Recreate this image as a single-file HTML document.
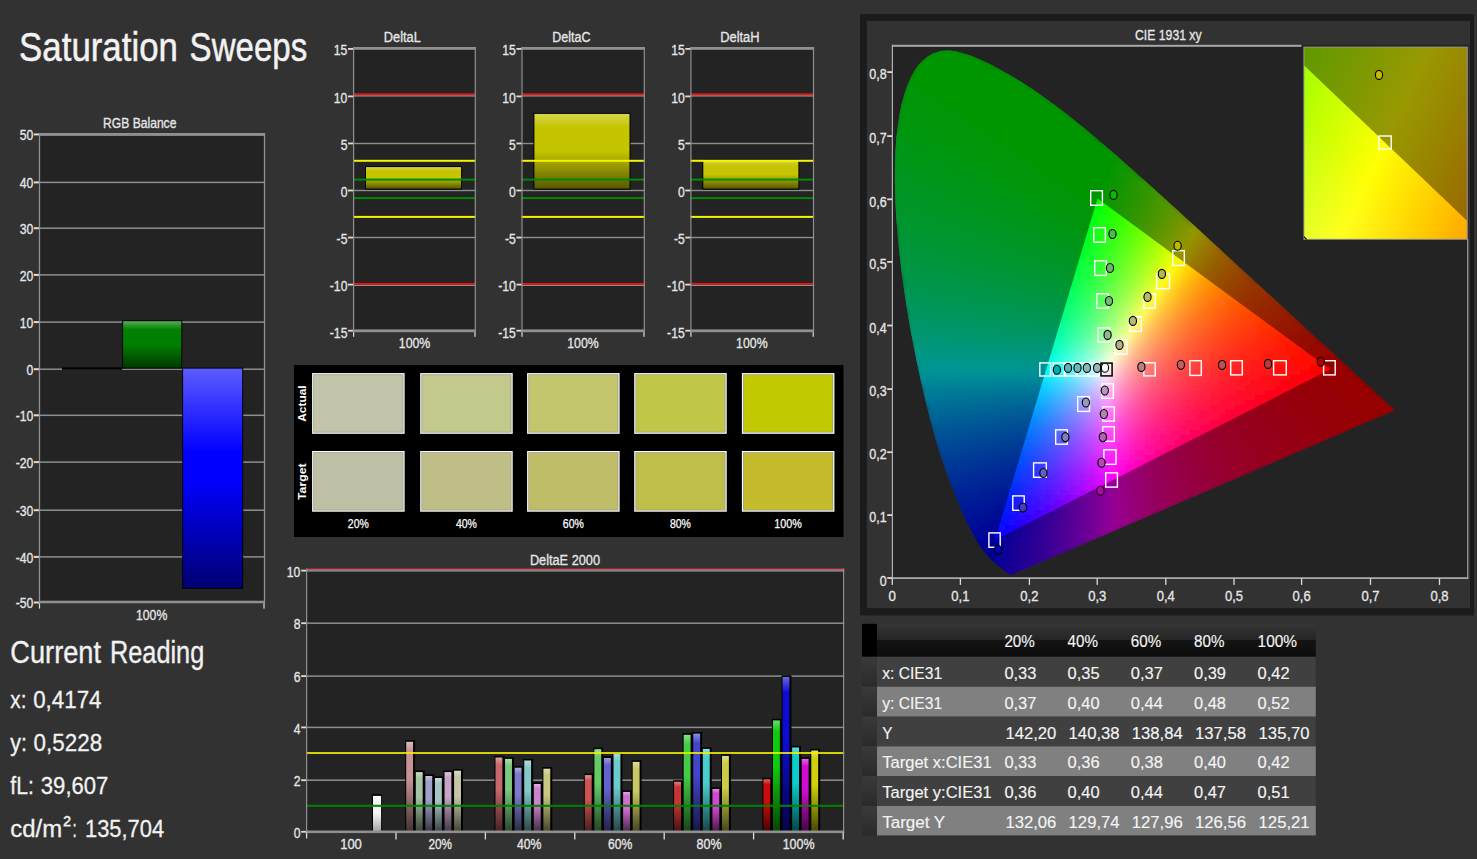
<!DOCTYPE html>
<html lang="en"><head><meta charset="utf-8"><title>Saturation Sweeps</title>
<style>html,body{margin:0;padding:0;background:#323232;overflow:hidden}svg{display:block}text{font-family:"Liberation Sans", sans-serif;white-space:pre}</style></head>
<body>
<svg width="1477" height="859" viewBox="0 0 1477 859">
<defs>
<linearGradient id="g1" x1="0" y1="0" x2="0" y2="1"><stop offset="0" stop-color="#59ac59"/><stop offset="0.18" stop-color="#008000"/><stop offset="0.5" stop-color="#008000"/><stop offset="1" stop-color="#003a00"/></linearGradient>
<linearGradient id="g2" x1="0" y1="0" x2="0" y2="1"><stop offset="0" stop-color="#5c5cff"/><stop offset="0.38" stop-color="#0000ff"/><stop offset="0.5" stop-color="#0000ff"/><stop offset="1" stop-color="#000073"/></linearGradient>
<linearGradient id="g3" x1="0" y1="0" x2="0" y2="1"><stop offset="0" stop-color="#d6d64c"/><stop offset="0.18" stop-color="#c4c400"/><stop offset="0.5" stop-color="#c4c400"/><stop offset="1" stop-color="#585800"/></linearGradient>
<linearGradient id="g4" x1="0" y1="0" x2="0" y2="1"><stop offset="0" stop-color="#d6d64c"/><stop offset="0.18" stop-color="#c4c400"/><stop offset="0.5" stop-color="#c4c400"/><stop offset="1" stop-color="#585800"/></linearGradient>
<linearGradient id="g5" x1="0" y1="0" x2="0" y2="1"><stop offset="0" stop-color="#d6d64c"/><stop offset="0.18" stop-color="#c4c400"/><stop offset="0.5" stop-color="#c4c400"/><stop offset="1" stop-color="#585800"/></linearGradient>
<linearGradient id="g6" x1="0" y1="0" x2="0" y2="1"><stop offset="0" stop-color="#f7f7f7"/><stop offset="0.1" stop-color="#f4f4f4"/><stop offset="0.5" stop-color="#f4f4f4"/><stop offset="1" stop-color="#a1a1a1"/></linearGradient>
<linearGradient id="g7" x1="0" y1="0" x2="0" y2="1"><stop offset="0" stop-color="#dcbbbb"/><stop offset="0.1" stop-color="#c69292"/><stop offset="0.42" stop-color="#c69292"/><stop offset="1" stop-color="#433232"/></linearGradient>
<linearGradient id="g8" x1="0" y1="0" x2="0" y2="1"><stop offset="0" stop-color="#c7dcc7"/><stop offset="0.1" stop-color="#a4c6a4"/><stop offset="0.42" stop-color="#a4c6a4"/><stop offset="1" stop-color="#384338"/></linearGradient>
<linearGradient id="g9" x1="0" y1="0" x2="0" y2="1"><stop offset="0" stop-color="#c4c4dd"/><stop offset="0.1" stop-color="#a0a0c8"/><stop offset="0.42" stop-color="#a0a0c8"/><stop offset="1" stop-color="#363644"/></linearGradient>
<linearGradient id="g10" x1="0" y1="0" x2="0" y2="1"><stop offset="0" stop-color="#c8dcdc"/><stop offset="0.1" stop-color="#a6c6c6"/><stop offset="0.42" stop-color="#a6c6c6"/><stop offset="1" stop-color="#384343"/></linearGradient>
<linearGradient id="g11" x1="0" y1="0" x2="0" y2="1"><stop offset="0" stop-color="#dcc7dc"/><stop offset="0.1" stop-color="#c6a4c6"/><stop offset="0.42" stop-color="#c6a4c6"/><stop offset="1" stop-color="#433843"/></linearGradient>
<linearGradient id="g12" x1="0" y1="0" x2="0" y2="1"><stop offset="0" stop-color="#dcdcc8"/><stop offset="0.1" stop-color="#c6c6a6"/><stop offset="0.42" stop-color="#c6c6a6"/><stop offset="1" stop-color="#434338"/></linearGradient>
<linearGradient id="g13" x1="0" y1="0" x2="0" y2="1"><stop offset="0" stop-color="#dda1a1"/><stop offset="0.1" stop-color="#c86868"/><stop offset="0.42" stop-color="#c86868"/><stop offset="1" stop-color="#442323"/></linearGradient>
<linearGradient id="g14" x1="0" y1="0" x2="0" y2="1"><stop offset="0" stop-color="#aeddae"/><stop offset="0.1" stop-color="#7cc87c"/><stop offset="0.42" stop-color="#7cc87c"/><stop offset="1" stop-color="#2a442a"/></linearGradient>
<linearGradient id="g15" x1="0" y1="0" x2="0" y2="1"><stop offset="0" stop-color="#aeaedf"/><stop offset="0.1" stop-color="#7c7ccc"/><stop offset="0.42" stop-color="#7c7ccc"/><stop offset="1" stop-color="#2a2a45"/></linearGradient>
<linearGradient id="g16" x1="0" y1="0" x2="0" y2="1"><stop offset="0" stop-color="#b2dede"/><stop offset="0.1" stop-color="#82caca"/><stop offset="0.42" stop-color="#82caca"/><stop offset="1" stop-color="#2c4545"/></linearGradient>
<linearGradient id="g17" x1="0" y1="0" x2="0" y2="1"><stop offset="0" stop-color="#dfb2df"/><stop offset="0.1" stop-color="#cc82cc"/><stop offset="0.42" stop-color="#cc82cc"/><stop offset="1" stop-color="#452c45"/></linearGradient>
<linearGradient id="g18" x1="0" y1="0" x2="0" y2="1"><stop offset="0" stop-color="#ddddb0"/><stop offset="0.1" stop-color="#c8c880"/><stop offset="0.42" stop-color="#c8c880"/><stop offset="1" stop-color="#44442c"/></linearGradient>
<linearGradient id="g19" x1="0" y1="0" x2="0" y2="1"><stop offset="0" stop-color="#df9595"/><stop offset="0.1" stop-color="#cc5454"/><stop offset="0.42" stop-color="#cc5454"/><stop offset="1" stop-color="#451d1d"/></linearGradient>
<linearGradient id="g20" x1="0" y1="0" x2="0" y2="1"><stop offset="0" stop-color="#9fdf9f"/><stop offset="0.1" stop-color="#64cc64"/><stop offset="0.42" stop-color="#64cc64"/><stop offset="1" stop-color="#224522"/></linearGradient>
<linearGradient id="g21" x1="0" y1="0" x2="0" y2="1"><stop offset="0" stop-color="#9e9edf"/><stop offset="0.1" stop-color="#6262cc"/><stop offset="0.42" stop-color="#6262cc"/><stop offset="1" stop-color="#212145"/></linearGradient>
<linearGradient id="g22" x1="0" y1="0" x2="0" y2="1"><stop offset="0" stop-color="#a4dfdf"/><stop offset="0.1" stop-color="#6ccccc"/><stop offset="0.42" stop-color="#6ccccc"/><stop offset="1" stop-color="#254545"/></linearGradient>
<linearGradient id="g23" x1="0" y1="0" x2="0" y2="1"><stop offset="0" stop-color="#e2a5e2"/><stop offset="0.1" stop-color="#d06ed0"/><stop offset="0.42" stop-color="#d06ed0"/><stop offset="1" stop-color="#472547"/></linearGradient>
<linearGradient id="g24" x1="0" y1="0" x2="0" y2="1"><stop offset="0" stop-color="#dddd9f"/><stop offset="0.1" stop-color="#c8c864"/><stop offset="0.42" stop-color="#c8c864"/><stop offset="1" stop-color="#444422"/></linearGradient>
<linearGradient id="g25" x1="0" y1="0" x2="0" y2="1"><stop offset="0" stop-color="#df8181"/><stop offset="0.1" stop-color="#cc3434"/><stop offset="0.42" stop-color="#cc3434"/><stop offset="1" stop-color="#451212"/></linearGradient>
<linearGradient id="g26" x1="0" y1="0" x2="0" y2="1"><stop offset="0" stop-color="#8bdf8b"/><stop offset="0.1" stop-color="#44cc44"/><stop offset="0.42" stop-color="#44cc44"/><stop offset="1" stop-color="#174517"/></linearGradient>
<linearGradient id="g27" x1="0" y1="0" x2="0" y2="1"><stop offset="0" stop-color="#8b8bdf"/><stop offset="0.1" stop-color="#4444cc"/><stop offset="0.42" stop-color="#4444cc"/><stop offset="1" stop-color="#171745"/></linearGradient>
<linearGradient id="g28" x1="0" y1="0" x2="0" y2="1"><stop offset="0" stop-color="#8edfdf"/><stop offset="0.1" stop-color="#48cccc"/><stop offset="0.42" stop-color="#48cccc"/><stop offset="1" stop-color="#184545"/></linearGradient>
<linearGradient id="g29" x1="0" y1="0" x2="0" y2="1"><stop offset="0" stop-color="#e28ee2"/><stop offset="0.1" stop-color="#d048d0"/><stop offset="0.42" stop-color="#d048d0"/><stop offset="1" stop-color="#471847"/></linearGradient>
<linearGradient id="g30" x1="0" y1="0" x2="0" y2="1"><stop offset="0" stop-color="#dfdf8e"/><stop offset="0.1" stop-color="#cccc48"/><stop offset="0.42" stop-color="#cccc48"/><stop offset="1" stop-color="#454518"/></linearGradient>
<linearGradient id="g31" x1="0" y1="0" x2="0" y2="1"><stop offset="0" stop-color="#df6868"/><stop offset="0.1" stop-color="#cc0c0c"/><stop offset="0.42" stop-color="#cc0c0c"/><stop offset="1" stop-color="#450404"/></linearGradient>
<linearGradient id="g32" x1="0" y1="0" x2="0" y2="1"><stop offset="0" stop-color="#68df68"/><stop offset="0.1" stop-color="#0ccc0c"/><stop offset="0.42" stop-color="#0ccc0c"/><stop offset="1" stop-color="#044504"/></linearGradient>
<linearGradient id="g33" x1="0" y1="0" x2="0" y2="1"><stop offset="0" stop-color="#6868e2"/><stop offset="0.1" stop-color="#0c0cd0"/><stop offset="0.42" stop-color="#0c0cd0"/><stop offset="1" stop-color="#040447"/></linearGradient>
<linearGradient id="g34" x1="0" y1="0" x2="0" y2="1"><stop offset="0" stop-color="#68dfdf"/><stop offset="0.1" stop-color="#0ccccc"/><stop offset="0.42" stop-color="#0ccccc"/><stop offset="1" stop-color="#044545"/></linearGradient>
<linearGradient id="g35" x1="0" y1="0" x2="0" y2="1"><stop offset="0" stop-color="#e268e2"/><stop offset="0.1" stop-color="#d00cd0"/><stop offset="0.42" stop-color="#d00cd0"/><stop offset="1" stop-color="#470447"/></linearGradient>
<linearGradient id="g36" x1="0" y1="0" x2="0" y2="1"><stop offset="0" stop-color="#e2e268"/><stop offset="0.1" stop-color="#d0d00c"/><stop offset="0.42" stop-color="#d0d00c"/><stop offset="1" stop-color="#474704"/></linearGradient>
<clipPath id="locus"><path d="M1011.39 574.86L1010.15 574.96L1008.95 574.45L1007.81 573.64L1006.75 572.83L1005.83 572.06L1004.76 571.13L1003.49 570.08L1002.5 569.28L1001.37 568.37L1000.12 567.35L998.73 566.23L997.22 565L995.57 563.62L993.76 562.04L992.8 561.16L991.8 560.22L990.77 559.22L989.71 558.15L988.6 557L987.46 555.74L986.26 554.35L984.98 552.78L983.62 551.01L982.16 548.99L980.59 546.73L978.94 544.22L977.2 541.45L975.38 538.43L973.49 535.11L971.51 531.47L969.44 527.48L967.26 523.09L964.98 518.26L962.6 512.96L960.1 507.18L957.49 500.89L954.74 494.09L951.86 486.75L948.85 478.81L945.73 470.24L942.53 461L939.29 451.08L936.07 440.5L932.87 429.25L929.69 417.34L926.52 404.75L923.35 391.49L920.18 377.57L917.06 363.08L914.02 348.1L911.11 332.72L908.35 317.05L905.78 301.21L903.43 285.27L901.32 269.31L899.47 253.37L897.89 237.56L896.6 221.97L895.63 206.77L895.02 192.01L894.79 177.75L894.94 163.96L895.48 150.63L896.41 137.84L897.76 125.69L899.55 114.26L901.79 103.66L904.45 93.9L907.52 85.04L910.95 77.15L914.75 70.31L918.87 64.56L923.3 59.9L927.99 56.25L932.88 53.55L937.93 51.75L943.12 50.79L948.42 50.6L953.82 51.11L959.29 52.18L964.82 53.71L970.39 55.59L975.99 57.76L981.59 60.19L987.17 62.82L992.69 65.59L998.13 68.45L1003.47 71.38L1008.74 74.36L1013.95 77.42L1019.11 80.55L1024.23 83.78L1029.31 87.08L1034.36 90.46L1039.38 93.91L1044.38 97.44L1049.36 101.04L1054.33 104.71L1059.29 108.45L1064.23 112.24L1069.17 116.1L1074.09 120.01L1079 123.97L1083.91 127.98L1088.81 132.03L1093.7 136.12L1098.6 140.25L1103.49 144.42L1108.39 148.63L1113.28 152.86L1118.17 157.12L1123.06 161.41L1127.95 165.72L1132.84 170.06L1137.73 174.41L1142.62 178.78L1147.5 183.16L1152.39 187.55L1157.27 191.95L1162.14 196.36L1167.01 200.77L1171.88 205.19L1176.73 209.61L1181.58 214.03L1186.41 218.44L1191.23 222.85L1196.04 227.25L1200.83 231.65L1205.6 236.03L1210.35 240.4L1215.08 244.75L1219.78 249.08L1224.46 253.38L1229.11 257.67L1233.72 261.92L1238.3 266.14L1242.84 270.33L1247.35 274.48L1251.81 278.59L1256.23 282.66L1260.61 286.68L1264.93 290.66L1269.21 294.59L1273.42 298.46L1277.58 302.28L1281.67 306.05L1285.7 309.76L1289.67 313.42L1293.57 317.01L1297.38 320.53L1301.1 323.97L1304.71 327.3L1308.2 330.51L1311.58 333.62L1314.86 336.65L1318.06 339.59L1321.19 342.47L1324.26 345.3L1327.26 348.05L1330.17 350.73L1332.98 353.32L1335.69 355.81L1338.29 358.19L1340.78 360.48L1343.17 362.67L1345.47 364.78L1347.68 366.81L1349.81 368.76L1351.85 370.64L1353.81 372.44L1355.68 374.17L1357.47 375.82L1359.19 377.4L1360.82 378.91L1362.38 380.35L1363.87 381.73L1365.29 383.04L1366.65 384.28L1367.95 385.48L1369.19 386.62L1370.38 387.71L1371.51 388.75L1372.6 389.75L1373.64 390.7L1374.63 391.62L1375.59 392.5L1376.52 393.35L1377.41 394.18L1379.12 395.75L1380.7 397.21L1382.15 398.55L1383.49 399.79L1384.72 400.92L1385.84 401.96L1386.85 402.89L1387.74 403.7L1388.88 404.74L1389.86 405.66L1390.95 406.66L1391.94 407.58L1392.87 408.43L1393.77 409.27L1394.66 410.08L1394.83 410.24Z"/></clipPath>
<filter id="blr" x="-5%" y="-5%" width="110%" height="110%"><feGaussianBlur stdDeviation="3"/></filter>
<linearGradient id="ins" gradientUnits="userSpaceOnUse" x1="1280.6" y1="94" x2="1489" y2="191.4"><stop offset="0" stop-color="#9cff00"/><stop offset="0.5" stop-color="#ffff04"/><stop offset="0.78" stop-color="#ffd000"/><stop offset="1" stop-color="#ffa800"/></linearGradient>
<linearGradient id="ins2" gradientUnits="userSpaceOnUse" x1="1304" y1="240" x2="1372" y2="176"><stop offset="0" stop-color="#fff" stop-opacity="0.16"/><stop offset="1" stop-color="#fff" stop-opacity="0"/></linearGradient>
<linearGradient id="g37" x1="0" y1="0" x2="0" y2="1"><stop offset="0" stop-color="#363636"/><stop offset="0.5" stop-color="#242424"/><stop offset="0.5" stop-color="#141414"/><stop offset="1" stop-color="#0c0c0c"/></linearGradient>
<linearGradient id="g38" x1="0" y1="0" x2="0" y2="1"><stop offset="0" stop-color="#3a3a3a"/><stop offset="1" stop-color="#2a2a2a"/></linearGradient>
</defs>
<rect width="1477" height="859" fill="#323232"/>
<text y="60.6" font-size="41.3" fill="#f2f2f2" stroke="#f2f2f2" stroke-width="0.5"><tspan x="19.1" textLength="158.8" lengthAdjust="spacingAndGlyphs">Saturation</tspan> <tspan x="189.6" textLength="117.6" lengthAdjust="spacingAndGlyphs">Sweeps</tspan></text>
<text x="103.1" y="127.6" font-size="15.2" textLength="73.3" lengthAdjust="spacingAndGlyphs" fill="#e6e6e6" stroke="#e6e6e6" stroke-width="0.33">RGB Balance</text>
<rect x="39" y="133" width="226" height="470.3" fill="#232323"/>
<rect x="33.8" y="133.4" width="5.2" height="2" fill="#dcdcdc"/>
<text x="19.77" y="140.3" font-size="15.2" textLength="13.53" lengthAdjust="spacingAndGlyphs" fill="#e6e6e6" stroke="#e6e6e6" stroke-width="0.33">50</text>
<rect x="39" y="181.65" width="226" height="1.5" fill="#8e8e8e"/>
<rect x="33.8" y="181.4" width="5.2" height="2" fill="#dcdcdc"/>
<text x="19.77" y="188.3" font-size="15.2" textLength="13.53" lengthAdjust="spacingAndGlyphs" fill="#e6e6e6" stroke="#e6e6e6" stroke-width="0.33">40</text>
<rect x="39" y="227.45" width="226" height="1.5" fill="#8e8e8e"/>
<rect x="33.8" y="227.2" width="5.2" height="2" fill="#dcdcdc"/>
<text x="19.77" y="234.1" font-size="15.2" textLength="13.53" lengthAdjust="spacingAndGlyphs" fill="#e6e6e6" stroke="#e6e6e6" stroke-width="0.33">30</text>
<rect x="39" y="274.15" width="226" height="1.5" fill="#8e8e8e"/>
<rect x="33.8" y="273.9" width="5.2" height="2" fill="#dcdcdc"/>
<text x="19.77" y="280.8" font-size="15.2" textLength="13.53" lengthAdjust="spacingAndGlyphs" fill="#e6e6e6" stroke="#e6e6e6" stroke-width="0.33">20</text>
<rect x="39" y="321.35" width="226" height="1.5" fill="#8e8e8e"/>
<rect x="33.8" y="321.1" width="5.2" height="2" fill="#dcdcdc"/>
<text x="19.77" y="328" font-size="15.2" textLength="13.53" lengthAdjust="spacingAndGlyphs" fill="#e6e6e6" stroke="#e6e6e6" stroke-width="0.33">10</text>
<rect x="39" y="368.45" width="226" height="1.5" fill="#8e8e8e"/>
<rect x="33.8" y="368.2" width="5.2" height="2" fill="#dcdcdc"/>
<text x="26.54" y="375.1" font-size="15.2" textLength="6.76" lengthAdjust="spacingAndGlyphs" fill="#e6e6e6" stroke="#e6e6e6" stroke-width="0.33">0</text>
<rect x="39" y="414.55" width="226" height="1.5" fill="#8e8e8e"/>
<rect x="33.8" y="414.3" width="5.2" height="2" fill="#dcdcdc"/>
<text x="15.72" y="421.2" font-size="15.2" textLength="17.58" lengthAdjust="spacingAndGlyphs" fill="#e6e6e6" stroke="#e6e6e6" stroke-width="0.33">-10</text>
<rect x="39" y="461.35" width="226" height="1.5" fill="#8e8e8e"/>
<rect x="33.8" y="461.1" width="5.2" height="2" fill="#dcdcdc"/>
<text x="15.72" y="468" font-size="15.2" textLength="17.58" lengthAdjust="spacingAndGlyphs" fill="#e6e6e6" stroke="#e6e6e6" stroke-width="0.33">-20</text>
<rect x="39" y="509.45" width="226" height="1.5" fill="#8e8e8e"/>
<rect x="33.8" y="509.2" width="5.2" height="2" fill="#dcdcdc"/>
<text x="15.72" y="516.1" font-size="15.2" textLength="17.58" lengthAdjust="spacingAndGlyphs" fill="#e6e6e6" stroke="#e6e6e6" stroke-width="0.33">-30</text>
<rect x="39" y="556.15" width="226" height="1.5" fill="#8e8e8e"/>
<rect x="33.8" y="555.9" width="5.2" height="2" fill="#dcdcdc"/>
<text x="15.72" y="562.8" font-size="15.2" textLength="17.58" lengthAdjust="spacingAndGlyphs" fill="#e6e6e6" stroke="#e6e6e6" stroke-width="0.33">-40</text>
<rect x="33.8" y="601.5" width="5.2" height="2" fill="#dcdcdc"/>
<text x="15.72" y="608.4" font-size="15.2" textLength="17.58" lengthAdjust="spacingAndGlyphs" fill="#e6e6e6" stroke="#e6e6e6" stroke-width="0.33">-50</text>
<rect x="62" y="367.4" width="60.2" height="2.4" fill="#000"/>
<rect x="122.1" y="320.2" width="60.2" height="48.4" fill="#000"/>
<rect x="123.1" y="321.2" width="58.2" height="46.4" fill="url(#g1)"/>
<rect x="182.1" y="367.6" width="61.1" height="221.2" fill="#000"/>
<rect x="183.1" y="368.6" width="59.1" height="219.2" fill="url(#g2)"/>
<rect x="39" y="133" width="226" height="2.9" fill="#909090"/>
<rect x="39" y="600.7" width="226" height="2.6" fill="#909090"/>
<rect x="38.85" y="133" width="1.3" height="470.3" fill="#909090"/>
<rect x="263.85" y="133" width="1.3" height="470.3" fill="#909090"/>
<rect x="38.9" y="603.3" width="1.2" height="5.3" fill="#dcdcdc"/>
<rect x="263.4" y="603.3" width="1.2" height="5.3" fill="#dcdcdc"/>
<text x="136" y="620.1" font-size="15.2" textLength="31.3" lengthAdjust="spacingAndGlyphs" fill="#e6e6e6" stroke="#e6e6e6" stroke-width="0.33">100%</text>
<text y="662.7" font-size="31.4" fill="#f2f2f2" stroke="#f2f2f2" stroke-width="0.35"><tspan x="10.3" textLength="90.7" lengthAdjust="spacingAndGlyphs">Current</tspan> <tspan x="110" textLength="94.2" lengthAdjust="spacingAndGlyphs">Reading</tspan></text>
<text y="707.5" font-size="24.7" fill="#f2f2f2" stroke="#f2f2f2" stroke-width="0.3"><tspan x="10.3" textLength="16.1" lengthAdjust="spacingAndGlyphs">x:</tspan> <tspan x="33.2" textLength="68.3" lengthAdjust="spacingAndGlyphs">0,4174</tspan></text>
<text y="750.6" font-size="24.7" fill="#f2f2f2" stroke="#f2f2f2" stroke-width="0.3"><tspan x="10.3" textLength="16.7" lengthAdjust="spacingAndGlyphs">y:</tspan> <tspan x="33.6" textLength="68.5" lengthAdjust="spacingAndGlyphs">0,5228</tspan></text>
<text y="793.7" font-size="24.7" fill="#f2f2f2" stroke="#f2f2f2" stroke-width="0.3"><tspan x="10.3" textLength="23.5" lengthAdjust="spacingAndGlyphs">fL:</tspan> <tspan x="40.8" textLength="67.6" lengthAdjust="spacingAndGlyphs">39,607</tspan></text>
<text y="836.8" font-size="24.7" fill="#f2f2f2" stroke="#f2f2f2" stroke-width="0.3"><tspan x="10.3" textLength="51.9" lengthAdjust="spacingAndGlyphs">cd/m</tspan><tspan x="63.2" dy="-3.8" font-size="25" textLength="7.6" lengthAdjust="spacingAndGlyphs">²</tspan><tspan x="72.6" dy="3.8" textLength="4.2" lengthAdjust="spacingAndGlyphs">:</tspan> <tspan x="85" textLength="79.1" lengthAdjust="spacingAndGlyphs">135,704</tspan></text>
<text x="383.8" y="42" font-size="15.2" textLength="37" lengthAdjust="spacingAndGlyphs" fill="#e6e6e6" stroke="#e6e6e6" stroke-width="0.33">DeltaL</text>
<rect x="353" y="47" width="122.9" height="285.2" fill="#232323"/>
<rect x="353" y="95.2" width="122.9" height="1.4" fill="#8e8e8e"/>
<rect x="353" y="142.8" width="122.9" height="1.4" fill="#8e8e8e"/>
<rect x="353" y="189.8" width="122.9" height="1.4" fill="#8e8e8e"/>
<rect x="353" y="236.8" width="122.9" height="1.4" fill="#8e8e8e"/>
<rect x="353" y="284.6" width="122.9" height="1.4" fill="#8e8e8e"/>
<rect x="365" y="166.1" width="97.1" height="23.5" fill="#000"/>
<rect x="366" y="167.1" width="95.1" height="21.5" fill="url(#g3)"/>
<rect x="353" y="93.3" width="122.9" height="1.8" fill="#f01010"/>
<rect x="353" y="282.9" width="122.9" height="1.8" fill="#f01010"/>
<rect x="353" y="159.8" width="122.9" height="2" fill="#f4f400"/>
<rect x="353" y="215.9" width="122.9" height="2" fill="#f4f400"/>
<rect x="353" y="178.6" width="122.9" height="2" fill="#008a00"/>
<rect x="353" y="197.1" width="122.9" height="2" fill="#008a00"/>
<rect x="353" y="47" width="122.9" height="2.8" fill="#909090"/>
<rect x="353" y="329.4" width="122.9" height="2.8" fill="#909090"/>
<rect x="353" y="47" width="1.2" height="285.2" fill="#909090"/>
<rect x="474.7" y="47" width="1.2" height="285.2" fill="#909090"/>
<rect x="348" y="48" width="5" height="1.8" fill="#dcdcdc"/>
<text x="333.87" y="55.1" font-size="15.2" textLength="13.53" lengthAdjust="spacingAndGlyphs" fill="#e6e6e6" stroke="#e6e6e6" stroke-width="0.33">15</text>
<rect x="348" y="95.5" width="5" height="1.8" fill="#dcdcdc"/>
<text x="333.87" y="102.6" font-size="15.2" textLength="13.53" lengthAdjust="spacingAndGlyphs" fill="#e6e6e6" stroke="#e6e6e6" stroke-width="0.33">10</text>
<rect x="348" y="142.55" width="5" height="1.8" fill="#dcdcdc"/>
<text x="340.64" y="149.65" font-size="15.2" textLength="6.76" lengthAdjust="spacingAndGlyphs" fill="#e6e6e6" stroke="#e6e6e6" stroke-width="0.33">5</text>
<rect x="348" y="189.6" width="5" height="1.8" fill="#dcdcdc"/>
<text x="340.64" y="196.7" font-size="15.2" textLength="6.76" lengthAdjust="spacingAndGlyphs" fill="#e6e6e6" stroke="#e6e6e6" stroke-width="0.33">0</text>
<rect x="348" y="236.65" width="5" height="1.8" fill="#dcdcdc"/>
<text x="336.59" y="243.75" font-size="15.2" textLength="10.81" lengthAdjust="spacingAndGlyphs" fill="#e6e6e6" stroke="#e6e6e6" stroke-width="0.33">-5</text>
<rect x="348" y="283.7" width="5" height="1.8" fill="#dcdcdc"/>
<text x="329.82" y="290.8" font-size="15.2" textLength="17.58" lengthAdjust="spacingAndGlyphs" fill="#e6e6e6" stroke="#e6e6e6" stroke-width="0.33">-10</text>
<rect x="348" y="329.8" width="5" height="1.8" fill="#dcdcdc"/>
<text x="329.82" y="338.1" font-size="15.2" textLength="17.58" lengthAdjust="spacingAndGlyphs" fill="#e6e6e6" stroke="#e6e6e6" stroke-width="0.33">-15</text>
<rect x="353" y="332.2" width="1.2" height="4.6" fill="#dcdcdc"/>
<rect x="474.4" y="332.2" width="1.2" height="4.6" fill="#dcdcdc"/>
<text x="398.8" y="347.9" font-size="15.2" textLength="31.5" lengthAdjust="spacingAndGlyphs" fill="#e6e6e6" stroke="#e6e6e6" stroke-width="0.33">100%</text>
<text x="552.3" y="42" font-size="15.2" textLength="38.1" lengthAdjust="spacingAndGlyphs" fill="#e6e6e6" stroke="#e6e6e6" stroke-width="0.33">DeltaC</text>
<rect x="521.4" y="47" width="123.5" height="285.2" fill="#232323"/>
<rect x="521.4" y="95.2" width="123.5" height="1.4" fill="#8e8e8e"/>
<rect x="521.4" y="142.8" width="123.5" height="1.4" fill="#8e8e8e"/>
<rect x="521.4" y="189.8" width="123.5" height="1.4" fill="#8e8e8e"/>
<rect x="521.4" y="236.8" width="123.5" height="1.4" fill="#8e8e8e"/>
<rect x="521.4" y="284.6" width="123.5" height="1.4" fill="#8e8e8e"/>
<rect x="533.4" y="112.9" width="97.1" height="76.7" fill="#000"/>
<rect x="534.4" y="113.9" width="95.1" height="74.7" fill="url(#g4)"/>
<rect x="521.4" y="93.3" width="123.5" height="1.8" fill="#f01010"/>
<rect x="521.4" y="282.9" width="123.5" height="1.8" fill="#f01010"/>
<rect x="521.4" y="159.8" width="123.5" height="2" fill="#f4f400"/>
<rect x="521.4" y="215.9" width="123.5" height="2" fill="#f4f400"/>
<rect x="521.4" y="178.6" width="123.5" height="2" fill="#008a00"/>
<rect x="521.4" y="197.1" width="123.5" height="2" fill="#008a00"/>
<rect x="521.4" y="47" width="123.5" height="2.8" fill="#909090"/>
<rect x="521.4" y="329.4" width="123.5" height="2.8" fill="#909090"/>
<rect x="521.4" y="47" width="1.2" height="285.2" fill="#909090"/>
<rect x="643.7" y="47" width="1.2" height="285.2" fill="#909090"/>
<rect x="516.4" y="48" width="5" height="1.8" fill="#dcdcdc"/>
<text x="502.27" y="55.1" font-size="15.2" textLength="13.53" lengthAdjust="spacingAndGlyphs" fill="#e6e6e6" stroke="#e6e6e6" stroke-width="0.33">15</text>
<rect x="516.4" y="95.5" width="5" height="1.8" fill="#dcdcdc"/>
<text x="502.27" y="102.6" font-size="15.2" textLength="13.53" lengthAdjust="spacingAndGlyphs" fill="#e6e6e6" stroke="#e6e6e6" stroke-width="0.33">10</text>
<rect x="516.4" y="142.55" width="5" height="1.8" fill="#dcdcdc"/>
<text x="509.04" y="149.65" font-size="15.2" textLength="6.76" lengthAdjust="spacingAndGlyphs" fill="#e6e6e6" stroke="#e6e6e6" stroke-width="0.33">5</text>
<rect x="516.4" y="189.6" width="5" height="1.8" fill="#dcdcdc"/>
<text x="509.04" y="196.7" font-size="15.2" textLength="6.76" lengthAdjust="spacingAndGlyphs" fill="#e6e6e6" stroke="#e6e6e6" stroke-width="0.33">0</text>
<rect x="516.4" y="236.65" width="5" height="1.8" fill="#dcdcdc"/>
<text x="504.99" y="243.75" font-size="15.2" textLength="10.81" lengthAdjust="spacingAndGlyphs" fill="#e6e6e6" stroke="#e6e6e6" stroke-width="0.33">-5</text>
<rect x="516.4" y="283.7" width="5" height="1.8" fill="#dcdcdc"/>
<text x="498.22" y="290.8" font-size="15.2" textLength="17.58" lengthAdjust="spacingAndGlyphs" fill="#e6e6e6" stroke="#e6e6e6" stroke-width="0.33">-10</text>
<rect x="516.4" y="329.8" width="5" height="1.8" fill="#dcdcdc"/>
<text x="498.22" y="338.1" font-size="15.2" textLength="17.58" lengthAdjust="spacingAndGlyphs" fill="#e6e6e6" stroke="#e6e6e6" stroke-width="0.33">-15</text>
<rect x="521.4" y="332.2" width="1.2" height="4.6" fill="#dcdcdc"/>
<rect x="643.4" y="332.2" width="1.2" height="4.6" fill="#dcdcdc"/>
<text x="567.2" y="347.9" font-size="15.2" textLength="31.5" lengthAdjust="spacingAndGlyphs" fill="#e6e6e6" stroke="#e6e6e6" stroke-width="0.33">100%</text>
<text x="720.2" y="42" font-size="15.2" textLength="39.4" lengthAdjust="spacingAndGlyphs" fill="#e6e6e6" stroke="#e6e6e6" stroke-width="0.33">DeltaH</text>
<rect x="690.3" y="47" width="123.8" height="285.2" fill="#232323"/>
<rect x="690.3" y="95.2" width="123.8" height="1.4" fill="#8e8e8e"/>
<rect x="690.3" y="142.8" width="123.8" height="1.4" fill="#8e8e8e"/>
<rect x="690.3" y="189.8" width="123.8" height="1.4" fill="#8e8e8e"/>
<rect x="690.3" y="236.8" width="123.8" height="1.4" fill="#8e8e8e"/>
<rect x="690.3" y="284.6" width="123.8" height="1.4" fill="#8e8e8e"/>
<rect x="702.3" y="159.8" width="97.1" height="29.8" fill="#000"/>
<rect x="703.3" y="160.8" width="95.1" height="27.8" fill="url(#g5)"/>
<rect x="690.3" y="93.3" width="123.8" height="1.8" fill="#f01010"/>
<rect x="690.3" y="282.9" width="123.8" height="1.8" fill="#f01010"/>
<rect x="690.3" y="159.8" width="123.8" height="2" fill="#f4f400"/>
<rect x="690.3" y="215.9" width="123.8" height="2" fill="#f4f400"/>
<rect x="690.3" y="178.6" width="123.8" height="2" fill="#008a00"/>
<rect x="690.3" y="197.1" width="123.8" height="2" fill="#008a00"/>
<rect x="690.3" y="47" width="123.8" height="2.8" fill="#909090"/>
<rect x="690.3" y="329.4" width="123.8" height="2.8" fill="#909090"/>
<rect x="690.3" y="47" width="1.2" height="285.2" fill="#909090"/>
<rect x="812.9" y="47" width="1.2" height="285.2" fill="#909090"/>
<rect x="685.3" y="48" width="5" height="1.8" fill="#dcdcdc"/>
<text x="671.17" y="55.1" font-size="15.2" textLength="13.53" lengthAdjust="spacingAndGlyphs" fill="#e6e6e6" stroke="#e6e6e6" stroke-width="0.33">15</text>
<rect x="685.3" y="95.5" width="5" height="1.8" fill="#dcdcdc"/>
<text x="671.17" y="102.6" font-size="15.2" textLength="13.53" lengthAdjust="spacingAndGlyphs" fill="#e6e6e6" stroke="#e6e6e6" stroke-width="0.33">10</text>
<rect x="685.3" y="142.55" width="5" height="1.8" fill="#dcdcdc"/>
<text x="677.94" y="149.65" font-size="15.2" textLength="6.76" lengthAdjust="spacingAndGlyphs" fill="#e6e6e6" stroke="#e6e6e6" stroke-width="0.33">5</text>
<rect x="685.3" y="189.6" width="5" height="1.8" fill="#dcdcdc"/>
<text x="677.94" y="196.7" font-size="15.2" textLength="6.76" lengthAdjust="spacingAndGlyphs" fill="#e6e6e6" stroke="#e6e6e6" stroke-width="0.33">0</text>
<rect x="685.3" y="236.65" width="5" height="1.8" fill="#dcdcdc"/>
<text x="673.89" y="243.75" font-size="15.2" textLength="10.81" lengthAdjust="spacingAndGlyphs" fill="#e6e6e6" stroke="#e6e6e6" stroke-width="0.33">-5</text>
<rect x="685.3" y="283.7" width="5" height="1.8" fill="#dcdcdc"/>
<text x="667.12" y="290.8" font-size="15.2" textLength="17.58" lengthAdjust="spacingAndGlyphs" fill="#e6e6e6" stroke="#e6e6e6" stroke-width="0.33">-10</text>
<rect x="685.3" y="329.8" width="5" height="1.8" fill="#dcdcdc"/>
<text x="667.12" y="338.1" font-size="15.2" textLength="17.58" lengthAdjust="spacingAndGlyphs" fill="#e6e6e6" stroke="#e6e6e6" stroke-width="0.33">-15</text>
<rect x="690.3" y="332.2" width="1.2" height="4.6" fill="#dcdcdc"/>
<rect x="812.6" y="332.2" width="1.2" height="4.6" fill="#dcdcdc"/>
<text x="736.1" y="347.9" font-size="15.2" textLength="31.5" lengthAdjust="spacingAndGlyphs" fill="#e6e6e6" stroke="#e6e6e6" stroke-width="0.33">100%</text>
<rect x="294" y="365" width="549.5" height="172" fill="#000"/>
<rect x="312.1" y="373.1" width="92.5" height="60.7" fill="#ffffff"/>
<rect x="313.3" y="374.3" width="90.1" height="58.3" fill="#9a9a80"/>
<rect x="314.1" y="375.1" width="88.5" height="56.7" fill="#c2c5aa"/>
<rect x="312.1" y="451" width="92.5" height="60.7" fill="#ffffff"/>
<rect x="313.3" y="452.2" width="90.1" height="58.3" fill="#9a9a80"/>
<rect x="314.1" y="453" width="88.5" height="56.7" fill="#bfbfa5"/>
<text x="347.8" y="528" font-size="12.8" textLength="21" lengthAdjust="spacingAndGlyphs" fill="#ffffff" stroke="#fff" stroke-width="0.25">20%</text>
<rect x="420.2" y="373.1" width="92.5" height="60.7" fill="#ffffff"/>
<rect x="421.4" y="374.3" width="90.1" height="58.3" fill="#9a9a80"/>
<rect x="422.2" y="375.1" width="88.5" height="56.7" fill="#c3c88c"/>
<rect x="420.2" y="451" width="92.5" height="60.7" fill="#ffffff"/>
<rect x="421.4" y="452.2" width="90.1" height="58.3" fill="#9a9a80"/>
<rect x="422.2" y="453" width="88.5" height="56.7" fill="#c0be87"/>
<text x="455.9" y="528" font-size="12.8" textLength="21" lengthAdjust="spacingAndGlyphs" fill="#ffffff" stroke="#fff" stroke-width="0.25">40%</text>
<rect x="527.1" y="373.1" width="92.5" height="60.7" fill="#ffffff"/>
<rect x="528.3" y="374.3" width="90.1" height="58.3" fill="#9a9a80"/>
<rect x="529.1" y="375.1" width="88.5" height="56.7" fill="#c3c66c"/>
<rect x="527.1" y="451" width="92.5" height="60.7" fill="#ffffff"/>
<rect x="528.3" y="452.2" width="90.1" height="58.3" fill="#9a9a80"/>
<rect x="529.1" y="453" width="88.5" height="56.7" fill="#c0bd69"/>
<text x="562.8" y="528" font-size="12.8" textLength="21" lengthAdjust="spacingAndGlyphs" fill="#ffffff" stroke="#fff" stroke-width="0.25">60%</text>
<rect x="634.2" y="373.1" width="92.5" height="60.7" fill="#ffffff"/>
<rect x="635.4" y="374.3" width="90.1" height="58.3" fill="#9a9a80"/>
<rect x="636.2" y="375.1" width="88.5" height="56.7" fill="#c0c748"/>
<rect x="634.2" y="451" width="92.5" height="60.7" fill="#ffffff"/>
<rect x="635.4" y="452.2" width="90.1" height="58.3" fill="#9a9a80"/>
<rect x="636.2" y="453" width="88.5" height="56.7" fill="#c0be4a"/>
<text x="669.9" y="528" font-size="12.8" textLength="21" lengthAdjust="spacingAndGlyphs" fill="#ffffff" stroke="#fff" stroke-width="0.25">80%</text>
<rect x="741.9" y="373.1" width="92.5" height="60.7" fill="#ffffff"/>
<rect x="743.1" y="374.3" width="90.1" height="58.3" fill="#9a9a80"/>
<rect x="743.9" y="375.1" width="88.5" height="56.7" fill="#c3c900"/>
<rect x="741.9" y="451" width="92.5" height="60.7" fill="#ffffff"/>
<rect x="743.1" y="452.2" width="90.1" height="58.3" fill="#9a9a80"/>
<rect x="743.9" y="453" width="88.5" height="56.7" fill="#c4bc2c"/>
<text x="774.35" y="528" font-size="12.8" textLength="27.5" lengthAdjust="spacingAndGlyphs" fill="#ffffff" stroke="#fff" stroke-width="0.25">100%</text>
<text transform="translate(306.2 403.6) rotate(-90)" x="-18.15" y="0" font-size="11.4" font-weight="bold" textLength="36.3" lengthAdjust="spacingAndGlyphs" fill="#ffffff">Actual</text>
<text transform="translate(306.2 481.7) rotate(-90)" x="-18.25" y="0" font-size="11.4" font-weight="bold" textLength="36.5" lengthAdjust="spacingAndGlyphs" fill="#ffffff">Target</text>
<text x="529.9" y="564.5" font-size="15.2" textLength="70.1" lengthAdjust="spacingAndGlyphs" fill="#e6e6e6" stroke="#e6e6e6" stroke-width="0.33">DeltaE 2000</text>
<rect x="306" y="568.6" width="538.2" height="264.5" fill="#232323"/>
<rect x="306" y="779.45" width="538.2" height="1.5" fill="#8e8e8e"/>
<rect x="306" y="726.65" width="538.2" height="1.5" fill="#8e8e8e"/>
<rect x="306" y="675.35" width="538.2" height="1.5" fill="#8e8e8e"/>
<rect x="306" y="622.45" width="538.2" height="1.5" fill="#8e8e8e"/>
<rect x="371.9" y="794.2" width="10.2" height="38" fill="#000"/>
<rect x="373" y="795.9" width="8.1" height="35.7" fill="url(#g6)"/>
<rect x="405.2" y="740.2" width="9.88" height="92" fill="#000"/>
<rect x="406.2" y="741.8" width="6.88" height="89.8" fill="url(#g7)"/>
<rect x="414.78" y="770.5" width="9.88" height="61.7" fill="#000"/>
<rect x="415.78" y="772.1" width="6.88" height="59.5" fill="url(#g8)"/>
<rect x="424.36" y="774.4" width="9.88" height="57.8" fill="#000"/>
<rect x="425.36" y="776" width="6.88" height="55.6" fill="url(#g9)"/>
<rect x="433.94" y="776.4" width="9.88" height="55.8" fill="#000"/>
<rect x="434.94" y="778" width="6.88" height="53.6" fill="url(#g10)"/>
<rect x="443.52" y="770.5" width="9.88" height="61.7" fill="#000"/>
<rect x="444.52" y="772.1" width="6.88" height="59.5" fill="url(#g11)"/>
<rect x="453.1" y="769.1" width="9.88" height="63.1" fill="#000"/>
<rect x="454.1" y="770.7" width="6.88" height="60.9" fill="url(#g12)"/>
<rect x="494.5" y="755.9" width="9.88" height="76.3" fill="#000"/>
<rect x="495.5" y="757.5" width="6.88" height="74.1" fill="url(#g13)"/>
<rect x="504.08" y="757.3" width="9.88" height="74.9" fill="#000"/>
<rect x="505.08" y="758.9" width="6.88" height="72.7" fill="url(#g14)"/>
<rect x="513.66" y="766.1" width="9.88" height="66.1" fill="#000"/>
<rect x="514.66" y="767.7" width="6.88" height="63.9" fill="url(#g15)"/>
<rect x="523.24" y="758.9" width="9.88" height="73.3" fill="#000"/>
<rect x="524.24" y="760.5" width="6.88" height="71.1" fill="url(#g16)"/>
<rect x="532.82" y="782.4" width="9.88" height="49.8" fill="#000"/>
<rect x="533.82" y="784" width="6.88" height="47.6" fill="url(#g17)"/>
<rect x="542.4" y="767.1" width="9.88" height="65.1" fill="#000"/>
<rect x="543.4" y="768.7" width="6.88" height="62.9" fill="url(#g18)"/>
<rect x="583.8" y="773.5" width="9.88" height="58.7" fill="#000"/>
<rect x="584.8" y="775.1" width="6.88" height="56.5" fill="url(#g19)"/>
<rect x="593.38" y="747.6" width="9.88" height="84.6" fill="#000"/>
<rect x="594.38" y="749.2" width="6.88" height="82.4" fill="url(#g20)"/>
<rect x="602.96" y="756.4" width="9.88" height="75.8" fill="#000"/>
<rect x="603.96" y="758" width="6.88" height="73.6" fill="url(#g21)"/>
<rect x="612.54" y="752.2" width="9.88" height="80" fill="#000"/>
<rect x="613.54" y="753.8" width="6.88" height="77.8" fill="url(#g22)"/>
<rect x="622.12" y="790.4" width="9.88" height="41.8" fill="#000"/>
<rect x="623.12" y="792" width="6.88" height="39.6" fill="url(#g23)"/>
<rect x="631.7" y="760.3" width="9.88" height="71.9" fill="#000"/>
<rect x="632.7" y="761.9" width="6.88" height="69.7" fill="url(#g24)"/>
<rect x="673.1" y="780.2" width="9.88" height="52" fill="#000"/>
<rect x="674.1" y="781.8" width="6.88" height="49.8" fill="url(#g25)"/>
<rect x="682.68" y="733.2" width="9.88" height="99" fill="#000"/>
<rect x="683.68" y="734.8" width="6.88" height="96.8" fill="url(#g26)"/>
<rect x="692.26" y="732" width="9.88" height="100.2" fill="#000"/>
<rect x="693.26" y="733.6" width="6.88" height="98" fill="url(#g27)"/>
<rect x="701.84" y="747.3" width="9.88" height="84.9" fill="#000"/>
<rect x="702.84" y="748.9" width="6.88" height="82.7" fill="url(#g28)"/>
<rect x="711.42" y="787.4" width="9.88" height="44.8" fill="#000"/>
<rect x="712.42" y="789" width="6.88" height="42.6" fill="url(#g29)"/>
<rect x="721" y="754.3" width="9.88" height="77.9" fill="#000"/>
<rect x="722" y="755.9" width="6.88" height="75.7" fill="url(#g30)"/>
<rect x="762.4" y="777.7" width="9.88" height="54.5" fill="#000"/>
<rect x="763.4" y="779.3" width="6.88" height="52.3" fill="url(#g31)"/>
<rect x="771.98" y="718.8" width="9.88" height="113.4" fill="#000"/>
<rect x="772.98" y="720.4" width="6.88" height="111.2" fill="url(#g32)"/>
<rect x="781.56" y="675.3" width="9.88" height="156.9" fill="#000"/>
<rect x="782.56" y="676.9" width="6.88" height="154.7" fill="url(#g33)"/>
<rect x="791.14" y="745.9" width="9.88" height="86.3" fill="#000"/>
<rect x="792.14" y="747.5" width="6.88" height="84.1" fill="url(#g34)"/>
<rect x="800.72" y="757.3" width="9.88" height="74.9" fill="#000"/>
<rect x="801.72" y="758.9" width="6.88" height="72.7" fill="url(#g35)"/>
<rect x="810.3" y="748.9" width="9.88" height="83.3" fill="#000"/>
<rect x="811.3" y="750.5" width="6.88" height="81.1" fill="url(#g36)"/>
<rect x="306" y="752.15" width="538.2" height="1.7" fill="#f0f000"/>
<rect x="306" y="804.8" width="538.2" height="2" fill="#008400"/>
<rect x="306" y="568.6" width="538.2" height="1.5" fill="#d05050"/>
<rect x="306" y="570.1" width="538.2" height="1.5" fill="#909090"/>
<rect x="306" y="830.5" width="538.2" height="2.6" fill="#909090"/>
<rect x="306" y="568.6" width="1.2" height="264.5" fill="#909090"/>
<rect x="843" y="568.6" width="1.2" height="264.5" fill="#909090"/>
<rect x="301.2" y="830.9" width="4.8" height="1.8" fill="#dcdcdc"/>
<text x="293.64" y="837.9" font-size="15.2" textLength="6.76" lengthAdjust="spacingAndGlyphs" fill="#e6e6e6" stroke="#e6e6e6" stroke-width="0.33">0</text>
<rect x="301.2" y="779.3" width="4.8" height="1.8" fill="#dcdcdc"/>
<text x="293.64" y="786.3" font-size="15.2" textLength="6.76" lengthAdjust="spacingAndGlyphs" fill="#e6e6e6" stroke="#e6e6e6" stroke-width="0.33">2</text>
<rect x="301.2" y="726.5" width="4.8" height="1.8" fill="#dcdcdc"/>
<text x="293.64" y="733.5" font-size="15.2" textLength="6.76" lengthAdjust="spacingAndGlyphs" fill="#e6e6e6" stroke="#e6e6e6" stroke-width="0.33">4</text>
<rect x="301.2" y="675.2" width="4.8" height="1.8" fill="#dcdcdc"/>
<text x="293.64" y="682.2" font-size="15.2" textLength="6.76" lengthAdjust="spacingAndGlyphs" fill="#e6e6e6" stroke="#e6e6e6" stroke-width="0.33">6</text>
<rect x="301.2" y="622.3" width="4.8" height="1.8" fill="#dcdcdc"/>
<text x="293.64" y="629.3" font-size="15.2" textLength="6.76" lengthAdjust="spacingAndGlyphs" fill="#e6e6e6" stroke="#e6e6e6" stroke-width="0.33">8</text>
<rect x="301.2" y="569.7" width="4.8" height="1.8" fill="#dcdcdc"/>
<text x="286.87" y="576.7" font-size="15.2" textLength="13.53" lengthAdjust="spacingAndGlyphs" fill="#e6e6e6" stroke="#e6e6e6" stroke-width="0.33">10</text>
<rect x="305.95" y="832.6" width="1.3" height="5.9" fill="#dcdcdc"/>
<rect x="395.35" y="832.6" width="1.3" height="6.9" fill="#dcdcdc"/>
<rect x="484.75" y="832.6" width="1.3" height="6.9" fill="#dcdcdc"/>
<rect x="574.15" y="832.6" width="1.3" height="6.9" fill="#dcdcdc"/>
<rect x="663.55" y="832.6" width="1.3" height="6.9" fill="#dcdcdc"/>
<rect x="752.95" y="832.6" width="1.3" height="6.9" fill="#dcdcdc"/>
<rect x="842.55" y="832.6" width="1.3" height="6.9" fill="#dcdcdc"/>
<text x="340.2" y="848.6" font-size="15.2" textLength="21.6" lengthAdjust="spacingAndGlyphs" fill="#e6e6e6" stroke="#e6e6e6" stroke-width="0.33">100</text>
<text x="428.5" y="848.6" font-size="15.2" textLength="23.6" lengthAdjust="spacingAndGlyphs" fill="#e6e6e6" stroke="#e6e6e6" stroke-width="0.33">20%</text>
<text x="516.9" y="848.6" font-size="15.2" textLength="24.5" lengthAdjust="spacingAndGlyphs" fill="#e6e6e6" stroke="#e6e6e6" stroke-width="0.33">40%</text>
<text x="607.9" y="848.6" font-size="15.2" textLength="24.3" lengthAdjust="spacingAndGlyphs" fill="#e6e6e6" stroke="#e6e6e6" stroke-width="0.33">60%</text>
<text x="696.6" y="848.6" font-size="15.2" textLength="25" lengthAdjust="spacingAndGlyphs" fill="#e6e6e6" stroke="#e6e6e6" stroke-width="0.33">80%</text>
<text x="782.7" y="848.6" font-size="15.2" textLength="31.8" lengthAdjust="spacingAndGlyphs" fill="#e6e6e6" stroke="#e6e6e6" stroke-width="0.33">100%</text>
<rect x="860" y="14.2" width="614" height="601.2" fill="#1b1b1b"/>
<rect x="866.8" y="21" width="603.2" height="587.2" fill="#323232"/>
<text x="1135" y="40.3" font-size="15.2" textLength="66.6" lengthAdjust="spacingAndGlyphs" fill="#e6e6e6" stroke="#e6e6e6" stroke-width="0.33">CIE 1931 xy</text>
<rect x="892" y="44.8" width="576.3" height="534.2" fill="#232323"/>
<g clip-path="url(#locus)"><g filter="url(#blr)" shape-rendering="crispEdges">
<path fill="#00ff00" d="M935 45h25v5h-25z"/>
<path fill="#00ff00" d="M925 50h50v5h-50z"/>
<path fill="#00ff00" d="M920 55h65v5h-65z"/>
<path fill="#00ff00" d="M915 60h80v5h-80z"/>
<path fill="#00ff02" d="M910 65h5v5h-5z"/>
<path fill="#00ff00" d="M915 65h90v5h-90z"/>
<path fill="#00ff03" d="M910 70h5v5h-5z"/>
<path fill="#00ff02" d="M915 70h5v5h-5z"/>
<path fill="#00ff01" d="M920 70h5v5h-5z"/>
<path fill="#00ff00" d="M925 70h90v5h-90z"/>
<path fill="#00ff06" d="M905 75h5v5h-5z"/>
<path fill="#00ff05" d="M910 75h5v5h-5z"/>
<path fill="#00ff04" d="M915 75h5v5h-5z"/>
<path fill="#00ff03" d="M920 75h5v5h-5z"/>
<path fill="#00ff01" d="M925 75h5v5h-5z"/>
<path fill="#00ff00" d="M930 75h95v5h-95z"/>
<path fill="#00ff08" d="M905 80h5v5h-5z"/>
<path fill="#00ff07" d="M910 80h5v5h-5z"/>
<path fill="#00ff06" d="M915 80h5v5h-5z"/>
<path fill="#00ff04" d="M920 80h5v5h-5z"/>
<path fill="#00ff03" d="M925 80h5v5h-5z"/>
<path fill="#00ff02" d="M930 80h5v5h-5z"/>
<path fill="#00ff00" d="M935 80h95v5h-95z"/>
<path fill="#00ff0b" d="M900 85h5v5h-5z"/>
<path fill="#00ff0a" d="M905 85h5v5h-5z"/>
<path fill="#00ff09" d="M910 85h5v5h-5z"/>
<path fill="#00ff07" d="M915 85h5v5h-5z"/>
<path fill="#00ff06" d="M920 85h5v5h-5z"/>
<path fill="#00ff05" d="M925 85h5v5h-5z"/>
<path fill="#00ff04" d="M930 85h5v5h-5z"/>
<path fill="#00ff02" d="M935 85h5v5h-5z"/>
<path fill="#00ff01" d="M940 85h5v5h-5z"/>
<path fill="#00ff00" d="M945 85h95v5h-95z"/>
<path fill="#00ff0d" d="M900 90h5v5h-5z"/>
<path fill="#00ff0c" d="M905 90h5v5h-5z"/>
<path fill="#00ff0b" d="M910 90h5v5h-5z"/>
<path fill="#00ff09" d="M915 90h5v5h-5z"/>
<path fill="#00ff08" d="M920 90h5v5h-5z"/>
<path fill="#00ff07" d="M925 90h5v5h-5z"/>
<path fill="#00ff05" d="M930 90h5v5h-5z"/>
<path fill="#00ff04" d="M935 90h5v5h-5z"/>
<path fill="#00ff03" d="M940 90h5v5h-5z"/>
<path fill="#00ff01" d="M945 90h5v5h-5z"/>
<path fill="#00ff00" d="M950 90h95v5h-95z"/>
<path fill="#00ff0f" d="M900 95h5v5h-5z"/>
<path fill="#00ff0e" d="M905 95h5v5h-5z"/>
<path fill="#00ff0d" d="M910 95h5v5h-5z"/>
<path fill="#00ff0b" d="M915 95h5v5h-5z"/>
<path fill="#00ff0a" d="M920 95h5v5h-5z"/>
<path fill="#00ff09" d="M925 95h5v5h-5z"/>
<path fill="#00ff07" d="M930 95h5v5h-5z"/>
<path fill="#00ff06" d="M935 95h5v5h-5z"/>
<path fill="#00ff05" d="M940 95h5v5h-5z"/>
<path fill="#00ff03" d="M945 95h5v5h-5z"/>
<path fill="#00ff02" d="M950 95h5v5h-5z"/>
<path fill="#00ff01" d="M955 95h5v5h-5z"/>
<path fill="#00ff00" d="M960 95h90v5h-90z"/>
<path fill="#00ff12" d="M895 100h5v5h-5z"/>
<path fill="#00ff11" d="M900 100h5v5h-5z"/>
<path fill="#00ff10" d="M905 100h5v5h-5z"/>
<path fill="#00ff0f" d="M910 100h5v5h-5z"/>
<path fill="#00ff0d" d="M915 100h5v5h-5z"/>
<path fill="#00ff0c" d="M920 100h5v5h-5z"/>
<path fill="#00ff0b" d="M925 100h5v5h-5z"/>
<path fill="#00ff09" d="M930 100h5v5h-5z"/>
<path fill="#00ff08" d="M935 100h5v5h-5z"/>
<path fill="#00ff07" d="M940 100h5v5h-5z"/>
<path fill="#00ff05" d="M945 100h5v5h-5z"/>
<path fill="#00ff04" d="M950 100h5v5h-5z"/>
<path fill="#00ff03" d="M955 100h5v5h-5z"/>
<path fill="#00ff01" d="M960 100h5v5h-5z"/>
<path fill="#00ff00" d="M965 100h95v5h-95z"/>
<path fill="#00ff14" d="M895 105h5v5h-5z"/>
<path fill="#00ff13" d="M900 105h5v5h-5z"/>
<path fill="#00ff12" d="M905 105h5v5h-5z"/>
<path fill="#00ff11" d="M910 105h5v5h-5z"/>
<path fill="#00ff0f" d="M915 105h5v5h-5z"/>
<path fill="#00ff0e" d="M920 105h5v5h-5z"/>
<path fill="#00ff0d" d="M925 105h5v5h-5z"/>
<path fill="#00ff0b" d="M930 105h5v5h-5z"/>
<path fill="#00ff0a" d="M935 105h5v5h-5z"/>
<path fill="#00ff09" d="M940 105h5v5h-5z"/>
<path fill="#00ff07" d="M945 105h5v5h-5z"/>
<path fill="#00ff06" d="M950 105h5v5h-5z"/>
<path fill="#00ff05" d="M955 105h5v5h-5z"/>
<path fill="#00ff03" d="M960 105h5v5h-5z"/>
<path fill="#00ff02" d="M965 105h5v5h-5z"/>
<path fill="#00ff00" d="M970 105h95v5h-95z"/>
<path fill="#00ff16" d="M895 110h5v5h-5z"/>
<path fill="#00ff15" d="M900 110h5v5h-5z"/>
<path fill="#00ff14" d="M905 110h5v5h-5z"/>
<path fill="#00ff13" d="M910 110h5v5h-5z"/>
<path fill="#00ff11" d="M915 110h5v5h-5z"/>
<path fill="#00ff10" d="M920 110h5v5h-5z"/>
<path fill="#00ff0f" d="M925 110h5v5h-5z"/>
<path fill="#00ff0d" d="M930 110h5v5h-5z"/>
<path fill="#00ff0c" d="M935 110h5v5h-5z"/>
<path fill="#00ff0b" d="M940 110h5v5h-5z"/>
<path fill="#00ff09" d="M945 110h5v5h-5z"/>
<path fill="#00ff08" d="M950 110h5v5h-5z"/>
<path fill="#00ff07" d="M955 110h5v5h-5z"/>
<path fill="#00ff05" d="M960 110h5v5h-5z"/>
<path fill="#00ff04" d="M965 110h5v5h-5z"/>
<path fill="#00ff02" d="M970 110h5v5h-5z"/>
<path fill="#00ff01" d="M975 110h5v5h-5z"/>
<path fill="#00ff00" d="M980 110h90v5h-90z"/>
<path fill="#00ff18" d="M895 115h5v5h-5z"/>
<path fill="#00ff17" d="M900 115h5v5h-5z"/>
<path fill="#00ff16" d="M905 115h5v5h-5z"/>
<path fill="#00ff15" d="M910 115h5v5h-5z"/>
<path fill="#00ff13" d="M915 115h5v5h-5z"/>
<path fill="#00ff12" d="M920 115h5v5h-5z"/>
<path fill="#00ff11" d="M925 115h5v5h-5z"/>
<path fill="#00ff0f" d="M930 115h5v5h-5z"/>
<path fill="#00ff0e" d="M935 115h5v5h-5z"/>
<path fill="#00ff0d" d="M940 115h5v5h-5z"/>
<path fill="#00ff0b" d="M945 115h5v5h-5z"/>
<path fill="#00ff0a" d="M950 115h5v5h-5z"/>
<path fill="#00ff09" d="M955 115h5v5h-5z"/>
<path fill="#00ff07" d="M960 115h5v5h-5z"/>
<path fill="#00ff06" d="M965 115h5v5h-5z"/>
<path fill="#00ff04" d="M970 115h5v5h-5z"/>
<path fill="#00ff03" d="M975 115h5v5h-5z"/>
<path fill="#00ff01" d="M980 115h5v5h-5z"/>
<path fill="#00ff00" d="M985 115h95v5h-95z"/>
<path fill="#00ff1b" d="M895 120h5v5h-5z"/>
<path fill="#00ff19" d="M900 120h5v5h-5z"/>
<path fill="#00ff18" d="M905 120h5v5h-5z"/>
<path fill="#00ff17" d="M910 120h5v5h-5z"/>
<path fill="#00ff15" d="M915 120h5v5h-5z"/>
<path fill="#00ff14" d="M920 120h5v5h-5z"/>
<path fill="#00ff13" d="M925 120h5v5h-5z"/>
<path fill="#00ff12" d="M930 120h5v5h-5z"/>
<path fill="#00ff10" d="M935 120h5v5h-5z"/>
<path fill="#00ff0f" d="M940 120h5v5h-5z"/>
<path fill="#00ff0d" d="M945 120h5v5h-5z"/>
<path fill="#00ff0c" d="M950 120h5v5h-5z"/>
<path fill="#00ff0b" d="M955 120h5v5h-5z"/>
<path fill="#00ff09" d="M960 120h5v5h-5z"/>
<path fill="#00ff08" d="M965 120h5v5h-5z"/>
<path fill="#00ff06" d="M970 120h5v5h-5z"/>
<path fill="#00ff05" d="M975 120h5v5h-5z"/>
<path fill="#00ff03" d="M980 120h5v5h-5z"/>
<path fill="#00ff02" d="M985 120h5v5h-5z"/>
<path fill="#00ff00" d="M990 120h95v5h-95z"/>
<path fill="#00ff1d" d="M895 125h5v5h-5z"/>
<path fill="#00ff1b" d="M900 125h5v5h-5z"/>
<path fill="#00ff1a" d="M905 125h5v5h-5z"/>
<path fill="#00ff19" d="M910 125h5v5h-5z"/>
<path fill="#00ff18" d="M915 125h5v5h-5z"/>
<path fill="#00ff16" d="M920 125h5v5h-5z"/>
<path fill="#00ff15" d="M925 125h5v5h-5z"/>
<path fill="#00ff14" d="M930 125h5v5h-5z"/>
<path fill="#00ff12" d="M935 125h5v5h-5z"/>
<path fill="#00ff11" d="M940 125h5v5h-5z"/>
<path fill="#00ff10" d="M945 125h5v5h-5z"/>
<path fill="#00ff0e" d="M950 125h5v5h-5z"/>
<path fill="#00ff0d" d="M955 125h5v5h-5z"/>
<path fill="#00ff0b" d="M960 125h5v5h-5z"/>
<path fill="#00ff0a" d="M965 125h5v5h-5z"/>
<path fill="#00ff09" d="M970 125h5v5h-5z"/>
<path fill="#00ff07" d="M975 125h5v5h-5z"/>
<path fill="#00ff06" d="M980 125h5v5h-5z"/>
<path fill="#00ff04" d="M985 125h5v5h-5z"/>
<path fill="#00ff03" d="M990 125h5v5h-5z"/>
<path fill="#00ff01" d="M995 125h5v5h-5z"/>
<path fill="#00ff00" d="M1000 125h90v5h-90z"/>
<path fill="#00ff20" d="M890 130h5v5h-5z"/>
<path fill="#00ff1f" d="M895 130h5v5h-5z"/>
<path fill="#00ff1e" d="M900 130h5v5h-5z"/>
<path fill="#00ff1c" d="M905 130h5v5h-5z"/>
<path fill="#00ff1b" d="M910 130h5v5h-5z"/>
<path fill="#00ff1a" d="M915 130h5v5h-5z"/>
<path fill="#00ff19" d="M920 130h5v5h-5z"/>
<path fill="#00ff17" d="M925 130h5v5h-5z"/>
<path fill="#00ff16" d="M930 130h5v5h-5z"/>
<path fill="#00ff15" d="M935 130h5v5h-5z"/>
<path fill="#00ff13" d="M940 130h5v5h-5z"/>
<path fill="#00ff12" d="M945 130h5v5h-5z"/>
<path fill="#00ff10" d="M950 130h5v5h-5z"/>
<path fill="#00ff0f" d="M955 130h5v5h-5z"/>
<path fill="#00ff0e" d="M960 130h5v5h-5z"/>
<path fill="#00ff0c" d="M965 130h5v5h-5z"/>
<path fill="#00ff0b" d="M970 130h5v5h-5z"/>
<path fill="#00ff09" d="M975 130h5v5h-5z"/>
<path fill="#00ff08" d="M980 130h5v5h-5z"/>
<path fill="#00ff06" d="M985 130h5v5h-5z"/>
<path fill="#00ff05" d="M990 130h5v5h-5z"/>
<path fill="#00ff03" d="M995 130h5v5h-5z"/>
<path fill="#00ff02" d="M1000 130h5v5h-5z"/>
<path fill="#00ff00" d="M1005 130h90v5h-90z"/>
<path fill="#00ff22" d="M890 135h5v5h-5z"/>
<path fill="#00ff21" d="M895 135h5v5h-5z"/>
<path fill="#00ff20" d="M900 135h5v5h-5z"/>
<path fill="#00ff1f" d="M905 135h5v5h-5z"/>
<path fill="#00ff1d" d="M910 135h5v5h-5z"/>
<path fill="#00ff1c" d="M915 135h5v5h-5z"/>
<path fill="#00ff1b" d="M920 135h5v5h-5z"/>
<path fill="#00ff1a" d="M925 135h5v5h-5z"/>
<path fill="#00ff18" d="M930 135h5v5h-5z"/>
<path fill="#00ff17" d="M935 135h5v5h-5z"/>
<path fill="#00ff16" d="M940 135h5v5h-5z"/>
<path fill="#00ff14" d="M945 135h5v5h-5z"/>
<path fill="#00ff13" d="M950 135h5v5h-5z"/>
<path fill="#00ff11" d="M955 135h5v5h-5z"/>
<path fill="#00ff10" d="M960 135h5v5h-5z"/>
<path fill="#00ff0e" d="M965 135h5v5h-5z"/>
<path fill="#00ff0d" d="M970 135h5v5h-5z"/>
<path fill="#00ff0b" d="M975 135h5v5h-5z"/>
<path fill="#00ff0a" d="M980 135h5v5h-5z"/>
<path fill="#00ff08" d="M985 135h5v5h-5z"/>
<path fill="#00ff07" d="M990 135h5v5h-5z"/>
<path fill="#00ff05" d="M995 135h5v5h-5z"/>
<path fill="#00ff04" d="M1000 135h5v5h-5z"/>
<path fill="#00ff02" d="M1005 135h5v5h-5z"/>
<path fill="#00ff01" d="M1010 135h5v5h-5z"/>
<path fill="#00ff00" d="M1015 135h85v5h-85z"/>
<path fill="#00ff25" d="M890 140h5v5h-5z"/>
<path fill="#00ff24" d="M895 140h5v5h-5z"/>
<path fill="#00ff22" d="M900 140h5v5h-5z"/>
<path fill="#00ff21" d="M905 140h5v5h-5z"/>
<path fill="#00ff20" d="M910 140h5v5h-5z"/>
<path fill="#00ff1e" d="M915 140h5v5h-5z"/>
<path fill="#00ff1d" d="M920 140h5v5h-5z"/>
<path fill="#00ff1c" d="M925 140h5v5h-5z"/>
<path fill="#00ff1b" d="M930 140h5v5h-5z"/>
<path fill="#00ff19" d="M935 140h5v5h-5z"/>
<path fill="#00ff18" d="M940 140h5v5h-5z"/>
<path fill="#00ff16" d="M945 140h5v5h-5z"/>
<path fill="#00ff15" d="M950 140h5v5h-5z"/>
<path fill="#00ff14" d="M955 140h5v5h-5z"/>
<path fill="#00ff12" d="M960 140h5v5h-5z"/>
<path fill="#00ff11" d="M965 140h5v5h-5z"/>
<path fill="#00ff0f" d="M970 140h5v5h-5z"/>
<path fill="#00ff0e" d="M975 140h5v5h-5z"/>
<path fill="#00ff0c" d="M980 140h5v5h-5z"/>
<path fill="#00ff0b" d="M985 140h5v5h-5z"/>
<path fill="#00ff09" d="M990 140h5v5h-5z"/>
<path fill="#00ff08" d="M995 140h5v5h-5z"/>
<path fill="#00ff06" d="M1000 140h5v5h-5z"/>
<path fill="#00ff04" d="M1005 140h5v5h-5z"/>
<path fill="#00ff03" d="M1010 140h5v5h-5z"/>
<path fill="#00ff01" d="M1015 140h5v5h-5z"/>
<path fill="#00ff00" d="M1020 140h90v5h-90z"/>
<path fill="#00ff27" d="M890 145h5v5h-5z"/>
<path fill="#00ff26" d="M895 145h5v5h-5z"/>
<path fill="#00ff25" d="M900 145h5v5h-5z"/>
<path fill="#00ff23" d="M905 145h5v5h-5z"/>
<path fill="#00ff22" d="M910 145h5v5h-5z"/>
<path fill="#00ff21" d="M915 145h5v5h-5z"/>
<path fill="#00ff20" d="M920 145h5v5h-5z"/>
<path fill="#00ff1e" d="M925 145h5v5h-5z"/>
<path fill="#00ff1d" d="M930 145h5v5h-5z"/>
<path fill="#00ff1c" d="M935 145h5v5h-5z"/>
<path fill="#00ff1a" d="M940 145h5v5h-5z"/>
<path fill="#00ff19" d="M945 145h5v5h-5z"/>
<path fill="#00ff17" d="M950 145h5v5h-5z"/>
<path fill="#00ff16" d="M955 145h5v5h-5z"/>
<path fill="#00ff15" d="M960 145h5v5h-5z"/>
<path fill="#00ff13" d="M965 145h5v5h-5z"/>
<path fill="#00ff12" d="M970 145h5v5h-5z"/>
<path fill="#00ff10" d="M975 145h5v5h-5z"/>
<path fill="#00ff0f" d="M980 145h5v5h-5z"/>
<path fill="#00ff0d" d="M985 145h5v5h-5z"/>
<path fill="#00ff0c" d="M990 145h5v5h-5z"/>
<path fill="#00ff0a" d="M995 145h5v5h-5z"/>
<path fill="#00ff08" d="M1000 145h5v5h-5z"/>
<path fill="#00ff07" d="M1005 145h5v5h-5z"/>
<path fill="#00ff05" d="M1010 145h5v5h-5z"/>
<path fill="#00ff03" d="M1015 145h5v5h-5z"/>
<path fill="#00ff02" d="M1020 145h5v5h-5z"/>
<path fill="#00ff00" d="M1025 145h90v5h-90z"/>
<path fill="#00ff2a" d="M890 150h5v5h-5z"/>
<path fill="#00ff28" d="M895 150h5v5h-5z"/>
<path fill="#00ff27" d="M900 150h5v5h-5z"/>
<path fill="#00ff26" d="M905 150h5v5h-5z"/>
<path fill="#00ff25" d="M910 150h5v5h-5z"/>
<path fill="#00ff23" d="M915 150h5v5h-5z"/>
<path fill="#00ff22" d="M920 150h5v5h-5z"/>
<path fill="#00ff21" d="M925 150h5v5h-5z"/>
<path fill="#00ff1f" d="M930 150h5v5h-5z"/>
<path fill="#00ff1e" d="M935 150h5v5h-5z"/>
<path fill="#00ff1d" d="M940 150h5v5h-5z"/>
<path fill="#00ff1b" d="M945 150h5v5h-5z"/>
<path fill="#00ff1a" d="M950 150h5v5h-5z"/>
<path fill="#00ff18" d="M955 150h5v5h-5z"/>
<path fill="#00ff17" d="M960 150h5v5h-5z"/>
<path fill="#00ff16" d="M965 150h5v5h-5z"/>
<path fill="#00ff14" d="M970 150h5v5h-5z"/>
<path fill="#00ff13" d="M975 150h5v5h-5z"/>
<path fill="#00ff11" d="M980 150h5v5h-5z"/>
<path fill="#00ff10" d="M985 150h5v5h-5z"/>
<path fill="#00ff0e" d="M990 150h5v5h-5z"/>
<path fill="#00ff0c" d="M995 150h5v5h-5z"/>
<path fill="#00ff0b" d="M1000 150h5v5h-5z"/>
<path fill="#00ff09" d="M1005 150h5v5h-5z"/>
<path fill="#00ff08" d="M1010 150h5v5h-5z"/>
<path fill="#00ff06" d="M1015 150h5v5h-5z"/>
<path fill="#00ff04" d="M1020 150h5v5h-5z"/>
<path fill="#00ff02" d="M1025 150h5v5h-5z"/>
<path fill="#00ff01" d="M1030 150h5v5h-5z"/>
<path fill="#00ff00" d="M1035 150h75v5h-75z"/>
<path fill="#02ff00" d="M1110 150h5v5h-5z"/>
<path fill="#09ff00" d="M1115 150h5v5h-5z"/>
<path fill="#00ff2c" d="M890 155h5v5h-5z"/>
<path fill="#00ff2b" d="M895 155h5v5h-5z"/>
<path fill="#00ff2a" d="M900 155h5v5h-5z"/>
<path fill="#00ff28" d="M905 155h5v5h-5z"/>
<path fill="#00ff27" d="M910 155h5v5h-5z"/>
<path fill="#00ff26" d="M915 155h5v5h-5z"/>
<path fill="#00ff25" d="M920 155h5v5h-5z"/>
<path fill="#00ff23" d="M925 155h5v5h-5z"/>
<path fill="#00ff22" d="M930 155h5v5h-5z"/>
<path fill="#00ff20" d="M935 155h5v5h-5z"/>
<path fill="#00ff1f" d="M940 155h5v5h-5z"/>
<path fill="#00ff1e" d="M945 155h5v5h-5z"/>
<path fill="#00ff1c" d="M950 155h5v5h-5z"/>
<path fill="#00ff1b" d="M955 155h5v5h-5z"/>
<path fill="#00ff19" d="M960 155h5v5h-5z"/>
<path fill="#00ff18" d="M965 155h5v5h-5z"/>
<path fill="#00ff17" d="M970 155h5v5h-5z"/>
<path fill="#00ff15" d="M975 155h5v5h-5z"/>
<path fill="#00ff14" d="M980 155h5v5h-5z"/>
<path fill="#00ff12" d="M985 155h5v5h-5z"/>
<path fill="#00ff10" d="M990 155h5v5h-5z"/>
<path fill="#00ff0f" d="M995 155h5v5h-5z"/>
<path fill="#00ff0d" d="M1000 155h5v5h-5z"/>
<path fill="#00ff0c" d="M1005 155h5v5h-5z"/>
<path fill="#00ff0a" d="M1010 155h5v5h-5z"/>
<path fill="#00ff08" d="M1015 155h5v5h-5z"/>
<path fill="#00ff07" d="M1020 155h5v5h-5z"/>
<path fill="#00ff05" d="M1025 155h5v5h-5z"/>
<path fill="#00ff03" d="M1030 155h5v5h-5z"/>
<path fill="#00ff01" d="M1035 155h5v5h-5z"/>
<path fill="#00ff00" d="M1040 155h70v5h-70z"/>
<path fill="#04ff00" d="M1110 155h5v5h-5z"/>
<path fill="#0bff00" d="M1115 155h5v5h-5z"/>
<path fill="#13ff00" d="M1120 155h5v5h-5z"/>
<path fill="#00ff2f" d="M890 160h5v5h-5z"/>
<path fill="#00ff2d" d="M895 160h5v5h-5z"/>
<path fill="#00ff2c" d="M900 160h5v5h-5z"/>
<path fill="#00ff2b" d="M905 160h5v5h-5z"/>
<path fill="#00ff2a" d="M910 160h5v5h-5z"/>
<path fill="#00ff28" d="M915 160h5v5h-5z"/>
<path fill="#00ff27" d="M920 160h5v5h-5z"/>
<path fill="#00ff26" d="M925 160h5v5h-5z"/>
<path fill="#00ff24" d="M930 160h5v5h-5z"/>
<path fill="#00ff23" d="M935 160h5v5h-5z"/>
<path fill="#00ff22" d="M940 160h5v5h-5z"/>
<path fill="#00ff20" d="M945 160h5v5h-5z"/>
<path fill="#00ff1f" d="M950 160h5v5h-5z"/>
<path fill="#00ff1d" d="M955 160h5v5h-5z"/>
<path fill="#00ff1c" d="M960 160h5v5h-5z"/>
<path fill="#00ff1b" d="M965 160h5v5h-5z"/>
<path fill="#00ff19" d="M970 160h5v5h-5z"/>
<path fill="#00ff18" d="M975 160h5v5h-5z"/>
<path fill="#00ff16" d="M980 160h5v5h-5z"/>
<path fill="#00ff15" d="M985 160h5v5h-5z"/>
<path fill="#00ff13" d="M990 160h5v5h-5z"/>
<path fill="#00ff11" d="M995 160h5v5h-5z"/>
<path fill="#00ff10" d="M1000 160h5v5h-5z"/>
<path fill="#00ff0e" d="M1005 160h5v5h-5z"/>
<path fill="#00ff0c" d="M1010 160h5v5h-5z"/>
<path fill="#00ff0b" d="M1015 160h5v5h-5z"/>
<path fill="#00ff09" d="M1020 160h5v5h-5z"/>
<path fill="#00ff07" d="M1025 160h5v5h-5z"/>
<path fill="#00ff06" d="M1030 160h5v5h-5z"/>
<path fill="#00ff04" d="M1035 160h5v5h-5z"/>
<path fill="#00ff02" d="M1040 160h5v5h-5z"/>
<path fill="#00ff00" d="M1045 160h65v5h-65z"/>
<path fill="#06ff00" d="M1110 160h5v5h-5z"/>
<path fill="#0eff00" d="M1115 160h5v5h-5z"/>
<path fill="#16ff00" d="M1120 160h5v5h-5z"/>
<path fill="#1eff00" d="M1125 160h5v5h-5z"/>
<path fill="#00ff31" d="M890 165h5v5h-5z"/>
<path fill="#00ff30" d="M895 165h5v5h-5z"/>
<path fill="#00ff2f" d="M900 165h5v5h-5z"/>
<path fill="#00ff2e" d="M905 165h5v5h-5z"/>
<path fill="#00ff2c" d="M910 165h5v5h-5z"/>
<path fill="#00ff2b" d="M915 165h5v5h-5z"/>
<path fill="#00ff2a" d="M920 165h5v5h-5z"/>
<path fill="#00ff28" d="M925 165h5v5h-5z"/>
<path fill="#00ff27" d="M930 165h5v5h-5z"/>
<path fill="#00ff26" d="M935 165h5v5h-5z"/>
<path fill="#00ff24" d="M940 165h5v5h-5z"/>
<path fill="#00ff23" d="M945 165h5v5h-5z"/>
<path fill="#00ff21" d="M950 165h5v5h-5z"/>
<path fill="#00ff20" d="M955 165h5v5h-5z"/>
<path fill="#00ff1f" d="M960 165h5v5h-5z"/>
<path fill="#00ff1d" d="M965 165h5v5h-5z"/>
<path fill="#00ff1c" d="M970 165h5v5h-5z"/>
<path fill="#00ff1a" d="M975 165h5v5h-5z"/>
<path fill="#00ff19" d="M980 165h5v5h-5z"/>
<path fill="#00ff17" d="M985 165h5v5h-5z"/>
<path fill="#00ff16" d="M990 165h5v5h-5z"/>
<path fill="#00ff14" d="M995 165h5v5h-5z"/>
<path fill="#00ff12" d="M1000 165h5v5h-5z"/>
<path fill="#00ff11" d="M1005 165h5v5h-5z"/>
<path fill="#00ff0f" d="M1010 165h5v5h-5z"/>
<path fill="#00ff0d" d="M1015 165h5v5h-5z"/>
<path fill="#00ff0c" d="M1020 165h5v5h-5z"/>
<path fill="#00ff0a" d="M1025 165h5v5h-5z"/>
<path fill="#00ff08" d="M1030 165h5v5h-5z"/>
<path fill="#00ff06" d="M1035 165h5v5h-5z"/>
<path fill="#00ff05" d="M1040 165h5v5h-5z"/>
<path fill="#00ff03" d="M1045 165h5v5h-5z"/>
<path fill="#00ff01" d="M1050 165h5v5h-5z"/>
<path fill="#00ff00" d="M1055 165h50v5h-50z"/>
<path fill="#01ff00" d="M1105 165h5v5h-5z"/>
<path fill="#09ff00" d="M1110 165h5v5h-5z"/>
<path fill="#11ff00" d="M1115 165h5v5h-5z"/>
<path fill="#18ff00" d="M1120 165h5v5h-5z"/>
<path fill="#21ff00" d="M1125 165h5v5h-5z"/>
<path fill="#29ff00" d="M1130 165h5v5h-5z"/>
<path fill="#00ff34" d="M890 170h5v5h-5z"/>
<path fill="#00ff33" d="M895 170h5v5h-5z"/>
<path fill="#00ff31" d="M900 170h5v5h-5z"/>
<path fill="#00ff30" d="M905 170h5v5h-5z"/>
<path fill="#00ff2f" d="M910 170h5v5h-5z"/>
<path fill="#00ff2e" d="M915 170h5v5h-5z"/>
<path fill="#00ff2c" d="M920 170h5v5h-5z"/>
<path fill="#00ff2b" d="M925 170h5v5h-5z"/>
<path fill="#00ff2a" d="M930 170h5v5h-5z"/>
<path fill="#00ff28" d="M935 170h5v5h-5z"/>
<path fill="#00ff27" d="M940 170h5v5h-5z"/>
<path fill="#00ff26" d="M945 170h5v5h-5z"/>
<path fill="#00ff24" d="M950 170h5v5h-5z"/>
<path fill="#00ff23" d="M955 170h5v5h-5z"/>
<path fill="#00ff21" d="M960 170h5v5h-5z"/>
<path fill="#00ff20" d="M965 170h5v5h-5z"/>
<path fill="#00ff1e" d="M970 170h5v5h-5z"/>
<path fill="#00ff1d" d="M975 170h5v5h-5z"/>
<path fill="#00ff1b" d="M980 170h5v5h-5z"/>
<path fill="#00ff1a" d="M985 170h5v5h-5z"/>
<path fill="#00ff18" d="M990 170h5v5h-5z"/>
<path fill="#00ff17" d="M995 170h5v5h-5z"/>
<path fill="#00ff15" d="M1000 170h5v5h-5z"/>
<path fill="#00ff13" d="M1005 170h5v5h-5z"/>
<path fill="#00ff12" d="M1010 170h5v5h-5z"/>
<path fill="#00ff10" d="M1015 170h5v5h-5z"/>
<path fill="#00ff0e" d="M1020 170h5v5h-5z"/>
<path fill="#00ff0d" d="M1025 170h5v5h-5z"/>
<path fill="#00ff0b" d="M1030 170h5v5h-5z"/>
<path fill="#00ff09" d="M1035 170h5v5h-5z"/>
<path fill="#00ff07" d="M1040 170h5v5h-5z"/>
<path fill="#00ff05" d="M1045 170h5v5h-5z"/>
<path fill="#00ff04" d="M1050 170h5v5h-5z"/>
<path fill="#00ff02" d="M1055 170h5v5h-5z"/>
<path fill="#00ff00" d="M1060 170h45v5h-45z"/>
<path fill="#03ff00" d="M1105 170h5v5h-5z"/>
<path fill="#0bff00" d="M1110 170h5v5h-5z"/>
<path fill="#13ff00" d="M1115 170h5v5h-5z"/>
<path fill="#1bff00" d="M1120 170h5v5h-5z"/>
<path fill="#23ff00" d="M1125 170h5v5h-5z"/>
<path fill="#2cff00" d="M1130 170h5v5h-5z"/>
<path fill="#34ff00" d="M1135 170h5v5h-5z"/>
<path fill="#00ff37" d="M890 175h5v5h-5z"/>
<path fill="#00ff35" d="M895 175h5v5h-5z"/>
<path fill="#00ff34" d="M900 175h5v5h-5z"/>
<path fill="#00ff33" d="M905 175h5v5h-5z"/>
<path fill="#00ff32" d="M910 175h5v5h-5z"/>
<path fill="#00ff30" d="M915 175h5v5h-5z"/>
<path fill="#00ff2f" d="M920 175h5v5h-5z"/>
<path fill="#00ff2e" d="M925 175h5v5h-5z"/>
<path fill="#00ff2c" d="M930 175h5v5h-5z"/>
<path fill="#00ff2b" d="M935 175h5v5h-5z"/>
<path fill="#00ff2a" d="M940 175h5v5h-5z"/>
<path fill="#00ff28" d="M945 175h5v5h-5z"/>
<path fill="#00ff27" d="M950 175h5v5h-5z"/>
<path fill="#00ff26" d="M955 175h5v5h-5z"/>
<path fill="#00ff24" d="M960 175h5v5h-5z"/>
<path fill="#00ff23" d="M965 175h5v5h-5z"/>
<path fill="#00ff21" d="M970 175h5v5h-5z"/>
<path fill="#00ff20" d="M975 175h5v5h-5z"/>
<path fill="#00ff1e" d="M980 175h5v5h-5z"/>
<path fill="#00ff1d" d="M985 175h5v5h-5z"/>
<path fill="#00ff1b" d="M990 175h5v5h-5z"/>
<path fill="#00ff19" d="M995 175h5v5h-5z"/>
<path fill="#00ff18" d="M1000 175h5v5h-5z"/>
<path fill="#00ff16" d="M1005 175h5v5h-5z"/>
<path fill="#00ff14" d="M1010 175h5v5h-5z"/>
<path fill="#00ff13" d="M1015 175h5v5h-5z"/>
<path fill="#00ff11" d="M1020 175h5v5h-5z"/>
<path fill="#00ff0f" d="M1025 175h5v5h-5z"/>
<path fill="#00ff0e" d="M1030 175h5v5h-5z"/>
<path fill="#00ff0c" d="M1035 175h5v5h-5z"/>
<path fill="#00ff0a" d="M1040 175h5v5h-5z"/>
<path fill="#00ff08" d="M1045 175h5v5h-5z"/>
<path fill="#00ff06" d="M1050 175h5v5h-5z"/>
<path fill="#00ff04" d="M1055 175h5v5h-5z"/>
<path fill="#00ff02" d="M1060 175h5v5h-5z"/>
<path fill="#00ff00" d="M1065 175h40v5h-40z"/>
<path fill="#06ff00" d="M1105 175h5v5h-5z"/>
<path fill="#0eff00" d="M1110 175h5v5h-5z"/>
<path fill="#16ff00" d="M1115 175h5v5h-5z"/>
<path fill="#1eff00" d="M1120 175h5v5h-5z"/>
<path fill="#27ff00" d="M1125 175h5v5h-5z"/>
<path fill="#2fff00" d="M1130 175h5v5h-5z"/>
<path fill="#38ff00" d="M1135 175h5v5h-5z"/>
<path fill="#41ff00" d="M1140 175h5v5h-5z"/>
<path fill="#4aff00" d="M1145 175h5v5h-5z"/>
<path fill="#00ff39" d="M890 180h5v5h-5z"/>
<path fill="#00ff38" d="M895 180h5v5h-5z"/>
<path fill="#00ff37" d="M900 180h5v5h-5z"/>
<path fill="#00ff36" d="M905 180h5v5h-5z"/>
<path fill="#00ff35" d="M910 180h5v5h-5z"/>
<path fill="#00ff33" d="M915 180h5v5h-5z"/>
<path fill="#00ff32" d="M920 180h5v5h-5z"/>
<path fill="#00ff31" d="M925 180h5v5h-5z"/>
<path fill="#00ff2f" d="M930 180h5v5h-5z"/>
<path fill="#00ff2e" d="M935 180h5v5h-5z"/>
<path fill="#00ff2d" d="M940 180h5v5h-5z"/>
<path fill="#00ff2b" d="M945 180h5v5h-5z"/>
<path fill="#00ff2a" d="M950 180h5v5h-5z"/>
<path fill="#00ff28" d="M955 180h5v5h-5z"/>
<path fill="#00ff27" d="M960 180h5v5h-5z"/>
<path fill="#00ff25" d="M965 180h5v5h-5z"/>
<path fill="#00ff24" d="M970 180h5v5h-5z"/>
<path fill="#00ff22" d="M975 180h5v5h-5z"/>
<path fill="#00ff21" d="M980 180h5v5h-5z"/>
<path fill="#00ff1f" d="M985 180h5v5h-5z"/>
<path fill="#00ff1e" d="M990 180h5v5h-5z"/>
<path fill="#00ff1c" d="M995 180h5v5h-5z"/>
<path fill="#00ff1b" d="M1000 180h5v5h-5z"/>
<path fill="#00ff19" d="M1005 180h5v5h-5z"/>
<path fill="#00ff17" d="M1010 180h5v5h-5z"/>
<path fill="#00ff16" d="M1015 180h5v5h-5z"/>
<path fill="#00ff14" d="M1020 180h5v5h-5z"/>
<path fill="#00ff12" d="M1025 180h5v5h-5z"/>
<path fill="#00ff10" d="M1030 180h5v5h-5z"/>
<path fill="#00ff0f" d="M1035 180h5v5h-5z"/>
<path fill="#00ff0d" d="M1040 180h5v5h-5z"/>
<path fill="#00ff0b" d="M1045 180h5v5h-5z"/>
<path fill="#00ff09" d="M1050 180h5v5h-5z"/>
<path fill="#00ff07" d="M1055 180h5v5h-5z"/>
<path fill="#00ff05" d="M1060 180h5v5h-5z"/>
<path fill="#00ff03" d="M1065 180h5v5h-5z"/>
<path fill="#00ff01" d="M1070 180h5v5h-5z"/>
<path fill="#00ff00" d="M1075 180h30v5h-30z"/>
<path fill="#08ff00" d="M1105 180h5v5h-5z"/>
<path fill="#10ff00" d="M1110 180h5v5h-5z"/>
<path fill="#19ff00" d="M1115 180h5v5h-5z"/>
<path fill="#21ff00" d="M1120 180h5v5h-5z"/>
<path fill="#2aff00" d="M1125 180h5v5h-5z"/>
<path fill="#32ff00" d="M1130 180h5v5h-5z"/>
<path fill="#3bff00" d="M1135 180h5v5h-5z"/>
<path fill="#44ff00" d="M1140 180h5v5h-5z"/>
<path fill="#4eff00" d="M1145 180h5v5h-5z"/>
<path fill="#57ff00" d="M1150 180h5v5h-5z"/>
<path fill="#00ff3c" d="M890 185h5v5h-5z"/>
<path fill="#00ff3b" d="M895 185h5v5h-5z"/>
<path fill="#00ff3a" d="M900 185h5v5h-5z"/>
<path fill="#00ff39" d="M905 185h5v5h-5z"/>
<path fill="#00ff37" d="M910 185h5v5h-5z"/>
<path fill="#00ff36" d="M915 185h5v5h-5z"/>
<path fill="#00ff35" d="M920 185h5v5h-5z"/>
<path fill="#00ff34" d="M925 185h5v5h-5z"/>
<path fill="#00ff32" d="M930 185h5v5h-5z"/>
<path fill="#00ff31" d="M935 185h5v5h-5z"/>
<path fill="#00ff2f" d="M940 185h5v5h-5z"/>
<path fill="#00ff2e" d="M945 185h5v5h-5z"/>
<path fill="#00ff2d" d="M950 185h5v5h-5z"/>
<path fill="#00ff2b" d="M955 185h5v5h-5z"/>
<path fill="#00ff2a" d="M960 185h5v5h-5z"/>
<path fill="#00ff28" d="M965 185h5v5h-5z"/>
<path fill="#00ff27" d="M970 185h5v5h-5z"/>
<path fill="#00ff25" d="M975 185h5v5h-5z"/>
<path fill="#00ff24" d="M980 185h5v5h-5z"/>
<path fill="#00ff22" d="M985 185h5v5h-5z"/>
<path fill="#00ff21" d="M990 185h5v5h-5z"/>
<path fill="#00ff1f" d="M995 185h5v5h-5z"/>
<path fill="#00ff1d" d="M1000 185h5v5h-5z"/>
<path fill="#00ff1c" d="M1005 185h5v5h-5z"/>
<path fill="#00ff1a" d="M1010 185h5v5h-5z"/>
<path fill="#00ff18" d="M1015 185h5v5h-5z"/>
<path fill="#00ff17" d="M1020 185h5v5h-5z"/>
<path fill="#00ff15" d="M1025 185h5v5h-5z"/>
<path fill="#00ff13" d="M1030 185h5v5h-5z"/>
<path fill="#00ff11" d="M1035 185h5v5h-5z"/>
<path fill="#00ff10" d="M1040 185h5v5h-5z"/>
<path fill="#00ff0e" d="M1045 185h5v5h-5z"/>
<path fill="#00ff0c" d="M1050 185h5v5h-5z"/>
<path fill="#00ff0a" d="M1055 185h5v5h-5z"/>
<path fill="#00ff08" d="M1060 185h5v5h-5z"/>
<path fill="#00ff06" d="M1065 185h5v5h-5z"/>
<path fill="#00ff04" d="M1070 185h5v5h-5z"/>
<path fill="#00ff02" d="M1075 185h5v5h-5z"/>
<path fill="#00ff00" d="M1080 185h20v5h-20z"/>
<path fill="#03ff00" d="M1100 185h5v5h-5z"/>
<path fill="#0bff00" d="M1105 185h5v5h-5z"/>
<path fill="#13ff00" d="M1110 185h5v5h-5z"/>
<path fill="#1cff00" d="M1115 185h5v5h-5z"/>
<path fill="#24ff00" d="M1120 185h5v5h-5z"/>
<path fill="#2dff00" d="M1125 185h5v5h-5z"/>
<path fill="#36ff00" d="M1130 185h5v5h-5z"/>
<path fill="#3fff00" d="M1135 185h5v5h-5z"/>
<path fill="#48ff00" d="M1140 185h5v5h-5z"/>
<path fill="#52ff00" d="M1145 185h5v5h-5z"/>
<path fill="#5bff00" d="M1150 185h5v5h-5z"/>
<path fill="#65ff00" d="M1155 185h5v5h-5z"/>
<path fill="#00ff3f" d="M890 190h5v5h-5z"/>
<path fill="#00ff3e" d="M895 190h5v5h-5z"/>
<path fill="#00ff3d" d="M900 190h5v5h-5z"/>
<path fill="#00ff3c" d="M905 190h5v5h-5z"/>
<path fill="#00ff3a" d="M910 190h5v5h-5z"/>
<path fill="#00ff39" d="M915 190h5v5h-5z"/>
<path fill="#00ff38" d="M920 190h5v5h-5z"/>
<path fill="#00ff36" d="M925 190h5v5h-5z"/>
<path fill="#00ff35" d="M930 190h5v5h-5z"/>
<path fill="#00ff34" d="M935 190h5v5h-5z"/>
<path fill="#00ff32" d="M940 190h5v5h-5z"/>
<path fill="#00ff31" d="M945 190h5v5h-5z"/>
<path fill="#00ff30" d="M950 190h5v5h-5z"/>
<path fill="#00ff2e" d="M955 190h5v5h-5z"/>
<path fill="#00ff2d" d="M960 190h5v5h-5z"/>
<path fill="#00ff2b" d="M965 190h5v5h-5z"/>
<path fill="#00ff2a" d="M970 190h5v5h-5z"/>
<path fill="#00ff28" d="M975 190h5v5h-5z"/>
<path fill="#00ff27" d="M980 190h5v5h-5z"/>
<path fill="#00ff25" d="M985 190h5v5h-5z"/>
<path fill="#00ff24" d="M990 190h5v5h-5z"/>
<path fill="#00ff22" d="M995 190h5v5h-5z"/>
<path fill="#00ff20" d="M1000 190h5v5h-5z"/>
<path fill="#00ff1f" d="M1005 190h5v5h-5z"/>
<path fill="#00ff1d" d="M1010 190h5v5h-5z"/>
<path fill="#00ff1b" d="M1015 190h5v5h-5z"/>
<path fill="#00ff1a" d="M1020 190h5v5h-5z"/>
<path fill="#00ff18" d="M1025 190h5v5h-5z"/>
<path fill="#00ff16" d="M1030 190h5v5h-5z"/>
<path fill="#00ff14" d="M1035 190h5v5h-5z"/>
<path fill="#00ff13" d="M1040 190h5v5h-5z"/>
<path fill="#00ff11" d="M1045 190h5v5h-5z"/>
<path fill="#00ff0f" d="M1050 190h5v5h-5z"/>
<path fill="#00ff0d" d="M1055 190h5v5h-5z"/>
<path fill="#00ff0b" d="M1060 190h5v5h-5z"/>
<path fill="#00ff09" d="M1065 190h5v5h-5z"/>
<path fill="#00ff07" d="M1070 190h5v5h-5z"/>
<path fill="#00ff05" d="M1075 190h5v5h-5z"/>
<path fill="#00ff03" d="M1080 190h5v5h-5z"/>
<path fill="#00ff01" d="M1085 190h5v5h-5z"/>
<path fill="#00ff00" d="M1090 190h10v5h-10z"/>
<path fill="#05ff00" d="M1100 190h5v5h-5z"/>
<path fill="#0eff00" d="M1105 190h5v5h-5z"/>
<path fill="#16ff00" d="M1110 190h5v5h-5z"/>
<path fill="#1fff00" d="M1115 190h5v5h-5z"/>
<path fill="#27ff00" d="M1120 190h5v5h-5z"/>
<path fill="#30ff00" d="M1125 190h5v5h-5z"/>
<path fill="#39ff00" d="M1130 190h5v5h-5z"/>
<path fill="#43ff00" d="M1135 190h5v5h-5z"/>
<path fill="#4cff00" d="M1140 190h5v5h-5z"/>
<path fill="#56ff00" d="M1145 190h5v5h-5z"/>
<path fill="#60ff00" d="M1150 190h5v5h-5z"/>
<path fill="#6aff00" d="M1155 190h5v5h-5z"/>
<path fill="#74ff00" d="M1160 190h5v5h-5z"/>
<path fill="#00ff42" d="M890 195h5v5h-5z"/>
<path fill="#00ff41" d="M895 195h5v5h-5z"/>
<path fill="#00ff40" d="M900 195h5v5h-5z"/>
<path fill="#00ff3f" d="M905 195h5v5h-5z"/>
<path fill="#00ff3d" d="M910 195h5v5h-5z"/>
<path fill="#00ff3c" d="M915 195h5v5h-5z"/>
<path fill="#00ff3b" d="M920 195h5v5h-5z"/>
<path fill="#00ff3a" d="M925 195h5v5h-5z"/>
<path fill="#00ff38" d="M930 195h5v5h-5z"/>
<path fill="#00ff37" d="M935 195h5v5h-5z"/>
<path fill="#00ff35" d="M940 195h5v5h-5z"/>
<path fill="#00ff34" d="M945 195h5v5h-5z"/>
<path fill="#00ff33" d="M950 195h5v5h-5z"/>
<path fill="#00ff31" d="M955 195h5v5h-5z"/>
<path fill="#00ff30" d="M960 195h5v5h-5z"/>
<path fill="#00ff2e" d="M965 195h5v5h-5z"/>
<path fill="#00ff2d" d="M970 195h5v5h-5z"/>
<path fill="#00ff2b" d="M975 195h5v5h-5z"/>
<path fill="#00ff2a" d="M980 195h5v5h-5z"/>
<path fill="#00ff28" d="M985 195h5v5h-5z"/>
<path fill="#00ff27" d="M990 195h5v5h-5z"/>
<path fill="#00ff25" d="M995 195h5v5h-5z"/>
<path fill="#00ff24" d="M1000 195h5v5h-5z"/>
<path fill="#00ff22" d="M1005 195h5v5h-5z"/>
<path fill="#00ff20" d="M1010 195h5v5h-5z"/>
<path fill="#00ff1f" d="M1015 195h5v5h-5z"/>
<path fill="#00ff1d" d="M1020 195h5v5h-5z"/>
<path fill="#00ff1b" d="M1025 195h5v5h-5z"/>
<path fill="#00ff19" d="M1030 195h5v5h-5z"/>
<path fill="#00ff17" d="M1035 195h5v5h-5z"/>
<path fill="#00ff16" d="M1040 195h5v5h-5z"/>
<path fill="#00ff14" d="M1045 195h5v5h-5z"/>
<path fill="#00ff12" d="M1050 195h5v5h-5z"/>
<path fill="#00ff10" d="M1055 195h5v5h-5z"/>
<path fill="#00ff0e" d="M1060 195h5v5h-5z"/>
<path fill="#00ff0c" d="M1065 195h5v5h-5z"/>
<path fill="#00ff0a" d="M1070 195h5v5h-5z"/>
<path fill="#00ff08" d="M1075 195h5v5h-5z"/>
<path fill="#00ff06" d="M1080 195h5v5h-5z"/>
<path fill="#00ff04" d="M1085 195h5v5h-5z"/>
<path fill="#00ff02" d="M1090 195h5v5h-5z"/>
<path fill="#00ff00" d="M1095 195h5v5h-5z"/>
<path fill="#08ff00" d="M1100 195h5v5h-5z"/>
<path fill="#10ff00" d="M1105 195h5v5h-5z"/>
<path fill="#19ff00" d="M1110 195h5v5h-5z"/>
<path fill="#22ff00" d="M1115 195h5v5h-5z"/>
<path fill="#2bff00" d="M1120 195h5v5h-5z"/>
<path fill="#34ff00" d="M1125 195h5v5h-5z"/>
<path fill="#3dff00" d="M1130 195h5v5h-5z"/>
<path fill="#47ff00" d="M1135 195h5v5h-5z"/>
<path fill="#50ff00" d="M1140 195h5v5h-5z"/>
<path fill="#5aff00" d="M1145 195h5v5h-5z"/>
<path fill="#64ff00" d="M1150 195h5v5h-5z"/>
<path fill="#6eff00" d="M1155 195h5v5h-5z"/>
<path fill="#79ff00" d="M1160 195h5v5h-5z"/>
<path fill="#83ff00" d="M1165 195h5v5h-5z"/>
<path fill="#00ff45" d="M890 200h5v5h-5z"/>
<path fill="#00ff44" d="M895 200h5v5h-5z"/>
<path fill="#00ff43" d="M900 200h5v5h-5z"/>
<path fill="#00ff42" d="M905 200h5v5h-5z"/>
<path fill="#00ff41" d="M910 200h5v5h-5z"/>
<path fill="#00ff3f" d="M915 200h5v5h-5z"/>
<path fill="#00ff3e" d="M920 200h5v5h-5z"/>
<path fill="#00ff3d" d="M925 200h5v5h-5z"/>
<path fill="#00ff3b" d="M930 200h5v5h-5z"/>
<path fill="#00ff3a" d="M935 200h5v5h-5z"/>
<path fill="#00ff39" d="M940 200h5v5h-5z"/>
<path fill="#00ff37" d="M945 200h5v5h-5z"/>
<path fill="#00ff36" d="M950 200h5v5h-5z"/>
<path fill="#00ff34" d="M955 200h5v5h-5z"/>
<path fill="#00ff33" d="M960 200h5v5h-5z"/>
<path fill="#00ff32" d="M965 200h5v5h-5z"/>
<path fill="#00ff30" d="M970 200h5v5h-5z"/>
<path fill="#00ff2f" d="M975 200h5v5h-5z"/>
<path fill="#00ff2d" d="M980 200h5v5h-5z"/>
<path fill="#00ff2b" d="M985 200h5v5h-5z"/>
<path fill="#00ff2a" d="M990 200h5v5h-5z"/>
<path fill="#00ff28" d="M995 200h5v5h-5z"/>
<path fill="#00ff27" d="M1000 200h5v5h-5z"/>
<path fill="#00ff25" d="M1005 200h5v5h-5z"/>
<path fill="#00ff23" d="M1010 200h5v5h-5z"/>
<path fill="#00ff22" d="M1015 200h5v5h-5z"/>
<path fill="#00ff20" d="M1020 200h5v5h-5z"/>
<path fill="#00ff1e" d="M1025 200h5v5h-5z"/>
<path fill="#00ff1c" d="M1030 200h5v5h-5z"/>
<path fill="#00ff1b" d="M1035 200h5v5h-5z"/>
<path fill="#00ff19" d="M1040 200h5v5h-5z"/>
<path fill="#00ff17" d="M1045 200h5v5h-5z"/>
<path fill="#00ff15" d="M1050 200h5v5h-5z"/>
<path fill="#00ff13" d="M1055 200h5v5h-5z"/>
<path fill="#00ff11" d="M1060 200h5v5h-5z"/>
<path fill="#00ff0f" d="M1065 200h5v5h-5z"/>
<path fill="#00ff0d" d="M1070 200h5v5h-5z"/>
<path fill="#00ff0b" d="M1075 200h5v5h-5z"/>
<path fill="#00ff09" d="M1080 200h5v5h-5z"/>
<path fill="#00ff07" d="M1085 200h5v5h-5z"/>
<path fill="#00ff05" d="M1090 200h5v5h-5z"/>
<path fill="#02ff02" d="M1095 200h5v5h-5z"/>
<path fill="#0aff00" d="M1100 200h5v5h-5z"/>
<path fill="#13ff00" d="M1105 200h5v5h-5z"/>
<path fill="#1cff00" d="M1110 200h5v5h-5z"/>
<path fill="#25ff00" d="M1115 200h5v5h-5z"/>
<path fill="#2eff00" d="M1120 200h5v5h-5z"/>
<path fill="#37ff00" d="M1125 200h5v5h-5z"/>
<path fill="#41ff00" d="M1130 200h5v5h-5z"/>
<path fill="#4bff00" d="M1135 200h5v5h-5z"/>
<path fill="#55ff00" d="M1140 200h5v5h-5z"/>
<path fill="#5fff00" d="M1145 200h5v5h-5z"/>
<path fill="#69ff00" d="M1150 200h5v5h-5z"/>
<path fill="#73ff00" d="M1155 200h5v5h-5z"/>
<path fill="#7eff00" d="M1160 200h5v5h-5z"/>
<path fill="#89ff00" d="M1165 200h5v5h-5z"/>
<path fill="#94ff00" d="M1170 200h5v5h-5z"/>
<path fill="#00ff49" d="M890 205h5v5h-5z"/>
<path fill="#00ff47" d="M895 205h5v5h-5z"/>
<path fill="#00ff46" d="M900 205h5v5h-5z"/>
<path fill="#00ff45" d="M905 205h5v5h-5z"/>
<path fill="#00ff44" d="M910 205h5v5h-5z"/>
<path fill="#00ff42" d="M915 205h5v5h-5z"/>
<path fill="#00ff41" d="M920 205h5v5h-5z"/>
<path fill="#00ff40" d="M925 205h5v5h-5z"/>
<path fill="#00ff3f" d="M930 205h5v5h-5z"/>
<path fill="#00ff3d" d="M935 205h5v5h-5z"/>
<path fill="#00ff3c" d="M940 205h5v5h-5z"/>
<path fill="#00ff3a" d="M945 205h5v5h-5z"/>
<path fill="#00ff39" d="M950 205h5v5h-5z"/>
<path fill="#00ff38" d="M955 205h5v5h-5z"/>
<path fill="#00ff36" d="M960 205h5v5h-5z"/>
<path fill="#00ff35" d="M965 205h5v5h-5z"/>
<path fill="#00ff33" d="M970 205h5v5h-5z"/>
<path fill="#00ff32" d="M975 205h5v5h-5z"/>
<path fill="#00ff30" d="M980 205h5v5h-5z"/>
<path fill="#00ff2f" d="M985 205h5v5h-5z"/>
<path fill="#00ff2d" d="M990 205h5v5h-5z"/>
<path fill="#00ff2c" d="M995 205h5v5h-5z"/>
<path fill="#00ff2a" d="M1000 205h5v5h-5z"/>
<path fill="#00ff28" d="M1005 205h5v5h-5z"/>
<path fill="#00ff27" d="M1010 205h5v5h-5z"/>
<path fill="#00ff25" d="M1015 205h5v5h-5z"/>
<path fill="#00ff23" d="M1020 205h5v5h-5z"/>
<path fill="#00ff21" d="M1025 205h5v5h-5z"/>
<path fill="#00ff20" d="M1030 205h5v5h-5z"/>
<path fill="#00ff1e" d="M1035 205h5v5h-5z"/>
<path fill="#00ff1c" d="M1040 205h5v5h-5z"/>
<path fill="#00ff1a" d="M1045 205h5v5h-5z"/>
<path fill="#00ff18" d="M1050 205h5v5h-5z"/>
<path fill="#00ff16" d="M1055 205h5v5h-5z"/>
<path fill="#00ff14" d="M1060 205h5v5h-5z"/>
<path fill="#00ff12" d="M1065 205h5v5h-5z"/>
<path fill="#00ff10" d="M1070 205h5v5h-5z"/>
<path fill="#00ff0e" d="M1075 205h5v5h-5z"/>
<path fill="#00ff0c" d="M1080 205h5v5h-5z"/>
<path fill="#00ff0a" d="M1085 205h5v5h-5z"/>
<path fill="#00ff08" d="M1090 205h5v5h-5z"/>
<path fill="#05ff06" d="M1095 205h5v5h-5z"/>
<path fill="#0dff03" d="M1100 205h5v5h-5z"/>
<path fill="#16ff01" d="M1105 205h5v5h-5z"/>
<path fill="#1fff00" d="M1110 205h5v5h-5z"/>
<path fill="#28ff00" d="M1115 205h5v5h-5z"/>
<path fill="#32ff00" d="M1120 205h5v5h-5z"/>
<path fill="#3bff00" d="M1125 205h5v5h-5z"/>
<path fill="#45ff00" d="M1130 205h5v5h-5z"/>
<path fill="#4fff00" d="M1135 205h5v5h-5z"/>
<path fill="#59ff00" d="M1140 205h5v5h-5z"/>
<path fill="#63ff00" d="M1145 205h5v5h-5z"/>
<path fill="#6eff00" d="M1150 205h5v5h-5z"/>
<path fill="#79ff00" d="M1155 205h5v5h-5z"/>
<path fill="#84ff00" d="M1160 205h5v5h-5z"/>
<path fill="#8fff00" d="M1165 205h5v5h-5z"/>
<path fill="#9aff00" d="M1170 205h5v5h-5z"/>
<path fill="#a6ff00" d="M1175 205h5v5h-5z"/>
<path fill="#00ff4c" d="M890 210h5v5h-5z"/>
<path fill="#00ff4b" d="M895 210h5v5h-5z"/>
<path fill="#00ff49" d="M900 210h5v5h-5z"/>
<path fill="#00ff48" d="M905 210h5v5h-5z"/>
<path fill="#00ff47" d="M910 210h5v5h-5z"/>
<path fill="#00ff46" d="M915 210h5v5h-5z"/>
<path fill="#00ff44" d="M920 210h5v5h-5z"/>
<path fill="#00ff43" d="M925 210h5v5h-5z"/>
<path fill="#00ff42" d="M930 210h5v5h-5z"/>
<path fill="#00ff41" d="M935 210h5v5h-5z"/>
<path fill="#00ff3f" d="M940 210h5v5h-5z"/>
<path fill="#00ff3e" d="M945 210h5v5h-5z"/>
<path fill="#00ff3c" d="M950 210h5v5h-5z"/>
<path fill="#00ff3b" d="M955 210h5v5h-5z"/>
<path fill="#00ff3a" d="M960 210h5v5h-5z"/>
<path fill="#00ff38" d="M965 210h5v5h-5z"/>
<path fill="#00ff37" d="M970 210h5v5h-5z"/>
<path fill="#00ff35" d="M975 210h5v5h-5z"/>
<path fill="#00ff34" d="M980 210h5v5h-5z"/>
<path fill="#00ff32" d="M985 210h5v5h-5z"/>
<path fill="#00ff30" d="M990 210h5v5h-5z"/>
<path fill="#00ff2f" d="M995 210h5v5h-5z"/>
<path fill="#00ff2d" d="M1000 210h5v5h-5z"/>
<path fill="#00ff2c" d="M1005 210h5v5h-5z"/>
<path fill="#00ff2a" d="M1010 210h5v5h-5z"/>
<path fill="#00ff28" d="M1015 210h5v5h-5z"/>
<path fill="#00ff27" d="M1020 210h5v5h-5z"/>
<path fill="#00ff25" d="M1025 210h5v5h-5z"/>
<path fill="#00ff23" d="M1030 210h5v5h-5z"/>
<path fill="#00ff21" d="M1035 210h5v5h-5z"/>
<path fill="#00ff1f" d="M1040 210h5v5h-5z"/>
<path fill="#00ff1d" d="M1045 210h5v5h-5z"/>
<path fill="#00ff1c" d="M1050 210h5v5h-5z"/>
<path fill="#00ff1a" d="M1055 210h5v5h-5z"/>
<path fill="#00ff18" d="M1060 210h5v5h-5z"/>
<path fill="#00ff16" d="M1065 210h5v5h-5z"/>
<path fill="#00ff14" d="M1070 210h5v5h-5z"/>
<path fill="#00ff12" d="M1075 210h5v5h-5z"/>
<path fill="#00ff0f" d="M1080 210h5v5h-5z"/>
<path fill="#00ff0d" d="M1085 210h5v5h-5z"/>
<path fill="#00ff0b" d="M1090 210h5v5h-5z"/>
<path fill="#07ff09" d="M1095 210h5v5h-5z"/>
<path fill="#10ff07" d="M1100 210h5v5h-5z"/>
<path fill="#19ff04" d="M1105 210h5v5h-5z"/>
<path fill="#22ff02" d="M1110 210h5v5h-5z"/>
<path fill="#2cff00" d="M1115 210h5v5h-5z"/>
<path fill="#35ff00" d="M1120 210h5v5h-5z"/>
<path fill="#3fff00" d="M1125 210h5v5h-5z"/>
<path fill="#49ff00" d="M1130 210h5v5h-5z"/>
<path fill="#53ff00" d="M1135 210h5v5h-5z"/>
<path fill="#5eff00" d="M1140 210h5v5h-5z"/>
<path fill="#68ff00" d="M1145 210h5v5h-5z"/>
<path fill="#73ff00" d="M1150 210h5v5h-5z"/>
<path fill="#7eff00" d="M1155 210h5v5h-5z"/>
<path fill="#89ff00" d="M1160 210h5v5h-5z"/>
<path fill="#95ff00" d="M1165 210h5v5h-5z"/>
<path fill="#a0ff00" d="M1170 210h5v5h-5z"/>
<path fill="#acff00" d="M1175 210h5v5h-5z"/>
<path fill="#b9ff00" d="M1180 210h5v5h-5z"/>
<path fill="#00ff4f" d="M890 215h5v5h-5z"/>
<path fill="#00ff4e" d="M895 215h5v5h-5z"/>
<path fill="#00ff4d" d="M900 215h5v5h-5z"/>
<path fill="#00ff4c" d="M905 215h5v5h-5z"/>
<path fill="#00ff4a" d="M910 215h5v5h-5z"/>
<path fill="#00ff49" d="M915 215h5v5h-5z"/>
<path fill="#00ff48" d="M920 215h5v5h-5z"/>
<path fill="#00ff47" d="M925 215h5v5h-5z"/>
<path fill="#00ff45" d="M930 215h5v5h-5z"/>
<path fill="#00ff44" d="M935 215h5v5h-5z"/>
<path fill="#00ff43" d="M940 215h5v5h-5z"/>
<path fill="#00ff41" d="M945 215h5v5h-5z"/>
<path fill="#00ff40" d="M950 215h5v5h-5z"/>
<path fill="#00ff3e" d="M955 215h5v5h-5z"/>
<path fill="#00ff3d" d="M960 215h5v5h-5z"/>
<path fill="#00ff3c" d="M965 215h5v5h-5z"/>
<path fill="#00ff3a" d="M970 215h5v5h-5z"/>
<path fill="#00ff39" d="M975 215h5v5h-5z"/>
<path fill="#00ff37" d="M980 215h5v5h-5z"/>
<path fill="#00ff36" d="M985 215h5v5h-5z"/>
<path fill="#00ff34" d="M990 215h5v5h-5z"/>
<path fill="#00ff32" d="M995 215h5v5h-5z"/>
<path fill="#00ff31" d="M1000 215h5v5h-5z"/>
<path fill="#00ff2f" d="M1005 215h5v5h-5z"/>
<path fill="#00ff2d" d="M1010 215h5v5h-5z"/>
<path fill="#00ff2c" d="M1015 215h5v5h-5z"/>
<path fill="#00ff2a" d="M1020 215h5v5h-5z"/>
<path fill="#00ff28" d="M1025 215h5v5h-5z"/>
<path fill="#00ff26" d="M1030 215h5v5h-5z"/>
<path fill="#00ff25" d="M1035 215h5v5h-5z"/>
<path fill="#00ff23" d="M1040 215h5v5h-5z"/>
<path fill="#00ff21" d="M1045 215h5v5h-5z"/>
<path fill="#00ff1f" d="M1050 215h5v5h-5z"/>
<path fill="#00ff1d" d="M1055 215h5v5h-5z"/>
<path fill="#00ff1b" d="M1060 215h5v5h-5z"/>
<path fill="#00ff19" d="M1065 215h5v5h-5z"/>
<path fill="#00ff17" d="M1070 215h5v5h-5z"/>
<path fill="#00ff15" d="M1075 215h5v5h-5z"/>
<path fill="#00ff13" d="M1080 215h5v5h-5z"/>
<path fill="#00ff11" d="M1085 215h5v5h-5z"/>
<path fill="#01ff0e" d="M1090 215h5v5h-5z"/>
<path fill="#0aff0c" d="M1095 215h5v5h-5z"/>
<path fill="#13ff0a" d="M1100 215h5v5h-5z"/>
<path fill="#1cff08" d="M1105 215h5v5h-5z"/>
<path fill="#26ff05" d="M1110 215h5v5h-5z"/>
<path fill="#2fff03" d="M1115 215h5v5h-5z"/>
<path fill="#39ff00" d="M1120 215h5v5h-5z"/>
<path fill="#43ff00" d="M1125 215h5v5h-5z"/>
<path fill="#4dff00" d="M1130 215h5v5h-5z"/>
<path fill="#58ff00" d="M1135 215h5v5h-5z"/>
<path fill="#62ff00" d="M1140 215h5v5h-5z"/>
<path fill="#6dff00" d="M1145 215h5v5h-5z"/>
<path fill="#78ff00" d="M1150 215h5v5h-5z"/>
<path fill="#84ff00" d="M1155 215h5v5h-5z"/>
<path fill="#8fff00" d="M1160 215h5v5h-5z"/>
<path fill="#9bff00" d="M1165 215h5v5h-5z"/>
<path fill="#a7ff00" d="M1170 215h5v5h-5z"/>
<path fill="#b3ff00" d="M1175 215h5v5h-5z"/>
<path fill="#c0ff00" d="M1180 215h5v5h-5z"/>
<path fill="#cdff00" d="M1185 215h5v5h-5z"/>
<path fill="#00ff53" d="M890 220h5v5h-5z"/>
<path fill="#00ff51" d="M895 220h5v5h-5z"/>
<path fill="#00ff50" d="M900 220h5v5h-5z"/>
<path fill="#00ff4f" d="M905 220h5v5h-5z"/>
<path fill="#00ff4e" d="M910 220h5v5h-5z"/>
<path fill="#00ff4d" d="M915 220h5v5h-5z"/>
<path fill="#00ff4b" d="M920 220h5v5h-5z"/>
<path fill="#00ff4a" d="M925 220h5v5h-5z"/>
<path fill="#00ff49" d="M930 220h5v5h-5z"/>
<path fill="#00ff47" d="M935 220h5v5h-5z"/>
<path fill="#00ff46" d="M940 220h5v5h-5z"/>
<path fill="#00ff45" d="M945 220h5v5h-5z"/>
<path fill="#00ff43" d="M950 220h5v5h-5z"/>
<path fill="#00ff42" d="M955 220h5v5h-5z"/>
<path fill="#00ff41" d="M960 220h5v5h-5z"/>
<path fill="#00ff3f" d="M965 220h5v5h-5z"/>
<path fill="#00ff3e" d="M970 220h5v5h-5z"/>
<path fill="#00ff3c" d="M975 220h5v5h-5z"/>
<path fill="#00ff3b" d="M980 220h5v5h-5z"/>
<path fill="#00ff39" d="M985 220h5v5h-5z"/>
<path fill="#00ff38" d="M990 220h5v5h-5z"/>
<path fill="#00ff36" d="M995 220h5v5h-5z"/>
<path fill="#00ff34" d="M1000 220h5v5h-5z"/>
<path fill="#00ff33" d="M1005 220h5v5h-5z"/>
<path fill="#00ff31" d="M1010 220h5v5h-5z"/>
<path fill="#00ff2f" d="M1015 220h5v5h-5z"/>
<path fill="#00ff2e" d="M1020 220h5v5h-5z"/>
<path fill="#00ff2c" d="M1025 220h5v5h-5z"/>
<path fill="#00ff2a" d="M1030 220h5v5h-5z"/>
<path fill="#00ff28" d="M1035 220h5v5h-5z"/>
<path fill="#00ff26" d="M1040 220h5v5h-5z"/>
<path fill="#00ff25" d="M1045 220h5v5h-5z"/>
<path fill="#00ff23" d="M1050 220h5v5h-5z"/>
<path fill="#00ff21" d="M1055 220h5v5h-5z"/>
<path fill="#00ff1f" d="M1060 220h5v5h-5z"/>
<path fill="#00ff1d" d="M1065 220h5v5h-5z"/>
<path fill="#00ff1b" d="M1070 220h5v5h-5z"/>
<path fill="#00ff19" d="M1075 220h5v5h-5z"/>
<path fill="#00ff16" d="M1080 220h5v5h-5z"/>
<path fill="#00ff14" d="M1085 220h5v5h-5z"/>
<path fill="#04ff12" d="M1090 220h5v5h-5z"/>
<path fill="#0dff10" d="M1095 220h5v5h-5z"/>
<path fill="#16ff0d" d="M1100 220h5v5h-5z"/>
<path fill="#20ff0b" d="M1105 220h5v5h-5z"/>
<path fill="#29ff09" d="M1110 220h5v5h-5z"/>
<path fill="#33ff06" d="M1115 220h5v5h-5z"/>
<path fill="#3dff04" d="M1120 220h5v5h-5z"/>
<path fill="#47ff01" d="M1125 220h5v5h-5z"/>
<path fill="#52ff00" d="M1130 220h5v5h-5z"/>
<path fill="#5dff00" d="M1135 220h5v5h-5z"/>
<path fill="#67ff00" d="M1140 220h5v5h-5z"/>
<path fill="#73ff00" d="M1145 220h5v5h-5z"/>
<path fill="#7eff00" d="M1150 220h5v5h-5z"/>
<path fill="#89ff00" d="M1155 220h5v5h-5z"/>
<path fill="#95ff00" d="M1160 220h5v5h-5z"/>
<path fill="#a1ff00" d="M1165 220h5v5h-5z"/>
<path fill="#aeff00" d="M1170 220h5v5h-5z"/>
<path fill="#bbff00" d="M1175 220h5v5h-5z"/>
<path fill="#c7ff00" d="M1180 220h5v5h-5z"/>
<path fill="#d5ff00" d="M1185 220h5v5h-5z"/>
<path fill="#e2ff00" d="M1190 220h5v5h-5z"/>
<path fill="#f0ff00" d="M1195 220h5v5h-5z"/>
<path fill="#00ff55" d="M895 225h5v5h-5z"/>
<path fill="#00ff54" d="M900 225h5v5h-5z"/>
<path fill="#00ff53" d="M905 225h5v5h-5z"/>
<path fill="#00ff51" d="M910 225h5v5h-5z"/>
<path fill="#00ff50" d="M915 225h5v5h-5z"/>
<path fill="#00ff4f" d="M920 225h5v5h-5z"/>
<path fill="#00ff4e" d="M925 225h5v5h-5z"/>
<path fill="#00ff4c" d="M930 225h5v5h-5z"/>
<path fill="#00ff4b" d="M935 225h5v5h-5z"/>
<path fill="#00ff4a" d="M940 225h5v5h-5z"/>
<path fill="#00ff48" d="M945 225h5v5h-5z"/>
<path fill="#00ff47" d="M950 225h5v5h-5z"/>
<path fill="#00ff46" d="M955 225h5v5h-5z"/>
<path fill="#00ff44" d="M960 225h5v5h-5z"/>
<path fill="#00ff43" d="M965 225h5v5h-5z"/>
<path fill="#00ff41" d="M970 225h5v5h-5z"/>
<path fill="#00ff40" d="M975 225h5v5h-5z"/>
<path fill="#00ff3e" d="M980 225h5v5h-5z"/>
<path fill="#00ff3d" d="M985 225h5v5h-5z"/>
<path fill="#00ff3b" d="M990 225h5v5h-5z"/>
<path fill="#00ff3a" d="M995 225h5v5h-5z"/>
<path fill="#00ff38" d="M1000 225h5v5h-5z"/>
<path fill="#00ff36" d="M1005 225h5v5h-5z"/>
<path fill="#00ff35" d="M1010 225h5v5h-5z"/>
<path fill="#00ff33" d="M1015 225h5v5h-5z"/>
<path fill="#00ff31" d="M1020 225h5v5h-5z"/>
<path fill="#00ff30" d="M1025 225h5v5h-5z"/>
<path fill="#00ff2e" d="M1030 225h5v5h-5z"/>
<path fill="#00ff2c" d="M1035 225h5v5h-5z"/>
<path fill="#00ff2a" d="M1040 225h5v5h-5z"/>
<path fill="#00ff28" d="M1045 225h5v5h-5z"/>
<path fill="#00ff26" d="M1050 225h5v5h-5z"/>
<path fill="#00ff24" d="M1055 225h5v5h-5z"/>
<path fill="#00ff22" d="M1060 225h5v5h-5z"/>
<path fill="#00ff20" d="M1065 225h5v5h-5z"/>
<path fill="#00ff1e" d="M1070 225h5v5h-5z"/>
<path fill="#00ff1c" d="M1075 225h5v5h-5z"/>
<path fill="#00ff1a" d="M1080 225h5v5h-5z"/>
<path fill="#00ff18" d="M1085 225h5v5h-5z"/>
<path fill="#07ff16" d="M1090 225h5v5h-5z"/>
<path fill="#10ff13" d="M1095 225h5v5h-5z"/>
<path fill="#19ff11" d="M1100 225h5v5h-5z"/>
<path fill="#23ff0f" d="M1105 225h5v5h-5z"/>
<path fill="#2dff0c" d="M1110 225h5v5h-5z"/>
<path fill="#37ff0a" d="M1115 225h5v5h-5z"/>
<path fill="#41ff07" d="M1120 225h5v5h-5z"/>
<path fill="#4cff05" d="M1125 225h5v5h-5z"/>
<path fill="#57ff02" d="M1130 225h5v5h-5z"/>
<path fill="#61ff00" d="M1135 225h5v5h-5z"/>
<path fill="#6dff00" d="M1140 225h5v5h-5z"/>
<path fill="#78ff00" d="M1145 225h5v5h-5z"/>
<path fill="#84ff00" d="M1150 225h5v5h-5z"/>
<path fill="#90ff00" d="M1155 225h5v5h-5z"/>
<path fill="#9cff00" d="M1160 225h5v5h-5z"/>
<path fill="#a8ff00" d="M1165 225h5v5h-5z"/>
<path fill="#b5ff00" d="M1170 225h5v5h-5z"/>
<path fill="#c2ff00" d="M1175 225h5v5h-5z"/>
<path fill="#cfff00" d="M1180 225h5v5h-5z"/>
<path fill="#ddff00" d="M1185 225h5v5h-5z"/>
<path fill="#ebff00" d="M1190 225h5v5h-5z"/>
<path fill="#f9ff00" d="M1195 225h5v5h-5z"/>
<path fill="#fff600" d="M1200 225h5v5h-5z"/>
<path fill="#00ff59" d="M895 230h5v5h-5z"/>
<path fill="#00ff58" d="M900 230h5v5h-5z"/>
<path fill="#00ff56" d="M905 230h5v5h-5z"/>
<path fill="#00ff55" d="M910 230h5v5h-5z"/>
<path fill="#00ff54" d="M915 230h5v5h-5z"/>
<path fill="#00ff53" d="M920 230h5v5h-5z"/>
<path fill="#00ff51" d="M925 230h5v5h-5z"/>
<path fill="#00ff50" d="M930 230h5v5h-5z"/>
<path fill="#00ff4f" d="M935 230h5v5h-5z"/>
<path fill="#00ff4d" d="M940 230h5v5h-5z"/>
<path fill="#00ff4c" d="M945 230h5v5h-5z"/>
<path fill="#00ff4b" d="M950 230h5v5h-5z"/>
<path fill="#00ff49" d="M955 230h5v5h-5z"/>
<path fill="#00ff48" d="M960 230h5v5h-5z"/>
<path fill="#00ff47" d="M965 230h5v5h-5z"/>
<path fill="#00ff45" d="M970 230h5v5h-5z"/>
<path fill="#00ff44" d="M975 230h5v5h-5z"/>
<path fill="#00ff42" d="M980 230h5v5h-5z"/>
<path fill="#00ff41" d="M985 230h5v5h-5z"/>
<path fill="#00ff3f" d="M990 230h5v5h-5z"/>
<path fill="#00ff3d" d="M995 230h5v5h-5z"/>
<path fill="#00ff3c" d="M1000 230h5v5h-5z"/>
<path fill="#00ff3a" d="M1005 230h5v5h-5z"/>
<path fill="#00ff39" d="M1010 230h5v5h-5z"/>
<path fill="#00ff37" d="M1015 230h5v5h-5z"/>
<path fill="#00ff35" d="M1020 230h5v5h-5z"/>
<path fill="#00ff33" d="M1025 230h5v5h-5z"/>
<path fill="#00ff32" d="M1030 230h5v5h-5z"/>
<path fill="#00ff30" d="M1035 230h5v5h-5z"/>
<path fill="#00ff2e" d="M1040 230h5v5h-5z"/>
<path fill="#00ff2c" d="M1045 230h5v5h-5z"/>
<path fill="#00ff2a" d="M1050 230h5v5h-5z"/>
<path fill="#00ff28" d="M1055 230h5v5h-5z"/>
<path fill="#00ff26" d="M1060 230h5v5h-5z"/>
<path fill="#00ff24" d="M1065 230h5v5h-5z"/>
<path fill="#00ff22" d="M1070 230h5v5h-5z"/>
<path fill="#00ff20" d="M1075 230h5v5h-5z"/>
<path fill="#00ff1e" d="M1080 230h5v5h-5z"/>
<path fill="#00ff1c" d="M1085 230h5v5h-5z"/>
<path fill="#0aff1a" d="M1090 230h5v5h-5z"/>
<path fill="#13ff17" d="M1095 230h5v5h-5z"/>
<path fill="#1dff15" d="M1100 230h5v5h-5z"/>
<path fill="#27ff13" d="M1105 230h5v5h-5z"/>
<path fill="#31ff10" d="M1110 230h5v5h-5z"/>
<path fill="#3bff0e" d="M1115 230h5v5h-5z"/>
<path fill="#46ff0b" d="M1120 230h5v5h-5z"/>
<path fill="#50ff09" d="M1125 230h5v5h-5z"/>
<path fill="#5bff06" d="M1130 230h5v5h-5z"/>
<path fill="#67ff03" d="M1135 230h5v5h-5z"/>
<path fill="#72ff01" d="M1140 230h5v5h-5z"/>
<path fill="#7eff00" d="M1145 230h5v5h-5z"/>
<path fill="#8aff00" d="M1150 230h5v5h-5z"/>
<path fill="#96ff00" d="M1155 230h5v5h-5z"/>
<path fill="#a3ff00" d="M1160 230h5v5h-5z"/>
<path fill="#afff00" d="M1165 230h5v5h-5z"/>
<path fill="#bdff00" d="M1170 230h5v5h-5z"/>
<path fill="#caff00" d="M1175 230h5v5h-5z"/>
<path fill="#d8ff00" d="M1180 230h5v5h-5z"/>
<path fill="#e6ff00" d="M1185 230h5v5h-5z"/>
<path fill="#f4ff00" d="M1190 230h5v5h-5z"/>
<path fill="#fffb00" d="M1195 230h5v5h-5z"/>
<path fill="#ffed00" d="M1200 230h5v5h-5z"/>
<path fill="#ffe000" d="M1205 230h5v5h-5z"/>
<path fill="#00ff5c" d="M895 235h5v5h-5z"/>
<path fill="#00ff5b" d="M900 235h5v5h-5z"/>
<path fill="#00ff5a" d="M905 235h5v5h-5z"/>
<path fill="#00ff59" d="M910 235h5v5h-5z"/>
<path fill="#00ff58" d="M915 235h5v5h-5z"/>
<path fill="#00ff56" d="M920 235h5v5h-5z"/>
<path fill="#00ff55" d="M925 235h5v5h-5z"/>
<path fill="#00ff54" d="M930 235h5v5h-5z"/>
<path fill="#00ff53" d="M935 235h5v5h-5z"/>
<path fill="#00ff51" d="M940 235h5v5h-5z"/>
<path fill="#00ff50" d="M945 235h5v5h-5z"/>
<path fill="#00ff4f" d="M950 235h5v5h-5z"/>
<path fill="#00ff4d" d="M955 235h5v5h-5z"/>
<path fill="#00ff4c" d="M960 235h5v5h-5z"/>
<path fill="#00ff4a" d="M965 235h5v5h-5z"/>
<path fill="#00ff49" d="M970 235h5v5h-5z"/>
<path fill="#00ff47" d="M975 235h5v5h-5z"/>
<path fill="#00ff46" d="M980 235h5v5h-5z"/>
<path fill="#00ff44" d="M985 235h5v5h-5z"/>
<path fill="#00ff43" d="M990 235h5v5h-5z"/>
<path fill="#00ff41" d="M995 235h5v5h-5z"/>
<path fill="#00ff40" d="M1000 235h5v5h-5z"/>
<path fill="#00ff3e" d="M1005 235h5v5h-5z"/>
<path fill="#00ff3c" d="M1010 235h5v5h-5z"/>
<path fill="#00ff3b" d="M1015 235h5v5h-5z"/>
<path fill="#00ff39" d="M1020 235h5v5h-5z"/>
<path fill="#00ff37" d="M1025 235h5v5h-5z"/>
<path fill="#00ff36" d="M1030 235h5v5h-5z"/>
<path fill="#00ff34" d="M1035 235h5v5h-5z"/>
<path fill="#00ff32" d="M1040 235h5v5h-5z"/>
<path fill="#00ff30" d="M1045 235h5v5h-5z"/>
<path fill="#00ff2e" d="M1050 235h5v5h-5z"/>
<path fill="#00ff2c" d="M1055 235h5v5h-5z"/>
<path fill="#00ff2a" d="M1060 235h5v5h-5z"/>
<path fill="#00ff28" d="M1065 235h5v5h-5z"/>
<path fill="#00ff26" d="M1070 235h5v5h-5z"/>
<path fill="#00ff24" d="M1075 235h5v5h-5z"/>
<path fill="#00ff22" d="M1080 235h5v5h-5z"/>
<path fill="#03ff20" d="M1085 235h5v5h-5z"/>
<path fill="#0dff1e" d="M1090 235h5v5h-5z"/>
<path fill="#16ff1b" d="M1095 235h5v5h-5z"/>
<path fill="#20ff19" d="M1100 235h5v5h-5z"/>
<path fill="#2aff17" d="M1105 235h5v5h-5z"/>
<path fill="#35ff14" d="M1110 235h5v5h-5z"/>
<path fill="#3fff12" d="M1115 235h5v5h-5z"/>
<path fill="#4aff0f" d="M1120 235h5v5h-5z"/>
<path fill="#55ff0d" d="M1125 235h5v5h-5z"/>
<path fill="#60ff0a" d="M1130 235h5v5h-5z"/>
<path fill="#6cff07" d="M1135 235h5v5h-5z"/>
<path fill="#78ff05" d="M1140 235h5v5h-5z"/>
<path fill="#84ff02" d="M1145 235h5v5h-5z"/>
<path fill="#90ff00" d="M1150 235h5v5h-5z"/>
<path fill="#9dff00" d="M1155 235h5v5h-5z"/>
<path fill="#aaff00" d="M1160 235h5v5h-5z"/>
<path fill="#b7ff00" d="M1165 235h5v5h-5z"/>
<path fill="#c4ff00" d="M1170 235h5v5h-5z"/>
<path fill="#d2ff00" d="M1175 235h5v5h-5z"/>
<path fill="#e0ff00" d="M1180 235h5v5h-5z"/>
<path fill="#efff00" d="M1185 235h5v5h-5z"/>
<path fill="#feff00" d="M1190 235h5v5h-5z"/>
<path fill="#fff200" d="M1195 235h5v5h-5z"/>
<path fill="#ffe400" d="M1200 235h5v5h-5z"/>
<path fill="#ffd800" d="M1205 235h5v5h-5z"/>
<path fill="#ffcd00" d="M1210 235h5v5h-5z"/>
<path fill="#00ff60" d="M895 240h5v5h-5z"/>
<path fill="#00ff5f" d="M900 240h5v5h-5z"/>
<path fill="#00ff5e" d="M905 240h5v5h-5z"/>
<path fill="#00ff5d" d="M910 240h5v5h-5z"/>
<path fill="#00ff5c" d="M915 240h5v5h-5z"/>
<path fill="#00ff5a" d="M920 240h5v5h-5z"/>
<path fill="#00ff59" d="M925 240h5v5h-5z"/>
<path fill="#00ff58" d="M930 240h5v5h-5z"/>
<path fill="#00ff57" d="M935 240h5v5h-5z"/>
<path fill="#00ff55" d="M940 240h5v5h-5z"/>
<path fill="#00ff54" d="M945 240h5v5h-5z"/>
<path fill="#00ff53" d="M950 240h5v5h-5z"/>
<path fill="#00ff51" d="M955 240h5v5h-5z"/>
<path fill="#00ff50" d="M960 240h5v5h-5z"/>
<path fill="#00ff4e" d="M965 240h5v5h-5z"/>
<path fill="#00ff4d" d="M970 240h5v5h-5z"/>
<path fill="#00ff4b" d="M975 240h5v5h-5z"/>
<path fill="#00ff4a" d="M980 240h5v5h-5z"/>
<path fill="#00ff49" d="M985 240h5v5h-5z"/>
<path fill="#00ff47" d="M990 240h5v5h-5z"/>
<path fill="#00ff45" d="M995 240h5v5h-5z"/>
<path fill="#00ff44" d="M1000 240h5v5h-5z"/>
<path fill="#00ff42" d="M1005 240h5v5h-5z"/>
<path fill="#00ff41" d="M1010 240h5v5h-5z"/>
<path fill="#00ff3f" d="M1015 240h5v5h-5z"/>
<path fill="#00ff3d" d="M1020 240h5v5h-5z"/>
<path fill="#00ff3b" d="M1025 240h5v5h-5z"/>
<path fill="#00ff3a" d="M1030 240h5v5h-5z"/>
<path fill="#00ff38" d="M1035 240h5v5h-5z"/>
<path fill="#00ff36" d="M1040 240h5v5h-5z"/>
<path fill="#00ff34" d="M1045 240h5v5h-5z"/>
<path fill="#00ff32" d="M1050 240h5v5h-5z"/>
<path fill="#00ff30" d="M1055 240h5v5h-5z"/>
<path fill="#00ff2e" d="M1060 240h5v5h-5z"/>
<path fill="#00ff2c" d="M1065 240h5v5h-5z"/>
<path fill="#00ff2a" d="M1070 240h5v5h-5z"/>
<path fill="#00ff28" d="M1075 240h5v5h-5z"/>
<path fill="#00ff26" d="M1080 240h5v5h-5z"/>
<path fill="#06ff24" d="M1085 240h5v5h-5z"/>
<path fill="#10ff22" d="M1090 240h5v5h-5z"/>
<path fill="#1aff1f" d="M1095 240h5v5h-5z"/>
<path fill="#24ff1d" d="M1100 240h5v5h-5z"/>
<path fill="#2eff1b" d="M1105 240h5v5h-5z"/>
<path fill="#39ff18" d="M1110 240h5v5h-5z"/>
<path fill="#44ff16" d="M1115 240h5v5h-5z"/>
<path fill="#4fff13" d="M1120 240h5v5h-5z"/>
<path fill="#5aff11" d="M1125 240h5v5h-5z"/>
<path fill="#66ff0e" d="M1130 240h5v5h-5z"/>
<path fill="#72ff0b" d="M1135 240h5v5h-5z"/>
<path fill="#7eff09" d="M1140 240h5v5h-5z"/>
<path fill="#8aff06" d="M1145 240h5v5h-5z"/>
<path fill="#97ff03" d="M1150 240h5v5h-5z"/>
<path fill="#a4ff00" d="M1155 240h5v5h-5z"/>
<path fill="#b1ff00" d="M1160 240h5v5h-5z"/>
<path fill="#bfff00" d="M1165 240h5v5h-5z"/>
<path fill="#cdff00" d="M1170 240h5v5h-5z"/>
<path fill="#dbff00" d="M1175 240h5v5h-5z"/>
<path fill="#eaff00" d="M1180 240h5v5h-5z"/>
<path fill="#f9ff00" d="M1185 240h5v5h-5z"/>
<path fill="#fff600" d="M1190 240h5v5h-5z"/>
<path fill="#ffe800" d="M1195 240h5v5h-5z"/>
<path fill="#ffdc00" d="M1200 240h5v5h-5z"/>
<path fill="#ffd000" d="M1205 240h5v5h-5z"/>
<path fill="#ffc500" d="M1210 240h5v5h-5z"/>
<path fill="#ffbb00" d="M1215 240h5v5h-5z"/>
<path fill="#00ff64" d="M895 245h5v5h-5z"/>
<path fill="#00ff63" d="M900 245h5v5h-5z"/>
<path fill="#00ff62" d="M905 245h5v5h-5z"/>
<path fill="#00ff61" d="M910 245h5v5h-5z"/>
<path fill="#00ff60" d="M915 245h5v5h-5z"/>
<path fill="#00ff5e" d="M920 245h5v5h-5z"/>
<path fill="#00ff5d" d="M925 245h5v5h-5z"/>
<path fill="#00ff5c" d="M930 245h5v5h-5z"/>
<path fill="#00ff5b" d="M935 245h5v5h-5z"/>
<path fill="#00ff59" d="M940 245h5v5h-5z"/>
<path fill="#00ff58" d="M945 245h5v5h-5z"/>
<path fill="#00ff57" d="M950 245h5v5h-5z"/>
<path fill="#00ff55" d="M955 245h5v5h-5z"/>
<path fill="#00ff54" d="M960 245h5v5h-5z"/>
<path fill="#00ff53" d="M965 245h5v5h-5z"/>
<path fill="#00ff51" d="M970 245h5v5h-5z"/>
<path fill="#00ff50" d="M975 245h5v5h-5z"/>
<path fill="#00ff4e" d="M980 245h5v5h-5z"/>
<path fill="#00ff4d" d="M985 245h5v5h-5z"/>
<path fill="#00ff4b" d="M990 245h5v5h-5z"/>
<path fill="#00ff4a" d="M995 245h5v5h-5z"/>
<path fill="#00ff48" d="M1000 245h5v5h-5z"/>
<path fill="#00ff46" d="M1005 245h5v5h-5z"/>
<path fill="#00ff45" d="M1010 245h5v5h-5z"/>
<path fill="#00ff43" d="M1015 245h5v5h-5z"/>
<path fill="#00ff41" d="M1020 245h5v5h-5z"/>
<path fill="#00ff40" d="M1025 245h5v5h-5z"/>
<path fill="#00ff3e" d="M1030 245h5v5h-5z"/>
<path fill="#00ff3c" d="M1035 245h5v5h-5z"/>
<path fill="#00ff3a" d="M1040 245h5v5h-5z"/>
<path fill="#00ff38" d="M1045 245h5v5h-5z"/>
<path fill="#00ff37" d="M1050 245h5v5h-5z"/>
<path fill="#00ff35" d="M1055 245h5v5h-5z"/>
<path fill="#00ff33" d="M1060 245h5v5h-5z"/>
<path fill="#00ff31" d="M1065 245h5v5h-5z"/>
<path fill="#00ff2f" d="M1070 245h5v5h-5z"/>
<path fill="#00ff2c" d="M1075 245h5v5h-5z"/>
<path fill="#00ff2a" d="M1080 245h5v5h-5z"/>
<path fill="#09ff28" d="M1085 245h5v5h-5z"/>
<path fill="#13ff26" d="M1090 245h5v5h-5z"/>
<path fill="#1dff24" d="M1095 245h5v5h-5z"/>
<path fill="#28ff21" d="M1100 245h5v5h-5z"/>
<path fill="#32ff1f" d="M1105 245h5v5h-5z"/>
<path fill="#3dff1d" d="M1110 245h5v5h-5z"/>
<path fill="#48ff1a" d="M1115 245h5v5h-5z"/>
<path fill="#54ff18" d="M1120 245h5v5h-5z"/>
<path fill="#5fff15" d="M1125 245h5v5h-5z"/>
<path fill="#6bff12" d="M1130 245h5v5h-5z"/>
<path fill="#77ff10" d="M1135 245h5v5h-5z"/>
<path fill="#84ff0d" d="M1140 245h5v5h-5z"/>
<path fill="#91ff0a" d="M1145 245h5v5h-5z"/>
<path fill="#9eff07" d="M1150 245h5v5h-5z"/>
<path fill="#abff04" d="M1155 245h5v5h-5z"/>
<path fill="#b9ff01" d="M1160 245h5v5h-5z"/>
<path fill="#c7ff00" d="M1165 245h5v5h-5z"/>
<path fill="#d5ff00" d="M1170 245h5v5h-5z"/>
<path fill="#e4ff00" d="M1175 245h5v5h-5z"/>
<path fill="#f3ff00" d="M1180 245h5v5h-5z"/>
<path fill="#fffb00" d="M1185 245h5v5h-5z"/>
<path fill="#ffed00" d="M1190 245h5v5h-5z"/>
<path fill="#ffdf00" d="M1195 245h5v5h-5z"/>
<path fill="#ffd300" d="M1200 245h5v5h-5z"/>
<path fill="#ffc800" d="M1205 245h5v5h-5z"/>
<path fill="#ffbe00" d="M1210 245h5v5h-5z"/>
<path fill="#ffb400" d="M1215 245h5v5h-5z"/>
<path fill="#ffab00" d="M1220 245h5v5h-5z"/>
<path fill="#00ff68" d="M895 250h5v5h-5z"/>
<path fill="#00ff67" d="M900 250h5v5h-5z"/>
<path fill="#00ff66" d="M905 250h5v5h-5z"/>
<path fill="#00ff65" d="M910 250h5v5h-5z"/>
<path fill="#00ff64" d="M915 250h5v5h-5z"/>
<path fill="#00ff63" d="M920 250h5v5h-5z"/>
<path fill="#00ff61" d="M925 250h5v5h-5z"/>
<path fill="#00ff60" d="M930 250h5v5h-5z"/>
<path fill="#00ff5f" d="M935 250h5v5h-5z"/>
<path fill="#00ff5e" d="M940 250h5v5h-5z"/>
<path fill="#00ff5c" d="M945 250h5v5h-5z"/>
<path fill="#00ff5b" d="M950 250h5v5h-5z"/>
<path fill="#00ff5a" d="M955 250h5v5h-5z"/>
<path fill="#00ff58" d="M960 250h5v5h-5z"/>
<path fill="#00ff57" d="M965 250h5v5h-5z"/>
<path fill="#00ff55" d="M970 250h5v5h-5z"/>
<path fill="#00ff54" d="M975 250h5v5h-5z"/>
<path fill="#00ff52" d="M980 250h5v5h-5z"/>
<path fill="#00ff51" d="M985 250h5v5h-5z"/>
<path fill="#00ff4f" d="M990 250h5v5h-5z"/>
<path fill="#00ff4e" d="M995 250h5v5h-5z"/>
<path fill="#00ff4c" d="M1000 250h5v5h-5z"/>
<path fill="#00ff4b" d="M1005 250h5v5h-5z"/>
<path fill="#00ff49" d="M1010 250h5v5h-5z"/>
<path fill="#00ff48" d="M1015 250h5v5h-5z"/>
<path fill="#00ff46" d="M1020 250h5v5h-5z"/>
<path fill="#00ff44" d="M1025 250h5v5h-5z"/>
<path fill="#00ff42" d="M1030 250h5v5h-5z"/>
<path fill="#00ff41" d="M1035 250h5v5h-5z"/>
<path fill="#00ff3f" d="M1040 250h5v5h-5z"/>
<path fill="#00ff3d" d="M1045 250h5v5h-5z"/>
<path fill="#00ff3b" d="M1050 250h5v5h-5z"/>
<path fill="#00ff39" d="M1055 250h5v5h-5z"/>
<path fill="#00ff37" d="M1060 250h5v5h-5z"/>
<path fill="#00ff35" d="M1065 250h5v5h-5z"/>
<path fill="#00ff33" d="M1070 250h5v5h-5z"/>
<path fill="#00ff31" d="M1075 250h5v5h-5z"/>
<path fill="#02ff2f" d="M1080 250h5v5h-5z"/>
<path fill="#0cff2d" d="M1085 250h5v5h-5z"/>
<path fill="#17ff2a" d="M1090 250h5v5h-5z"/>
<path fill="#21ff28" d="M1095 250h5v5h-5z"/>
<path fill="#2cff26" d="M1100 250h5v5h-5z"/>
<path fill="#37ff23" d="M1105 250h5v5h-5z"/>
<path fill="#42ff21" d="M1110 250h5v5h-5z"/>
<path fill="#4dff1f" d="M1115 250h5v5h-5z"/>
<path fill="#59ff1c" d="M1120 250h5v5h-5z"/>
<path fill="#65ff19" d="M1125 250h5v5h-5z"/>
<path fill="#71ff17" d="M1130 250h5v5h-5z"/>
<path fill="#7eff14" d="M1135 250h5v5h-5z"/>
<path fill="#8aff11" d="M1140 250h5v5h-5z"/>
<path fill="#98ff0e" d="M1145 250h5v5h-5z"/>
<path fill="#a5ff0b" d="M1150 250h5v5h-5z"/>
<path fill="#b3ff08" d="M1155 250h5v5h-5z"/>
<path fill="#c1ff05" d="M1160 250h5v5h-5z"/>
<path fill="#cfff02" d="M1165 250h5v5h-5z"/>
<path fill="#deff00" d="M1170 250h5v5h-5z"/>
<path fill="#eeff00" d="M1175 250h5v5h-5z"/>
<path fill="#fdff00" d="M1180 250h5v5h-5z"/>
<path fill="#fff100" d="M1185 250h5v5h-5z"/>
<path fill="#ffe400" d="M1190 250h5v5h-5z"/>
<path fill="#ffd700" d="M1195 250h5v5h-5z"/>
<path fill="#ffcb00" d="M1200 250h5v5h-5z"/>
<path fill="#ffc000" d="M1205 250h5v5h-5z"/>
<path fill="#ffb600" d="M1210 250h5v5h-5z"/>
<path fill="#ffad00" d="M1215 250h5v5h-5z"/>
<path fill="#ffa500" d="M1220 250h5v5h-5z"/>
<path fill="#ff9d00" d="M1225 250h5v5h-5z"/>
<path fill="#00ff6d" d="M895 255h5v5h-5z"/>
<path fill="#00ff6b" d="M900 255h5v5h-5z"/>
<path fill="#00ff6a" d="M905 255h5v5h-5z"/>
<path fill="#00ff69" d="M910 255h5v5h-5z"/>
<path fill="#00ff68" d="M915 255h5v5h-5z"/>
<path fill="#00ff67" d="M920 255h5v5h-5z"/>
<path fill="#00ff66" d="M925 255h5v5h-5z"/>
<path fill="#00ff64" d="M930 255h5v5h-5z"/>
<path fill="#00ff63" d="M935 255h5v5h-5z"/>
<path fill="#00ff62" d="M940 255h5v5h-5z"/>
<path fill="#00ff61" d="M945 255h5v5h-5z"/>
<path fill="#00ff5f" d="M950 255h5v5h-5z"/>
<path fill="#00ff5e" d="M955 255h5v5h-5z"/>
<path fill="#00ff5d" d="M960 255h5v5h-5z"/>
<path fill="#00ff5b" d="M965 255h5v5h-5z"/>
<path fill="#00ff5a" d="M970 255h5v5h-5z"/>
<path fill="#00ff58" d="M975 255h5v5h-5z"/>
<path fill="#00ff57" d="M980 255h5v5h-5z"/>
<path fill="#00ff55" d="M985 255h5v5h-5z"/>
<path fill="#00ff54" d="M990 255h5v5h-5z"/>
<path fill="#00ff52" d="M995 255h5v5h-5z"/>
<path fill="#00ff51" d="M1000 255h5v5h-5z"/>
<path fill="#00ff4f" d="M1005 255h5v5h-5z"/>
<path fill="#00ff4e" d="M1010 255h5v5h-5z"/>
<path fill="#00ff4c" d="M1015 255h5v5h-5z"/>
<path fill="#00ff4a" d="M1020 255h5v5h-5z"/>
<path fill="#00ff49" d="M1025 255h5v5h-5z"/>
<path fill="#00ff47" d="M1030 255h5v5h-5z"/>
<path fill="#00ff45" d="M1035 255h5v5h-5z"/>
<path fill="#00ff43" d="M1040 255h5v5h-5z"/>
<path fill="#00ff42" d="M1045 255h5v5h-5z"/>
<path fill="#00ff40" d="M1050 255h5v5h-5z"/>
<path fill="#00ff3e" d="M1055 255h5v5h-5z"/>
<path fill="#00ff3c" d="M1060 255h5v5h-5z"/>
<path fill="#00ff3a" d="M1065 255h5v5h-5z"/>
<path fill="#00ff38" d="M1070 255h5v5h-5z"/>
<path fill="#00ff36" d="M1075 255h5v5h-5z"/>
<path fill="#05ff33" d="M1080 255h5v5h-5z"/>
<path fill="#10ff31" d="M1085 255h5v5h-5z"/>
<path fill="#1aff2f" d="M1090 255h5v5h-5z"/>
<path fill="#25ff2d" d="M1095 255h5v5h-5z"/>
<path fill="#30ff2a" d="M1100 255h5v5h-5z"/>
<path fill="#3bff28" d="M1105 255h5v5h-5z"/>
<path fill="#47ff26" d="M1110 255h5v5h-5z"/>
<path fill="#52ff23" d="M1115 255h5v5h-5z"/>
<path fill="#5eff21" d="M1120 255h5v5h-5z"/>
<path fill="#6bff1e" d="M1125 255h5v5h-5z"/>
<path fill="#77ff1b" d="M1130 255h5v5h-5z"/>
<path fill="#84ff19" d="M1135 255h5v5h-5z"/>
<path fill="#91ff16" d="M1140 255h5v5h-5z"/>
<path fill="#9fff13" d="M1145 255h5v5h-5z"/>
<path fill="#adff10" d="M1150 255h5v5h-5z"/>
<path fill="#bbff0d" d="M1155 255h5v5h-5z"/>
<path fill="#c9ff0a" d="M1160 255h5v5h-5z"/>
<path fill="#d8ff07" d="M1165 255h5v5h-5z"/>
<path fill="#e8ff03" d="M1170 255h5v5h-5z"/>
<path fill="#f8ff00" d="M1175 255h5v5h-5z"/>
<path fill="#fff600" d="M1180 255h5v5h-5z"/>
<path fill="#ffe800" d="M1185 255h5v5h-5z"/>
<path fill="#ffda00" d="M1190 255h5v5h-5z"/>
<path fill="#ffce00" d="M1195 255h5v5h-5z"/>
<path fill="#ffc300" d="M1200 255h5v5h-5z"/>
<path fill="#ffb900" d="M1205 255h5v5h-5z"/>
<path fill="#ffaf00" d="M1210 255h5v5h-5z"/>
<path fill="#ffa600" d="M1215 255h5v5h-5z"/>
<path fill="#ff9e00" d="M1220 255h5v5h-5z"/>
<path fill="#ff9600" d="M1225 255h5v5h-5z"/>
<path fill="#ff8f00" d="M1230 255h5v5h-5z"/>
<path fill="#00ff71" d="M895 260h5v5h-5z"/>
<path fill="#00ff70" d="M900 260h5v5h-5z"/>
<path fill="#00ff6f" d="M905 260h5v5h-5z"/>
<path fill="#00ff6e" d="M910 260h5v5h-5z"/>
<path fill="#00ff6c" d="M915 260h5v5h-5z"/>
<path fill="#00ff6b" d="M920 260h5v5h-5z"/>
<path fill="#00ff6a" d="M925 260h5v5h-5z"/>
<path fill="#00ff69" d="M930 260h5v5h-5z"/>
<path fill="#00ff68" d="M935 260h5v5h-5z"/>
<path fill="#00ff66" d="M940 260h5v5h-5z"/>
<path fill="#00ff65" d="M945 260h5v5h-5z"/>
<path fill="#00ff64" d="M950 260h5v5h-5z"/>
<path fill="#00ff62" d="M955 260h5v5h-5z"/>
<path fill="#00ff61" d="M960 260h5v5h-5z"/>
<path fill="#00ff60" d="M965 260h5v5h-5z"/>
<path fill="#00ff5e" d="M970 260h5v5h-5z"/>
<path fill="#00ff5d" d="M975 260h5v5h-5z"/>
<path fill="#00ff5c" d="M980 260h5v5h-5z"/>
<path fill="#00ff5a" d="M985 260h5v5h-5z"/>
<path fill="#00ff59" d="M990 260h5v5h-5z"/>
<path fill="#00ff57" d="M995 260h5v5h-5z"/>
<path fill="#00ff56" d="M1000 260h5v5h-5z"/>
<path fill="#00ff54" d="M1005 260h5v5h-5z"/>
<path fill="#00ff52" d="M1010 260h5v5h-5z"/>
<path fill="#00ff51" d="M1015 260h5v5h-5z"/>
<path fill="#00ff4f" d="M1020 260h5v5h-5z"/>
<path fill="#00ff4d" d="M1025 260h5v5h-5z"/>
<path fill="#00ff4c" d="M1030 260h5v5h-5z"/>
<path fill="#00ff4a" d="M1035 260h5v5h-5z"/>
<path fill="#00ff48" d="M1040 260h5v5h-5z"/>
<path fill="#00ff46" d="M1045 260h5v5h-5z"/>
<path fill="#00ff44" d="M1050 260h5v5h-5z"/>
<path fill="#00ff43" d="M1055 260h5v5h-5z"/>
<path fill="#00ff41" d="M1060 260h5v5h-5z"/>
<path fill="#00ff3f" d="M1065 260h5v5h-5z"/>
<path fill="#00ff3d" d="M1070 260h5v5h-5z"/>
<path fill="#00ff3a" d="M1075 260h5v5h-5z"/>
<path fill="#09ff38" d="M1080 260h5v5h-5z"/>
<path fill="#13ff36" d="M1085 260h5v5h-5z"/>
<path fill="#1eff34" d="M1090 260h5v5h-5z"/>
<path fill="#29ff32" d="M1095 260h5v5h-5z"/>
<path fill="#34ff2f" d="M1100 260h5v5h-5z"/>
<path fill="#40ff2d" d="M1105 260h5v5h-5z"/>
<path fill="#4bff2b" d="M1110 260h5v5h-5z"/>
<path fill="#58ff28" d="M1115 260h5v5h-5z"/>
<path fill="#64ff26" d="M1120 260h5v5h-5z"/>
<path fill="#71ff23" d="M1125 260h5v5h-5z"/>
<path fill="#7eff20" d="M1130 260h5v5h-5z"/>
<path fill="#8bff1e" d="M1135 260h5v5h-5z"/>
<path fill="#98ff1b" d="M1140 260h5v5h-5z"/>
<path fill="#a6ff18" d="M1145 260h5v5h-5z"/>
<path fill="#b5ff15" d="M1150 260h5v5h-5z"/>
<path fill="#c3ff12" d="M1155 260h5v5h-5z"/>
<path fill="#d2ff0f" d="M1160 260h5v5h-5z"/>
<path fill="#e2ff0c" d="M1165 260h5v5h-5z"/>
<path fill="#f2ff08" d="M1170 260h5v5h-5z"/>
<path fill="#fffc05" d="M1175 260h5v5h-5z"/>
<path fill="#ffec01" d="M1180 260h5v5h-5z"/>
<path fill="#ffde00" d="M1185 260h5v5h-5z"/>
<path fill="#ffd200" d="M1190 260h5v5h-5z"/>
<path fill="#ffc600" d="M1195 260h5v5h-5z"/>
<path fill="#ffbb00" d="M1200 260h5v5h-5z"/>
<path fill="#ffb100" d="M1205 260h5v5h-5z"/>
<path fill="#ffa800" d="M1210 260h5v5h-5z"/>
<path fill="#ffa000" d="M1215 260h5v5h-5z"/>
<path fill="#ff9800" d="M1220 260h5v5h-5z"/>
<path fill="#ff9000" d="M1225 260h5v5h-5z"/>
<path fill="#ff8900" d="M1230 260h5v5h-5z"/>
<path fill="#ff8300" d="M1235 260h5v5h-5z"/>
<path fill="#00ff75" d="M895 265h5v5h-5z"/>
<path fill="#00ff74" d="M900 265h5v5h-5z"/>
<path fill="#00ff73" d="M905 265h5v5h-5z"/>
<path fill="#00ff72" d="M910 265h5v5h-5z"/>
<path fill="#00ff71" d="M915 265h5v5h-5z"/>
<path fill="#00ff70" d="M920 265h5v5h-5z"/>
<path fill="#00ff6f" d="M925 265h5v5h-5z"/>
<path fill="#00ff6d" d="M930 265h5v5h-5z"/>
<path fill="#00ff6c" d="M935 265h5v5h-5z"/>
<path fill="#00ff6b" d="M940 265h5v5h-5z"/>
<path fill="#00ff6a" d="M945 265h5v5h-5z"/>
<path fill="#00ff68" d="M950 265h5v5h-5z"/>
<path fill="#00ff67" d="M955 265h5v5h-5z"/>
<path fill="#00ff66" d="M960 265h5v5h-5z"/>
<path fill="#00ff65" d="M965 265h5v5h-5z"/>
<path fill="#00ff63" d="M970 265h5v5h-5z"/>
<path fill="#00ff62" d="M975 265h5v5h-5z"/>
<path fill="#00ff60" d="M980 265h5v5h-5z"/>
<path fill="#00ff5f" d="M985 265h5v5h-5z"/>
<path fill="#00ff5d" d="M990 265h5v5h-5z"/>
<path fill="#00ff5c" d="M995 265h5v5h-5z"/>
<path fill="#00ff5a" d="M1000 265h5v5h-5z"/>
<path fill="#00ff59" d="M1005 265h5v5h-5z"/>
<path fill="#00ff57" d="M1010 265h5v5h-5z"/>
<path fill="#00ff56" d="M1015 265h5v5h-5z"/>
<path fill="#00ff54" d="M1020 265h5v5h-5z"/>
<path fill="#00ff52" d="M1025 265h5v5h-5z"/>
<path fill="#00ff51" d="M1030 265h5v5h-5z"/>
<path fill="#00ff4f" d="M1035 265h5v5h-5z"/>
<path fill="#00ff4d" d="M1040 265h5v5h-5z"/>
<path fill="#00ff4b" d="M1045 265h5v5h-5z"/>
<path fill="#00ff49" d="M1050 265h5v5h-5z"/>
<path fill="#00ff48" d="M1055 265h5v5h-5z"/>
<path fill="#00ff46" d="M1060 265h5v5h-5z"/>
<path fill="#00ff44" d="M1065 265h5v5h-5z"/>
<path fill="#00ff42" d="M1070 265h5v5h-5z"/>
<path fill="#01ff40" d="M1075 265h5v5h-5z"/>
<path fill="#0cff3d" d="M1080 265h5v5h-5z"/>
<path fill="#17ff3b" d="M1085 265h5v5h-5z"/>
<path fill="#22ff39" d="M1090 265h5v5h-5z"/>
<path fill="#2dff37" d="M1095 265h5v5h-5z"/>
<path fill="#39ff34" d="M1100 265h5v5h-5z"/>
<path fill="#45ff32" d="M1105 265h5v5h-5z"/>
<path fill="#51ff30" d="M1110 265h5v5h-5z"/>
<path fill="#5dff2d" d="M1115 265h5v5h-5z"/>
<path fill="#6aff2b" d="M1120 265h5v5h-5z"/>
<path fill="#77ff28" d="M1125 265h5v5h-5z"/>
<path fill="#84ff25" d="M1130 265h5v5h-5z"/>
<path fill="#92ff23" d="M1135 265h5v5h-5z"/>
<path fill="#a0ff20" d="M1140 265h5v5h-5z"/>
<path fill="#aeff1d" d="M1145 265h5v5h-5z"/>
<path fill="#bdff1a" d="M1150 265h5v5h-5z"/>
<path fill="#ccff17" d="M1155 265h5v5h-5z"/>
<path fill="#dcff14" d="M1160 265h5v5h-5z"/>
<path fill="#ecff11" d="M1165 265h5v5h-5z"/>
<path fill="#fcff0d" d="M1170 265h5v5h-5z"/>
<path fill="#fff109" d="M1175 265h5v5h-5z"/>
<path fill="#ffe306" d="M1180 265h5v5h-5z"/>
<path fill="#ffd502" d="M1185 265h5v5h-5z"/>
<path fill="#ffc900" d="M1190 265h5v5h-5z"/>
<path fill="#ffbe00" d="M1195 265h5v5h-5z"/>
<path fill="#ffb400" d="M1200 265h5v5h-5z"/>
<path fill="#ffaa00" d="M1205 265h5v5h-5z"/>
<path fill="#ffa100" d="M1210 265h5v5h-5z"/>
<path fill="#ff9900" d="M1215 265h5v5h-5z"/>
<path fill="#ff9200" d="M1220 265h5v5h-5z"/>
<path fill="#ff8a00" d="M1225 265h5v5h-5z"/>
<path fill="#ff8400" d="M1230 265h5v5h-5z"/>
<path fill="#ff7d00" d="M1235 265h5v5h-5z"/>
<path fill="#ff7800" d="M1240 265h5v5h-5z"/>
<path fill="#00ff7a" d="M895 270h5v5h-5z"/>
<path fill="#00ff79" d="M900 270h5v5h-5z"/>
<path fill="#00ff78" d="M905 270h5v5h-5z"/>
<path fill="#00ff77" d="M910 270h5v5h-5z"/>
<path fill="#00ff76" d="M915 270h5v5h-5z"/>
<path fill="#00ff75" d="M920 270h5v5h-5z"/>
<path fill="#00ff73" d="M925 270h5v5h-5z"/>
<path fill="#00ff72" d="M930 270h5v5h-5z"/>
<path fill="#00ff71" d="M935 270h5v5h-5z"/>
<path fill="#00ff70" d="M940 270h5v5h-5z"/>
<path fill="#00ff6f" d="M945 270h5v5h-5z"/>
<path fill="#00ff6d" d="M950 270h5v5h-5z"/>
<path fill="#00ff6c" d="M955 270h5v5h-5z"/>
<path fill="#00ff6b" d="M960 270h5v5h-5z"/>
<path fill="#00ff69" d="M965 270h5v5h-5z"/>
<path fill="#00ff68" d="M970 270h5v5h-5z"/>
<path fill="#00ff67" d="M975 270h5v5h-5z"/>
<path fill="#00ff65" d="M980 270h5v5h-5z"/>
<path fill="#00ff64" d="M985 270h5v5h-5z"/>
<path fill="#00ff62" d="M990 270h5v5h-5z"/>
<path fill="#00ff61" d="M995 270h5v5h-5z"/>
<path fill="#00ff5f" d="M1000 270h5v5h-5z"/>
<path fill="#00ff5e" d="M1005 270h5v5h-5z"/>
<path fill="#00ff5c" d="M1010 270h5v5h-5z"/>
<path fill="#00ff5b" d="M1015 270h5v5h-5z"/>
<path fill="#00ff59" d="M1020 270h5v5h-5z"/>
<path fill="#00ff58" d="M1025 270h5v5h-5z"/>
<path fill="#00ff56" d="M1030 270h5v5h-5z"/>
<path fill="#00ff54" d="M1035 270h5v5h-5z"/>
<path fill="#00ff52" d="M1040 270h5v5h-5z"/>
<path fill="#00ff51" d="M1045 270h5v5h-5z"/>
<path fill="#00ff4f" d="M1050 270h5v5h-5z"/>
<path fill="#00ff4d" d="M1055 270h5v5h-5z"/>
<path fill="#00ff4b" d="M1060 270h5v5h-5z"/>
<path fill="#00ff49" d="M1065 270h5v5h-5z"/>
<path fill="#00ff47" d="M1070 270h5v5h-5z"/>
<path fill="#05ff45" d="M1075 270h5v5h-5z"/>
<path fill="#10ff43" d="M1080 270h5v5h-5z"/>
<path fill="#1bff41" d="M1085 270h5v5h-5z"/>
<path fill="#26ff3e" d="M1090 270h5v5h-5z"/>
<path fill="#32ff3c" d="M1095 270h5v5h-5z"/>
<path fill="#3dff3a" d="M1100 270h5v5h-5z"/>
<path fill="#4aff37" d="M1105 270h5v5h-5z"/>
<path fill="#56ff35" d="M1110 270h5v5h-5z"/>
<path fill="#63ff33" d="M1115 270h5v5h-5z"/>
<path fill="#70ff30" d="M1120 270h5v5h-5z"/>
<path fill="#7dff2d" d="M1125 270h5v5h-5z"/>
<path fill="#8bff2b" d="M1130 270h5v5h-5z"/>
<path fill="#99ff28" d="M1135 270h5v5h-5z"/>
<path fill="#a8ff25" d="M1140 270h5v5h-5z"/>
<path fill="#b7ff22" d="M1145 270h5v5h-5z"/>
<path fill="#c6ff1f" d="M1150 270h5v5h-5z"/>
<path fill="#d6ff1c" d="M1155 270h5v5h-5z"/>
<path fill="#e6ff19" d="M1160 270h5v5h-5z"/>
<path fill="#f7ff16" d="M1165 270h5v5h-5z"/>
<path fill="#fff712" d="M1170 270h5v5h-5z"/>
<path fill="#ffe70e" d="M1175 270h5v5h-5z"/>
<path fill="#ffd90a" d="M1180 270h5v5h-5z"/>
<path fill="#ffcc06" d="M1185 270h5v5h-5z"/>
<path fill="#ffc103" d="M1190 270h5v5h-5z"/>
<path fill="#ffb600" d="M1195 270h5v5h-5z"/>
<path fill="#ffac00" d="M1200 270h5v5h-5z"/>
<path fill="#ffa300" d="M1205 270h5v5h-5z"/>
<path fill="#ff9b00" d="M1210 270h5v5h-5z"/>
<path fill="#ff9300" d="M1215 270h5v5h-5z"/>
<path fill="#ff8b00" d="M1220 270h5v5h-5z"/>
<path fill="#ff8500" d="M1225 270h5v5h-5z"/>
<path fill="#ff7e00" d="M1230 270h5v5h-5z"/>
<path fill="#ff7800" d="M1235 270h5v5h-5z"/>
<path fill="#ff7300" d="M1240 270h5v5h-5z"/>
<path fill="#ff6d00" d="M1245 270h5v5h-5z"/>
<path fill="#00ff7e" d="M900 275h5v5h-5z"/>
<path fill="#00ff7d" d="M905 275h5v5h-5z"/>
<path fill="#00ff7c" d="M910 275h5v5h-5z"/>
<path fill="#00ff7a" d="M915 275h5v5h-5z"/>
<path fill="#00ff79" d="M920 275h5v5h-5z"/>
<path fill="#00ff78" d="M925 275h5v5h-5z"/>
<path fill="#00ff77" d="M930 275h5v5h-5z"/>
<path fill="#00ff76" d="M935 275h5v5h-5z"/>
<path fill="#00ff75" d="M940 275h5v5h-5z"/>
<path fill="#00ff74" d="M945 275h5v5h-5z"/>
<path fill="#00ff72" d="M950 275h5v5h-5z"/>
<path fill="#00ff71" d="M955 275h5v5h-5z"/>
<path fill="#00ff70" d="M960 275h5v5h-5z"/>
<path fill="#00ff6f" d="M965 275h5v5h-5z"/>
<path fill="#00ff6d" d="M970 275h5v5h-5z"/>
<path fill="#00ff6c" d="M975 275h5v5h-5z"/>
<path fill="#00ff6a" d="M980 275h5v5h-5z"/>
<path fill="#00ff69" d="M985 275h5v5h-5z"/>
<path fill="#00ff68" d="M990 275h5v5h-5z"/>
<path fill="#00ff66" d="M995 275h5v5h-5z"/>
<path fill="#00ff65" d="M1000 275h5v5h-5z"/>
<path fill="#00ff63" d="M1005 275h5v5h-5z"/>
<path fill="#00ff62" d="M1010 275h5v5h-5z"/>
<path fill="#00ff60" d="M1015 275h5v5h-5z"/>
<path fill="#00ff5e" d="M1020 275h5v5h-5z"/>
<path fill="#00ff5d" d="M1025 275h5v5h-5z"/>
<path fill="#00ff5b" d="M1030 275h5v5h-5z"/>
<path fill="#00ff59" d="M1035 275h5v5h-5z"/>
<path fill="#00ff58" d="M1040 275h5v5h-5z"/>
<path fill="#00ff56" d="M1045 275h5v5h-5z"/>
<path fill="#00ff54" d="M1050 275h5v5h-5z"/>
<path fill="#00ff52" d="M1055 275h5v5h-5z"/>
<path fill="#00ff50" d="M1060 275h5v5h-5z"/>
<path fill="#00ff4e" d="M1065 275h5v5h-5z"/>
<path fill="#00ff4c" d="M1070 275h5v5h-5z"/>
<path fill="#08ff4a" d="M1075 275h5v5h-5z"/>
<path fill="#13ff48" d="M1080 275h5v5h-5z"/>
<path fill="#1fff46" d="M1085 275h5v5h-5z"/>
<path fill="#2aff44" d="M1090 275h5v5h-5z"/>
<path fill="#36ff42" d="M1095 275h5v5h-5z"/>
<path fill="#42ff3f" d="M1100 275h5v5h-5z"/>
<path fill="#4fff3d" d="M1105 275h5v5h-5z"/>
<path fill="#5cff3b" d="M1110 275h5v5h-5z"/>
<path fill="#69ff38" d="M1115 275h5v5h-5z"/>
<path fill="#76ff36" d="M1120 275h5v5h-5z"/>
<path fill="#84ff33" d="M1125 275h5v5h-5z"/>
<path fill="#93ff30" d="M1130 275h5v5h-5z"/>
<path fill="#a1ff2e" d="M1135 275h5v5h-5z"/>
<path fill="#b0ff2b" d="M1140 275h5v5h-5z"/>
<path fill="#c0ff28" d="M1145 275h5v5h-5z"/>
<path fill="#cfff25" d="M1150 275h5v5h-5z"/>
<path fill="#e0ff22" d="M1155 275h5v5h-5z"/>
<path fill="#f1ff1f" d="M1160 275h5v5h-5z"/>
<path fill="#fffc1b" d="M1165 275h5v5h-5z"/>
<path fill="#ffec16" d="M1170 275h5v5h-5z"/>
<path fill="#ffdd12" d="M1175 275h5v5h-5z"/>
<path fill="#ffd00e" d="M1180 275h5v5h-5z"/>
<path fill="#ffc40a" d="M1185 275h5v5h-5z"/>
<path fill="#ffb907" d="M1190 275h5v5h-5z"/>
<path fill="#ffae04" d="M1195 275h5v5h-5z"/>
<path fill="#ffa501" d="M1200 275h5v5h-5z"/>
<path fill="#ff9c00" d="M1205 275h5v5h-5z"/>
<path fill="#ff9400" d="M1210 275h5v5h-5z"/>
<path fill="#ff8d00" d="M1215 275h5v5h-5z"/>
<path fill="#ff8500" d="M1220 275h5v5h-5z"/>
<path fill="#ff7f00" d="M1225 275h5v5h-5z"/>
<path fill="#ff7900" d="M1230 275h5v5h-5z"/>
<path fill="#ff7300" d="M1235 275h5v5h-5z"/>
<path fill="#ff6d00" d="M1240 275h5v5h-5z"/>
<path fill="#ff6800" d="M1245 275h5v5h-5z"/>
<path fill="#ff6300" d="M1250 275h5v5h-5z"/>
<path fill="#00ff83" d="M900 280h5v5h-5z"/>
<path fill="#00ff82" d="M905 280h5v5h-5z"/>
<path fill="#00ff81" d="M910 280h5v5h-5z"/>
<path fill="#00ff80" d="M915 280h5v5h-5z"/>
<path fill="#00ff7e" d="M920 280h5v5h-5z"/>
<path fill="#00ff7d" d="M925 280h5v5h-5z"/>
<path fill="#00ff7c" d="M930 280h5v5h-5z"/>
<path fill="#00ff7b" d="M935 280h5v5h-5z"/>
<path fill="#00ff7a" d="M940 280h5v5h-5z"/>
<path fill="#00ff79" d="M945 280h5v5h-5z"/>
<path fill="#00ff78" d="M950 280h5v5h-5z"/>
<path fill="#00ff76" d="M955 280h5v5h-5z"/>
<path fill="#00ff75" d="M960 280h5v5h-5z"/>
<path fill="#00ff74" d="M965 280h5v5h-5z"/>
<path fill="#00ff72" d="M970 280h5v5h-5z"/>
<path fill="#00ff71" d="M975 280h5v5h-5z"/>
<path fill="#00ff70" d="M980 280h5v5h-5z"/>
<path fill="#00ff6e" d="M985 280h5v5h-5z"/>
<path fill="#00ff6d" d="M990 280h5v5h-5z"/>
<path fill="#00ff6c" d="M995 280h5v5h-5z"/>
<path fill="#00ff6a" d="M1000 280h5v5h-5z"/>
<path fill="#00ff69" d="M1005 280h5v5h-5z"/>
<path fill="#00ff67" d="M1010 280h5v5h-5z"/>
<path fill="#00ff66" d="M1015 280h5v5h-5z"/>
<path fill="#00ff64" d="M1020 280h5v5h-5z"/>
<path fill="#00ff62" d="M1025 280h5v5h-5z"/>
<path fill="#00ff61" d="M1030 280h5v5h-5z"/>
<path fill="#00ff5f" d="M1035 280h5v5h-5z"/>
<path fill="#00ff5d" d="M1040 280h5v5h-5z"/>
<path fill="#00ff5c" d="M1045 280h5v5h-5z"/>
<path fill="#00ff5a" d="M1050 280h5v5h-5z"/>
<path fill="#00ff58" d="M1055 280h5v5h-5z"/>
<path fill="#00ff56" d="M1060 280h5v5h-5z"/>
<path fill="#00ff54" d="M1065 280h5v5h-5z"/>
<path fill="#00ff52" d="M1070 280h5v5h-5z"/>
<path fill="#0cff50" d="M1075 280h5v5h-5z"/>
<path fill="#17ff4e" d="M1080 280h5v5h-5z"/>
<path fill="#23ff4c" d="M1085 280h5v5h-5z"/>
<path fill="#2fff4a" d="M1090 280h5v5h-5z"/>
<path fill="#3bff48" d="M1095 280h5v5h-5z"/>
<path fill="#48ff45" d="M1100 280h5v5h-5z"/>
<path fill="#54ff43" d="M1105 280h5v5h-5z"/>
<path fill="#62ff41" d="M1110 280h5v5h-5z"/>
<path fill="#6fff3e" d="M1115 280h5v5h-5z"/>
<path fill="#7dff3c" d="M1120 280h5v5h-5z"/>
<path fill="#8cff39" d="M1125 280h5v5h-5z"/>
<path fill="#9aff36" d="M1130 280h5v5h-5z"/>
<path fill="#a9ff34" d="M1135 280h5v5h-5z"/>
<path fill="#b9ff31" d="M1140 280h5v5h-5z"/>
<path fill="#c9ff2e" d="M1145 280h5v5h-5z"/>
<path fill="#d9ff2b" d="M1150 280h5v5h-5z"/>
<path fill="#eaff28" d="M1155 280h5v5h-5z"/>
<path fill="#fcff25" d="M1160 280h5v5h-5z"/>
<path fill="#fff120" d="M1165 280h5v5h-5z"/>
<path fill="#ffe21b" d="M1170 280h5v5h-5z"/>
<path fill="#ffd416" d="M1175 280h5v5h-5z"/>
<path fill="#ffc712" d="M1180 280h5v5h-5z"/>
<path fill="#ffbb0e" d="M1185 280h5v5h-5z"/>
<path fill="#ffb10b" d="M1190 280h5v5h-5z"/>
<path fill="#ffa708" d="M1195 280h5v5h-5z"/>
<path fill="#ff9e05" d="M1200 280h5v5h-5z"/>
<path fill="#ff9502" d="M1205 280h5v5h-5z"/>
<path fill="#ff8e00" d="M1210 280h5v5h-5z"/>
<path fill="#ff8600" d="M1215 280h5v5h-5z"/>
<path fill="#ff8000" d="M1220 280h5v5h-5z"/>
<path fill="#ff7900" d="M1225 280h5v5h-5z"/>
<path fill="#ff7300" d="M1230 280h5v5h-5z"/>
<path fill="#ff6e00" d="M1235 280h5v5h-5z"/>
<path fill="#ff6900" d="M1240 280h5v5h-5z"/>
<path fill="#ff6400" d="M1245 280h5v5h-5z"/>
<path fill="#ff5f00" d="M1250 280h5v5h-5z"/>
<path fill="#ff5a00" d="M1255 280h5v5h-5z"/>
<path fill="#ff5600" d="M1260 280h5v5h-5z"/>
<path fill="#00ff88" d="M900 285h5v5h-5z"/>
<path fill="#00ff87" d="M905 285h5v5h-5z"/>
<path fill="#00ff86" d="M910 285h5v5h-5z"/>
<path fill="#00ff85" d="M915 285h5v5h-5z"/>
<path fill="#00ff84" d="M920 285h5v5h-5z"/>
<path fill="#00ff83" d="M925 285h5v5h-5z"/>
<path fill="#00ff81" d="M930 285h5v5h-5z"/>
<path fill="#00ff80" d="M935 285h5v5h-5z"/>
<path fill="#00ff7f" d="M940 285h5v5h-5z"/>
<path fill="#00ff7e" d="M945 285h5v5h-5z"/>
<path fill="#00ff7d" d="M950 285h5v5h-5z"/>
<path fill="#00ff7c" d="M955 285h5v5h-5z"/>
<path fill="#00ff7a" d="M960 285h5v5h-5z"/>
<path fill="#00ff79" d="M965 285h5v5h-5z"/>
<path fill="#00ff78" d="M970 285h5v5h-5z"/>
<path fill="#00ff77" d="M975 285h5v5h-5z"/>
<path fill="#00ff75" d="M980 285h5v5h-5z"/>
<path fill="#00ff74" d="M985 285h5v5h-5z"/>
<path fill="#00ff73" d="M990 285h5v5h-5z"/>
<path fill="#00ff71" d="M995 285h5v5h-5z"/>
<path fill="#00ff70" d="M1000 285h5v5h-5z"/>
<path fill="#00ff6e" d="M1005 285h5v5h-5z"/>
<path fill="#00ff6d" d="M1010 285h5v5h-5z"/>
<path fill="#00ff6b" d="M1015 285h5v5h-5z"/>
<path fill="#00ff6a" d="M1020 285h5v5h-5z"/>
<path fill="#00ff68" d="M1025 285h5v5h-5z"/>
<path fill="#00ff67" d="M1030 285h5v5h-5z"/>
<path fill="#00ff65" d="M1035 285h5v5h-5z"/>
<path fill="#00ff63" d="M1040 285h5v5h-5z"/>
<path fill="#00ff62" d="M1045 285h5v5h-5z"/>
<path fill="#00ff60" d="M1050 285h5v5h-5z"/>
<path fill="#00ff5e" d="M1055 285h5v5h-5z"/>
<path fill="#00ff5c" d="M1060 285h5v5h-5z"/>
<path fill="#00ff5a" d="M1065 285h5v5h-5z"/>
<path fill="#04ff58" d="M1070 285h5v5h-5z"/>
<path fill="#0fff56" d="M1075 285h5v5h-5z"/>
<path fill="#1bff54" d="M1080 285h5v5h-5z"/>
<path fill="#27ff52" d="M1085 285h5v5h-5z"/>
<path fill="#33ff50" d="M1090 285h5v5h-5z"/>
<path fill="#40ff4e" d="M1095 285h5v5h-5z"/>
<path fill="#4dff4c" d="M1100 285h5v5h-5z"/>
<path fill="#5aff49" d="M1105 285h5v5h-5z"/>
<path fill="#68ff47" d="M1110 285h5v5h-5z"/>
<path fill="#76ff44" d="M1115 285h5v5h-5z"/>
<path fill="#84ff42" d="M1120 285h5v5h-5z"/>
<path fill="#93ff3f" d="M1125 285h5v5h-5z"/>
<path fill="#a2ff3d" d="M1130 285h5v5h-5z"/>
<path fill="#b2ff3a" d="M1135 285h5v5h-5z"/>
<path fill="#c2ff37" d="M1140 285h5v5h-5z"/>
<path fill="#d3ff34" d="M1145 285h5v5h-5z"/>
<path fill="#e4ff31" d="M1150 285h5v5h-5z"/>
<path fill="#f5ff2e" d="M1155 285h5v5h-5z"/>
<path fill="#fff72a" d="M1160 285h5v5h-5z"/>
<path fill="#ffe624" d="M1165 285h5v5h-5z"/>
<path fill="#ffd81f" d="M1170 285h5v5h-5z"/>
<path fill="#ffca1a" d="M1175 285h5v5h-5z"/>
<path fill="#ffbe16" d="M1180 285h5v5h-5z"/>
<path fill="#ffb312" d="M1185 285h5v5h-5z"/>
<path fill="#ffa90f" d="M1190 285h5v5h-5z"/>
<path fill="#ffa00b" d="M1195 285h5v5h-5z"/>
<path fill="#ff9708" d="M1200 285h5v5h-5z"/>
<path fill="#ff8f06" d="M1205 285h5v5h-5z"/>
<path fill="#ff8703" d="M1210 285h5v5h-5z"/>
<path fill="#ff8001" d="M1215 285h5v5h-5z"/>
<path fill="#ff7a00" d="M1220 285h5v5h-5z"/>
<path fill="#ff7400" d="M1225 285h5v5h-5z"/>
<path fill="#ff6e00" d="M1230 285h5v5h-5z"/>
<path fill="#ff6900" d="M1235 285h5v5h-5z"/>
<path fill="#ff6400" d="M1240 285h5v5h-5z"/>
<path fill="#ff5f00" d="M1245 285h5v5h-5z"/>
<path fill="#ff5a00" d="M1250 285h5v5h-5z"/>
<path fill="#ff5600" d="M1255 285h5v5h-5z"/>
<path fill="#ff5200" d="M1260 285h5v5h-5z"/>
<path fill="#ff4e00" d="M1265 285h5v5h-5z"/>
<path fill="#00ff8d" d="M900 290h5v5h-5z"/>
<path fill="#00ff8c" d="M905 290h5v5h-5z"/>
<path fill="#00ff8b" d="M910 290h5v5h-5z"/>
<path fill="#00ff8a" d="M915 290h5v5h-5z"/>
<path fill="#00ff89" d="M920 290h5v5h-5z"/>
<path fill="#00ff88" d="M925 290h5v5h-5z"/>
<path fill="#00ff87" d="M930 290h5v5h-5z"/>
<path fill="#00ff86" d="M935 290h5v5h-5z"/>
<path fill="#00ff85" d="M940 290h5v5h-5z"/>
<path fill="#00ff84" d="M945 290h5v5h-5z"/>
<path fill="#00ff82" d="M950 290h5v5h-5z"/>
<path fill="#00ff81" d="M955 290h5v5h-5z"/>
<path fill="#00ff80" d="M960 290h5v5h-5z"/>
<path fill="#00ff7f" d="M965 290h5v5h-5z"/>
<path fill="#00ff7e" d="M970 290h5v5h-5z"/>
<path fill="#00ff7c" d="M975 290h5v5h-5z"/>
<path fill="#00ff7b" d="M980 290h5v5h-5z"/>
<path fill="#00ff7a" d="M985 290h5v5h-5z"/>
<path fill="#00ff78" d="M990 290h5v5h-5z"/>
<path fill="#00ff77" d="M995 290h5v5h-5z"/>
<path fill="#00ff76" d="M1000 290h5v5h-5z"/>
<path fill="#00ff74" d="M1005 290h5v5h-5z"/>
<path fill="#00ff73" d="M1010 290h5v5h-5z"/>
<path fill="#00ff71" d="M1015 290h5v5h-5z"/>
<path fill="#00ff70" d="M1020 290h5v5h-5z"/>
<path fill="#00ff6e" d="M1025 290h5v5h-5z"/>
<path fill="#00ff6d" d="M1030 290h5v5h-5z"/>
<path fill="#00ff6b" d="M1035 290h5v5h-5z"/>
<path fill="#00ff69" d="M1040 290h5v5h-5z"/>
<path fill="#00ff68" d="M1045 290h5v5h-5z"/>
<path fill="#00ff66" d="M1050 290h5v5h-5z"/>
<path fill="#00ff64" d="M1055 290h5v5h-5z"/>
<path fill="#00ff62" d="M1060 290h5v5h-5z"/>
<path fill="#00ff60" d="M1065 290h5v5h-5z"/>
<path fill="#07ff5f" d="M1070 290h5v5h-5z"/>
<path fill="#13ff5d" d="M1075 290h5v5h-5z"/>
<path fill="#1fff5b" d="M1080 290h5v5h-5z"/>
<path fill="#2cff59" d="M1085 290h5v5h-5z"/>
<path fill="#38ff56" d="M1090 290h5v5h-5z"/>
<path fill="#45ff54" d="M1095 290h5v5h-5z"/>
<path fill="#53ff52" d="M1100 290h5v5h-5z"/>
<path fill="#61ff50" d="M1105 290h5v5h-5z"/>
<path fill="#6fff4d" d="M1110 290h5v5h-5z"/>
<path fill="#7dff4b" d="M1115 290h5v5h-5z"/>
<path fill="#8cff49" d="M1120 290h5v5h-5z"/>
<path fill="#9bff46" d="M1125 290h5v5h-5z"/>
<path fill="#abff43" d="M1130 290h5v5h-5z"/>
<path fill="#bbff41" d="M1135 290h5v5h-5z"/>
<path fill="#ccff3e" d="M1140 290h5v5h-5z"/>
<path fill="#ddff3b" d="M1145 290h5v5h-5z"/>
<path fill="#efff38" d="M1150 290h5v5h-5z"/>
<path fill="#fffd35" d="M1155 290h5v5h-5z"/>
<path fill="#ffec2e" d="M1160 290h5v5h-5z"/>
<path fill="#ffdc28" d="M1165 290h5v5h-5z"/>
<path fill="#ffce23" d="M1170 290h5v5h-5z"/>
<path fill="#ffc11e" d="M1175 290h5v5h-5z"/>
<path fill="#ffb61a" d="M1180 290h5v5h-5z"/>
<path fill="#ffab16" d="M1185 290h5v5h-5z"/>
<path fill="#ffa112" d="M1190 290h5v5h-5z"/>
<path fill="#ff980f" d="M1195 290h5v5h-5z"/>
<path fill="#ff900c" d="M1200 290h5v5h-5z"/>
<path fill="#ff8809" d="M1205 290h5v5h-5z"/>
<path fill="#ff8106" d="M1210 290h5v5h-5z"/>
<path fill="#ff7b04" d="M1215 290h5v5h-5z"/>
<path fill="#ff7401" d="M1220 290h5v5h-5z"/>
<path fill="#ff6e00" d="M1225 290h5v5h-5z"/>
<path fill="#ff6900" d="M1230 290h5v5h-5z"/>
<path fill="#ff6400" d="M1235 290h5v5h-5z"/>
<path fill="#ff5f00" d="M1240 290h5v5h-5z"/>
<path fill="#ff5a00" d="M1245 290h5v5h-5z"/>
<path fill="#ff5600" d="M1250 290h5v5h-5z"/>
<path fill="#ff5200" d="M1255 290h5v5h-5z"/>
<path fill="#ff4e00" d="M1260 290h5v5h-5z"/>
<path fill="#ff4a00" d="M1265 290h5v5h-5z"/>
<path fill="#ff4700" d="M1270 290h5v5h-5z"/>
<path fill="#00ff92" d="M900 295h10v5h-10z"/>
<path fill="#00ff91" d="M910 295h5v5h-5z"/>
<path fill="#00ff90" d="M915 295h5v5h-5z"/>
<path fill="#00ff8f" d="M920 295h5v5h-5z"/>
<path fill="#00ff8e" d="M925 295h5v5h-5z"/>
<path fill="#00ff8d" d="M930 295h5v5h-5z"/>
<path fill="#00ff8c" d="M935 295h5v5h-5z"/>
<path fill="#00ff8a" d="M940 295h5v5h-5z"/>
<path fill="#00ff89" d="M945 295h5v5h-5z"/>
<path fill="#00ff88" d="M950 295h5v5h-5z"/>
<path fill="#00ff87" d="M955 295h5v5h-5z"/>
<path fill="#00ff86" d="M960 295h5v5h-5z"/>
<path fill="#00ff85" d="M965 295h5v5h-5z"/>
<path fill="#00ff84" d="M970 295h5v5h-5z"/>
<path fill="#00ff82" d="M975 295h5v5h-5z"/>
<path fill="#00ff81" d="M980 295h5v5h-5z"/>
<path fill="#00ff80" d="M985 295h5v5h-5z"/>
<path fill="#00ff7f" d="M990 295h5v5h-5z"/>
<path fill="#00ff7d" d="M995 295h5v5h-5z"/>
<path fill="#00ff7c" d="M1000 295h5v5h-5z"/>
<path fill="#00ff7a" d="M1005 295h5v5h-5z"/>
<path fill="#00ff79" d="M1010 295h5v5h-5z"/>
<path fill="#00ff78" d="M1015 295h5v5h-5z"/>
<path fill="#00ff76" d="M1020 295h5v5h-5z"/>
<path fill="#00ff75" d="M1025 295h5v5h-5z"/>
<path fill="#00ff73" d="M1030 295h5v5h-5z"/>
<path fill="#00ff71" d="M1035 295h5v5h-5z"/>
<path fill="#00ff70" d="M1040 295h5v5h-5z"/>
<path fill="#00ff6e" d="M1045 295h5v5h-5z"/>
<path fill="#00ff6c" d="M1050 295h5v5h-5z"/>
<path fill="#00ff6b" d="M1055 295h5v5h-5z"/>
<path fill="#00ff69" d="M1060 295h5v5h-5z"/>
<path fill="#00ff67" d="M1065 295h5v5h-5z"/>
<path fill="#0bff65" d="M1070 295h5v5h-5z"/>
<path fill="#17ff63" d="M1075 295h5v5h-5z"/>
<path fill="#24ff61" d="M1080 295h5v5h-5z"/>
<path fill="#30ff5f" d="M1085 295h5v5h-5z"/>
<path fill="#3eff5d" d="M1090 295h5v5h-5z"/>
<path fill="#4bff5b" d="M1095 295h5v5h-5z"/>
<path fill="#59ff59" d="M1100 295h5v5h-5z"/>
<path fill="#67ff57" d="M1105 295h5v5h-5z"/>
<path fill="#76ff54" d="M1110 295h5v5h-5z"/>
<path fill="#85ff52" d="M1115 295h5v5h-5z"/>
<path fill="#94ff4f" d="M1120 295h5v5h-5z"/>
<path fill="#a4ff4d" d="M1125 295h5v5h-5z"/>
<path fill="#b4ff4a" d="M1130 295h5v5h-5z"/>
<path fill="#c5ff48" d="M1135 295h5v5h-5z"/>
<path fill="#d6ff45" d="M1140 295h5v5h-5z"/>
<path fill="#e8ff42" d="M1145 295h5v5h-5z"/>
<path fill="#fbff3f" d="M1150 295h5v5h-5z"/>
<path fill="#fff139" d="M1155 295h5v5h-5z"/>
<path fill="#ffe132" d="M1160 295h5v5h-5z"/>
<path fill="#ffd22c" d="M1165 295h5v5h-5z"/>
<path fill="#ffc527" d="M1170 295h5v5h-5z"/>
<path fill="#ffb822" d="M1175 295h5v5h-5z"/>
<path fill="#ffad1e" d="M1180 295h5v5h-5z"/>
<path fill="#ffa31a" d="M1185 295h5v5h-5z"/>
<path fill="#ff9a16" d="M1190 295h5v5h-5z"/>
<path fill="#ff9112" d="M1195 295h5v5h-5z"/>
<path fill="#ff890f" d="M1200 295h5v5h-5z"/>
<path fill="#ff820c" d="M1205 295h5v5h-5z"/>
<path fill="#ff7b09" d="M1210 295h5v5h-5z"/>
<path fill="#ff7507" d="M1215 295h5v5h-5z"/>
<path fill="#ff6f04" d="M1220 295h5v5h-5z"/>
<path fill="#ff6902" d="M1225 295h5v5h-5z"/>
<path fill="#ff6400" d="M1230 295h5v5h-5z"/>
<path fill="#ff5f00" d="M1235 295h5v5h-5z"/>
<path fill="#ff5a00" d="M1240 295h5v5h-5z"/>
<path fill="#ff5600" d="M1245 295h5v5h-5z"/>
<path fill="#ff5200" d="M1250 295h5v5h-5z"/>
<path fill="#ff4e00" d="M1255 295h5v5h-5z"/>
<path fill="#ff4a00" d="M1260 295h5v5h-5z"/>
<path fill="#ff4600" d="M1265 295h5v5h-5z"/>
<path fill="#ff4300" d="M1270 295h5v5h-5z"/>
<path fill="#ff4000" d="M1275 295h5v5h-5z"/>
<path fill="#00ff98" d="M900 300h5v5h-5z"/>
<path fill="#00ff97" d="M905 300h5v5h-5z"/>
<path fill="#00ff96" d="M910 300h5v5h-5z"/>
<path fill="#00ff95" d="M915 300h5v5h-5z"/>
<path fill="#00ff94" d="M920 300h5v5h-5z"/>
<path fill="#00ff93" d="M925 300h5v5h-5z"/>
<path fill="#00ff92" d="M930 300h5v5h-5z"/>
<path fill="#00ff91" d="M935 300h5v5h-5z"/>
<path fill="#00ff90" d="M940 300h5v5h-5z"/>
<path fill="#00ff8f" d="M945 300h5v5h-5z"/>
<path fill="#00ff8e" d="M950 300h5v5h-5z"/>
<path fill="#00ff8d" d="M955 300h5v5h-5z"/>
<path fill="#00ff8c" d="M960 300h5v5h-5z"/>
<path fill="#00ff8b" d="M965 300h5v5h-5z"/>
<path fill="#00ff8a" d="M970 300h5v5h-5z"/>
<path fill="#00ff89" d="M975 300h5v5h-5z"/>
<path fill="#00ff87" d="M980 300h5v5h-5z"/>
<path fill="#00ff86" d="M985 300h5v5h-5z"/>
<path fill="#00ff85" d="M990 300h5v5h-5z"/>
<path fill="#00ff84" d="M995 300h5v5h-5z"/>
<path fill="#00ff82" d="M1000 300h5v5h-5z"/>
<path fill="#00ff81" d="M1005 300h5v5h-5z"/>
<path fill="#00ff80" d="M1010 300h5v5h-5z"/>
<path fill="#00ff7e" d="M1015 300h5v5h-5z"/>
<path fill="#00ff7d" d="M1020 300h5v5h-5z"/>
<path fill="#00ff7b" d="M1025 300h5v5h-5z"/>
<path fill="#00ff7a" d="M1030 300h5v5h-5z"/>
<path fill="#00ff78" d="M1035 300h5v5h-5z"/>
<path fill="#00ff77" d="M1040 300h5v5h-5z"/>
<path fill="#00ff75" d="M1045 300h5v5h-5z"/>
<path fill="#00ff73" d="M1050 300h5v5h-5z"/>
<path fill="#00ff72" d="M1055 300h5v5h-5z"/>
<path fill="#00ff70" d="M1060 300h5v5h-5z"/>
<path fill="#03ff6e" d="M1065 300h5v5h-5z"/>
<path fill="#0fff6c" d="M1070 300h5v5h-5z"/>
<path fill="#1cff6a" d="M1075 300h5v5h-5z"/>
<path fill="#28ff68" d="M1080 300h5v5h-5z"/>
<path fill="#36ff66" d="M1085 300h5v5h-5z"/>
<path fill="#43ff64" d="M1090 300h5v5h-5z"/>
<path fill="#51ff62" d="M1095 300h5v5h-5z"/>
<path fill="#5fff60" d="M1100 300h5v5h-5z"/>
<path fill="#6eff5e" d="M1105 300h5v5h-5z"/>
<path fill="#7dff5c" d="M1110 300h5v5h-5z"/>
<path fill="#8dff59" d="M1115 300h5v5h-5z"/>
<path fill="#9dff57" d="M1120 300h5v5h-5z"/>
<path fill="#adff54" d="M1125 300h5v5h-5z"/>
<path fill="#beff52" d="M1130 300h5v5h-5z"/>
<path fill="#cfff4f" d="M1135 300h5v5h-5z"/>
<path fill="#e2ff4c" d="M1140 300h5v5h-5z"/>
<path fill="#f4ff4a" d="M1145 300h5v5h-5z"/>
<path fill="#fff745" d="M1150 300h5v5h-5z"/>
<path fill="#ffe63d" d="M1155 300h5v5h-5z"/>
<path fill="#ffd636" d="M1160 300h5v5h-5z"/>
<path fill="#ffc830" d="M1165 300h5v5h-5z"/>
<path fill="#ffbb2b" d="M1170 300h5v5h-5z"/>
<path fill="#ffb026" d="M1175 300h5v5h-5z"/>
<path fill="#ffa521" d="M1180 300h5v5h-5z"/>
<path fill="#ff9c1d" d="M1185 300h5v5h-5z"/>
<path fill="#ff9319" d="M1190 300h5v5h-5z"/>
<path fill="#ff8b16" d="M1195 300h5v5h-5z"/>
<path fill="#ff8312" d="M1200 300h5v5h-5z"/>
<path fill="#ff7c0f" d="M1205 300h5v5h-5z"/>
<path fill="#ff750c" d="M1210 300h5v5h-5z"/>
<path fill="#ff6f0a" d="M1215 300h5v5h-5z"/>
<path fill="#ff6907" d="M1220 300h5v5h-5z"/>
<path fill="#ff6405" d="M1225 300h5v5h-5z"/>
<path fill="#ff5f03" d="M1230 300h5v5h-5z"/>
<path fill="#ff5a01" d="M1235 300h5v5h-5z"/>
<path fill="#ff5600" d="M1240 300h5v5h-5z"/>
<path fill="#ff5100" d="M1245 300h5v5h-5z"/>
<path fill="#ff4d00" d="M1250 300h5v5h-5z"/>
<path fill="#ff4900" d="M1255 300h5v5h-5z"/>
<path fill="#ff4600" d="M1260 300h5v5h-5z"/>
<path fill="#ff4200" d="M1265 300h5v5h-5z"/>
<path fill="#ff3f00" d="M1270 300h5v5h-5z"/>
<path fill="#ff3c00" d="M1275 300h5v5h-5z"/>
<path fill="#ff3900" d="M1280 300h5v5h-5z"/>
<path fill="#00ff9e" d="M900 305h5v5h-5z"/>
<path fill="#00ff9d" d="M905 305h5v5h-5z"/>
<path fill="#00ff9c" d="M910 305h5v5h-5z"/>
<path fill="#00ff9b" d="M915 305h5v5h-5z"/>
<path fill="#00ff9a" d="M920 305h5v5h-5z"/>
<path fill="#00ff99" d="M925 305h10v5h-10z"/>
<path fill="#00ff98" d="M935 305h5v5h-5z"/>
<path fill="#00ff97" d="M940 305h5v5h-5z"/>
<path fill="#00ff96" d="M945 305h5v5h-5z"/>
<path fill="#00ff95" d="M950 305h5v5h-5z"/>
<path fill="#00ff93" d="M955 305h5v5h-5z"/>
<path fill="#00ff92" d="M960 305h5v5h-5z"/>
<path fill="#00ff91" d="M965 305h5v5h-5z"/>
<path fill="#00ff90" d="M970 305h5v5h-5z"/>
<path fill="#00ff8f" d="M975 305h5v5h-5z"/>
<path fill="#00ff8e" d="M980 305h5v5h-5z"/>
<path fill="#00ff8d" d="M985 305h5v5h-5z"/>
<path fill="#00ff8b" d="M990 305h5v5h-5z"/>
<path fill="#00ff8a" d="M995 305h5v5h-5z"/>
<path fill="#00ff89" d="M1000 305h5v5h-5z"/>
<path fill="#00ff88" d="M1005 305h5v5h-5z"/>
<path fill="#00ff86" d="M1010 305h5v5h-5z"/>
<path fill="#00ff85" d="M1015 305h5v5h-5z"/>
<path fill="#00ff84" d="M1020 305h5v5h-5z"/>
<path fill="#00ff82" d="M1025 305h5v5h-5z"/>
<path fill="#00ff81" d="M1030 305h5v5h-5z"/>
<path fill="#00ff7f" d="M1035 305h5v5h-5z"/>
<path fill="#00ff7e" d="M1040 305h5v5h-5z"/>
<path fill="#00ff7c" d="M1045 305h5v5h-5z"/>
<path fill="#00ff7a" d="M1050 305h5v5h-5z"/>
<path fill="#00ff79" d="M1055 305h5v5h-5z"/>
<path fill="#00ff77" d="M1060 305h5v5h-5z"/>
<path fill="#07ff75" d="M1065 305h5v5h-5z"/>
<path fill="#13ff74" d="M1070 305h5v5h-5z"/>
<path fill="#20ff72" d="M1075 305h5v5h-5z"/>
<path fill="#2dff70" d="M1080 305h5v5h-5z"/>
<path fill="#3bff6e" d="M1085 305h5v5h-5z"/>
<path fill="#49ff6c" d="M1090 305h5v5h-5z"/>
<path fill="#57ff6a" d="M1095 305h5v5h-5z"/>
<path fill="#66ff68" d="M1100 305h5v5h-5z"/>
<path fill="#75ff66" d="M1105 305h5v5h-5z"/>
<path fill="#85ff63" d="M1110 305h5v5h-5z"/>
<path fill="#95ff61" d="M1115 305h5v5h-5z"/>
<path fill="#a5ff5f" d="M1120 305h5v5h-5z"/>
<path fill="#b7ff5c" d="M1125 305h5v5h-5z"/>
<path fill="#c8ff5a" d="M1130 305h5v5h-5z"/>
<path fill="#daff57" d="M1135 305h5v5h-5z"/>
<path fill="#edff54" d="M1140 305h5v5h-5z"/>
<path fill="#fffd51" d="M1145 305h5v5h-5z"/>
<path fill="#ffeb49" d="M1150 305h5v5h-5z"/>
<path fill="#ffdb41" d="M1155 305h5v5h-5z"/>
<path fill="#ffcc3a" d="M1160 305h5v5h-5z"/>
<path fill="#ffbf34" d="M1165 305h5v5h-5z"/>
<path fill="#ffb32e" d="M1170 305h5v5h-5z"/>
<path fill="#ffa829" d="M1175 305h5v5h-5z"/>
<path fill="#ff9e25" d="M1180 305h5v5h-5z"/>
<path fill="#ff9420" d="M1185 305h5v5h-5z"/>
<path fill="#ff8c1d" d="M1190 305h5v5h-5z"/>
<path fill="#ff8419" d="M1195 305h5v5h-5z"/>
<path fill="#ff7d15" d="M1200 305h5v5h-5z"/>
<path fill="#ff7612" d="M1205 305h5v5h-5z"/>
<path fill="#ff700f" d="M1210 305h5v5h-5z"/>
<path fill="#ff6a0d" d="M1215 305h5v5h-5z"/>
<path fill="#ff640a" d="M1220 305h5v5h-5z"/>
<path fill="#ff5f08" d="M1225 305h5v5h-5z"/>
<path fill="#ff5a05" d="M1230 305h5v5h-5z"/>
<path fill="#ff5503" d="M1235 305h5v5h-5z"/>
<path fill="#ff5101" d="M1240 305h5v5h-5z"/>
<path fill="#ff4d00" d="M1245 305h5v5h-5z"/>
<path fill="#ff4900" d="M1250 305h5v5h-5z"/>
<path fill="#ff4500" d="M1255 305h5v5h-5z"/>
<path fill="#ff4200" d="M1260 305h5v5h-5z"/>
<path fill="#ff3f00" d="M1265 305h5v5h-5z"/>
<path fill="#ff3b00" d="M1270 305h5v5h-5z"/>
<path fill="#ff3800" d="M1275 305h5v5h-5z"/>
<path fill="#ff3600" d="M1280 305h5v5h-5z"/>
<path fill="#ff3300" d="M1285 305h5v5h-5z"/>
<path fill="#00ffa3" d="M905 310h5v5h-5z"/>
<path fill="#00ffa2" d="M910 310h10v5h-10z"/>
<path fill="#00ffa1" d="M920 310h5v5h-5z"/>
<path fill="#00ffa0" d="M925 310h5v5h-5z"/>
<path fill="#00ff9f" d="M930 310h5v5h-5z"/>
<path fill="#00ff9e" d="M935 310h5v5h-5z"/>
<path fill="#00ff9d" d="M940 310h5v5h-5z"/>
<path fill="#00ff9c" d="M945 310h5v5h-5z"/>
<path fill="#00ff9b" d="M950 310h5v5h-5z"/>
<path fill="#00ff9a" d="M955 310h5v5h-5z"/>
<path fill="#00ff99" d="M960 310h5v5h-5z"/>
<path fill="#00ff98" d="M965 310h5v5h-5z"/>
<path fill="#00ff97" d="M970 310h5v5h-5z"/>
<path fill="#00ff96" d="M975 310h5v5h-5z"/>
<path fill="#00ff95" d="M980 310h5v5h-5z"/>
<path fill="#00ff93" d="M985 310h5v5h-5z"/>
<path fill="#00ff92" d="M990 310h5v5h-5z"/>
<path fill="#00ff91" d="M995 310h5v5h-5z"/>
<path fill="#00ff90" d="M1000 310h5v5h-5z"/>
<path fill="#00ff8f" d="M1005 310h5v5h-5z"/>
<path fill="#00ff8d" d="M1010 310h5v5h-5z"/>
<path fill="#00ff8c" d="M1015 310h5v5h-5z"/>
<path fill="#00ff8b" d="M1020 310h5v5h-5z"/>
<path fill="#00ff89" d="M1025 310h5v5h-5z"/>
<path fill="#00ff88" d="M1030 310h5v5h-5z"/>
<path fill="#00ff86" d="M1035 310h5v5h-5z"/>
<path fill="#00ff85" d="M1040 310h5v5h-5z"/>
<path fill="#00ff83" d="M1045 310h5v5h-5z"/>
<path fill="#00ff82" d="M1050 310h5v5h-5z"/>
<path fill="#00ff80" d="M1055 310h5v5h-5z"/>
<path fill="#00ff7f" d="M1060 310h5v5h-5z"/>
<path fill="#0bff7d" d="M1065 310h5v5h-5z"/>
<path fill="#18ff7b" d="M1070 310h5v5h-5z"/>
<path fill="#25ff79" d="M1075 310h5v5h-5z"/>
<path fill="#32ff78" d="M1080 310h5v5h-5z"/>
<path fill="#41ff76" d="M1085 310h5v5h-5z"/>
<path fill="#4fff74" d="M1090 310h5v5h-5z"/>
<path fill="#5eff72" d="M1095 310h5v5h-5z"/>
<path fill="#6dff70" d="M1100 310h5v5h-5z"/>
<path fill="#7dff6e" d="M1105 310h5v5h-5z"/>
<path fill="#8dff6c" d="M1110 310h5v5h-5z"/>
<path fill="#9eff69" d="M1115 310h5v5h-5z"/>
<path fill="#afff67" d="M1120 310h5v5h-5z"/>
<path fill="#c1ff65" d="M1125 310h5v5h-5z"/>
<path fill="#d3ff62" d="M1130 310h5v5h-5z"/>
<path fill="#e6ff60" d="M1135 310h5v5h-5z"/>
<path fill="#faff5d" d="M1140 310h5v5h-5z"/>
<path fill="#fff155" d="M1145 310h5v5h-5z"/>
<path fill="#ffdf4d" d="M1150 310h5v5h-5z"/>
<path fill="#ffd045" d="M1155 310h5v5h-5z"/>
<path fill="#ffc23e" d="M1160 310h5v5h-5z"/>
<path fill="#ffb538" d="M1165 310h5v5h-5z"/>
<path fill="#ffaa32" d="M1170 310h5v5h-5z"/>
<path fill="#ff9f2d" d="M1175 310h5v5h-5z"/>
<path fill="#ff9628" d="M1180 310h5v5h-5z"/>
<path fill="#ff8d24" d="M1185 310h5v5h-5z"/>
<path fill="#ff8520" d="M1190 310h5v5h-5z"/>
<path fill="#ff7d1c" d="M1195 310h5v5h-5z"/>
<path fill="#ff7619" d="M1200 310h5v5h-5z"/>
<path fill="#ff7015" d="M1205 310h5v5h-5z"/>
<path fill="#ff6a12" d="M1210 310h5v5h-5z"/>
<path fill="#ff6410" d="M1215 310h5v5h-5z"/>
<path fill="#ff5f0d" d="M1220 310h5v5h-5z"/>
<path fill="#ff5a0a" d="M1225 310h5v5h-5z"/>
<path fill="#ff5508" d="M1230 310h5v5h-5z"/>
<path fill="#ff5106" d="M1235 310h5v5h-5z"/>
<path fill="#ff4d04" d="M1240 310h5v5h-5z"/>
<path fill="#ff4902" d="M1245 310h5v5h-5z"/>
<path fill="#ff4500" d="M1250 310h5v5h-5z"/>
<path fill="#ff4100" d="M1255 310h5v5h-5z"/>
<path fill="#ff3e00" d="M1260 310h5v5h-5z"/>
<path fill="#ff3b00" d="M1265 310h5v5h-5z"/>
<path fill="#ff3800" d="M1270 310h5v5h-5z"/>
<path fill="#ff3500" d="M1275 310h5v5h-5z"/>
<path fill="#ff3200" d="M1280 310h5v5h-5z"/>
<path fill="#ff2f00" d="M1285 310h5v5h-5z"/>
<path fill="#ff2d00" d="M1290 310h5v5h-5z"/>
<path fill="#00ffaa" d="M905 315h5v5h-5z"/>
<path fill="#00ffa9" d="M910 315h5v5h-5z"/>
<path fill="#00ffa8" d="M915 315h5v5h-5z"/>
<path fill="#00ffa7" d="M920 315h5v5h-5z"/>
<path fill="#00ffa6" d="M925 315h5v5h-5z"/>
<path fill="#00ffa5" d="M930 315h10v5h-10z"/>
<path fill="#00ffa4" d="M940 315h5v5h-5z"/>
<path fill="#00ffa3" d="M945 315h5v5h-5z"/>
<path fill="#00ffa2" d="M950 315h5v5h-5z"/>
<path fill="#00ffa1" d="M955 315h5v5h-5z"/>
<path fill="#00ffa0" d="M960 315h5v5h-5z"/>
<path fill="#00ff9f" d="M965 315h5v5h-5z"/>
<path fill="#00ff9e" d="M970 315h5v5h-5z"/>
<path fill="#00ff9d" d="M975 315h5v5h-5z"/>
<path fill="#00ff9c" d="M980 315h5v5h-5z"/>
<path fill="#00ff9b" d="M985 315h5v5h-5z"/>
<path fill="#00ff9a" d="M990 315h5v5h-5z"/>
<path fill="#00ff98" d="M995 315h5v5h-5z"/>
<path fill="#00ff97" d="M1000 315h5v5h-5z"/>
<path fill="#00ff96" d="M1005 315h5v5h-5z"/>
<path fill="#00ff95" d="M1010 315h5v5h-5z"/>
<path fill="#00ff94" d="M1015 315h5v5h-5z"/>
<path fill="#00ff92" d="M1020 315h5v5h-5z"/>
<path fill="#00ff91" d="M1025 315h5v5h-5z"/>
<path fill="#00ff90" d="M1030 315h5v5h-5z"/>
<path fill="#00ff8e" d="M1035 315h5v5h-5z"/>
<path fill="#00ff8d" d="M1040 315h5v5h-5z"/>
<path fill="#00ff8b" d="M1045 315h5v5h-5z"/>
<path fill="#00ff8a" d="M1050 315h5v5h-5z"/>
<path fill="#00ff88" d="M1055 315h5v5h-5z"/>
<path fill="#02ff87" d="M1060 315h5v5h-5z"/>
<path fill="#0fff85" d="M1065 315h5v5h-5z"/>
<path fill="#1cff83" d="M1070 315h5v5h-5z"/>
<path fill="#2aff82" d="M1075 315h5v5h-5z"/>
<path fill="#38ff80" d="M1080 315h5v5h-5z"/>
<path fill="#46ff7e" d="M1085 315h5v5h-5z"/>
<path fill="#55ff7c" d="M1090 315h5v5h-5z"/>
<path fill="#65ff7a" d="M1095 315h5v5h-5z"/>
<path fill="#75ff78" d="M1100 315h5v5h-5z"/>
<path fill="#85ff76" d="M1105 315h5v5h-5z"/>
<path fill="#96ff74" d="M1110 315h5v5h-5z"/>
<path fill="#a7ff72" d="M1115 315h5v5h-5z"/>
<path fill="#b9ff70" d="M1120 315h5v5h-5z"/>
<path fill="#ccff6e" d="M1125 315h5v5h-5z"/>
<path fill="#dfff6b" d="M1130 315h5v5h-5z"/>
<path fill="#f3ff69" d="M1135 315h5v5h-5z"/>
<path fill="#fff763" d="M1140 315h5v5h-5z"/>
<path fill="#ffe559" d="M1145 315h5v5h-5z"/>
<path fill="#ffd451" d="M1150 315h5v5h-5z"/>
<path fill="#ffc649" d="M1155 315h5v5h-5z"/>
<path fill="#ffb842" d="M1160 315h5v5h-5z"/>
<path fill="#ffac3b" d="M1165 315h5v5h-5z"/>
<path fill="#ffa136" d="M1170 315h5v5h-5z"/>
<path fill="#ff9830" d="M1175 315h5v5h-5z"/>
<path fill="#ff8e2c" d="M1180 315h5v5h-5z"/>
<path fill="#ff8627" d="M1185 315h5v5h-5z"/>
<path fill="#ff7e23" d="M1190 315h5v5h-5z"/>
<path fill="#ff771f" d="M1195 315h5v5h-5z"/>
<path fill="#ff701c" d="M1200 315h5v5h-5z"/>
<path fill="#ff6a18" d="M1205 315h5v5h-5z"/>
<path fill="#ff6415" d="M1210 315h5v5h-5z"/>
<path fill="#ff5f12" d="M1215 315h5v5h-5z"/>
<path fill="#ff5a10" d="M1220 315h5v5h-5z"/>
<path fill="#ff550d" d="M1225 315h5v5h-5z"/>
<path fill="#ff510b" d="M1230 315h5v5h-5z"/>
<path fill="#ff4c09" d="M1235 315h5v5h-5z"/>
<path fill="#ff4806" d="M1240 315h5v5h-5z"/>
<path fill="#ff4404" d="M1245 315h5v5h-5z"/>
<path fill="#ff4102" d="M1250 315h5v5h-5z"/>
<path fill="#ff3d01" d="M1255 315h5v5h-5z"/>
<path fill="#ff3a00" d="M1260 315h5v5h-5z"/>
<path fill="#ff3700" d="M1265 315h5v5h-5z"/>
<path fill="#ff3400" d="M1270 315h5v5h-5z"/>
<path fill="#ff3100" d="M1275 315h5v5h-5z"/>
<path fill="#ff2f00" d="M1280 315h5v5h-5z"/>
<path fill="#ff2c00" d="M1285 315h5v5h-5z"/>
<path fill="#ff2a00" d="M1290 315h5v5h-5z"/>
<path fill="#ff2700" d="M1295 315h5v5h-5z"/>
<path fill="#00ffb0" d="M905 320h5v5h-5z"/>
<path fill="#00ffaf" d="M910 320h10v5h-10z"/>
<path fill="#00ffae" d="M920 320h5v5h-5z"/>
<path fill="#00ffad" d="M925 320h5v5h-5z"/>
<path fill="#00ffac" d="M930 320h5v5h-5z"/>
<path fill="#00ffab" d="M935 320h10v5h-10z"/>
<path fill="#00ffaa" d="M945 320h5v5h-5z"/>
<path fill="#00ffa9" d="M950 320h5v5h-5z"/>
<path fill="#00ffa8" d="M955 320h5v5h-5z"/>
<path fill="#00ffa7" d="M960 320h5v5h-5z"/>
<path fill="#00ffa6" d="M965 320h5v5h-5z"/>
<path fill="#00ffa5" d="M970 320h5v5h-5z"/>
<path fill="#00ffa4" d="M975 320h5v5h-5z"/>
<path fill="#00ffa3" d="M980 320h5v5h-5z"/>
<path fill="#00ffa2" d="M985 320h5v5h-5z"/>
<path fill="#00ffa1" d="M990 320h5v5h-5z"/>
<path fill="#00ffa0" d="M995 320h5v5h-5z"/>
<path fill="#00ff9f" d="M1000 320h5v5h-5z"/>
<path fill="#00ff9e" d="M1005 320h5v5h-5z"/>
<path fill="#00ff9d" d="M1010 320h5v5h-5z"/>
<path fill="#00ff9b" d="M1015 320h5v5h-5z"/>
<path fill="#00ff9a" d="M1020 320h5v5h-5z"/>
<path fill="#00ff99" d="M1025 320h5v5h-5z"/>
<path fill="#00ff98" d="M1030 320h5v5h-5z"/>
<path fill="#00ff96" d="M1035 320h5v5h-5z"/>
<path fill="#00ff95" d="M1040 320h5v5h-5z"/>
<path fill="#00ff94" d="M1045 320h5v5h-5z"/>
<path fill="#00ff92" d="M1050 320h5v5h-5z"/>
<path fill="#00ff91" d="M1055 320h5v5h-5z"/>
<path fill="#06ff8f" d="M1060 320h5v5h-5z"/>
<path fill="#13ff8e" d="M1065 320h5v5h-5z"/>
<path fill="#21ff8c" d="M1070 320h5v5h-5z"/>
<path fill="#2fff8a" d="M1075 320h5v5h-5z"/>
<path fill="#3eff89" d="M1080 320h5v5h-5z"/>
<path fill="#4dff87" d="M1085 320h5v5h-5z"/>
<path fill="#5cff85" d="M1090 320h5v5h-5z"/>
<path fill="#6cff83" d="M1095 320h5v5h-5z"/>
<path fill="#7dff81" d="M1100 320h5v5h-5z"/>
<path fill="#8eff80" d="M1105 320h5v5h-5z"/>
<path fill="#9fff7d" d="M1110 320h5v5h-5z"/>
<path fill="#b1ff7b" d="M1115 320h5v5h-5z"/>
<path fill="#c4ff79" d="M1120 320h5v5h-5z"/>
<path fill="#d7ff77" d="M1125 320h5v5h-5z"/>
<path fill="#ebff75" d="M1130 320h5v5h-5z"/>
<path fill="#fffe72" d="M1135 320h5v5h-5z"/>
<path fill="#ffea67" d="M1140 320h5v5h-5z"/>
<path fill="#ffd95d" d="M1145 320h5v5h-5z"/>
<path fill="#ffc954" d="M1150 320h5v5h-5z"/>
<path fill="#ffbc4c" d="M1155 320h5v5h-5z"/>
<path fill="#ffaf45" d="M1160 320h5v5h-5z"/>
<path fill="#ffa43f" d="M1165 320h5v5h-5z"/>
<path fill="#ff9939" d="M1170 320h5v5h-5z"/>
<path fill="#ff9034" d="M1175 320h5v5h-5z"/>
<path fill="#ff872f" d="M1180 320h5v5h-5z"/>
<path fill="#ff7f2a" d="M1185 320h5v5h-5z"/>
<path fill="#ff7826" d="M1190 320h5v5h-5z"/>
<path fill="#ff7122" d="M1195 320h5v5h-5z"/>
<path fill="#ff6a1f" d="M1200 320h5v5h-5z"/>
<path fill="#ff641b" d="M1205 320h5v5h-5z"/>
<path fill="#ff5f18" d="M1210 320h5v5h-5z"/>
<path fill="#ff5a15" d="M1215 320h5v5h-5z"/>
<path fill="#ff5512" d="M1220 320h5v5h-5z"/>
<path fill="#ff5010" d="M1225 320h5v5h-5z"/>
<path fill="#ff4c0d" d="M1230 320h5v5h-5z"/>
<path fill="#ff480b" d="M1235 320h5v5h-5z"/>
<path fill="#ff4409" d="M1240 320h5v5h-5z"/>
<path fill="#ff4007" d="M1245 320h5v5h-5z"/>
<path fill="#ff3d05" d="M1250 320h5v5h-5z"/>
<path fill="#ff3a03" d="M1255 320h5v5h-5z"/>
<path fill="#ff3601" d="M1260 320h5v5h-5z"/>
<path fill="#ff3300" d="M1265 320h5v5h-5z"/>
<path fill="#ff3100" d="M1270 320h5v5h-5z"/>
<path fill="#ff2e00" d="M1275 320h5v5h-5z"/>
<path fill="#ff2b00" d="M1280 320h5v5h-5z"/>
<path fill="#ff2900" d="M1285 320h5v5h-5z"/>
<path fill="#ff2600" d="M1290 320h5v5h-5z"/>
<path fill="#ff2400" d="M1295 320h5v5h-5z"/>
<path fill="#ff2200" d="M1300 320h5v5h-5z"/>
<path fill="#00ffb7" d="M905 325h5v5h-5z"/>
<path fill="#00ffb6" d="M910 325h10v5h-10z"/>
<path fill="#00ffb5" d="M920 325h5v5h-5z"/>
<path fill="#00ffb4" d="M925 325h5v5h-5z"/>
<path fill="#00ffb3" d="M930 325h10v5h-10z"/>
<path fill="#00ffb2" d="M940 325h5v5h-5z"/>
<path fill="#00ffb1" d="M945 325h5v5h-5z"/>
<path fill="#00ffb0" d="M950 325h5v5h-5z"/>
<path fill="#00ffaf" d="M955 325h5v5h-5z"/>
<path fill="#00ffae" d="M960 325h10v5h-10z"/>
<path fill="#00ffad" d="M970 325h5v5h-5z"/>
<path fill="#00ffac" d="M975 325h5v5h-5z"/>
<path fill="#00ffab" d="M980 325h5v5h-5z"/>
<path fill="#00ffaa" d="M985 325h5v5h-5z"/>
<path fill="#00ffa9" d="M990 325h5v5h-5z"/>
<path fill="#00ffa8" d="M995 325h5v5h-5z"/>
<path fill="#00ffa7" d="M1000 325h5v5h-5z"/>
<path fill="#00ffa6" d="M1005 325h5v5h-5z"/>
<path fill="#00ffa5" d="M1010 325h5v5h-5z"/>
<path fill="#00ffa4" d="M1015 325h5v5h-5z"/>
<path fill="#00ffa2" d="M1020 325h5v5h-5z"/>
<path fill="#00ffa1" d="M1025 325h5v5h-5z"/>
<path fill="#00ffa0" d="M1030 325h5v5h-5z"/>
<path fill="#00ff9f" d="M1035 325h5v5h-5z"/>
<path fill="#00ff9e" d="M1040 325h5v5h-5z"/>
<path fill="#00ff9c" d="M1045 325h5v5h-5z"/>
<path fill="#00ff9b" d="M1050 325h5v5h-5z"/>
<path fill="#00ff9a" d="M1055 325h5v5h-5z"/>
<path fill="#0aff98" d="M1060 325h5v5h-5z"/>
<path fill="#18ff97" d="M1065 325h5v5h-5z"/>
<path fill="#26ff95" d="M1070 325h5v5h-5z"/>
<path fill="#35ff94" d="M1075 325h5v5h-5z"/>
<path fill="#44ff92" d="M1080 325h5v5h-5z"/>
<path fill="#53ff90" d="M1085 325h5v5h-5z"/>
<path fill="#64ff8f" d="M1090 325h5v5h-5z"/>
<path fill="#74ff8d" d="M1095 325h5v5h-5z"/>
<path fill="#85ff8b" d="M1100 325h5v5h-5z"/>
<path fill="#97ff89" d="M1105 325h5v5h-5z"/>
<path fill="#a9ff87" d="M1110 325h5v5h-5z"/>
<path fill="#bcff85" d="M1115 325h5v5h-5z"/>
<path fill="#cfff83" d="M1120 325h5v5h-5z"/>
<path fill="#e4ff81" d="M1125 325h5v5h-5z"/>
<path fill="#f9ff7f" d="M1130 325h5v5h-5z"/>
<path fill="#fff176" d="M1135 325h5v5h-5z"/>
<path fill="#ffde6b" d="M1140 325h5v5h-5z"/>
<path fill="#ffce61" d="M1145 325h5v5h-5z"/>
<path fill="#ffbf58" d="M1150 325h5v5h-5z"/>
<path fill="#ffb250" d="M1155 325h5v5h-5z"/>
<path fill="#ffa649" d="M1160 325h5v5h-5z"/>
<path fill="#ff9b42" d="M1165 325h5v5h-5z"/>
<path fill="#ff913c" d="M1170 325h5v5h-5z"/>
<path fill="#ff8837" d="M1175 325h5v5h-5z"/>
<path fill="#ff8032" d="M1180 325h5v5h-5z"/>
<path fill="#ff782d" d="M1185 325h5v5h-5z"/>
<path fill="#ff7129" d="M1190 325h5v5h-5z"/>
<path fill="#ff6b25" d="M1195 325h5v5h-5z"/>
<path fill="#ff6522" d="M1200 325h5v5h-5z"/>
<path fill="#ff5f1e" d="M1205 325h5v5h-5z"/>
<path fill="#ff5a1b" d="M1210 325h5v5h-5z"/>
<path fill="#ff5518" d="M1215 325h5v5h-5z"/>
<path fill="#ff5015" d="M1220 325h5v5h-5z"/>
<path fill="#ff4b12" d="M1225 325h5v5h-5z"/>
<path fill="#ff4710" d="M1230 325h5v5h-5z"/>
<path fill="#ff430e" d="M1235 325h5v5h-5z"/>
<path fill="#ff400b" d="M1240 325h5v5h-5z"/>
<path fill="#ff3c09" d="M1245 325h5v5h-5z"/>
<path fill="#ff3907" d="M1250 325h5v5h-5z"/>
<path fill="#ff3605" d="M1255 325h5v5h-5z"/>
<path fill="#ff3304" d="M1260 325h5v5h-5z"/>
<path fill="#ff3002" d="M1265 325h5v5h-5z"/>
<path fill="#ff2d00" d="M1270 325h5v5h-5z"/>
<path fill="#ff2a00" d="M1275 325h5v5h-5z"/>
<path fill="#ff2800" d="M1280 325h5v5h-5z"/>
<path fill="#ff2600" d="M1285 325h5v5h-5z"/>
<path fill="#ff2300" d="M1290 325h5v5h-5z"/>
<path fill="#ff2100" d="M1295 325h5v5h-5z"/>
<path fill="#ff1f00" d="M1300 325h5v5h-5z"/>
<path fill="#ff1d00" d="M1305 325h5v5h-5z"/>
<path fill="#00ffbe" d="M905 330h5v5h-5z"/>
<path fill="#00ffbd" d="M910 330h10v5h-10z"/>
<path fill="#00ffbc" d="M920 330h5v5h-5z"/>
<path fill="#00ffbb" d="M925 330h10v5h-10z"/>
<path fill="#00ffba" d="M935 330h5v5h-5z"/>
<path fill="#00ffb9" d="M940 330h10v5h-10z"/>
<path fill="#00ffb8" d="M950 330h5v5h-5z"/>
<path fill="#00ffb7" d="M955 330h5v5h-5z"/>
<path fill="#00ffb6" d="M960 330h5v5h-5z"/>
<path fill="#00ffb5" d="M965 330h10v5h-10z"/>
<path fill="#00ffb4" d="M975 330h5v5h-5z"/>
<path fill="#00ffb3" d="M980 330h5v5h-5z"/>
<path fill="#00ffb2" d="M985 330h5v5h-5z"/>
<path fill="#00ffb1" d="M990 330h5v5h-5z"/>
<path fill="#00ffb0" d="M995 330h5v5h-5z"/>
<path fill="#00ffaf" d="M1000 330h5v5h-5z"/>
<path fill="#00ffae" d="M1005 330h5v5h-5z"/>
<path fill="#00ffad" d="M1010 330h5v5h-5z"/>
<path fill="#00ffac" d="M1015 330h5v5h-5z"/>
<path fill="#00ffab" d="M1020 330h5v5h-5z"/>
<path fill="#00ffaa" d="M1025 330h5v5h-5z"/>
<path fill="#00ffa9" d="M1030 330h5v5h-5z"/>
<path fill="#00ffa8" d="M1035 330h5v5h-5z"/>
<path fill="#00ffa7" d="M1040 330h5v5h-5z"/>
<path fill="#00ffa5" d="M1045 330h5v5h-5z"/>
<path fill="#00ffa4" d="M1050 330h5v5h-5z"/>
<path fill="#01ffa3" d="M1055 330h5v5h-5z"/>
<path fill="#0fffa2" d="M1060 330h5v5h-5z"/>
<path fill="#1dffa0" d="M1065 330h5v5h-5z"/>
<path fill="#2cff9f" d="M1070 330h5v5h-5z"/>
<path fill="#3bff9d" d="M1075 330h5v5h-5z"/>
<path fill="#4aff9c" d="M1080 330h5v5h-5z"/>
<path fill="#5bff9a" d="M1085 330h5v5h-5z"/>
<path fill="#6bff99" d="M1090 330h5v5h-5z"/>
<path fill="#7cff97" d="M1095 330h5v5h-5z"/>
<path fill="#8eff95" d="M1100 330h5v5h-5z"/>
<path fill="#a1ff94" d="M1105 330h5v5h-5z"/>
<path fill="#b4ff92" d="M1110 330h5v5h-5z"/>
<path fill="#c7ff90" d="M1115 330h5v5h-5z"/>
<path fill="#dcff8e" d="M1120 330h5v5h-5z"/>
<path fill="#f1ff8c" d="M1125 330h5v5h-5z"/>
<path fill="#fff786" d="M1130 330h5v5h-5z"/>
<path fill="#ffe479" d="M1135 330h5v5h-5z"/>
<path fill="#ffd26e" d="M1140 330h5v5h-5z"/>
<path fill="#ffc364" d="M1145 330h5v5h-5z"/>
<path fill="#ffb55b" d="M1150 330h5v5h-5z"/>
<path fill="#ffa853" d="M1155 330h5v5h-5z"/>
<path fill="#ff9d4c" d="M1160 330h5v5h-5z"/>
<path fill="#ff9346" d="M1165 330h5v5h-5z"/>
<path fill="#ff8a40" d="M1170 330h5v5h-5z"/>
<path fill="#ff813a" d="M1175 330h5v5h-5z"/>
<path fill="#ff7935" d="M1180 330h5v5h-5z"/>
<path fill="#ff7230" d="M1185 330h5v5h-5z"/>
<path fill="#ff6b2c" d="M1190 330h5v5h-5z"/>
<path fill="#ff6528" d="M1195 330h5v5h-5z"/>
<path fill="#ff5f24" d="M1200 330h5v5h-5z"/>
<path fill="#ff5921" d="M1205 330h5v5h-5z"/>
<path fill="#ff541e" d="M1210 330h5v5h-5z"/>
<path fill="#ff501b" d="M1215 330h5v5h-5z"/>
<path fill="#ff4b18" d="M1220 330h5v5h-5z"/>
<path fill="#ff4715" d="M1225 330h5v5h-5z"/>
<path fill="#ff4312" d="M1230 330h5v5h-5z"/>
<path fill="#ff3f10" d="M1235 330h5v5h-5z"/>
<path fill="#ff3c0e" d="M1240 330h5v5h-5z"/>
<path fill="#ff380c" d="M1245 330h5v5h-5z"/>
<path fill="#ff350a" d="M1250 330h5v5h-5z"/>
<path fill="#ff3208" d="M1255 330h5v5h-5z"/>
<path fill="#ff2f06" d="M1260 330h5v5h-5z"/>
<path fill="#ff2c04" d="M1265 330h5v5h-5z"/>
<path fill="#ff2a02" d="M1270 330h5v5h-5z"/>
<path fill="#ff2701" d="M1275 330h5v5h-5z"/>
<path fill="#ff2500" d="M1280 330h5v5h-5z"/>
<path fill="#ff2200" d="M1285 330h5v5h-5z"/>
<path fill="#ff2000" d="M1290 330h5v5h-5z"/>
<path fill="#ff1e00" d="M1295 330h5v5h-5z"/>
<path fill="#ff1c00" d="M1300 330h5v5h-5z"/>
<path fill="#ff1a00" d="M1305 330h5v5h-5z"/>
<path fill="#ff1800" d="M1310 330h5v5h-5z"/>
<path fill="#00ffc5" d="M905 335h10v5h-10z"/>
<path fill="#00ffc4" d="M915 335h10v5h-10z"/>
<path fill="#00ffc3" d="M925 335h10v5h-10z"/>
<path fill="#00ffc2" d="M935 335h5v5h-5z"/>
<path fill="#00ffc1" d="M940 335h10v5h-10z"/>
<path fill="#00ffc0" d="M950 335h5v5h-5z"/>
<path fill="#00ffbf" d="M955 335h5v5h-5z"/>
<path fill="#00ffbe" d="M960 335h10v5h-10z"/>
<path fill="#00ffbd" d="M970 335h5v5h-5z"/>
<path fill="#00ffbc" d="M975 335h5v5h-5z"/>
<path fill="#00ffbb" d="M980 335h10v5h-10z"/>
<path fill="#00ffba" d="M990 335h5v5h-5z"/>
<path fill="#00ffb9" d="M995 335h5v5h-5z"/>
<path fill="#00ffb8" d="M1000 335h5v5h-5z"/>
<path fill="#00ffb7" d="M1005 335h5v5h-5z"/>
<path fill="#00ffb6" d="M1010 335h5v5h-5z"/>
<path fill="#00ffb5" d="M1015 335h5v5h-5z"/>
<path fill="#00ffb4" d="M1020 335h5v5h-5z"/>
<path fill="#00ffb3" d="M1025 335h5v5h-5z"/>
<path fill="#00ffb2" d="M1030 335h5v5h-5z"/>
<path fill="#00ffb1" d="M1035 335h5v5h-5z"/>
<path fill="#00ffb0" d="M1040 335h5v5h-5z"/>
<path fill="#00ffaf" d="M1045 335h5v5h-5z"/>
<path fill="#00ffae" d="M1050 335h5v5h-5z"/>
<path fill="#05ffad" d="M1055 335h5v5h-5z"/>
<path fill="#13ffac" d="M1060 335h5v5h-5z"/>
<path fill="#22ffaa" d="M1065 335h5v5h-5z"/>
<path fill="#31ffa9" d="M1070 335h5v5h-5z"/>
<path fill="#41ffa8" d="M1075 335h5v5h-5z"/>
<path fill="#51ffa6" d="M1080 335h5v5h-5z"/>
<path fill="#62ffa5" d="M1085 335h5v5h-5z"/>
<path fill="#73ffa3" d="M1090 335h5v5h-5z"/>
<path fill="#85ffa2" d="M1095 335h5v5h-5z"/>
<path fill="#98ffa0" d="M1100 335h5v5h-5z"/>
<path fill="#abff9f" d="M1105 335h5v5h-5z"/>
<path fill="#bfff9d" d="M1110 335h5v5h-5z"/>
<path fill="#d4ff9b" d="M1115 335h5v5h-5z"/>
<path fill="#e9ff9a" d="M1120 335h5v5h-5z"/>
<path fill="#ffff98" d="M1125 335h5v5h-5z"/>
<path fill="#ffea89" d="M1130 335h5v5h-5z"/>
<path fill="#ffd77d" d="M1135 335h5v5h-5z"/>
<path fill="#ffc772" d="M1140 335h5v5h-5z"/>
<path fill="#ffb868" d="M1145 335h5v5h-5z"/>
<path fill="#ffab5f" d="M1150 335h5v5h-5z"/>
<path fill="#ff9f57" d="M1155 335h5v5h-5z"/>
<path fill="#ff954f" d="M1160 335h5v5h-5z"/>
<path fill="#ff8b49" d="M1165 335h5v5h-5z"/>
<path fill="#ff8243" d="M1170 335h5v5h-5z"/>
<path fill="#ff7a3d" d="M1175 335h5v5h-5z"/>
<path fill="#ff7238" d="M1180 335h5v5h-5z"/>
<path fill="#ff6b33" d="M1185 335h5v5h-5z"/>
<path fill="#ff652f" d="M1190 335h5v5h-5z"/>
<path fill="#ff5f2b" d="M1195 335h5v5h-5z"/>
<path fill="#ff5927" d="M1200 335h5v5h-5z"/>
<path fill="#ff5424" d="M1205 335h5v5h-5z"/>
<path fill="#ff4f20" d="M1210 335h5v5h-5z"/>
<path fill="#ff4b1d" d="M1215 335h5v5h-5z"/>
<path fill="#ff461a" d="M1220 335h5v5h-5z"/>
<path fill="#ff4218" d="M1225 335h5v5h-5z"/>
<path fill="#ff3e15" d="M1230 335h5v5h-5z"/>
<path fill="#ff3b12" d="M1235 335h5v5h-5z"/>
<path fill="#ff3710" d="M1240 335h5v5h-5z"/>
<path fill="#ff340e" d="M1245 335h5v5h-5z"/>
<path fill="#ff310c" d="M1250 335h5v5h-5z"/>
<path fill="#ff2e0a" d="M1255 335h5v5h-5z"/>
<path fill="#ff2b08" d="M1260 335h5v5h-5z"/>
<path fill="#ff2906" d="M1265 335h5v5h-5z"/>
<path fill="#ff2604" d="M1270 335h5v5h-5z"/>
<path fill="#ff2403" d="M1275 335h5v5h-5z"/>
<path fill="#ff2101" d="M1280 335h5v5h-5z"/>
<path fill="#ff1f00" d="M1285 335h5v5h-5z"/>
<path fill="#ff1d00" d="M1290 335h5v5h-5z"/>
<path fill="#ff1b00" d="M1295 335h5v5h-5z"/>
<path fill="#ff1900" d="M1300 335h5v5h-5z"/>
<path fill="#ff1700" d="M1305 335h5v5h-5z"/>
<path fill="#ff1600" d="M1310 335h5v5h-5z"/>
<path fill="#ff1400" d="M1315 335h5v5h-5z"/>
<path fill="#00ffcd" d="M910 340h5v5h-5z"/>
<path fill="#00ffcc" d="M915 340h10v5h-10z"/>
<path fill="#00ffcb" d="M925 340h10v5h-10z"/>
<path fill="#00ffca" d="M935 340h5v5h-5z"/>
<path fill="#00ffc9" d="M940 340h10v5h-10z"/>
<path fill="#00ffc8" d="M950 340h10v5h-10z"/>
<path fill="#00ffc7" d="M960 340h5v5h-5z"/>
<path fill="#00ffc6" d="M965 340h10v5h-10z"/>
<path fill="#00ffc5" d="M975 340h5v5h-5z"/>
<path fill="#00ffc4" d="M980 340h10v5h-10z"/>
<path fill="#00ffc3" d="M990 340h5v5h-5z"/>
<path fill="#00ffc2" d="M995 340h5v5h-5z"/>
<path fill="#00ffc1" d="M1000 340h10v5h-10z"/>
<path fill="#00ffc0" d="M1010 340h5v5h-5z"/>
<path fill="#00ffbf" d="M1015 340h5v5h-5z"/>
<path fill="#00ffbe" d="M1020 340h5v5h-5z"/>
<path fill="#00ffbd" d="M1025 340h5v5h-5z"/>
<path fill="#00ffbc" d="M1030 340h5v5h-5z"/>
<path fill="#00ffbb" d="M1035 340h5v5h-5z"/>
<path fill="#00ffba" d="M1040 340h5v5h-5z"/>
<path fill="#00ffb9" d="M1045 340h5v5h-5z"/>
<path fill="#00ffb8" d="M1050 340h5v5h-5z"/>
<path fill="#09ffb7" d="M1055 340h5v5h-5z"/>
<path fill="#18ffb6" d="M1060 340h5v5h-5z"/>
<path fill="#28ffb5" d="M1065 340h5v5h-5z"/>
<path fill="#37ffb4" d="M1070 340h5v5h-5z"/>
<path fill="#48ffb3" d="M1075 340h5v5h-5z"/>
<path fill="#59ffb2" d="M1080 340h5v5h-5z"/>
<path fill="#6affb0" d="M1085 340h5v5h-5z"/>
<path fill="#7cffaf" d="M1090 340h5v5h-5z"/>
<path fill="#8fffae" d="M1095 340h5v5h-5z"/>
<path fill="#a2ffac" d="M1100 340h5v5h-5z"/>
<path fill="#b6ffab" d="M1105 340h5v5h-5z"/>
<path fill="#cbffa9" d="M1110 340h5v5h-5z"/>
<path fill="#e1ffa8" d="M1115 340h5v5h-5z"/>
<path fill="#f7ffa6" d="M1120 340h5v5h-5z"/>
<path fill="#fff09b" d="M1125 340h5v5h-5z"/>
<path fill="#ffdd8d" d="M1130 340h5v5h-5z"/>
<path fill="#ffcb80" d="M1135 340h5v5h-5z"/>
<path fill="#ffbc75" d="M1140 340h5v5h-5z"/>
<path fill="#ffae6b" d="M1145 340h5v5h-5z"/>
<path fill="#ffa262" d="M1150 340h5v5h-5z"/>
<path fill="#ff965a" d="M1155 340h5v5h-5z"/>
<path fill="#ff8c53" d="M1160 340h5v5h-5z"/>
<path fill="#ff834c" d="M1165 340h5v5h-5z"/>
<path fill="#ff7b46" d="M1170 340h5v5h-5z"/>
<path fill="#ff7340" d="M1175 340h5v5h-5z"/>
<path fill="#ff6c3b" d="M1180 340h5v5h-5z"/>
<path fill="#ff6536" d="M1185 340h5v5h-5z"/>
<path fill="#ff5f32" d="M1190 340h5v5h-5z"/>
<path fill="#ff592e" d="M1195 340h5v5h-5z"/>
<path fill="#ff542a" d="M1200 340h5v5h-5z"/>
<path fill="#ff4f26" d="M1205 340h5v5h-5z"/>
<path fill="#ff4a23" d="M1210 340h5v5h-5z"/>
<path fill="#ff4620" d="M1215 340h5v5h-5z"/>
<path fill="#ff421d" d="M1220 340h5v5h-5z"/>
<path fill="#ff3e1a" d="M1225 340h5v5h-5z"/>
<path fill="#ff3a17" d="M1230 340h5v5h-5z"/>
<path fill="#ff3715" d="M1235 340h5v5h-5z"/>
<path fill="#ff3313" d="M1240 340h5v5h-5z"/>
<path fill="#ff3010" d="M1245 340h5v5h-5z"/>
<path fill="#ff2d0e" d="M1250 340h5v5h-5z"/>
<path fill="#ff2b0c" d="M1255 340h5v5h-5z"/>
<path fill="#ff280a" d="M1260 340h5v5h-5z"/>
<path fill="#ff2508" d="M1265 340h5v5h-5z"/>
<path fill="#ff2307" d="M1270 340h5v5h-5z"/>
<path fill="#ff2105" d="M1275 340h5v5h-5z"/>
<path fill="#ff1e03" d="M1280 340h5v5h-5z"/>
<path fill="#ff1c02" d="M1285 340h5v5h-5z"/>
<path fill="#ff1a00" d="M1290 340h5v5h-5z"/>
<path fill="#ff1800" d="M1295 340h5v5h-5z"/>
<path fill="#ff1600" d="M1300 340h5v5h-5z"/>
<path fill="#ff1500" d="M1305 340h5v5h-5z"/>
<path fill="#ff1300" d="M1310 340h5v5h-5z"/>
<path fill="#ff1100" d="M1315 340h5v5h-5z"/>
<path fill="#ff1000" d="M1320 340h5v5h-5z"/>
<path fill="#ff0e00" d="M1325 340h5v5h-5z"/>
<path fill="#00ffd5" d="M910 345h5v5h-5z"/>
<path fill="#00ffd4" d="M915 345h10v5h-10z"/>
<path fill="#00ffd3" d="M925 345h15v5h-15z"/>
<path fill="#00ffd2" d="M940 345h10v5h-10z"/>
<path fill="#00ffd1" d="M950 345h5v5h-5z"/>
<path fill="#00ffd0" d="M955 345h10v5h-10z"/>
<path fill="#00ffcf" d="M965 345h10v5h-10z"/>
<path fill="#00ffce" d="M975 345h10v5h-10z"/>
<path fill="#00ffcd" d="M985 345h5v5h-5z"/>
<path fill="#00ffcc" d="M990 345h10v5h-10z"/>
<path fill="#00ffcb" d="M1000 345h5v5h-5z"/>
<path fill="#00ffca" d="M1005 345h10v5h-10z"/>
<path fill="#00ffc9" d="M1015 345h5v5h-5z"/>
<path fill="#00ffc8" d="M1020 345h10v5h-10z"/>
<path fill="#00ffc7" d="M1030 345h5v5h-5z"/>
<path fill="#00ffc6" d="M1035 345h5v5h-5z"/>
<path fill="#00ffc5" d="M1040 345h5v5h-5z"/>
<path fill="#00ffc4" d="M1045 345h5v5h-5z"/>
<path fill="#00ffc3" d="M1050 345h5v5h-5z"/>
<path fill="#0effc2" d="M1055 345h5v5h-5z"/>
<path fill="#1effc2" d="M1060 345h5v5h-5z"/>
<path fill="#2effc1" d="M1065 345h5v5h-5z"/>
<path fill="#3effc0" d="M1070 345h5v5h-5z"/>
<path fill="#4fffbf" d="M1075 345h5v5h-5z"/>
<path fill="#61ffbd" d="M1080 345h5v5h-5z"/>
<path fill="#73ffbc" d="M1085 345h5v5h-5z"/>
<path fill="#86ffbb" d="M1090 345h5v5h-5z"/>
<path fill="#99ffba" d="M1095 345h5v5h-5z"/>
<path fill="#adffb9" d="M1100 345h5v5h-5z"/>
<path fill="#c2ffb7" d="M1105 345h5v5h-5z"/>
<path fill="#d8ffb6" d="M1110 345h5v5h-5z"/>
<path fill="#efffb5" d="M1115 345h5v5h-5z"/>
<path fill="#fff8ae" d="M1120 345h5v5h-5z"/>
<path fill="#ffe29e" d="M1125 345h5v5h-5z"/>
<path fill="#ffd090" d="M1130 345h5v5h-5z"/>
<path fill="#ffc083" d="M1135 345h5v5h-5z"/>
<path fill="#ffb178" d="M1140 345h5v5h-5z"/>
<path fill="#ffa46e" d="M1145 345h5v5h-5z"/>
<path fill="#ff9865" d="M1150 345h5v5h-5z"/>
<path fill="#ff8e5d" d="M1155 345h5v5h-5z"/>
<path fill="#ff8456" d="M1160 345h5v5h-5z"/>
<path fill="#ff7b4f" d="M1165 345h5v5h-5z"/>
<path fill="#ff7349" d="M1170 345h5v5h-5z"/>
<path fill="#ff6c43" d="M1175 345h5v5h-5z"/>
<path fill="#ff653e" d="M1180 345h5v5h-5z"/>
<path fill="#ff5f39" d="M1185 345h5v5h-5z"/>
<path fill="#ff5935" d="M1190 345h5v5h-5z"/>
<path fill="#ff5431" d="M1195 345h5v5h-5z"/>
<path fill="#ff4e2d" d="M1200 345h5v5h-5z"/>
<path fill="#ff4a29" d="M1205 345h5v5h-5z"/>
<path fill="#ff4526" d="M1210 345h5v5h-5z"/>
<path fill="#ff4122" d="M1215 345h5v5h-5z"/>
<path fill="#ff3d1f" d="M1220 345h5v5h-5z"/>
<path fill="#ff391c" d="M1225 345h5v5h-5z"/>
<path fill="#ff361a" d="M1230 345h5v5h-5z"/>
<path fill="#ff3317" d="M1235 345h5v5h-5z"/>
<path fill="#ff2f15" d="M1240 345h5v5h-5z"/>
<path fill="#ff2c13" d="M1245 345h5v5h-5z"/>
<path fill="#ff2a10" d="M1250 345h5v5h-5z"/>
<path fill="#ff270e" d="M1255 345h5v5h-5z"/>
<path fill="#ff240c" d="M1260 345h5v5h-5z"/>
<path fill="#ff220a" d="M1265 345h5v5h-5z"/>
<path fill="#ff2009" d="M1270 345h5v5h-5z"/>
<path fill="#ff1d07" d="M1275 345h5v5h-5z"/>
<path fill="#ff1b05" d="M1280 345h5v5h-5z"/>
<path fill="#ff1904" d="M1285 345h5v5h-5z"/>
<path fill="#ff1702" d="M1290 345h5v5h-5z"/>
<path fill="#ff1501" d="M1295 345h5v5h-5z"/>
<path fill="#ff1300" d="M1300 345h5v5h-5z"/>
<path fill="#ff1200" d="M1305 345h5v5h-5z"/>
<path fill="#ff1000" d="M1310 345h5v5h-5z"/>
<path fill="#ff0e00" d="M1315 345h5v5h-5z"/>
<path fill="#ff0d00" d="M1320 345h5v5h-5z"/>
<path fill="#ff0b00" d="M1325 345h5v5h-5z"/>
<path fill="#ff0a00" d="M1330 345h5v5h-5z"/>
<path fill="#00ffdd" d="M910 350h15v5h-15z"/>
<path fill="#00ffdc" d="M925 350h10v5h-10z"/>
<path fill="#00ffdb" d="M935 350h15v5h-15z"/>
<path fill="#00ffda" d="M950 350h10v5h-10z"/>
<path fill="#00ffd9" d="M960 350h10v5h-10z"/>
<path fill="#00ffd8" d="M970 350h10v5h-10z"/>
<path fill="#00ffd7" d="M980 350h10v5h-10z"/>
<path fill="#00ffd6" d="M990 350h10v5h-10z"/>
<path fill="#00ffd5" d="M1000 350h10v5h-10z"/>
<path fill="#00ffd4" d="M1010 350h10v5h-10z"/>
<path fill="#00ffd3" d="M1020 350h5v5h-5z"/>
<path fill="#00ffd2" d="M1025 350h10v5h-10z"/>
<path fill="#00ffd1" d="M1035 350h10v5h-10z"/>
<path fill="#00ffd0" d="M1045 350h5v5h-5z"/>
<path fill="#04ffcf" d="M1050 350h5v5h-5z"/>
<path fill="#13ffce" d="M1055 350h5v5h-5z"/>
<path fill="#23ffce" d="M1060 350h5v5h-5z"/>
<path fill="#34ffcd" d="M1065 350h5v5h-5z"/>
<path fill="#45ffcc" d="M1070 350h5v5h-5z"/>
<path fill="#57ffcb" d="M1075 350h5v5h-5z"/>
<path fill="#69ffca" d="M1080 350h5v5h-5z"/>
<path fill="#7cffc9" d="M1085 350h5v5h-5z"/>
<path fill="#90ffc8" d="M1090 350h5v5h-5z"/>
<path fill="#a4ffc7" d="M1095 350h5v5h-5z"/>
<path fill="#b9ffc6" d="M1100 350h5v5h-5z"/>
<path fill="#d0ffc5" d="M1105 350h5v5h-5z"/>
<path fill="#e6ffc4" d="M1110 350h5v5h-5z"/>
<path fill="#feffc3" d="M1115 350h5v5h-5z"/>
<path fill="#ffe9b1" d="M1120 350h5v5h-5z"/>
<path fill="#ffd5a1" d="M1125 350h5v5h-5z"/>
<path fill="#ffc493" d="M1130 350h5v5h-5z"/>
<path fill="#ffb486" d="M1135 350h5v5h-5z"/>
<path fill="#ffa77b" d="M1140 350h5v5h-5z"/>
<path fill="#ff9a71" d="M1145 350h5v5h-5z"/>
<path fill="#ff8f68" d="M1150 350h5v5h-5z"/>
<path fill="#ff8560" d="M1155 350h5v5h-5z"/>
<path fill="#ff7c59" d="M1160 350h5v5h-5z"/>
<path fill="#ff7452" d="M1165 350h5v5h-5z"/>
<path fill="#ff6c4c" d="M1170 350h5v5h-5z"/>
<path fill="#ff6546" d="M1175 350h5v5h-5z"/>
<path fill="#ff5f41" d="M1180 350h5v5h-5z"/>
<path fill="#ff593c" d="M1185 350h5v5h-5z"/>
<path fill="#ff5337" d="M1190 350h5v5h-5z"/>
<path fill="#ff4e33" d="M1195 350h5v5h-5z"/>
<path fill="#ff492f" d="M1200 350h5v5h-5z"/>
<path fill="#ff452c" d="M1205 350h5v5h-5z"/>
<path fill="#ff4028" d="M1210 350h5v5h-5z"/>
<path fill="#ff3c25" d="M1215 350h5v5h-5z"/>
<path fill="#ff3922" d="M1220 350h5v5h-5z"/>
<path fill="#ff351f" d="M1225 350h5v5h-5z"/>
<path fill="#ff321c" d="M1230 350h5v5h-5z"/>
<path fill="#ff2f1a" d="M1235 350h5v5h-5z"/>
<path fill="#ff2c17" d="M1240 350h5v5h-5z"/>
<path fill="#ff2915" d="M1245 350h5v5h-5z"/>
<path fill="#ff2613" d="M1250 350h5v5h-5z"/>
<path fill="#ff2310" d="M1255 350h5v5h-5z"/>
<path fill="#ff210e" d="M1260 350h5v5h-5z"/>
<path fill="#ff1f0d" d="M1265 350h5v5h-5z"/>
<path fill="#ff1c0b" d="M1270 350h5v5h-5z"/>
<path fill="#ff1a09" d="M1275 350h5v5h-5z"/>
<path fill="#ff1807" d="M1280 350h5v5h-5z"/>
<path fill="#ff1606" d="M1285 350h5v5h-5z"/>
<path fill="#ff1404" d="M1290 350h5v5h-5z"/>
<path fill="#ff1203" d="M1295 350h5v5h-5z"/>
<path fill="#ff1101" d="M1300 350h5v5h-5z"/>
<path fill="#ff0f00" d="M1305 350h5v5h-5z"/>
<path fill="#ff0d00" d="M1310 350h5v5h-5z"/>
<path fill="#ff0c00" d="M1315 350h5v5h-5z"/>
<path fill="#ff0a00" d="M1320 350h5v5h-5z"/>
<path fill="#ff0900" d="M1325 350h5v5h-5z"/>
<path fill="#ff0800" d="M1330 350h5v5h-5z"/>
<path fill="#ff0600" d="M1335 350h5v5h-5z"/>
<path fill="#00ffe6" d="M910 355h15v5h-15z"/>
<path fill="#00ffe5" d="M925 355h15v5h-15z"/>
<path fill="#00ffe4" d="M940 355h20v5h-20z"/>
<path fill="#00ffe3" d="M960 355h15v5h-15z"/>
<path fill="#00ffe2" d="M975 355h10v5h-10z"/>
<path fill="#00ffe1" d="M985 355h15v5h-15z"/>
<path fill="#00ffe0" d="M1000 355h10v5h-10z"/>
<path fill="#00ffdf" d="M1010 355h15v5h-15z"/>
<path fill="#00ffde" d="M1025 355h10v5h-10z"/>
<path fill="#00ffdd" d="M1035 355h10v5h-10z"/>
<path fill="#00ffdc" d="M1045 355h5v5h-5z"/>
<path fill="#09ffdc" d="M1050 355h5v5h-5z"/>
<path fill="#19ffdb" d="M1055 355h5v5h-5z"/>
<path fill="#29ffda" d="M1060 355h5v5h-5z"/>
<path fill="#3bffda" d="M1065 355h5v5h-5z"/>
<path fill="#4cffd9" d="M1070 355h5v5h-5z"/>
<path fill="#5fffd9" d="M1075 355h5v5h-5z"/>
<path fill="#72ffd8" d="M1080 355h5v5h-5z"/>
<path fill="#86ffd7" d="M1085 355h5v5h-5z"/>
<path fill="#9bffd6" d="M1090 355h5v5h-5z"/>
<path fill="#b0ffd6" d="M1095 355h5v5h-5z"/>
<path fill="#c6ffd5" d="M1100 355h5v5h-5z"/>
<path fill="#deffd4" d="M1105 355h5v5h-5z"/>
<path fill="#f6ffd3" d="M1110 355h5v5h-5z"/>
<path fill="#fff0c6" d="M1115 355h5v5h-5z"/>
<path fill="#ffdbb4" d="M1120 355h5v5h-5z"/>
<path fill="#ffc8a4" d="M1125 355h5v5h-5z"/>
<path fill="#ffb896" d="M1130 355h5v5h-5z"/>
<path fill="#ffaa89" d="M1135 355h5v5h-5z"/>
<path fill="#ff9d7e" d="M1140 355h5v5h-5z"/>
<path fill="#ff9174" d="M1145 355h5v5h-5z"/>
<path fill="#ff876b" d="M1150 355h5v5h-5z"/>
<path fill="#ff7d63" d="M1155 355h5v5h-5z"/>
<path fill="#ff755c" d="M1160 355h5v5h-5z"/>
<path fill="#ff6d55" d="M1165 355h5v5h-5z"/>
<path fill="#ff664f" d="M1170 355h5v5h-5z"/>
<path fill="#ff5f49" d="M1175 355h5v5h-5z"/>
<path fill="#ff5944" d="M1180 355h5v5h-5z"/>
<path fill="#ff533f" d="M1185 355h5v5h-5z"/>
<path fill="#ff4e3a" d="M1190 355h5v5h-5z"/>
<path fill="#ff4936" d="M1195 355h5v5h-5z"/>
<path fill="#ff4432" d="M1200 355h5v5h-5z"/>
<path fill="#ff402e" d="M1205 355h5v5h-5z"/>
<path fill="#ff3c2b" d="M1210 355h5v5h-5z"/>
<path fill="#ff3827" d="M1215 355h5v5h-5z"/>
<path fill="#ff3424" d="M1220 355h5v5h-5z"/>
<path fill="#ff3121" d="M1225 355h5v5h-5z"/>
<path fill="#ff2e1e" d="M1230 355h5v5h-5z"/>
<path fill="#ff2b1c" d="M1235 355h5v5h-5z"/>
<path fill="#ff2819" d="M1240 355h5v5h-5z"/>
<path fill="#ff2517" d="M1245 355h5v5h-5z"/>
<path fill="#ff2215" d="M1250 355h5v5h-5z"/>
<path fill="#ff2013" d="M1255 355h5v5h-5z"/>
<path fill="#ff1d11" d="M1260 355h5v5h-5z"/>
<path fill="#ff1b0f" d="M1265 355h5v5h-5z"/>
<path fill="#ff190d" d="M1270 355h5v5h-5z"/>
<path fill="#ff170b" d="M1275 355h5v5h-5z"/>
<path fill="#ff1509" d="M1280 355h5v5h-5z"/>
<path fill="#ff1308" d="M1285 355h5v5h-5z"/>
<path fill="#ff1106" d="M1290 355h5v5h-5z"/>
<path fill="#ff1005" d="M1295 355h5v5h-5z"/>
<path fill="#ff0e03" d="M1300 355h5v5h-5z"/>
<path fill="#ff0c02" d="M1305 355h5v5h-5z"/>
<path fill="#ff0b00" d="M1310 355h5v5h-5z"/>
<path fill="#ff0900" d="M1315 355h5v5h-5z"/>
<path fill="#ff0800" d="M1320 355h5v5h-5z"/>
<path fill="#ff0600" d="M1325 355h5v5h-5z"/>
<path fill="#ff0500" d="M1330 355h5v5h-5z"/>
<path fill="#ff0400" d="M1335 355h5v5h-5z"/>
<path fill="#ff0300" d="M1340 355h5v5h-5z"/>
<path fill="#00ffef" d="M910 360h25v5h-25z"/>
<path fill="#00ffee" d="M935 360h30v5h-30z"/>
<path fill="#00ffed" d="M965 360h20v5h-20z"/>
<path fill="#00ffec" d="M985 360h25v5h-25z"/>
<path fill="#00ffeb" d="M1010 360h15v5h-15z"/>
<path fill="#00ffea" d="M1025 360h20v5h-20z"/>
<path fill="#00ffe9" d="M1045 360h5v5h-5z"/>
<path fill="#0effe9" d="M1050 360h5v5h-5z"/>
<path fill="#1effe9" d="M1055 360h5v5h-5z"/>
<path fill="#30ffe8" d="M1060 360h5v5h-5z"/>
<path fill="#42ffe8" d="M1065 360h5v5h-5z"/>
<path fill="#54ffe7" d="M1070 360h5v5h-5z"/>
<path fill="#68ffe7" d="M1075 360h5v5h-5z"/>
<path fill="#7cffe7" d="M1080 360h5v5h-5z"/>
<path fill="#91ffe6" d="M1085 360h5v5h-5z"/>
<path fill="#a6ffe6" d="M1090 360h5v5h-5z"/>
<path fill="#bdffe5" d="M1095 360h5v5h-5z"/>
<path fill="#d4ffe5" d="M1100 360h5v5h-5z"/>
<path fill="#edffe4" d="M1105 360h5v5h-5z"/>
<path fill="#fff8dd" d="M1110 360h5v5h-5z"/>
<path fill="#ffe1c8" d="M1115 360h5v5h-5z"/>
<path fill="#ffcdb6" d="M1120 360h5v5h-5z"/>
<path fill="#ffbca7" d="M1125 360h5v5h-5z"/>
<path fill="#ffad99" d="M1130 360h5v5h-5z"/>
<path fill="#ff9f8c" d="M1135 360h5v5h-5z"/>
<path fill="#ff9381" d="M1140 360h5v5h-5z"/>
<path fill="#ff8877" d="M1145 360h5v5h-5z"/>
<path fill="#ff7e6e" d="M1150 360h5v5h-5z"/>
<path fill="#ff7566" d="M1155 360h5v5h-5z"/>
<path fill="#ff6d5f" d="M1160 360h5v5h-5z"/>
<path fill="#ff6658" d="M1165 360h5v5h-5z"/>
<path fill="#ff5f51" d="M1170 360h5v5h-5z"/>
<path fill="#ff594c" d="M1175 360h5v5h-5z"/>
<path fill="#ff5346" d="M1180 360h5v5h-5z"/>
<path fill="#ff4d41" d="M1185 360h5v5h-5z"/>
<path fill="#ff483d" d="M1190 360h5v5h-5z"/>
<path fill="#ff4338" d="M1195 360h5v5h-5z"/>
<path fill="#ff3f34" d="M1200 360h5v5h-5z"/>
<path fill="#ff3b31" d="M1205 360h5v5h-5z"/>
<path fill="#ff372d" d="M1210 360h5v5h-5z"/>
<path fill="#ff332a" d="M1215 360h5v5h-5z"/>
<path fill="#ff3027" d="M1220 360h5v5h-5z"/>
<path fill="#ff2d24" d="M1225 360h5v5h-5z"/>
<path fill="#ff2a21" d="M1230 360h5v5h-5z"/>
<path fill="#ff271e" d="M1235 360h5v5h-5z"/>
<path fill="#ff241c" d="M1240 360h5v5h-5z"/>
<path fill="#ff2119" d="M1245 360h5v5h-5z"/>
<path fill="#ff1f17" d="M1250 360h5v5h-5z"/>
<path fill="#ff1c15" d="M1255 360h5v5h-5z"/>
<path fill="#ff1a13" d="M1260 360h5v5h-5z"/>
<path fill="#ff1811" d="M1265 360h5v5h-5z"/>
<path fill="#ff160f" d="M1270 360h5v5h-5z"/>
<path fill="#ff140d" d="M1275 360h5v5h-5z"/>
<path fill="#ff120b" d="M1280 360h5v5h-5z"/>
<path fill="#ff1009" d="M1285 360h5v5h-5z"/>
<path fill="#ff0e08" d="M1290 360h5v5h-5z"/>
<path fill="#ff0d06" d="M1295 360h5v5h-5z"/>
<path fill="#ff0b05" d="M1300 360h5v5h-5z"/>
<path fill="#ff0a03" d="M1305 360h5v5h-5z"/>
<path fill="#ff0802" d="M1310 360h5v5h-5z"/>
<path fill="#ff0701" d="M1315 360h5v5h-5z"/>
<path fill="#ff0500" d="M1320 360h5v5h-5z"/>
<path fill="#ff0400" d="M1325 360h5v5h-5z"/>
<path fill="#ff0300" d="M1330 360h5v5h-5z"/>
<path fill="#ff0100" d="M1335 360h5v5h-5z"/>
<path fill="#ff0000" d="M1340 360h10v5h-10z"/>
<path fill="#00fff9" d="M915 365h45v5h-45z"/>
<path fill="#00fff8" d="M960 365h70v5h-70z"/>
<path fill="#00fff7" d="M1030 365h15v5h-15z"/>
<path fill="#02fff7" d="M1045 365h5v5h-5z"/>
<path fill="#13fff7" d="M1050 365h5v5h-5z"/>
<path fill="#25fff7" d="M1055 365h5v5h-5z"/>
<path fill="#37fff7" d="M1060 365h5v5h-5z"/>
<path fill="#4afff7" d="M1065 365h5v5h-5z"/>
<path fill="#5dfff7" d="M1070 365h5v5h-5z"/>
<path fill="#71fff7" d="M1075 365h5v5h-5z"/>
<path fill="#86fff6" d="M1080 365h5v5h-5z"/>
<path fill="#9cfff6" d="M1085 365h5v5h-5z"/>
<path fill="#b3fff6" d="M1090 365h5v5h-5z"/>
<path fill="#cbfff6" d="M1095 365h5v5h-5z"/>
<path fill="#e3fff6" d="M1100 365h5v5h-5z"/>
<path fill="#fdfff6" d="M1105 365h5v5h-5z"/>
<path fill="#ffe8df" d="M1110 365h5v5h-5z"/>
<path fill="#ffd3cb" d="M1115 365h5v5h-5z"/>
<path fill="#ffc0b9" d="M1120 365h5v5h-5z"/>
<path fill="#ffb0a9" d="M1125 365h5v5h-5z"/>
<path fill="#ffa29b" d="M1130 365h5v5h-5z"/>
<path fill="#ff958f" d="M1135 365h5v5h-5z"/>
<path fill="#ff8a84" d="M1140 365h5v5h-5z"/>
<path fill="#ff7f7a" d="M1145 365h5v5h-5z"/>
<path fill="#ff7671" d="M1150 365h5v5h-5z"/>
<path fill="#ff6e69" d="M1155 365h5v5h-5z"/>
<path fill="#ff6661" d="M1160 365h5v5h-5z"/>
<path fill="#ff5f5b" d="M1165 365h5v5h-5z"/>
<path fill="#ff5854" d="M1170 365h5v5h-5z"/>
<path fill="#ff524e" d="M1175 365h5v5h-5z"/>
<path fill="#ff4d49" d="M1180 365h5v5h-5z"/>
<path fill="#ff4844" d="M1185 365h5v5h-5z"/>
<path fill="#ff433f" d="M1190 365h5v5h-5z"/>
<path fill="#ff3e3b" d="M1195 365h5v5h-5z"/>
<path fill="#ff3a37" d="M1200 365h5v5h-5z"/>
<path fill="#ff3633" d="M1205 365h5v5h-5z"/>
<path fill="#ff322f" d="M1210 365h5v5h-5z"/>
<path fill="#ff2f2c" d="M1215 365h5v5h-5z"/>
<path fill="#ff2c29" d="M1220 365h5v5h-5z"/>
<path fill="#ff2926" d="M1225 365h5v5h-5z"/>
<path fill="#ff2623" d="M1230 365h5v5h-5z"/>
<path fill="#ff2320" d="M1235 365h5v5h-5z"/>
<path fill="#ff201e" d="M1240 365h5v5h-5z"/>
<path fill="#ff1e1b" d="M1245 365h5v5h-5z"/>
<path fill="#ff1b19" d="M1250 365h5v5h-5z"/>
<path fill="#ff1917" d="M1255 365h5v5h-5z"/>
<path fill="#ff1715" d="M1260 365h5v5h-5z"/>
<path fill="#ff1513" d="M1265 365h5v5h-5z"/>
<path fill="#ff1311" d="M1270 365h5v5h-5z"/>
<path fill="#ff110f" d="M1275 365h5v5h-5z"/>
<path fill="#ff0f0d" d="M1280 365h5v5h-5z"/>
<path fill="#ff0d0b" d="M1285 365h5v5h-5z"/>
<path fill="#ff0c0a" d="M1290 365h5v5h-5z"/>
<path fill="#ff0a08" d="M1295 365h5v5h-5z"/>
<path fill="#ff0807" d="M1300 365h5v5h-5z"/>
<path fill="#ff0705" d="M1305 365h5v5h-5z"/>
<path fill="#ff0604" d="M1310 365h5v5h-5z"/>
<path fill="#ff0403" d="M1315 365h5v5h-5z"/>
<path fill="#ff0301" d="M1320 365h5v5h-5z"/>
<path fill="#ff0200" d="M1325 365h5v5h-5z"/>
<path fill="#ff0000" d="M1330 365h25v5h-25z"/>
<path fill="#00fbff" d="M915 370h25v5h-25z"/>
<path fill="#00faff" d="M940 370h50v5h-50z"/>
<path fill="#00f9ff" d="M990 370h40v5h-40z"/>
<path fill="#00f8ff" d="M1030 370h15v5h-15z"/>
<path fill="#07f8ff" d="M1045 370h5v5h-5z"/>
<path fill="#18f8ff" d="M1050 370h5v5h-5z"/>
<path fill="#2af8ff" d="M1055 370h5v5h-5z"/>
<path fill="#3cf7ff" d="M1060 370h5v5h-5z"/>
<path fill="#4ff7ff" d="M1065 370h5v5h-5z"/>
<path fill="#63f7ff" d="M1070 370h5v5h-5z"/>
<path fill="#78f7ff" d="M1075 370h5v5h-5z"/>
<path fill="#8df7ff" d="M1080 370h5v5h-5z"/>
<path fill="#a3f6ff" d="M1085 370h5v5h-5z"/>
<path fill="#baf6ff" d="M1090 370h5v5h-5z"/>
<path fill="#d2f6ff" d="M1095 370h5v5h-5z"/>
<path fill="#ebf6ff" d="M1100 370h5v5h-5z"/>
<path fill="#fff0f9" d="M1105 370h5v5h-5z"/>
<path fill="#ffd9e1" d="M1110 370h5v5h-5z"/>
<path fill="#ffc5cd" d="M1115 370h5v5h-5z"/>
<path fill="#ffb4bb" d="M1120 370h5v5h-5z"/>
<path fill="#ffa5ac" d="M1125 370h5v5h-5z"/>
<path fill="#ff979e" d="M1130 370h5v5h-5z"/>
<path fill="#ff8b92" d="M1135 370h5v5h-5z"/>
<path fill="#ff8187" d="M1140 370h5v5h-5z"/>
<path fill="#ff777d" d="M1145 370h5v5h-5z"/>
<path fill="#ff6e74" d="M1150 370h5v5h-5z"/>
<path fill="#ff666c" d="M1155 370h5v5h-5z"/>
<path fill="#ff5f64" d="M1160 370h5v5h-5z"/>
<path fill="#ff585d" d="M1165 370h5v5h-5z"/>
<path fill="#ff5257" d="M1170 370h5v5h-5z"/>
<path fill="#ff4c51" d="M1175 370h5v5h-5z"/>
<path fill="#ff474c" d="M1180 370h5v5h-5z"/>
<path fill="#ff4247" d="M1185 370h5v5h-5z"/>
<path fill="#ff3e42" d="M1190 370h5v5h-5z"/>
<path fill="#ff393d" d="M1195 370h5v5h-5z"/>
<path fill="#ff3539" d="M1200 370h5v5h-5z"/>
<path fill="#ff3135" d="M1205 370h5v5h-5z"/>
<path fill="#ff2e32" d="M1210 370h5v5h-5z"/>
<path fill="#ff2b2e" d="M1215 370h5v5h-5z"/>
<path fill="#ff272b" d="M1220 370h5v5h-5z"/>
<path fill="#ff2428" d="M1225 370h5v5h-5z"/>
<path fill="#ff2225" d="M1230 370h5v5h-5z"/>
<path fill="#ff1f22" d="M1235 370h5v5h-5z"/>
<path fill="#ff1c20" d="M1240 370h5v5h-5z"/>
<path fill="#ff1a1d" d="M1245 370h5v5h-5z"/>
<path fill="#ff181b" d="M1250 370h5v5h-5z"/>
<path fill="#ff1619" d="M1255 370h5v5h-5z"/>
<path fill="#ff1317" d="M1260 370h5v5h-5z"/>
<path fill="#ff1215" d="M1265 370h5v5h-5z"/>
<path fill="#ff1013" d="M1270 370h5v5h-5z"/>
<path fill="#ff0e11" d="M1275 370h5v5h-5z"/>
<path fill="#ff0c0f" d="M1280 370h5v5h-5z"/>
<path fill="#ff0a0d" d="M1285 370h5v5h-5z"/>
<path fill="#ff090c" d="M1290 370h5v5h-5z"/>
<path fill="#ff070a" d="M1295 370h5v5h-5z"/>
<path fill="#ff0608" d="M1300 370h5v5h-5z"/>
<path fill="#ff0407" d="M1305 370h5v5h-5z"/>
<path fill="#ff0306" d="M1310 370h5v5h-5z"/>
<path fill="#ff0204" d="M1315 370h5v5h-5z"/>
<path fill="#ff0003" d="M1320 370h5v5h-5z"/>
<path fill="#ff0002" d="M1325 370h5v5h-5z"/>
<path fill="#ff0000" d="M1330 370h30v5h-30z"/>
<path fill="#00f1ff" d="M915 375h10v5h-10z"/>
<path fill="#00f0ff" d="M925 375h25v5h-25z"/>
<path fill="#00efff" d="M950 375h20v5h-20z"/>
<path fill="#00eeff" d="M970 375h20v5h-20z"/>
<path fill="#00edff" d="M990 375h15v5h-15z"/>
<path fill="#00ecff" d="M1005 375h15v5h-15z"/>
<path fill="#00ebff" d="M1020 375h15v5h-15z"/>
<path fill="#00eaff" d="M1035 375h10v5h-10z"/>
<path fill="#0ceaff" d="M1045 375h5v5h-5z"/>
<path fill="#1de9ff" d="M1050 375h5v5h-5z"/>
<path fill="#2ee9ff" d="M1055 375h5v5h-5z"/>
<path fill="#40e8ff" d="M1060 375h5v5h-5z"/>
<path fill="#53e8ff" d="M1065 375h5v5h-5z"/>
<path fill="#66e7ff" d="M1070 375h5v5h-5z"/>
<path fill="#7ae7ff" d="M1075 375h5v5h-5z"/>
<path fill="#8fe6ff" d="M1080 375h5v5h-5z"/>
<path fill="#a4e6ff" d="M1085 375h5v5h-5z"/>
<path fill="#bbe5ff" d="M1090 375h5v5h-5z"/>
<path fill="#d2e5ff" d="M1095 375h5v5h-5z"/>
<path fill="#eae4ff" d="M1100 375h5v5h-5z"/>
<path fill="#ffdffa" d="M1105 375h5v5h-5z"/>
<path fill="#ffcae3" d="M1110 375h5v5h-5z"/>
<path fill="#ffb8cf" d="M1115 375h5v5h-5z"/>
<path fill="#ffa8be" d="M1120 375h5v5h-5z"/>
<path fill="#ff9aae" d="M1125 375h5v5h-5z"/>
<path fill="#ff8da1" d="M1130 375h5v5h-5z"/>
<path fill="#ff8294" d="M1135 375h5v5h-5z"/>
<path fill="#ff7889" d="M1140 375h5v5h-5z"/>
<path fill="#ff6f7f" d="M1145 375h5v5h-5z"/>
<path fill="#ff6676" d="M1150 375h5v5h-5z"/>
<path fill="#ff5f6e" d="M1155 375h5v5h-5z"/>
<path fill="#ff5867" d="M1160 375h5v5h-5z"/>
<path fill="#ff5260" d="M1165 375h5v5h-5z"/>
<path fill="#ff4c59" d="M1170 375h5v5h-5z"/>
<path fill="#ff4654" d="M1175 375h5v5h-5z"/>
<path fill="#ff414e" d="M1180 375h5v5h-5z"/>
<path fill="#ff3d49" d="M1185 375h5v5h-5z"/>
<path fill="#ff3844" d="M1190 375h5v5h-5z"/>
<path fill="#ff3440" d="M1195 375h5v5h-5z"/>
<path fill="#ff303c" d="M1200 375h5v5h-5z"/>
<path fill="#ff2d38" d="M1205 375h5v5h-5z"/>
<path fill="#ff2a34" d="M1210 375h5v5h-5z"/>
<path fill="#ff2631" d="M1215 375h5v5h-5z"/>
<path fill="#ff232d" d="M1220 375h5v5h-5z"/>
<path fill="#ff202a" d="M1225 375h5v5h-5z"/>
<path fill="#ff1e27" d="M1230 375h5v5h-5z"/>
<path fill="#ff1b25" d="M1235 375h5v5h-5z"/>
<path fill="#ff1922" d="M1240 375h5v5h-5z"/>
<path fill="#ff171f" d="M1245 375h5v5h-5z"/>
<path fill="#ff141d" d="M1250 375h5v5h-5z"/>
<path fill="#ff121b" d="M1255 375h5v5h-5z"/>
<path fill="#ff1019" d="M1260 375h5v5h-5z"/>
<path fill="#ff0e16" d="M1265 375h5v5h-5z"/>
<path fill="#ff0d15" d="M1270 375h5v5h-5z"/>
<path fill="#ff0b13" d="M1275 375h5v5h-5z"/>
<path fill="#ff0911" d="M1280 375h5v5h-5z"/>
<path fill="#ff080f" d="M1285 375h5v5h-5z"/>
<path fill="#ff060d" d="M1290 375h5v5h-5z"/>
<path fill="#ff050c" d="M1295 375h5v5h-5z"/>
<path fill="#ff030a" d="M1300 375h5v5h-5z"/>
<path fill="#ff0209" d="M1305 375h5v5h-5z"/>
<path fill="#ff0007" d="M1310 375h5v5h-5z"/>
<path fill="#ff0006" d="M1315 375h5v5h-5z"/>
<path fill="#ff0005" d="M1320 375h5v5h-5z"/>
<path fill="#ff0003" d="M1325 375h5v5h-5z"/>
<path fill="#ff0002" d="M1330 375h5v5h-5z"/>
<path fill="#ff0001" d="M1335 375h5v5h-5z"/>
<path fill="#ff0000" d="M1340 375h25v5h-25z"/>
<path fill="#00e7ff" d="M915 380h15v5h-15z"/>
<path fill="#00e6ff" d="M930 380h15v5h-15z"/>
<path fill="#00e5ff" d="M945 380h15v5h-15z"/>
<path fill="#00e4ff" d="M960 380h10v5h-10z"/>
<path fill="#00e3ff" d="M970 380h15v5h-15z"/>
<path fill="#00e2ff" d="M985 380h10v5h-10z"/>
<path fill="#00e1ff" d="M995 380h10v5h-10z"/>
<path fill="#00e0ff" d="M1005 380h10v5h-10z"/>
<path fill="#00dfff" d="M1015 380h10v5h-10z"/>
<path fill="#00deff" d="M1025 380h10v5h-10z"/>
<path fill="#00ddff" d="M1035 380h5v5h-5z"/>
<path fill="#01ddff" d="M1040 380h5v5h-5z"/>
<path fill="#11dcff" d="M1045 380h5v5h-5z"/>
<path fill="#21dbff" d="M1050 380h5v5h-5z"/>
<path fill="#32dbff" d="M1055 380h5v5h-5z"/>
<path fill="#44daff" d="M1060 380h5v5h-5z"/>
<path fill="#56d9ff" d="M1065 380h5v5h-5z"/>
<path fill="#69d9ff" d="M1070 380h5v5h-5z"/>
<path fill="#7cd8ff" d="M1075 380h5v5h-5z"/>
<path fill="#90d7ff" d="M1080 380h5v5h-5z"/>
<path fill="#a5d6ff" d="M1085 380h5v5h-5z"/>
<path fill="#bbd5ff" d="M1090 380h5v5h-5z"/>
<path fill="#d2d4ff" d="M1095 380h5v5h-5z"/>
<path fill="#ead4ff" d="M1100 380h5v5h-5z"/>
<path fill="#ffd0fc" d="M1105 380h5v5h-5z"/>
<path fill="#ffbce5" d="M1110 380h5v5h-5z"/>
<path fill="#ffabd1" d="M1115 380h5v5h-5z"/>
<path fill="#ff9cc0" d="M1120 380h5v5h-5z"/>
<path fill="#ff8fb1" d="M1125 380h5v5h-5z"/>
<path fill="#ff83a3" d="M1130 380h5v5h-5z"/>
<path fill="#ff7997" d="M1135 380h5v5h-5z"/>
<path fill="#ff6f8c" d="M1140 380h5v5h-5z"/>
<path fill="#ff6782" d="M1145 380h5v5h-5z"/>
<path fill="#ff5f79" d="M1150 380h5v5h-5z"/>
<path fill="#ff5871" d="M1155 380h5v5h-5z"/>
<path fill="#ff5169" d="M1160 380h5v5h-5z"/>
<path fill="#ff4b62" d="M1165 380h5v5h-5z"/>
<path fill="#ff465c" d="M1170 380h5v5h-5z"/>
<path fill="#ff4156" d="M1175 380h5v5h-5z"/>
<path fill="#ff3c51" d="M1180 380h5v5h-5z"/>
<path fill="#ff374b" d="M1185 380h5v5h-5z"/>
<path fill="#ff3347" d="M1190 380h5v5h-5z"/>
<path fill="#ff2f42" d="M1195 380h5v5h-5z"/>
<path fill="#ff2c3e" d="M1200 380h5v5h-5z"/>
<path fill="#ff283a" d="M1205 380h5v5h-5z"/>
<path fill="#ff2536" d="M1210 380h5v5h-5z"/>
<path fill="#ff2233" d="M1215 380h5v5h-5z"/>
<path fill="#ff1f30" d="M1220 380h5v5h-5z"/>
<path fill="#ff1d2c" d="M1225 380h5v5h-5z"/>
<path fill="#ff1a29" d="M1230 380h5v5h-5z"/>
<path fill="#ff1827" d="M1235 380h5v5h-5z"/>
<path fill="#ff1524" d="M1240 380h5v5h-5z"/>
<path fill="#ff1321" d="M1245 380h5v5h-5z"/>
<path fill="#ff111f" d="M1250 380h5v5h-5z"/>
<path fill="#ff0f1d" d="M1255 380h5v5h-5z"/>
<path fill="#ff0d1b" d="M1260 380h5v5h-5z"/>
<path fill="#ff0b18" d="M1265 380h5v5h-5z"/>
<path fill="#ff0a16" d="M1270 380h5v5h-5z"/>
<path fill="#ff0814" d="M1275 380h5v5h-5z"/>
<path fill="#ff0613" d="M1280 380h5v5h-5z"/>
<path fill="#ff0511" d="M1285 380h5v5h-5z"/>
<path fill="#ff030f" d="M1290 380h5v5h-5z"/>
<path fill="#ff020e" d="M1295 380h5v5h-5z"/>
<path fill="#ff000c" d="M1300 380h5v5h-5z"/>
<path fill="#ff000a" d="M1305 380h5v5h-5z"/>
<path fill="#ff0009" d="M1310 380h5v5h-5z"/>
<path fill="#ff0008" d="M1315 380h5v5h-5z"/>
<path fill="#ff0006" d="M1320 380h5v5h-5z"/>
<path fill="#ff0005" d="M1325 380h5v5h-5z"/>
<path fill="#ff0004" d="M1330 380h5v5h-5z"/>
<path fill="#ff0002" d="M1335 380h5v5h-5z"/>
<path fill="#ff0001" d="M1340 380h5v5h-5z"/>
<path fill="#ff0000" d="M1345 380h25v5h-25z"/>
<path fill="#00ddff" d="M920 385h15v5h-15z"/>
<path fill="#00dcff" d="M935 385h10v5h-10z"/>
<path fill="#00dbff" d="M945 385h10v5h-10z"/>
<path fill="#00daff" d="M955 385h10v5h-10z"/>
<path fill="#00d9ff" d="M965 385h10v5h-10z"/>
<path fill="#00d8ff" d="M975 385h10v5h-10z"/>
<path fill="#00d7ff" d="M985 385h5v5h-5z"/>
<path fill="#00d6ff" d="M990 385h10v5h-10z"/>
<path fill="#00d5ff" d="M1000 385h10v5h-10z"/>
<path fill="#00d4ff" d="M1010 385h5v5h-5z"/>
<path fill="#00d3ff" d="M1015 385h10v5h-10z"/>
<path fill="#00d2ff" d="M1025 385h5v5h-5z"/>
<path fill="#00d1ff" d="M1030 385h5v5h-5z"/>
<path fill="#00d0ff" d="M1035 385h5v5h-5z"/>
<path fill="#05d0ff" d="M1040 385h5v5h-5z"/>
<path fill="#15cfff" d="M1045 385h5v5h-5z"/>
<path fill="#25ceff" d="M1050 385h5v5h-5z"/>
<path fill="#36cdff" d="M1055 385h5v5h-5z"/>
<path fill="#47ccff" d="M1060 385h5v5h-5z"/>
<path fill="#59cbff" d="M1065 385h5v5h-5z"/>
<path fill="#6bcaff" d="M1070 385h5v5h-5z"/>
<path fill="#7ec9ff" d="M1075 385h5v5h-5z"/>
<path fill="#92c8ff" d="M1080 385h5v5h-5z"/>
<path fill="#a7c7ff" d="M1085 385h5v5h-5z"/>
<path fill="#bcc6ff" d="M1090 385h5v5h-5z"/>
<path fill="#d2c5ff" d="M1095 385h5v5h-5z"/>
<path fill="#e9c4ff" d="M1100 385h5v5h-5z"/>
<path fill="#ffc1fd" d="M1105 385h5v5h-5z"/>
<path fill="#ffafe7" d="M1110 385h5v5h-5z"/>
<path fill="#ff9fd3" d="M1115 385h5v5h-5z"/>
<path fill="#ff91c2" d="M1120 385h5v5h-5z"/>
<path fill="#ff85b3" d="M1125 385h5v5h-5z"/>
<path fill="#ff7aa5" d="M1130 385h5v5h-5z"/>
<path fill="#ff7099" d="M1135 385h5v5h-5z"/>
<path fill="#ff678e" d="M1140 385h5v5h-5z"/>
<path fill="#ff5f85" d="M1145 385h5v5h-5z"/>
<path fill="#ff587c" d="M1150 385h5v5h-5z"/>
<path fill="#ff5173" d="M1155 385h5v5h-5z"/>
<path fill="#ff4b6c" d="M1160 385h5v5h-5z"/>
<path fill="#ff4565" d="M1165 385h5v5h-5z"/>
<path fill="#ff405e" d="M1170 385h5v5h-5z"/>
<path fill="#ff3b59" d="M1175 385h5v5h-5z"/>
<path fill="#ff3653" d="M1180 385h5v5h-5z"/>
<path fill="#ff324e" d="M1185 385h5v5h-5z"/>
<path fill="#ff2e49" d="M1190 385h5v5h-5z"/>
<path fill="#ff2b45" d="M1195 385h5v5h-5z"/>
<path fill="#ff2740" d="M1200 385h5v5h-5z"/>
<path fill="#ff243c" d="M1205 385h5v5h-5z"/>
<path fill="#ff2139" d="M1210 385h5v5h-5z"/>
<path fill="#ff1e35" d="M1215 385h5v5h-5z"/>
<path fill="#ff1b32" d="M1220 385h5v5h-5z"/>
<path fill="#ff192f" d="M1225 385h5v5h-5z"/>
<path fill="#ff162c" d="M1230 385h5v5h-5z"/>
<path fill="#ff1429" d="M1235 385h5v5h-5z"/>
<path fill="#ff1226" d="M1240 385h5v5h-5z"/>
<path fill="#ff1023" d="M1245 385h5v5h-5z"/>
<path fill="#ff0e21" d="M1250 385h5v5h-5z"/>
<path fill="#ff0c1f" d="M1255 385h5v5h-5z"/>
<path fill="#ff0a1c" d="M1260 385h5v5h-5z"/>
<path fill="#ff081a" d="M1265 385h5v5h-5z"/>
<path fill="#ff0718" d="M1270 385h5v5h-5z"/>
<path fill="#ff0516" d="M1275 385h5v5h-5z"/>
<path fill="#ff0314" d="M1280 385h5v5h-5z"/>
<path fill="#ff0213" d="M1285 385h5v5h-5z"/>
<path fill="#ff0111" d="M1290 385h5v5h-5z"/>
<path fill="#ff000f" d="M1295 385h5v5h-5z"/>
<path fill="#ff000e" d="M1300 385h5v5h-5z"/>
<path fill="#ff000c" d="M1305 385h5v5h-5z"/>
<path fill="#ff000b" d="M1310 385h5v5h-5z"/>
<path fill="#ff0009" d="M1315 385h5v5h-5z"/>
<path fill="#ff0008" d="M1320 385h5v5h-5z"/>
<path fill="#ff0007" d="M1325 385h5v5h-5z"/>
<path fill="#ff0005" d="M1330 385h5v5h-5z"/>
<path fill="#ff0004" d="M1335 385h5v5h-5z"/>
<path fill="#ff0003" d="M1340 385h5v5h-5z"/>
<path fill="#ff0002" d="M1345 385h5v5h-5z"/>
<path fill="#ff0001" d="M1350 385h5v5h-5z"/>
<path fill="#ff0000" d="M1355 385h20v5h-20z"/>
<path fill="#00d4ff" d="M920 390h10v5h-10z"/>
<path fill="#00d3ff" d="M930 390h10v5h-10z"/>
<path fill="#00d2ff" d="M940 390h10v5h-10z"/>
<path fill="#00d1ff" d="M950 390h5v5h-5z"/>
<path fill="#00d0ff" d="M955 390h10v5h-10z"/>
<path fill="#00cfff" d="M965 390h5v5h-5z"/>
<path fill="#00ceff" d="M970 390h10v5h-10z"/>
<path fill="#00cdff" d="M980 390h5v5h-5z"/>
<path fill="#00ccff" d="M985 390h10v5h-10z"/>
<path fill="#00cbff" d="M995 390h5v5h-5z"/>
<path fill="#00caff" d="M1000 390h5v5h-5z"/>
<path fill="#00c9ff" d="M1005 390h10v5h-10z"/>
<path fill="#00c8ff" d="M1015 390h5v5h-5z"/>
<path fill="#00c7ff" d="M1020 390h5v5h-5z"/>
<path fill="#00c6ff" d="M1025 390h5v5h-5z"/>
<path fill="#00c5ff" d="M1030 390h5v5h-5z"/>
<path fill="#00c4ff" d="M1035 390h5v5h-5z"/>
<path fill="#0ac3ff" d="M1040 390h5v5h-5z"/>
<path fill="#19c2ff" d="M1045 390h5v5h-5z"/>
<path fill="#29c1ff" d="M1050 390h5v5h-5z"/>
<path fill="#39c0ff" d="M1055 390h5v5h-5z"/>
<path fill="#4abfff" d="M1060 390h5v5h-5z"/>
<path fill="#5bbeff" d="M1065 390h5v5h-5z"/>
<path fill="#6ebdff" d="M1070 390h5v5h-5z"/>
<path fill="#80bcff" d="M1075 390h5v5h-5z"/>
<path fill="#94baff" d="M1080 390h5v5h-5z"/>
<path fill="#a8b9ff" d="M1085 390h5v5h-5z"/>
<path fill="#bcb8ff" d="M1090 390h5v5h-5z"/>
<path fill="#d2b6ff" d="M1095 390h5v5h-5z"/>
<path fill="#e8b5ff" d="M1100 390h5v5h-5z"/>
<path fill="#ffb3fe" d="M1105 390h5v5h-5z"/>
<path fill="#ffa2e8" d="M1110 390h5v5h-5z"/>
<path fill="#ff93d5" d="M1115 390h5v5h-5z"/>
<path fill="#ff86c4" d="M1120 390h5v5h-5z"/>
<path fill="#ff7bb5" d="M1125 390h5v5h-5z"/>
<path fill="#ff70a8" d="M1130 390h5v5h-5z"/>
<path fill="#ff679c" d="M1135 390h5v5h-5z"/>
<path fill="#ff5f91" d="M1140 390h5v5h-5z"/>
<path fill="#ff5787" d="M1145 390h5v5h-5z"/>
<path fill="#ff507e" d="M1150 390h5v5h-5z"/>
<path fill="#ff4a76" d="M1155 390h5v5h-5z"/>
<path fill="#ff446e" d="M1160 390h5v5h-5z"/>
<path fill="#ff3f67" d="M1165 390h5v5h-5z"/>
<path fill="#ff3a61" d="M1170 390h5v5h-5z"/>
<path fill="#ff355b" d="M1175 390h5v5h-5z"/>
<path fill="#ff3155" d="M1180 390h5v5h-5z"/>
<path fill="#ff2d50" d="M1185 390h5v5h-5z"/>
<path fill="#ff294b" d="M1190 390h5v5h-5z"/>
<path fill="#ff2647" d="M1195 390h5v5h-5z"/>
<path fill="#ff2343" d="M1200 390h5v5h-5z"/>
<path fill="#ff203f" d="M1205 390h5v5h-5z"/>
<path fill="#ff1d3b" d="M1210 390h5v5h-5z"/>
<path fill="#ff1a37" d="M1215 390h5v5h-5z"/>
<path fill="#ff1734" d="M1220 390h5v5h-5z"/>
<path fill="#ff1531" d="M1225 390h5v5h-5z"/>
<path fill="#ff132e" d="M1230 390h5v5h-5z"/>
<path fill="#ff102b" d="M1235 390h5v5h-5z"/>
<path fill="#ff0e28" d="M1240 390h5v5h-5z"/>
<path fill="#ff0c25" d="M1245 390h5v5h-5z"/>
<path fill="#ff0a23" d="M1250 390h5v5h-5z"/>
<path fill="#ff0921" d="M1255 390h5v5h-5z"/>
<path fill="#ff071e" d="M1260 390h5v5h-5z"/>
<path fill="#ff051c" d="M1265 390h5v5h-5z"/>
<path fill="#ff041a" d="M1270 390h5v5h-5z"/>
<path fill="#ff0218" d="M1275 390h5v5h-5z"/>
<path fill="#ff0116" d="M1280 390h5v5h-5z"/>
<path fill="#ff0014" d="M1285 390h5v5h-5z"/>
<path fill="#ff0013" d="M1290 390h5v5h-5z"/>
<path fill="#ff0011" d="M1295 390h5v5h-5z"/>
<path fill="#ff000f" d="M1300 390h5v5h-5z"/>
<path fill="#ff000e" d="M1305 390h5v5h-5z"/>
<path fill="#ff000c" d="M1310 390h5v5h-5z"/>
<path fill="#ff000b" d="M1315 390h5v5h-5z"/>
<path fill="#ff0009" d="M1320 390h5v5h-5z"/>
<path fill="#ff0008" d="M1325 390h5v5h-5z"/>
<path fill="#ff0007" d="M1330 390h5v5h-5z"/>
<path fill="#ff0006" d="M1335 390h5v5h-5z"/>
<path fill="#ff0004" d="M1340 390h5v5h-5z"/>
<path fill="#ff0003" d="M1345 390h5v5h-5z"/>
<path fill="#ff0002" d="M1350 390h5v5h-5z"/>
<path fill="#ff0001" d="M1355 390h5v5h-5z"/>
<path fill="#ff0000" d="M1360 390h20v5h-20z"/>
<path fill="#00cbff" d="M920 395h10v5h-10z"/>
<path fill="#00caff" d="M930 395h5v5h-5z"/>
<path fill="#00c9ff" d="M935 395h10v5h-10z"/>
<path fill="#00c8ff" d="M945 395h5v5h-5z"/>
<path fill="#00c7ff" d="M950 395h10v5h-10z"/>
<path fill="#00c6ff" d="M960 395h5v5h-5z"/>
<path fill="#00c5ff" d="M965 395h10v5h-10z"/>
<path fill="#00c4ff" d="M975 395h5v5h-5z"/>
<path fill="#00c3ff" d="M980 395h5v5h-5z"/>
<path fill="#00c2ff" d="M985 395h5v5h-5z"/>
<path fill="#00c1ff" d="M990 395h5v5h-5z"/>
<path fill="#00c0ff" d="M995 395h10v5h-10z"/>
<path fill="#00bfff" d="M1005 395h5v5h-5z"/>
<path fill="#00beff" d="M1010 395h5v5h-5z"/>
<path fill="#00bdff" d="M1015 395h5v5h-5z"/>
<path fill="#00bcff" d="M1020 395h5v5h-5z"/>
<path fill="#00bbff" d="M1025 395h5v5h-5z"/>
<path fill="#00baff" d="M1030 395h5v5h-5z"/>
<path fill="#00b9ff" d="M1035 395h5v5h-5z"/>
<path fill="#0eb7ff" d="M1040 395h5v5h-5z"/>
<path fill="#1db6ff" d="M1045 395h5v5h-5z"/>
<path fill="#2cb5ff" d="M1050 395h5v5h-5z"/>
<path fill="#3db4ff" d="M1055 395h5v5h-5z"/>
<path fill="#4db3ff" d="M1060 395h5v5h-5z"/>
<path fill="#5eb1ff" d="M1065 395h5v5h-5z"/>
<path fill="#70b0ff" d="M1070 395h5v5h-5z"/>
<path fill="#82afff" d="M1075 395h5v5h-5z"/>
<path fill="#95adff" d="M1080 395h5v5h-5z"/>
<path fill="#a9acff" d="M1085 395h5v5h-5z"/>
<path fill="#bdaaff" d="M1090 395h5v5h-5z"/>
<path fill="#d2a8ff" d="M1095 395h5v5h-5z"/>
<path fill="#e8a7ff" d="M1100 395h5v5h-5z"/>
<path fill="#ffa5ff" d="M1105 395h5v5h-5z"/>
<path fill="#ff96ea" d="M1110 395h5v5h-5z"/>
<path fill="#ff88d7" d="M1115 395h5v5h-5z"/>
<path fill="#ff7cc6" d="M1120 395h5v5h-5z"/>
<path fill="#ff71b7" d="M1125 395h5v5h-5z"/>
<path fill="#ff68aa" d="M1130 395h5v5h-5z"/>
<path fill="#ff5f9e" d="M1135 395h5v5h-5z"/>
<path fill="#ff5793" d="M1140 395h5v5h-5z"/>
<path fill="#ff5089" d="M1145 395h5v5h-5z"/>
<path fill="#ff4980" d="M1150 395h5v5h-5z"/>
<path fill="#ff4478" d="M1155 395h5v5h-5z"/>
<path fill="#ff3e71" d="M1160 395h5v5h-5z"/>
<path fill="#ff396a" d="M1165 395h5v5h-5z"/>
<path fill="#ff3463" d="M1170 395h5v5h-5z"/>
<path fill="#ff305d" d="M1175 395h5v5h-5z"/>
<path fill="#ff2c58" d="M1180 395h5v5h-5z"/>
<path fill="#ff2853" d="M1185 395h5v5h-5z"/>
<path fill="#ff254e" d="M1190 395h5v5h-5z"/>
<path fill="#ff2149" d="M1195 395h5v5h-5z"/>
<path fill="#ff1e45" d="M1200 395h5v5h-5z"/>
<path fill="#ff1b41" d="M1205 395h5v5h-5z"/>
<path fill="#ff193d" d="M1210 395h5v5h-5z"/>
<path fill="#ff1639" d="M1215 395h5v5h-5z"/>
<path fill="#ff1436" d="M1220 395h5v5h-5z"/>
<path fill="#ff1133" d="M1225 395h5v5h-5z"/>
<path fill="#ff0f30" d="M1230 395h5v5h-5z"/>
<path fill="#ff0d2d" d="M1235 395h5v5h-5z"/>
<path fill="#ff0b2a" d="M1240 395h5v5h-5z"/>
<path fill="#ff0927" d="M1245 395h5v5h-5z"/>
<path fill="#ff0725" d="M1250 395h5v5h-5z"/>
<path fill="#ff0522" d="M1255 395h5v5h-5z"/>
<path fill="#ff0420" d="M1260 395h5v5h-5z"/>
<path fill="#ff021e" d="M1265 395h5v5h-5z"/>
<path fill="#ff011c" d="M1270 395h5v5h-5z"/>
<path fill="#ff001a" d="M1275 395h5v5h-5z"/>
<path fill="#ff0018" d="M1280 395h5v5h-5z"/>
<path fill="#ff0016" d="M1285 395h5v5h-5z"/>
<path fill="#ff0014" d="M1290 395h5v5h-5z"/>
<path fill="#ff0013" d="M1295 395h5v5h-5z"/>
<path fill="#ff0011" d="M1300 395h5v5h-5z"/>
<path fill="#ff000f" d="M1305 395h5v5h-5z"/>
<path fill="#ff000e" d="M1310 395h5v5h-5z"/>
<path fill="#ff000c" d="M1315 395h5v5h-5z"/>
<path fill="#ff000b" d="M1320 395h5v5h-5z"/>
<path fill="#ff000a" d="M1325 395h5v5h-5z"/>
<path fill="#ff0008" d="M1330 395h5v5h-5z"/>
<path fill="#ff0007" d="M1335 395h5v5h-5z"/>
<path fill="#ff0006" d="M1340 395h5v5h-5z"/>
<path fill="#ff0005" d="M1345 395h5v5h-5z"/>
<path fill="#ff0003" d="M1350 395h5v5h-5z"/>
<path fill="#ff0002" d="M1355 395h5v5h-5z"/>
<path fill="#ff0001" d="M1360 395h5v5h-5z"/>
<path fill="#ff0000" d="M1365 395h25v5h-25z"/>
<path fill="#00c3ff" d="M920 400h5v5h-5z"/>
<path fill="#00c2ff" d="M925 400h5v5h-5z"/>
<path fill="#00c1ff" d="M930 400h10v5h-10z"/>
<path fill="#00c0ff" d="M940 400h5v5h-5z"/>
<path fill="#00bfff" d="M945 400h5v5h-5z"/>
<path fill="#00beff" d="M950 400h5v5h-5z"/>
<path fill="#00bdff" d="M955 400h10v5h-10z"/>
<path fill="#00bcff" d="M965 400h5v5h-5z"/>
<path fill="#00bbff" d="M970 400h5v5h-5z"/>
<path fill="#00baff" d="M975 400h5v5h-5z"/>
<path fill="#00b9ff" d="M980 400h5v5h-5z"/>
<path fill="#00b8ff" d="M985 400h5v5h-5z"/>
<path fill="#00b7ff" d="M990 400h5v5h-5z"/>
<path fill="#00b6ff" d="M995 400h5v5h-5z"/>
<path fill="#00b5ff" d="M1000 400h5v5h-5z"/>
<path fill="#00b4ff" d="M1005 400h5v5h-5z"/>
<path fill="#00b3ff" d="M1010 400h5v5h-5z"/>
<path fill="#00b2ff" d="M1015 400h5v5h-5z"/>
<path fill="#00b1ff" d="M1020 400h5v5h-5z"/>
<path fill="#00b0ff" d="M1025 400h5v5h-5z"/>
<path fill="#00afff" d="M1030 400h5v5h-5z"/>
<path fill="#04adff" d="M1035 400h5v5h-5z"/>
<path fill="#12acff" d="M1040 400h5v5h-5z"/>
<path fill="#21abff" d="M1045 400h5v5h-5z"/>
<path fill="#30a9ff" d="M1050 400h5v5h-5z"/>
<path fill="#40a8ff" d="M1055 400h5v5h-5z"/>
<path fill="#50a7ff" d="M1060 400h5v5h-5z"/>
<path fill="#61a5ff" d="M1065 400h5v5h-5z"/>
<path fill="#72a4ff" d="M1070 400h5v5h-5z"/>
<path fill="#84a2ff" d="M1075 400h5v5h-5z"/>
<path fill="#96a0ff" d="M1080 400h5v5h-5z"/>
<path fill="#aa9fff" d="M1085 400h5v5h-5z"/>
<path fill="#bd9dff" d="M1090 400h5v5h-5z"/>
<path fill="#d29bff" d="M1095 400h5v5h-5z"/>
<path fill="#e799ff" d="M1100 400h5v5h-5z"/>
<path fill="#fd97ff" d="M1105 400h5v5h-5z"/>
<path fill="#ff8aeb" d="M1110 400h5v5h-5z"/>
<path fill="#ff7dd9" d="M1115 400h5v5h-5z"/>
<path fill="#ff72c8" d="M1120 400h5v5h-5z"/>
<path fill="#ff68b9" d="M1125 400h5v5h-5z"/>
<path fill="#ff5fac" d="M1130 400h5v5h-5z"/>
<path fill="#ff57a0" d="M1135 400h5v5h-5z"/>
<path fill="#ff4f96" d="M1140 400h5v5h-5z"/>
<path fill="#ff498c" d="M1145 400h5v5h-5z"/>
<path fill="#ff4383" d="M1150 400h5v5h-5z"/>
<path fill="#ff3d7b" d="M1155 400h5v5h-5z"/>
<path fill="#ff3873" d="M1160 400h5v5h-5z"/>
<path fill="#ff336c" d="M1165 400h5v5h-5z"/>
<path fill="#ff2f66" d="M1170 400h5v5h-5z"/>
<path fill="#ff2b60" d="M1175 400h5v5h-5z"/>
<path fill="#ff275a" d="M1180 400h5v5h-5z"/>
<path fill="#ff2355" d="M1185 400h5v5h-5z"/>
<path fill="#ff2050" d="M1190 400h5v5h-5z"/>
<path fill="#ff1d4b" d="M1195 400h5v5h-5z"/>
<path fill="#ff1a47" d="M1200 400h5v5h-5z"/>
<path fill="#ff1743" d="M1205 400h5v5h-5z"/>
<path fill="#ff153f" d="M1210 400h5v5h-5z"/>
<path fill="#ff123b" d="M1215 400h5v5h-5z"/>
<path fill="#ff1038" d="M1220 400h5v5h-5z"/>
<path fill="#ff0e35" d="M1225 400h5v5h-5z"/>
<path fill="#ff0b32" d="M1230 400h5v5h-5z"/>
<path fill="#ff092f" d="M1235 400h5v5h-5z"/>
<path fill="#ff082c" d="M1240 400h5v5h-5z"/>
<path fill="#ff0629" d="M1245 400h5v5h-5z"/>
<path fill="#ff0427" d="M1250 400h5v5h-5z"/>
<path fill="#ff0224" d="M1255 400h5v5h-5z"/>
<path fill="#ff0122" d="M1260 400h5v5h-5z"/>
<path fill="#ff0020" d="M1265 400h5v5h-5z"/>
<path fill="#ff001e" d="M1270 400h5v5h-5z"/>
<path fill="#ff001c" d="M1275 400h5v5h-5z"/>
<path fill="#ff001a" d="M1280 400h5v5h-5z"/>
<path fill="#ff0018" d="M1285 400h5v5h-5z"/>
<path fill="#ff0016" d="M1290 400h5v5h-5z"/>
<path fill="#ff0014" d="M1295 400h5v5h-5z"/>
<path fill="#ff0013" d="M1300 400h5v5h-5z"/>
<path fill="#ff0011" d="M1305 400h5v5h-5z"/>
<path fill="#ff0010" d="M1310 400h5v5h-5z"/>
<path fill="#ff000e" d="M1315 400h5v5h-5z"/>
<path fill="#ff000d" d="M1320 400h5v5h-5z"/>
<path fill="#ff000b" d="M1325 400h5v5h-5z"/>
<path fill="#ff000a" d="M1330 400h5v5h-5z"/>
<path fill="#ff0009" d="M1335 400h5v5h-5z"/>
<path fill="#ff0007" d="M1340 400h5v5h-5z"/>
<path fill="#ff0006" d="M1345 400h5v5h-5z"/>
<path fill="#ff0005" d="M1350 400h5v5h-5z"/>
<path fill="#ff0004" d="M1355 400h5v5h-5z"/>
<path fill="#ff0003" d="M1360 400h5v5h-5z"/>
<path fill="#ff0002" d="M1365 400h5v5h-5z"/>
<path fill="#ff0001" d="M1370 400h5v5h-5z"/>
<path fill="#ff0000" d="M1375 400h20v5h-20z"/>
<path fill="#00baff" d="M925 405h5v5h-5z"/>
<path fill="#00b9ff" d="M930 405h5v5h-5z"/>
<path fill="#00b8ff" d="M935 405h5v5h-5z"/>
<path fill="#00b7ff" d="M940 405h5v5h-5z"/>
<path fill="#00b6ff" d="M945 405h5v5h-5z"/>
<path fill="#00b5ff" d="M950 405h5v5h-5z"/>
<path fill="#00b4ff" d="M955 405h10v5h-10z"/>
<path fill="#00b3ff" d="M965 405h5v5h-5z"/>
<path fill="#00b2ff" d="M970 405h5v5h-5z"/>
<path fill="#00b1ff" d="M975 405h5v5h-5z"/>
<path fill="#00b0ff" d="M980 405h5v5h-5z"/>
<path fill="#00afff" d="M985 405h5v5h-5z"/>
<path fill="#00aeff" d="M990 405h5v5h-5z"/>
<path fill="#00acff" d="M995 405h5v5h-5z"/>
<path fill="#00abff" d="M1000 405h5v5h-5z"/>
<path fill="#00aaff" d="M1005 405h5v5h-5z"/>
<path fill="#00a9ff" d="M1010 405h5v5h-5z"/>
<path fill="#00a8ff" d="M1015 405h5v5h-5z"/>
<path fill="#00a7ff" d="M1020 405h5v5h-5z"/>
<path fill="#00a5ff" d="M1025 405h5v5h-5z"/>
<path fill="#00a4ff" d="M1030 405h5v5h-5z"/>
<path fill="#08a3ff" d="M1035 405h5v5h-5z"/>
<path fill="#16a1ff" d="M1040 405h5v5h-5z"/>
<path fill="#24a0ff" d="M1045 405h5v5h-5z"/>
<path fill="#339eff" d="M1050 405h5v5h-5z"/>
<path fill="#439dff" d="M1055 405h5v5h-5z"/>
<path fill="#539bff" d="M1060 405h5v5h-5z"/>
<path fill="#639aff" d="M1065 405h5v5h-5z"/>
<path fill="#7498ff" d="M1070 405h5v5h-5z"/>
<path fill="#8696ff" d="M1075 405h5v5h-5z"/>
<path fill="#9894ff" d="M1080 405h5v5h-5z"/>
<path fill="#ab93ff" d="M1085 405h5v5h-5z"/>
<path fill="#be91ff" d="M1090 405h5v5h-5z"/>
<path fill="#d28fff" d="M1095 405h5v5h-5z"/>
<path fill="#e78dff" d="M1100 405h5v5h-5z"/>
<path fill="#fc8aff" d="M1105 405h5v5h-5z"/>
<path fill="#ff7eed" d="M1110 405h5v5h-5z"/>
<path fill="#ff73da" d="M1115 405h5v5h-5z"/>
<path fill="#ff68ca" d="M1120 405h5v5h-5z"/>
<path fill="#ff5fbb" d="M1125 405h5v5h-5z"/>
<path fill="#ff57ae" d="M1130 405h5v5h-5z"/>
<path fill="#ff4fa3" d="M1135 405h5v5h-5z"/>
<path fill="#ff4898" d="M1140 405h5v5h-5z"/>
<path fill="#ff428e" d="M1145 405h5v5h-5z"/>
<path fill="#ff3c85" d="M1150 405h5v5h-5z"/>
<path fill="#ff377d" d="M1155 405h5v5h-5z"/>
<path fill="#ff3275" d="M1160 405h5v5h-5z"/>
<path fill="#ff2e6e" d="M1165 405h5v5h-5z"/>
<path fill="#ff2968" d="M1170 405h5v5h-5z"/>
<path fill="#ff2662" d="M1175 405h5v5h-5z"/>
<path fill="#ff225c" d="M1180 405h5v5h-5z"/>
<path fill="#ff1f57" d="M1185 405h5v5h-5z"/>
<path fill="#ff1b52" d="M1190 405h5v5h-5z"/>
<path fill="#ff184d" d="M1195 405h5v5h-5z"/>
<path fill="#ff1649" d="M1200 405h5v5h-5z"/>
<path fill="#ff1345" d="M1205 405h5v5h-5z"/>
<path fill="#ff1141" d="M1210 405h5v5h-5z"/>
<path fill="#ff0e3d" d="M1215 405h5v5h-5z"/>
<path fill="#ff0c3a" d="M1220 405h5v5h-5z"/>
<path fill="#ff0a37" d="M1225 405h5v5h-5z"/>
<path fill="#ff0834" d="M1230 405h5v5h-5z"/>
<path fill="#ff0631" d="M1235 405h5v5h-5z"/>
<path fill="#ff042e" d="M1240 405h5v5h-5z"/>
<path fill="#ff032b" d="M1245 405h5v5h-5z"/>
<path fill="#ff0129" d="M1250 405h5v5h-5z"/>
<path fill="#ff0026" d="M1255 405h5v5h-5z"/>
<path fill="#ff0024" d="M1260 405h5v5h-5z"/>
<path fill="#ff0022" d="M1265 405h5v5h-5z"/>
<path fill="#ff001f" d="M1270 405h5v5h-5z"/>
<path fill="#ff001d" d="M1275 405h5v5h-5z"/>
<path fill="#ff001b" d="M1280 405h5v5h-5z"/>
<path fill="#ff001a" d="M1285 405h5v5h-5z"/>
<path fill="#ff0018" d="M1290 405h5v5h-5z"/>
<path fill="#ff0016" d="M1295 405h5v5h-5z"/>
<path fill="#ff0014" d="M1300 405h5v5h-5z"/>
<path fill="#ff0013" d="M1305 405h5v5h-5z"/>
<path fill="#ff0011" d="M1310 405h5v5h-5z"/>
<path fill="#ff0010" d="M1315 405h5v5h-5z"/>
<path fill="#ff000e" d="M1320 405h5v5h-5z"/>
<path fill="#ff000d" d="M1325 405h5v5h-5z"/>
<path fill="#ff000b" d="M1330 405h5v5h-5z"/>
<path fill="#ff000a" d="M1335 405h5v5h-5z"/>
<path fill="#ff0009" d="M1340 405h5v5h-5z"/>
<path fill="#ff0008" d="M1345 405h5v5h-5z"/>
<path fill="#ff0006" d="M1350 405h5v5h-5z"/>
<path fill="#ff0005" d="M1355 405h5v5h-5z"/>
<path fill="#ff0004" d="M1360 405h5v5h-5z"/>
<path fill="#ff0003" d="M1365 405h5v5h-5z"/>
<path fill="#ff0002" d="M1370 405h5v5h-5z"/>
<path fill="#ff0001" d="M1375 405h5v5h-5z"/>
<path fill="#ff0000" d="M1380 405h20v5h-20z"/>
<path fill="#00b1ff" d="M925 410h5v5h-5z"/>
<path fill="#00b0ff" d="M930 410h10v5h-10z"/>
<path fill="#00afff" d="M940 410h5v5h-5z"/>
<path fill="#00aeff" d="M945 410h5v5h-5z"/>
<path fill="#00adff" d="M950 410h5v5h-5z"/>
<path fill="#00acff" d="M955 410h5v5h-5z"/>
<path fill="#00abff" d="M960 410h5v5h-5z"/>
<path fill="#00aaff" d="M965 410h5v5h-5z"/>
<path fill="#00a9ff" d="M970 410h5v5h-5z"/>
<path fill="#00a8ff" d="M975 410h5v5h-5z"/>
<path fill="#00a6ff" d="M980 410h5v5h-5z"/>
<path fill="#00a5ff" d="M985 410h5v5h-5z"/>
<path fill="#00a4ff" d="M990 410h5v5h-5z"/>
<path fill="#00a3ff" d="M995 410h5v5h-5z"/>
<path fill="#00a2ff" d="M1000 410h5v5h-5z"/>
<path fill="#00a1ff" d="M1005 410h5v5h-5z"/>
<path fill="#009fff" d="M1010 410h5v5h-5z"/>
<path fill="#009eff" d="M1015 410h5v5h-5z"/>
<path fill="#009dff" d="M1020 410h5v5h-5z"/>
<path fill="#009bff" d="M1025 410h5v5h-5z"/>
<path fill="#009aff" d="M1030 410h5v5h-5z"/>
<path fill="#0c98ff" d="M1035 410h5v5h-5z"/>
<path fill="#1997ff" d="M1040 410h5v5h-5z"/>
<path fill="#2895ff" d="M1045 410h5v5h-5z"/>
<path fill="#3794ff" d="M1050 410h5v5h-5z"/>
<path fill="#4692ff" d="M1055 410h5v5h-5z"/>
<path fill="#5590ff" d="M1060 410h5v5h-5z"/>
<path fill="#668eff" d="M1065 410h5v5h-5z"/>
<path fill="#768dff" d="M1070 410h5v5h-5z"/>
<path fill="#878bff" d="M1075 410h5v5h-5z"/>
<path fill="#9989ff" d="M1080 410h5v5h-5z"/>
<path fill="#ab87ff" d="M1085 410h5v5h-5z"/>
<path fill="#be85ff" d="M1090 410h5v5h-5z"/>
<path fill="#d283ff" d="M1095 410h5v5h-5z"/>
<path fill="#e680ff" d="M1100 410h5v5h-5z"/>
<path fill="#fb7eff" d="M1105 410h5v5h-5z"/>
<path fill="#ff74ee" d="M1110 410h5v5h-5z"/>
<path fill="#ff69dc" d="M1115 410h5v5h-5z"/>
<path fill="#ff5fcc" d="M1120 410h5v5h-5z"/>
<path fill="#ff56bd" d="M1125 410h5v5h-5z"/>
<path fill="#ff4eb0" d="M1130 410h5v5h-5z"/>
<path fill="#ff47a5" d="M1135 410h5v5h-5z"/>
<path fill="#ff419a" d="M1140 410h5v5h-5z"/>
<path fill="#ff3b90" d="M1145 410h5v5h-5z"/>
<path fill="#ff3687" d="M1150 410h5v5h-5z"/>
<path fill="#ff317f" d="M1155 410h5v5h-5z"/>
<path fill="#ff2c78" d="M1160 410h5v5h-5z"/>
<path fill="#ff2871" d="M1165 410h5v5h-5z"/>
<path fill="#ff246a" d="M1170 410h5v5h-5z"/>
<path fill="#ff2064" d="M1175 410h5v5h-5z"/>
<path fill="#ff1d5e" d="M1180 410h5v5h-5z"/>
<path fill="#ff1a59" d="M1185 410h5v5h-5z"/>
<path fill="#ff1754" d="M1190 410h5v5h-5z"/>
<path fill="#ff1450" d="M1195 410h5v5h-5z"/>
<path fill="#ff114b" d="M1200 410h5v5h-5z"/>
<path fill="#ff0f47" d="M1205 410h5v5h-5z"/>
<path fill="#ff0d43" d="M1210 410h5v5h-5z"/>
<path fill="#ff0a40" d="M1215 410h5v5h-5z"/>
<path fill="#ff083c" d="M1220 410h5v5h-5z"/>
<path fill="#ff0639" d="M1225 410h5v5h-5z"/>
<path fill="#ff0436" d="M1230 410h5v5h-5z"/>
<path fill="#ff0333" d="M1235 410h5v5h-5z"/>
<path fill="#ff0130" d="M1240 410h5v5h-5z"/>
<path fill="#ff002d" d="M1245 410h5v5h-5z"/>
<path fill="#ff002a" d="M1250 410h5v5h-5z"/>
<path fill="#ff0028" d="M1255 410h5v5h-5z"/>
<path fill="#ff0026" d="M1260 410h5v5h-5z"/>
<path fill="#ff0023" d="M1265 410h5v5h-5z"/>
<path fill="#ff0021" d="M1270 410h5v5h-5z"/>
<path fill="#ff001f" d="M1275 410h5v5h-5z"/>
<path fill="#ff001d" d="M1280 410h5v5h-5z"/>
<path fill="#ff001b" d="M1285 410h5v5h-5z"/>
<path fill="#ff0019" d="M1290 410h5v5h-5z"/>
<path fill="#ff0018" d="M1295 410h5v5h-5z"/>
<path fill="#ff0016" d="M1300 410h5v5h-5z"/>
<path fill="#ff0014" d="M1305 410h5v5h-5z"/>
<path fill="#ff0013" d="M1310 410h5v5h-5z"/>
<path fill="#ff0011" d="M1315 410h5v5h-5z"/>
<path fill="#ff0010" d="M1320 410h5v5h-5z"/>
<path fill="#ff000e" d="M1325 410h5v5h-5z"/>
<path fill="#ff000d" d="M1330 410h5v5h-5z"/>
<path fill="#ff000c" d="M1335 410h5v5h-5z"/>
<path fill="#ff000a" d="M1340 410h5v5h-5z"/>
<path fill="#ff0009" d="M1345 410h5v5h-5z"/>
<path fill="#ff0008" d="M1350 410h5v5h-5z"/>
<path fill="#ff0007" d="M1355 410h5v5h-5z"/>
<path fill="#ff0005" d="M1360 410h5v5h-5z"/>
<path fill="#ff0004" d="M1365 410h5v5h-5z"/>
<path fill="#ff0003" d="M1370 410h5v5h-5z"/>
<path fill="#ff0002" d="M1375 410h5v5h-5z"/>
<path fill="#ff0001" d="M1380 410h5v5h-5z"/>
<path fill="#ff0000" d="M1385 410h15v5h-15z"/>
<path fill="#00a9ff" d="M925 415h5v5h-5z"/>
<path fill="#00a8ff" d="M930 415h5v5h-5z"/>
<path fill="#00a7ff" d="M935 415h5v5h-5z"/>
<path fill="#00a6ff" d="M940 415h5v5h-5z"/>
<path fill="#00a5ff" d="M945 415h5v5h-5z"/>
<path fill="#00a4ff" d="M950 415h5v5h-5z"/>
<path fill="#00a3ff" d="M955 415h5v5h-5z"/>
<path fill="#00a2ff" d="M960 415h5v5h-5z"/>
<path fill="#00a1ff" d="M965 415h5v5h-5z"/>
<path fill="#00a0ff" d="M970 415h5v5h-5z"/>
<path fill="#009fff" d="M975 415h5v5h-5z"/>
<path fill="#009eff" d="M980 415h5v5h-5z"/>
<path fill="#009cff" d="M985 415h5v5h-5z"/>
<path fill="#009bff" d="M990 415h5v5h-5z"/>
<path fill="#009aff" d="M995 415h5v5h-5z"/>
<path fill="#0099ff" d="M1000 415h5v5h-5z"/>
<path fill="#0097ff" d="M1005 415h5v5h-5z"/>
<path fill="#0096ff" d="M1010 415h5v5h-5z"/>
<path fill="#0094ff" d="M1015 415h5v5h-5z"/>
<path fill="#0093ff" d="M1020 415h5v5h-5z"/>
<path fill="#0091ff" d="M1025 415h5v5h-5z"/>
<path fill="#0290ff" d="M1030 415h5v5h-5z"/>
<path fill="#0f8eff" d="M1035 415h5v5h-5z"/>
<path fill="#1d8dff" d="M1040 415h5v5h-5z"/>
<path fill="#2b8bff" d="M1045 415h5v5h-5z"/>
<path fill="#3a89ff" d="M1050 415h5v5h-5z"/>
<path fill="#4988ff" d="M1055 415h5v5h-5z"/>
<path fill="#5886ff" d="M1060 415h5v5h-5z"/>
<path fill="#6884ff" d="M1065 415h5v5h-5z"/>
<path fill="#7882ff" d="M1070 415h5v5h-5z"/>
<path fill="#8980ff" d="M1075 415h5v5h-5z"/>
<path fill="#9a7eff" d="M1080 415h5v5h-5z"/>
<path fill="#ac7cff" d="M1085 415h5v5h-5z"/>
<path fill="#bf79ff" d="M1090 415h5v5h-5z"/>
<path fill="#d277ff" d="M1095 415h5v5h-5z"/>
<path fill="#e675ff" d="M1100 415h5v5h-5z"/>
<path fill="#fa72ff" d="M1105 415h5v5h-5z"/>
<path fill="#ff69ef" d="M1110 415h5v5h-5z"/>
<path fill="#ff5fdd" d="M1115 415h5v5h-5z"/>
<path fill="#ff56ce" d="M1120 415h5v5h-5z"/>
<path fill="#ff4ebf" d="M1125 415h5v5h-5z"/>
<path fill="#ff46b2" d="M1130 415h5v5h-5z"/>
<path fill="#ff40a7" d="M1135 415h5v5h-5z"/>
<path fill="#ff3a9c" d="M1140 415h5v5h-5z"/>
<path fill="#ff3492" d="M1145 415h5v5h-5z"/>
<path fill="#ff2f8a" d="M1150 415h5v5h-5z"/>
<path fill="#ff2b81" d="M1155 415h5v5h-5z"/>
<path fill="#ff277a" d="M1160 415h5v5h-5z"/>
<path fill="#ff2373" d="M1165 415h5v5h-5z"/>
<path fill="#ff1f6c" d="M1170 415h5v5h-5z"/>
<path fill="#ff1b66" d="M1175 415h5v5h-5z"/>
<path fill="#ff1861" d="M1180 415h5v5h-5z"/>
<path fill="#ff155b" d="M1185 415h5v5h-5z"/>
<path fill="#ff1256" d="M1190 415h5v5h-5z"/>
<path fill="#ff1052" d="M1195 415h5v5h-5z"/>
<path fill="#ff0d4d" d="M1200 415h5v5h-5z"/>
<path fill="#ff0b49" d="M1205 415h5v5h-5z"/>
<path fill="#ff0945" d="M1210 415h5v5h-5z"/>
<path fill="#ff0742" d="M1215 415h5v5h-5z"/>
<path fill="#ff053e" d="M1220 415h5v5h-5z"/>
<path fill="#ff033b" d="M1225 415h5v5h-5z"/>
<path fill="#ff0138" d="M1230 415h5v5h-5z"/>
<path fill="#ff0034" d="M1235 415h5v5h-5z"/>
<path fill="#ff0032" d="M1240 415h5v5h-5z"/>
<path fill="#ff002f" d="M1245 415h5v5h-5z"/>
<path fill="#ff002c" d="M1250 415h5v5h-5z"/>
<path fill="#ff002a" d="M1255 415h5v5h-5z"/>
<path fill="#ff0027" d="M1260 415h5v5h-5z"/>
<path fill="#ff0025" d="M1265 415h5v5h-5z"/>
<path fill="#ff0023" d="M1270 415h5v5h-5z"/>
<path fill="#ff0021" d="M1275 415h5v5h-5z"/>
<path fill="#ff001f" d="M1280 415h5v5h-5z"/>
<path fill="#ff001d" d="M1285 415h5v5h-5z"/>
<path fill="#ff001b" d="M1290 415h5v5h-5z"/>
<path fill="#ff0019" d="M1295 415h5v5h-5z"/>
<path fill="#ff0018" d="M1300 415h5v5h-5z"/>
<path fill="#ff0016" d="M1305 415h5v5h-5z"/>
<path fill="#ff0014" d="M1310 415h5v5h-5z"/>
<path fill="#ff0013" d="M1315 415h5v5h-5z"/>
<path fill="#ff0011" d="M1320 415h5v5h-5z"/>
<path fill="#ff0010" d="M1325 415h5v5h-5z"/>
<path fill="#ff000e" d="M1330 415h5v5h-5z"/>
<path fill="#ff000d" d="M1335 415h5v5h-5z"/>
<path fill="#ff000c" d="M1340 415h5v5h-5z"/>
<path fill="#ff000a" d="M1345 415h5v5h-5z"/>
<path fill="#ff0009" d="M1350 415h5v5h-5z"/>
<path fill="#ff0008" d="M1355 415h5v5h-5z"/>
<path fill="#ff0007" d="M1360 415h5v5h-5z"/>
<path fill="#ff0006" d="M1365 415h5v5h-5z"/>
<path fill="#ff0005" d="M1370 415h5v5h-5z"/>
<path fill="#ff0004" d="M1375 415h5v5h-5z"/>
<path fill="#ff0003" d="M1380 415h5v5h-5z"/>
<path fill="#ff0002" d="M1385 415h5v5h-5z"/>
<path fill="#00a2ff" d="M925 420h5v5h-5z"/>
<path fill="#00a1ff" d="M930 420h5v5h-5z"/>
<path fill="#00a0ff" d="M935 420h5v5h-5z"/>
<path fill="#009eff" d="M940 420h5v5h-5z"/>
<path fill="#009dff" d="M945 420h5v5h-5z"/>
<path fill="#009cff" d="M950 420h5v5h-5z"/>
<path fill="#009bff" d="M955 420h5v5h-5z"/>
<path fill="#009aff" d="M960 420h5v5h-5z"/>
<path fill="#0099ff" d="M965 420h5v5h-5z"/>
<path fill="#0098ff" d="M970 420h5v5h-5z"/>
<path fill="#0096ff" d="M975 420h5v5h-5z"/>
<path fill="#0095ff" d="M980 420h5v5h-5z"/>
<path fill="#0094ff" d="M985 420h5v5h-5z"/>
<path fill="#0092ff" d="M990 420h5v5h-5z"/>
<path fill="#0091ff" d="M995 420h5v5h-5z"/>
<path fill="#0090ff" d="M1000 420h5v5h-5z"/>
<path fill="#008eff" d="M1005 420h5v5h-5z"/>
<path fill="#008dff" d="M1010 420h5v5h-5z"/>
<path fill="#008bff" d="M1015 420h5v5h-5z"/>
<path fill="#008aff" d="M1020 420h5v5h-5z"/>
<path fill="#0088ff" d="M1025 420h5v5h-5z"/>
<path fill="#0686ff" d="M1030 420h5v5h-5z"/>
<path fill="#1385ff" d="M1035 420h5v5h-5z"/>
<path fill="#2083ff" d="M1040 420h5v5h-5z"/>
<path fill="#2e81ff" d="M1045 420h5v5h-5z"/>
<path fill="#3d7fff" d="M1050 420h5v5h-5z"/>
<path fill="#4b7eff" d="M1055 420h5v5h-5z"/>
<path fill="#5a7cff" d="M1060 420h5v5h-5z"/>
<path fill="#6a7aff" d="M1065 420h5v5h-5z"/>
<path fill="#7a78ff" d="M1070 420h5v5h-5z"/>
<path fill="#8a75ff" d="M1075 420h5v5h-5z"/>
<path fill="#9c73ff" d="M1080 420h5v5h-5z"/>
<path fill="#ad71ff" d="M1085 420h5v5h-5z"/>
<path fill="#bf6fff" d="M1090 420h5v5h-5z"/>
<path fill="#d26cff" d="M1095 420h5v5h-5z"/>
<path fill="#e56aff" d="M1100 420h5v5h-5z"/>
<path fill="#f967ff" d="M1105 420h5v5h-5z"/>
<path fill="#ff5ff1" d="M1110 420h5v5h-5z"/>
<path fill="#ff55df" d="M1115 420h5v5h-5z"/>
<path fill="#ff4dcf" d="M1120 420h5v5h-5z"/>
<path fill="#ff46c1" d="M1125 420h5v5h-5z"/>
<path fill="#ff3fb4" d="M1130 420h5v5h-5z"/>
<path fill="#ff39a9" d="M1135 420h5v5h-5z"/>
<path fill="#ff339e" d="M1140 420h5v5h-5z"/>
<path fill="#ff2e94" d="M1145 420h5v5h-5z"/>
<path fill="#ff298c" d="M1150 420h5v5h-5z"/>
<path fill="#ff2583" d="M1155 420h5v5h-5z"/>
<path fill="#ff217c" d="M1160 420h5v5h-5z"/>
<path fill="#ff1d75" d="M1165 420h5v5h-5z"/>
<path fill="#ff1a6e" d="M1170 420h5v5h-5z"/>
<path fill="#ff1768" d="M1175 420h5v5h-5z"/>
<path fill="#ff1463" d="M1180 420h5v5h-5z"/>
<path fill="#ff115d" d="M1185 420h5v5h-5z"/>
<path fill="#ff0e58" d="M1190 420h5v5h-5z"/>
<path fill="#ff0c54" d="M1195 420h5v5h-5z"/>
<path fill="#ff094f" d="M1200 420h5v5h-5z"/>
<path fill="#ff074b" d="M1205 420h5v5h-5z"/>
<path fill="#ff0547" d="M1210 420h5v5h-5z"/>
<path fill="#ff0343" d="M1215 420h5v5h-5z"/>
<path fill="#ff0140" d="M1220 420h5v5h-5z"/>
<path fill="#ff003d" d="M1225 420h5v5h-5z"/>
<path fill="#ff0039" d="M1230 420h5v5h-5z"/>
<path fill="#ff0036" d="M1235 420h5v5h-5z"/>
<path fill="#ff0033" d="M1240 420h5v5h-5z"/>
<path fill="#ff0031" d="M1245 420h5v5h-5z"/>
<path fill="#ff002e" d="M1250 420h5v5h-5z"/>
<path fill="#ff002c" d="M1255 420h5v5h-5z"/>
<path fill="#ff0029" d="M1260 420h5v5h-5z"/>
<path fill="#ff0027" d="M1265 420h5v5h-5z"/>
<path fill="#ff0025" d="M1270 420h5v5h-5z"/>
<path fill="#ff0023" d="M1275 420h5v5h-5z"/>
<path fill="#ff0020" d="M1280 420h5v5h-5z"/>
<path fill="#ff001f" d="M1285 420h5v5h-5z"/>
<path fill="#ff001d" d="M1290 420h5v5h-5z"/>
<path fill="#ff001b" d="M1295 420h5v5h-5z"/>
<path fill="#ff0019" d="M1300 420h5v5h-5z"/>
<path fill="#ff0017" d="M1305 420h5v5h-5z"/>
<path fill="#ff0016" d="M1310 420h5v5h-5z"/>
<path fill="#ff0014" d="M1315 420h5v5h-5z"/>
<path fill="#ff0013" d="M1320 420h5v5h-5z"/>
<path fill="#ff0011" d="M1325 420h5v5h-5z"/>
<path fill="#ff0010" d="M1330 420h5v5h-5z"/>
<path fill="#ff000e" d="M1335 420h5v5h-5z"/>
<path fill="#ff000d" d="M1340 420h5v5h-5z"/>
<path fill="#ff000c" d="M1345 420h5v5h-5z"/>
<path fill="#ff000b" d="M1350 420h5v5h-5z"/>
<path fill="#ff0009" d="M1355 420h5v5h-5z"/>
<path fill="#ff0008" d="M1360 420h5v5h-5z"/>
<path fill="#ff0007" d="M1365 420h5v5h-5z"/>
<path fill="#ff0006" d="M1370 420h5v5h-5z"/>
<path fill="#ff0005" d="M1375 420h5v5h-5z"/>
<path fill="#0099ff" d="M930 425h5v5h-5z"/>
<path fill="#0098ff" d="M935 425h5v5h-5z"/>
<path fill="#0097ff" d="M940 425h5v5h-5z"/>
<path fill="#0096ff" d="M945 425h5v5h-5z"/>
<path fill="#0094ff" d="M950 425h5v5h-5z"/>
<path fill="#0093ff" d="M955 425h5v5h-5z"/>
<path fill="#0092ff" d="M960 425h5v5h-5z"/>
<path fill="#0091ff" d="M965 425h5v5h-5z"/>
<path fill="#008fff" d="M970 425h5v5h-5z"/>
<path fill="#008eff" d="M975 425h5v5h-5z"/>
<path fill="#008dff" d="M980 425h5v5h-5z"/>
<path fill="#008bff" d="M985 425h5v5h-5z"/>
<path fill="#008aff" d="M990 425h5v5h-5z"/>
<path fill="#0088ff" d="M995 425h5v5h-5z"/>
<path fill="#0087ff" d="M1000 425h5v5h-5z"/>
<path fill="#0085ff" d="M1005 425h5v5h-5z"/>
<path fill="#0084ff" d="M1010 425h5v5h-5z"/>
<path fill="#0082ff" d="M1015 425h5v5h-5z"/>
<path fill="#0081ff" d="M1020 425h5v5h-5z"/>
<path fill="#007fff" d="M1025 425h5v5h-5z"/>
<path fill="#0a7dff" d="M1030 425h5v5h-5z"/>
<path fill="#167bff" d="M1035 425h5v5h-5z"/>
<path fill="#247aff" d="M1040 425h5v5h-5z"/>
<path fill="#3178ff" d="M1045 425h5v5h-5z"/>
<path fill="#3f76ff" d="M1050 425h5v5h-5z"/>
<path fill="#4e74ff" d="M1055 425h5v5h-5z"/>
<path fill="#5d72ff" d="M1060 425h5v5h-5z"/>
<path fill="#6c70ff" d="M1065 425h5v5h-5z"/>
<path fill="#7c6eff" d="M1070 425h5v5h-5z"/>
<path fill="#8c6bff" d="M1075 425h5v5h-5z"/>
<path fill="#9d69ff" d="M1080 425h5v5h-5z"/>
<path fill="#ae67ff" d="M1085 425h5v5h-5z"/>
<path fill="#c064ff" d="M1090 425h5v5h-5z"/>
<path fill="#d262ff" d="M1095 425h5v5h-5z"/>
<path fill="#e55fff" d="M1100 425h5v5h-5z"/>
<path fill="#f95cff" d="M1105 425h5v5h-5z"/>
<path fill="#ff55f2" d="M1110 425h5v5h-5z"/>
<path fill="#ff4ce0" d="M1115 425h5v5h-5z"/>
<path fill="#ff45d1" d="M1120 425h5v5h-5z"/>
<path fill="#ff3ec3" d="M1125 425h5v5h-5z"/>
<path fill="#ff37b6" d="M1130 425h5v5h-5z"/>
<path fill="#ff32ab" d="M1135 425h5v5h-5z"/>
<path fill="#ff2ca0" d="M1140 425h5v5h-5z"/>
<path fill="#ff2897" d="M1145 425h5v5h-5z"/>
<path fill="#ff238e" d="M1150 425h5v5h-5z"/>
<path fill="#ff1f86" d="M1155 425h5v5h-5z"/>
<path fill="#ff1c7e" d="M1160 425h5v5h-5z"/>
<path fill="#ff1877" d="M1165 425h5v5h-5z"/>
<path fill="#ff1570" d="M1170 425h5v5h-5z"/>
<path fill="#ff126a" d="M1175 425h5v5h-5z"/>
<path fill="#ff0f65" d="M1180 425h5v5h-5z"/>
<path fill="#ff0c5f" d="M1185 425h5v5h-5z"/>
<path fill="#ff0a5a" d="M1190 425h5v5h-5z"/>
<path fill="#ff0856" d="M1195 425h5v5h-5z"/>
<path fill="#ff0551" d="M1200 425h5v5h-5z"/>
<path fill="#ff034d" d="M1205 425h5v5h-5z"/>
<path fill="#ff0149" d="M1210 425h5v5h-5z"/>
<path fill="#ff0045" d="M1215 425h5v5h-5z"/>
<path fill="#ff0042" d="M1220 425h5v5h-5z"/>
<path fill="#ff003e" d="M1225 425h5v5h-5z"/>
<path fill="#ff003b" d="M1230 425h5v5h-5z"/>
<path fill="#ff0038" d="M1235 425h5v5h-5z"/>
<path fill="#ff0035" d="M1240 425h5v5h-5z"/>
<path fill="#ff0033" d="M1245 425h5v5h-5z"/>
<path fill="#ff0030" d="M1250 425h5v5h-5z"/>
<path fill="#ff002d" d="M1255 425h5v5h-5z"/>
<path fill="#ff002b" d="M1260 425h5v5h-5z"/>
<path fill="#ff0029" d="M1265 425h5v5h-5z"/>
<path fill="#ff0026" d="M1270 425h5v5h-5z"/>
<path fill="#ff0024" d="M1275 425h5v5h-5z"/>
<path fill="#ff0022" d="M1280 425h5v5h-5z"/>
<path fill="#ff0020" d="M1285 425h5v5h-5z"/>
<path fill="#ff001e" d="M1290 425h5v5h-5z"/>
<path fill="#ff001c" d="M1295 425h5v5h-5z"/>
<path fill="#ff001b" d="M1300 425h5v5h-5z"/>
<path fill="#ff0019" d="M1305 425h5v5h-5z"/>
<path fill="#ff0017" d="M1310 425h5v5h-5z"/>
<path fill="#ff0016" d="M1315 425h5v5h-5z"/>
<path fill="#ff0014" d="M1320 425h5v5h-5z"/>
<path fill="#ff0013" d="M1325 425h5v5h-5z"/>
<path fill="#ff0011" d="M1330 425h5v5h-5z"/>
<path fill="#ff0010" d="M1335 425h5v5h-5z"/>
<path fill="#ff000f" d="M1340 425h5v5h-5z"/>
<path fill="#ff000d" d="M1345 425h5v5h-5z"/>
<path fill="#ff000c" d="M1350 425h5v5h-5z"/>
<path fill="#ff000b" d="M1355 425h5v5h-5z"/>
<path fill="#ff000a" d="M1360 425h5v5h-5z"/>
<path fill="#0092ff" d="M930 430h5v5h-5z"/>
<path fill="#0090ff" d="M935 430h5v5h-5z"/>
<path fill="#008fff" d="M940 430h5v5h-5z"/>
<path fill="#008eff" d="M945 430h5v5h-5z"/>
<path fill="#008dff" d="M950 430h5v5h-5z"/>
<path fill="#008bff" d="M955 430h5v5h-5z"/>
<path fill="#008aff" d="M960 430h5v5h-5z"/>
<path fill="#0089ff" d="M965 430h5v5h-5z"/>
<path fill="#0088ff" d="M970 430h5v5h-5z"/>
<path fill="#0086ff" d="M975 430h5v5h-5z"/>
<path fill="#0085ff" d="M980 430h5v5h-5z"/>
<path fill="#0083ff" d="M985 430h5v5h-5z"/>
<path fill="#0082ff" d="M990 430h5v5h-5z"/>
<path fill="#0080ff" d="M995 430h5v5h-5z"/>
<path fill="#007fff" d="M1000 430h5v5h-5z"/>
<path fill="#007dff" d="M1005 430h5v5h-5z"/>
<path fill="#007bff" d="M1010 430h5v5h-5z"/>
<path fill="#007aff" d="M1015 430h5v5h-5z"/>
<path fill="#0078ff" d="M1020 430h5v5h-5z"/>
<path fill="#0176ff" d="M1025 430h5v5h-5z"/>
<path fill="#0d74ff" d="M1030 430h5v5h-5z"/>
<path fill="#1a73ff" d="M1035 430h5v5h-5z"/>
<path fill="#2771ff" d="M1040 430h5v5h-5z"/>
<path fill="#346fff" d="M1045 430h5v5h-5z"/>
<path fill="#426dff" d="M1050 430h5v5h-5z"/>
<path fill="#506bff" d="M1055 430h5v5h-5z"/>
<path fill="#5f69ff" d="M1060 430h5v5h-5z"/>
<path fill="#6e66ff" d="M1065 430h5v5h-5z"/>
<path fill="#7d64ff" d="M1070 430h5v5h-5z"/>
<path fill="#8d62ff" d="M1075 430h5v5h-5z"/>
<path fill="#9e5fff" d="M1080 430h5v5h-5z"/>
<path fill="#af5dff" d="M1085 430h5v5h-5z"/>
<path fill="#c05aff" d="M1090 430h5v5h-5z"/>
<path fill="#d258ff" d="M1095 430h5v5h-5z"/>
<path fill="#e555ff" d="M1100 430h5v5h-5z"/>
<path fill="#f852ff" d="M1105 430h5v5h-5z"/>
<path fill="#ff4cf3" d="M1110 430h5v5h-5z"/>
<path fill="#ff44e2" d="M1115 430h5v5h-5z"/>
<path fill="#ff3cd2" d="M1120 430h5v5h-5z"/>
<path fill="#ff36c5" d="M1125 430h5v5h-5z"/>
<path fill="#ff30b8" d="M1130 430h5v5h-5z"/>
<path fill="#ff2bad" d="M1135 430h5v5h-5z"/>
<path fill="#ff26a2" d="M1140 430h5v5h-5z"/>
<path fill="#ff2299" d="M1145 430h5v5h-5z"/>
<path fill="#ff1e90" d="M1150 430h5v5h-5z"/>
<path fill="#ff1a88" d="M1155 430h5v5h-5z"/>
<path fill="#ff1680" d="M1160 430h5v5h-5z"/>
<path fill="#ff1379" d="M1165 430h5v5h-5z"/>
<path fill="#ff1073" d="M1170 430h5v5h-5z"/>
<path fill="#ff0d6c" d="M1175 430h5v5h-5z"/>
<path fill="#ff0a67" d="M1180 430h5v5h-5z"/>
<path fill="#ff0861" d="M1185 430h5v5h-5z"/>
<path fill="#ff065c" d="M1190 430h5v5h-5z"/>
<path fill="#ff0358" d="M1195 430h5v5h-5z"/>
<path fill="#ff0153" d="M1200 430h5v5h-5z"/>
<path fill="#ff004f" d="M1205 430h5v5h-5z"/>
<path fill="#ff004b" d="M1210 430h5v5h-5z"/>
<path fill="#ff0047" d="M1215 430h5v5h-5z"/>
<path fill="#ff0044" d="M1220 430h5v5h-5z"/>
<path fill="#ff0040" d="M1225 430h5v5h-5z"/>
<path fill="#ff003d" d="M1230 430h5v5h-5z"/>
<path fill="#ff003a" d="M1235 430h5v5h-5z"/>
<path fill="#ff0037" d="M1240 430h5v5h-5z"/>
<path fill="#ff0034" d="M1245 430h5v5h-5z"/>
<path fill="#ff0032" d="M1250 430h5v5h-5z"/>
<path fill="#ff002f" d="M1255 430h5v5h-5z"/>
<path fill="#ff002d" d="M1260 430h5v5h-5z"/>
<path fill="#ff002a" d="M1265 430h5v5h-5z"/>
<path fill="#ff0028" d="M1270 430h5v5h-5z"/>
<path fill="#ff0026" d="M1275 430h5v5h-5z"/>
<path fill="#ff0024" d="M1280 430h5v5h-5z"/>
<path fill="#ff0022" d="M1285 430h5v5h-5z"/>
<path fill="#ff0020" d="M1290 430h5v5h-5z"/>
<path fill="#ff001e" d="M1295 430h5v5h-5z"/>
<path fill="#ff001c" d="M1300 430h5v5h-5z"/>
<path fill="#ff001a" d="M1305 430h5v5h-5z"/>
<path fill="#ff0019" d="M1310 430h5v5h-5z"/>
<path fill="#ff0017" d="M1315 430h5v5h-5z"/>
<path fill="#ff0016" d="M1320 430h5v5h-5z"/>
<path fill="#ff0014" d="M1325 430h5v5h-5z"/>
<path fill="#ff0013" d="M1330 430h5v5h-5z"/>
<path fill="#ff0011" d="M1335 430h5v5h-5z"/>
<path fill="#ff0010" d="M1340 430h5v5h-5z"/>
<path fill="#ff000f" d="M1345 430h5v5h-5z"/>
<path fill="#ff000d" d="M1350 430h5v5h-5z"/>
<path fill="#008aff" d="M930 435h5v5h-5z"/>
<path fill="#0089ff" d="M935 435h5v5h-5z"/>
<path fill="#0088ff" d="M940 435h5v5h-5z"/>
<path fill="#0087ff" d="M945 435h5v5h-5z"/>
<path fill="#0085ff" d="M950 435h5v5h-5z"/>
<path fill="#0084ff" d="M955 435h5v5h-5z"/>
<path fill="#0083ff" d="M960 435h5v5h-5z"/>
<path fill="#0081ff" d="M965 435h5v5h-5z"/>
<path fill="#0080ff" d="M970 435h5v5h-5z"/>
<path fill="#007eff" d="M975 435h5v5h-5z"/>
<path fill="#007dff" d="M980 435h5v5h-5z"/>
<path fill="#007bff" d="M985 435h5v5h-5z"/>
<path fill="#007aff" d="M990 435h5v5h-5z"/>
<path fill="#0078ff" d="M995 435h5v5h-5z"/>
<path fill="#0077ff" d="M1000 435h5v5h-5z"/>
<path fill="#0075ff" d="M1005 435h5v5h-5z"/>
<path fill="#0073ff" d="M1010 435h5v5h-5z"/>
<path fill="#0071ff" d="M1015 435h5v5h-5z"/>
<path fill="#0070ff" d="M1020 435h5v5h-5z"/>
<path fill="#046eff" d="M1025 435h5v5h-5z"/>
<path fill="#116cff" d="M1030 435h5v5h-5z"/>
<path fill="#1d6aff" d="M1035 435h5v5h-5z"/>
<path fill="#2a68ff" d="M1040 435h5v5h-5z"/>
<path fill="#3766ff" d="M1045 435h5v5h-5z"/>
<path fill="#4564ff" d="M1050 435h5v5h-5z"/>
<path fill="#5362ff" d="M1055 435h5v5h-5z"/>
<path fill="#6160ff" d="M1060 435h5v5h-5z"/>
<path fill="#705dff" d="M1065 435h5v5h-5z"/>
<path fill="#7f5bff" d="M1070 435h5v5h-5z"/>
<path fill="#8f59ff" d="M1075 435h5v5h-5z"/>
<path fill="#9f56ff" d="M1080 435h5v5h-5z"/>
<path fill="#af53ff" d="M1085 435h5v5h-5z"/>
<path fill="#c051ff" d="M1090 435h5v5h-5z"/>
<path fill="#d24eff" d="M1095 435h5v5h-5z"/>
<path fill="#e44bff" d="M1100 435h5v5h-5z"/>
<path fill="#f748ff" d="M1105 435h5v5h-5z"/>
<path fill="#ff43f4" d="M1110 435h5v5h-5z"/>
<path fill="#ff3be3" d="M1115 435h5v5h-5z"/>
<path fill="#ff35d4" d="M1120 435h5v5h-5z"/>
<path fill="#ff2fc6" d="M1125 435h5v5h-5z"/>
<path fill="#ff29ba" d="M1130 435h5v5h-5z"/>
<path fill="#ff24ae" d="M1135 435h5v5h-5z"/>
<path fill="#ff20a4" d="M1140 435h5v5h-5z"/>
<path fill="#ff1c9a" d="M1145 435h5v5h-5z"/>
<path fill="#ff1892" d="M1150 435h5v5h-5z"/>
<path fill="#ff148a" d="M1155 435h5v5h-5z"/>
<path fill="#ff1182" d="M1160 435h5v5h-5z"/>
<path fill="#ff0e7b" d="M1165 435h5v5h-5z"/>
<path fill="#ff0b75" d="M1170 435h5v5h-5z"/>
<path fill="#ff096e" d="M1175 435h5v5h-5z"/>
<path fill="#ff0669" d="M1180 435h5v5h-5z"/>
<path fill="#ff0463" d="M1185 435h5v5h-5z"/>
<path fill="#ff025e" d="M1190 435h5v5h-5z"/>
<path fill="#ff005a" d="M1195 435h5v5h-5z"/>
<path fill="#ff0055" d="M1200 435h5v5h-5z"/>
<path fill="#ff0051" d="M1205 435h5v5h-5z"/>
<path fill="#ff004d" d="M1210 435h5v5h-5z"/>
<path fill="#ff0049" d="M1215 435h5v5h-5z"/>
<path fill="#ff0046" d="M1220 435h5v5h-5z"/>
<path fill="#ff0042" d="M1225 435h5v5h-5z"/>
<path fill="#ff003f" d="M1230 435h5v5h-5z"/>
<path fill="#ff003c" d="M1235 435h5v5h-5z"/>
<path fill="#ff0039" d="M1240 435h5v5h-5z"/>
<path fill="#ff0036" d="M1245 435h5v5h-5z"/>
<path fill="#ff0033" d="M1250 435h5v5h-5z"/>
<path fill="#ff0031" d="M1255 435h5v5h-5z"/>
<path fill="#ff002e" d="M1260 435h5v5h-5z"/>
<path fill="#ff002c" d="M1265 435h5v5h-5z"/>
<path fill="#ff002a" d="M1270 435h5v5h-5z"/>
<path fill="#ff0027" d="M1275 435h5v5h-5z"/>
<path fill="#ff0025" d="M1280 435h5v5h-5z"/>
<path fill="#ff0023" d="M1285 435h5v5h-5z"/>
<path fill="#ff0021" d="M1290 435h5v5h-5z"/>
<path fill="#ff0020" d="M1295 435h5v5h-5z"/>
<path fill="#ff001e" d="M1300 435h5v5h-5z"/>
<path fill="#ff001c" d="M1305 435h5v5h-5z"/>
<path fill="#ff001a" d="M1310 435h5v5h-5z"/>
<path fill="#ff0019" d="M1315 435h5v5h-5z"/>
<path fill="#ff0017" d="M1320 435h5v5h-5z"/>
<path fill="#ff0016" d="M1325 435h5v5h-5z"/>
<path fill="#ff0014" d="M1330 435h5v5h-5z"/>
<path fill="#ff0013" d="M1335 435h5v5h-5z"/>
<path fill="#ff0011" d="M1340 435h5v5h-5z"/>
<path fill="#0083ff" d="M930 440h5v5h-5z"/>
<path fill="#0082ff" d="M935 440h5v5h-5z"/>
<path fill="#0081ff" d="M940 440h5v5h-5z"/>
<path fill="#0080ff" d="M945 440h5v5h-5z"/>
<path fill="#007eff" d="M950 440h5v5h-5z"/>
<path fill="#007dff" d="M955 440h5v5h-5z"/>
<path fill="#007bff" d="M960 440h5v5h-5z"/>
<path fill="#007aff" d="M965 440h5v5h-5z"/>
<path fill="#0078ff" d="M970 440h5v5h-5z"/>
<path fill="#0077ff" d="M975 440h5v5h-5z"/>
<path fill="#0075ff" d="M980 440h5v5h-5z"/>
<path fill="#0074ff" d="M985 440h5v5h-5z"/>
<path fill="#0072ff" d="M990 440h5v5h-5z"/>
<path fill="#0071ff" d="M995 440h5v5h-5z"/>
<path fill="#006fff" d="M1000 440h5v5h-5z"/>
<path fill="#006dff" d="M1005 440h5v5h-5z"/>
<path fill="#006bff" d="M1010 440h5v5h-5z"/>
<path fill="#0069ff" d="M1015 440h5v5h-5z"/>
<path fill="#0068ff" d="M1020 440h5v5h-5z"/>
<path fill="#0866ff" d="M1025 440h5v5h-5z"/>
<path fill="#1464ff" d="M1030 440h5v5h-5z"/>
<path fill="#2062ff" d="M1035 440h5v5h-5z"/>
<path fill="#2d60ff" d="M1040 440h5v5h-5z"/>
<path fill="#3a5eff" d="M1045 440h5v5h-5z"/>
<path fill="#475bff" d="M1050 440h5v5h-5z"/>
<path fill="#5559ff" d="M1055 440h5v5h-5z"/>
<path fill="#6357ff" d="M1060 440h5v5h-5z"/>
<path fill="#7255ff" d="M1065 440h5v5h-5z"/>
<path fill="#8152ff" d="M1070 440h5v5h-5z"/>
<path fill="#9050ff" d="M1075 440h5v5h-5z"/>
<path fill="#a04dff" d="M1080 440h5v5h-5z"/>
<path fill="#b04aff" d="M1085 440h5v5h-5z"/>
<path fill="#c148ff" d="M1090 440h5v5h-5z"/>
<path fill="#d245ff" d="M1095 440h5v5h-5z"/>
<path fill="#e442ff" d="M1100 440h5v5h-5z"/>
<path fill="#f63fff" d="M1105 440h5v5h-5z"/>
<path fill="#ff3af5" d="M1110 440h5v5h-5z"/>
<path fill="#ff33e5" d="M1115 440h5v5h-5z"/>
<path fill="#ff2dd5" d="M1120 440h5v5h-5z"/>
<path fill="#ff27c8" d="M1125 440h5v5h-5z"/>
<path fill="#ff22bb" d="M1130 440h5v5h-5z"/>
<path fill="#ff1eb0" d="M1135 440h5v5h-5z"/>
<path fill="#ff1aa6" d="M1140 440h5v5h-5z"/>
<path fill="#ff169c" d="M1145 440h5v5h-5z"/>
<path fill="#ff1294" d="M1150 440h5v5h-5z"/>
<path fill="#ff0f8b" d="M1155 440h5v5h-5z"/>
<path fill="#ff0c84" d="M1160 440h5v5h-5z"/>
<path fill="#ff097d" d="M1165 440h5v5h-5z"/>
<path fill="#ff0776" d="M1170 440h5v5h-5z"/>
<path fill="#ff0470" d="M1175 440h5v5h-5z"/>
<path fill="#ff026b" d="M1180 440h5v5h-5z"/>
<path fill="#ff0065" d="M1185 440h5v5h-5z"/>
<path fill="#ff0060" d="M1190 440h5v5h-5z"/>
<path fill="#ff005c" d="M1195 440h5v5h-5z"/>
<path fill="#ff0057" d="M1200 440h5v5h-5z"/>
<path fill="#ff0053" d="M1205 440h5v5h-5z"/>
<path fill="#ff004f" d="M1210 440h5v5h-5z"/>
<path fill="#ff004b" d="M1215 440h5v5h-5z"/>
<path fill="#ff0047" d="M1220 440h5v5h-5z"/>
<path fill="#ff0044" d="M1225 440h5v5h-5z"/>
<path fill="#ff0041" d="M1230 440h5v5h-5z"/>
<path fill="#ff003e" d="M1235 440h5v5h-5z"/>
<path fill="#ff003b" d="M1240 440h5v5h-5z"/>
<path fill="#ff0038" d="M1245 440h5v5h-5z"/>
<path fill="#ff0035" d="M1250 440h5v5h-5z"/>
<path fill="#ff0032" d="M1255 440h5v5h-5z"/>
<path fill="#ff0030" d="M1260 440h5v5h-5z"/>
<path fill="#ff002e" d="M1265 440h5v5h-5z"/>
<path fill="#ff002b" d="M1270 440h5v5h-5z"/>
<path fill="#ff0029" d="M1275 440h5v5h-5z"/>
<path fill="#ff0027" d="M1280 440h5v5h-5z"/>
<path fill="#ff0025" d="M1285 440h5v5h-5z"/>
<path fill="#ff0023" d="M1290 440h5v5h-5z"/>
<path fill="#ff0021" d="M1295 440h5v5h-5z"/>
<path fill="#ff001f" d="M1300 440h5v5h-5z"/>
<path fill="#ff001d" d="M1305 440h5v5h-5z"/>
<path fill="#ff001c" d="M1310 440h5v5h-5z"/>
<path fill="#ff001a" d="M1315 440h5v5h-5z"/>
<path fill="#ff0019" d="M1320 440h5v5h-5z"/>
<path fill="#ff0017" d="M1325 440h5v5h-5z"/>
<path fill="#007bff" d="M935 445h5v5h-5z"/>
<path fill="#007aff" d="M940 445h5v5h-5z"/>
<path fill="#0079ff" d="M945 445h5v5h-5z"/>
<path fill="#0077ff" d="M950 445h5v5h-5z"/>
<path fill="#0076ff" d="M955 445h5v5h-5z"/>
<path fill="#0074ff" d="M960 445h5v5h-5z"/>
<path fill="#0073ff" d="M965 445h5v5h-5z"/>
<path fill="#0071ff" d="M970 445h5v5h-5z"/>
<path fill="#0070ff" d="M975 445h5v5h-5z"/>
<path fill="#006eff" d="M980 445h5v5h-5z"/>
<path fill="#006cff" d="M985 445h5v5h-5z"/>
<path fill="#006bff" d="M990 445h5v5h-5z"/>
<path fill="#0069ff" d="M995 445h5v5h-5z"/>
<path fill="#0067ff" d="M1000 445h5v5h-5z"/>
<path fill="#0065ff" d="M1005 445h5v5h-5z"/>
<path fill="#0064ff" d="M1010 445h5v5h-5z"/>
<path fill="#0062ff" d="M1015 445h5v5h-5z"/>
<path fill="#0060ff" d="M1020 445h5v5h-5z"/>
<path fill="#0b5eff" d="M1025 445h5v5h-5z"/>
<path fill="#175cff" d="M1030 445h5v5h-5z"/>
<path fill="#235aff" d="M1035 445h5v5h-5z"/>
<path fill="#3058ff" d="M1040 445h5v5h-5z"/>
<path fill="#3d55ff" d="M1045 445h5v5h-5z"/>
<path fill="#4a53ff" d="M1050 445h5v5h-5z"/>
<path fill="#5751ff" d="M1055 445h5v5h-5z"/>
<path fill="#654fff" d="M1060 445h5v5h-5z"/>
<path fill="#744cff" d="M1065 445h5v5h-5z"/>
<path fill="#824aff" d="M1070 445h5v5h-5z"/>
<path fill="#9147ff" d="M1075 445h5v5h-5z"/>
<path fill="#a144ff" d="M1080 445h5v5h-5z"/>
<path fill="#b142ff" d="M1085 445h5v5h-5z"/>
<path fill="#c13fff" d="M1090 445h5v5h-5z"/>
<path fill="#d23cff" d="M1095 445h5v5h-5z"/>
<path fill="#e339ff" d="M1100 445h5v5h-5z"/>
<path fill="#f536ff" d="M1105 445h5v5h-5z"/>
<path fill="#ff31f6" d="M1110 445h5v5h-5z"/>
<path fill="#ff2be6" d="M1115 445h5v5h-5z"/>
<path fill="#ff25d7" d="M1120 445h5v5h-5z"/>
<path fill="#ff20c9" d="M1125 445h5v5h-5z"/>
<path fill="#ff1cbd" d="M1130 445h5v5h-5z"/>
<path fill="#ff18b2" d="M1135 445h5v5h-5z"/>
<path fill="#ff14a8" d="M1140 445h5v5h-5z"/>
<path fill="#ff109e" d="M1145 445h5v5h-5z"/>
<path fill="#ff0d95" d="M1150 445h5v5h-5z"/>
<path fill="#ff0a8d" d="M1155 445h5v5h-5z"/>
<path fill="#ff0786" d="M1160 445h5v5h-5z"/>
<path fill="#ff047f" d="M1165 445h5v5h-5z"/>
<path fill="#ff0278" d="M1170 445h5v5h-5z"/>
<path fill="#ff0072" d="M1175 445h5v5h-5z"/>
<path fill="#ff006d" d="M1180 445h5v5h-5z"/>
<path fill="#ff0067" d="M1185 445h5v5h-5z"/>
<path fill="#ff0062" d="M1190 445h5v5h-5z"/>
<path fill="#ff005d" d="M1195 445h5v5h-5z"/>
<path fill="#ff0059" d="M1200 445h5v5h-5z"/>
<path fill="#ff0055" d="M1205 445h5v5h-5z"/>
<path fill="#ff0051" d="M1210 445h5v5h-5z"/>
<path fill="#ff004d" d="M1215 445h5v5h-5z"/>
<path fill="#ff0049" d="M1220 445h5v5h-5z"/>
<path fill="#ff0046" d="M1225 445h5v5h-5z"/>
<path fill="#ff0042" d="M1230 445h5v5h-5z"/>
<path fill="#ff003f" d="M1235 445h5v5h-5z"/>
<path fill="#ff003c" d="M1240 445h5v5h-5z"/>
<path fill="#ff0039" d="M1245 445h5v5h-5z"/>
<path fill="#ff0037" d="M1250 445h5v5h-5z"/>
<path fill="#ff0034" d="M1255 445h5v5h-5z"/>
<path fill="#ff0032" d="M1260 445h5v5h-5z"/>
<path fill="#ff002f" d="M1265 445h5v5h-5z"/>
<path fill="#ff002d" d="M1270 445h5v5h-5z"/>
<path fill="#ff002b" d="M1275 445h5v5h-5z"/>
<path fill="#ff0028" d="M1280 445h5v5h-5z"/>
<path fill="#ff0026" d="M1285 445h5v5h-5z"/>
<path fill="#ff0024" d="M1290 445h5v5h-5z"/>
<path fill="#ff0023" d="M1295 445h5v5h-5z"/>
<path fill="#ff0021" d="M1300 445h5v5h-5z"/>
<path fill="#ff001f" d="M1305 445h5v5h-5z"/>
<path fill="#ff001d" d="M1310 445h5v5h-5z"/>
<path fill="#ff001c" d="M1315 445h5v5h-5z"/>
<path fill="#0075ff" d="M935 450h5v5h-5z"/>
<path fill="#0073ff" d="M940 450h5v5h-5z"/>
<path fill="#0072ff" d="M945 450h5v5h-5z"/>
<path fill="#0070ff" d="M950 450h5v5h-5z"/>
<path fill="#006fff" d="M955 450h5v5h-5z"/>
<path fill="#006dff" d="M960 450h5v5h-5z"/>
<path fill="#006cff" d="M965 450h5v5h-5z"/>
<path fill="#006aff" d="M970 450h5v5h-5z"/>
<path fill="#0069ff" d="M975 450h5v5h-5z"/>
<path fill="#0067ff" d="M980 450h5v5h-5z"/>
<path fill="#0065ff" d="M985 450h5v5h-5z"/>
<path fill="#0064ff" d="M990 450h5v5h-5z"/>
<path fill="#0062ff" d="M995 450h5v5h-5z"/>
<path fill="#0060ff" d="M1000 450h5v5h-5z"/>
<path fill="#005eff" d="M1005 450h5v5h-5z"/>
<path fill="#005cff" d="M1010 450h5v5h-5z"/>
<path fill="#005aff" d="M1015 450h5v5h-5z"/>
<path fill="#0358ff" d="M1020 450h5v5h-5z"/>
<path fill="#0e56ff" d="M1025 450h5v5h-5z"/>
<path fill="#1a54ff" d="M1030 450h5v5h-5z"/>
<path fill="#2652ff" d="M1035 450h5v5h-5z"/>
<path fill="#3350ff" d="M1040 450h5v5h-5z"/>
<path fill="#3f4eff" d="M1045 450h5v5h-5z"/>
<path fill="#4c4bff" d="M1050 450h5v5h-5z"/>
<path fill="#5a49ff" d="M1055 450h5v5h-5z"/>
<path fill="#6747ff" d="M1060 450h5v5h-5z"/>
<path fill="#7544ff" d="M1065 450h5v5h-5z"/>
<path fill="#8441ff" d="M1070 450h5v5h-5z"/>
<path fill="#923fff" d="M1075 450h5v5h-5z"/>
<path fill="#a23cff" d="M1080 450h5v5h-5z"/>
<path fill="#b139ff" d="M1085 450h5v5h-5z"/>
<path fill="#c137ff" d="M1090 450h5v5h-5z"/>
<path fill="#d234ff" d="M1095 450h5v5h-5z"/>
<path fill="#e331ff" d="M1100 450h5v5h-5z"/>
<path fill="#f52dff" d="M1105 450h5v5h-5z"/>
<path fill="#ff29f8" d="M1110 450h5v5h-5z"/>
<path fill="#ff23e7" d="M1115 450h5v5h-5z"/>
<path fill="#ff1ed8" d="M1120 450h5v5h-5z"/>
<path fill="#ff1acb" d="M1125 450h5v5h-5z"/>
<path fill="#ff15bf" d="M1130 450h5v5h-5z"/>
<path fill="#ff11b4" d="M1135 450h5v5h-5z"/>
<path fill="#ff0ea9" d="M1140 450h5v5h-5z"/>
<path fill="#ff0ba0" d="M1145 450h5v5h-5z"/>
<path fill="#ff0897" d="M1150 450h5v5h-5z"/>
<path fill="#ff058f" d="M1155 450h5v5h-5z"/>
<path fill="#ff0288" d="M1160 450h5v5h-5z"/>
<path fill="#ff0081" d="M1165 450h5v5h-5z"/>
<path fill="#ff007a" d="M1170 450h5v5h-5z"/>
<path fill="#ff0074" d="M1175 450h5v5h-5z"/>
<path fill="#ff006e" d="M1180 450h5v5h-5z"/>
<path fill="#ff0069" d="M1185 450h5v5h-5z"/>
<path fill="#ff0064" d="M1190 450h5v5h-5z"/>
<path fill="#ff005f" d="M1195 450h5v5h-5z"/>
<path fill="#ff005b" d="M1200 450h5v5h-5z"/>
<path fill="#ff0056" d="M1205 450h5v5h-5z"/>
<path fill="#ff0052" d="M1210 450h5v5h-5z"/>
<path fill="#ff004f" d="M1215 450h5v5h-5z"/>
<path fill="#ff004b" d="M1220 450h5v5h-5z"/>
<path fill="#ff0047" d="M1225 450h5v5h-5z"/>
<path fill="#ff0044" d="M1230 450h5v5h-5z"/>
<path fill="#ff0041" d="M1235 450h5v5h-5z"/>
<path fill="#ff003e" d="M1240 450h5v5h-5z"/>
<path fill="#ff003b" d="M1245 450h5v5h-5z"/>
<path fill="#ff0038" d="M1250 450h5v5h-5z"/>
<path fill="#ff0036" d="M1255 450h5v5h-5z"/>
<path fill="#ff0033" d="M1260 450h5v5h-5z"/>
<path fill="#ff0031" d="M1265 450h5v5h-5z"/>
<path fill="#ff002e" d="M1270 450h5v5h-5z"/>
<path fill="#ff002c" d="M1275 450h5v5h-5z"/>
<path fill="#ff002a" d="M1280 450h5v5h-5z"/>
<path fill="#ff0028" d="M1285 450h5v5h-5z"/>
<path fill="#ff0026" d="M1290 450h5v5h-5z"/>
<path fill="#ff0024" d="M1295 450h5v5h-5z"/>
<path fill="#ff0022" d="M1300 450h5v5h-5z"/>
<path fill="#ff0020" d="M1305 450h5v5h-5z"/>
<path fill="#006eff" d="M935 455h5v5h-5z"/>
<path fill="#006dff" d="M940 455h5v5h-5z"/>
<path fill="#006bff" d="M945 455h5v5h-5z"/>
<path fill="#006aff" d="M950 455h5v5h-5z"/>
<path fill="#0068ff" d="M955 455h5v5h-5z"/>
<path fill="#0067ff" d="M960 455h5v5h-5z"/>
<path fill="#0065ff" d="M965 455h5v5h-5z"/>
<path fill="#0063ff" d="M970 455h5v5h-5z"/>
<path fill="#0062ff" d="M975 455h5v5h-5z"/>
<path fill="#0060ff" d="M980 455h5v5h-5z"/>
<path fill="#005eff" d="M985 455h5v5h-5z"/>
<path fill="#005dff" d="M990 455h5v5h-5z"/>
<path fill="#005bff" d="M995 455h5v5h-5z"/>
<path fill="#0059ff" d="M1000 455h5v5h-5z"/>
<path fill="#0057ff" d="M1005 455h5v5h-5z"/>
<path fill="#0055ff" d="M1010 455h5v5h-5z"/>
<path fill="#0053ff" d="M1015 455h5v5h-5z"/>
<path fill="#0651ff" d="M1020 455h5v5h-5z"/>
<path fill="#124fff" d="M1025 455h5v5h-5z"/>
<path fill="#1d4dff" d="M1030 455h5v5h-5z"/>
<path fill="#294bff" d="M1035 455h5v5h-5z"/>
<path fill="#3548ff" d="M1040 455h5v5h-5z"/>
<path fill="#4246ff" d="M1045 455h5v5h-5z"/>
<path fill="#4f44ff" d="M1050 455h5v5h-5z"/>
<path fill="#5c41ff" d="M1055 455h5v5h-5z"/>
<path fill="#693fff" d="M1060 455h5v5h-5z"/>
<path fill="#773cff" d="M1065 455h5v5h-5z"/>
<path fill="#853aff" d="M1070 455h5v5h-5z"/>
<path fill="#9437ff" d="M1075 455h5v5h-5z"/>
<path fill="#a334ff" d="M1080 455h5v5h-5z"/>
<path fill="#b231ff" d="M1085 455h5v5h-5z"/>
<path fill="#c22eff" d="M1090 455h5v5h-5z"/>
<path fill="#d22bff" d="M1095 455h5v5h-5z"/>
<path fill="#e328ff" d="M1100 455h5v5h-5z"/>
<path fill="#f425ff" d="M1105 455h5v5h-5z"/>
<path fill="#ff21f9" d="M1110 455h5v5h-5z"/>
<path fill="#ff1ce8" d="M1115 455h5v5h-5z"/>
<path fill="#ff17da" d="M1120 455h5v5h-5z"/>
<path fill="#ff13cc" d="M1125 455h5v5h-5z"/>
<path fill="#ff0fc0" d="M1130 455h5v5h-5z"/>
<path fill="#ff0bb5" d="M1135 455h5v5h-5z"/>
<path fill="#ff08ab" d="M1140 455h5v5h-5z"/>
<path fill="#ff05a2" d="M1145 455h5v5h-5z"/>
<path fill="#ff0299" d="M1150 455h5v5h-5z"/>
<path fill="#ff0091" d="M1155 455h5v5h-5z"/>
<path fill="#ff008a" d="M1160 455h5v5h-5z"/>
<path fill="#ff0083" d="M1165 455h5v5h-5z"/>
<path fill="#ff007c" d="M1170 455h5v5h-5z"/>
<path fill="#ff0076" d="M1175 455h5v5h-5z"/>
<path fill="#ff0070" d="M1180 455h5v5h-5z"/>
<path fill="#ff006b" d="M1185 455h5v5h-5z"/>
<path fill="#ff0066" d="M1190 455h5v5h-5z"/>
<path fill="#ff0061" d="M1195 455h5v5h-5z"/>
<path fill="#ff005d" d="M1200 455h5v5h-5z"/>
<path fill="#ff0058" d="M1205 455h5v5h-5z"/>
<path fill="#ff0054" d="M1210 455h5v5h-5z"/>
<path fill="#ff0050" d="M1215 455h5v5h-5z"/>
<path fill="#ff004d" d="M1220 455h5v5h-5z"/>
<path fill="#ff0049" d="M1225 455h5v5h-5z"/>
<path fill="#ff0046" d="M1230 455h5v5h-5z"/>
<path fill="#ff0043" d="M1235 455h5v5h-5z"/>
<path fill="#ff0040" d="M1240 455h5v5h-5z"/>
<path fill="#ff003d" d="M1245 455h5v5h-5z"/>
<path fill="#ff003a" d="M1250 455h5v5h-5z"/>
<path fill="#ff0037" d="M1255 455h5v5h-5z"/>
<path fill="#ff0035" d="M1260 455h5v5h-5z"/>
<path fill="#ff0032" d="M1265 455h5v5h-5z"/>
<path fill="#ff0030" d="M1270 455h5v5h-5z"/>
<path fill="#ff002e" d="M1275 455h5v5h-5z"/>
<path fill="#ff002c" d="M1280 455h5v5h-5z"/>
<path fill="#ff0029" d="M1285 455h5v5h-5z"/>
<path fill="#ff0027" d="M1290 455h5v5h-5z"/>
<path fill="#0066ff" d="M940 460h5v5h-5z"/>
<path fill="#0065ff" d="M945 460h5v5h-5z"/>
<path fill="#0063ff" d="M950 460h5v5h-5z"/>
<path fill="#0062ff" d="M955 460h5v5h-5z"/>
<path fill="#0060ff" d="M960 460h5v5h-5z"/>
<path fill="#005eff" d="M965 460h5v5h-5z"/>
<path fill="#005dff" d="M970 460h5v5h-5z"/>
<path fill="#005bff" d="M975 460h5v5h-5z"/>
<path fill="#0059ff" d="M980 460h5v5h-5z"/>
<path fill="#0058ff" d="M985 460h5v5h-5z"/>
<path fill="#0056ff" d="M990 460h5v5h-5z"/>
<path fill="#0054ff" d="M995 460h5v5h-5z"/>
<path fill="#0052ff" d="M1000 460h5v5h-5z"/>
<path fill="#0050ff" d="M1005 460h5v5h-5z"/>
<path fill="#004eff" d="M1010 460h5v5h-5z"/>
<path fill="#004cff" d="M1015 460h5v5h-5z"/>
<path fill="#094aff" d="M1020 460h5v5h-5z"/>
<path fill="#1548ff" d="M1025 460h5v5h-5z"/>
<path fill="#2046ff" d="M1030 460h5v5h-5z"/>
<path fill="#2c43ff" d="M1035 460h5v5h-5z"/>
<path fill="#3841ff" d="M1040 460h5v5h-5z"/>
<path fill="#443fff" d="M1045 460h5v5h-5z"/>
<path fill="#513cff" d="M1050 460h5v5h-5z"/>
<path fill="#5e3aff" d="M1055 460h5v5h-5z"/>
<path fill="#6b37ff" d="M1060 460h5v5h-5z"/>
<path fill="#7935ff" d="M1065 460h5v5h-5z"/>
<path fill="#8632ff" d="M1070 460h5v5h-5z"/>
<path fill="#952fff" d="M1075 460h5v5h-5z"/>
<path fill="#a32cff" d="M1080 460h5v5h-5z"/>
<path fill="#b32aff" d="M1085 460h5v5h-5z"/>
<path fill="#c227ff" d="M1090 460h5v5h-5z"/>
<path fill="#d224ff" d="M1095 460h5v5h-5z"/>
<path fill="#e220ff" d="M1100 460h5v5h-5z"/>
<path fill="#f31dff" d="M1105 460h5v5h-5z"/>
<path fill="#ff19f9" d="M1110 460h5v5h-5z"/>
<path fill="#ff15e9" d="M1115 460h5v5h-5z"/>
<path fill="#ff10db" d="M1120 460h5v5h-5z"/>
<path fill="#ff0cce" d="M1125 460h5v5h-5z"/>
<path fill="#ff09c2" d="M1130 460h5v5h-5z"/>
<path fill="#ff06b7" d="M1135 460h5v5h-5z"/>
<path fill="#ff03ad" d="M1140 460h5v5h-5z"/>
<path fill="#ff00a3" d="M1145 460h5v5h-5z"/>
<path fill="#ff009b" d="M1150 460h5v5h-5z"/>
<path fill="#ff0093" d="M1155 460h5v5h-5z"/>
<path fill="#ff008b" d="M1160 460h5v5h-5z"/>
<path fill="#ff0084" d="M1165 460h5v5h-5z"/>
<path fill="#ff007e" d="M1170 460h5v5h-5z"/>
<path fill="#ff0078" d="M1175 460h5v5h-5z"/>
<path fill="#ff0072" d="M1180 460h5v5h-5z"/>
<path fill="#ff006d" d="M1185 460h5v5h-5z"/>
<path fill="#ff0068" d="M1190 460h5v5h-5z"/>
<path fill="#ff0063" d="M1195 460h5v5h-5z"/>
<path fill="#ff005e" d="M1200 460h5v5h-5z"/>
<path fill="#ff005a" d="M1205 460h5v5h-5z"/>
<path fill="#ff0056" d="M1210 460h5v5h-5z"/>
<path fill="#ff0052" d="M1215 460h5v5h-5z"/>
<path fill="#ff004e" d="M1220 460h5v5h-5z"/>
<path fill="#ff004b" d="M1225 460h5v5h-5z"/>
<path fill="#ff0048" d="M1230 460h5v5h-5z"/>
<path fill="#ff0044" d="M1235 460h5v5h-5z"/>
<path fill="#ff0041" d="M1240 460h5v5h-5z"/>
<path fill="#ff003e" d="M1245 460h5v5h-5z"/>
<path fill="#ff003c" d="M1250 460h5v5h-5z"/>
<path fill="#ff0039" d="M1255 460h5v5h-5z"/>
<path fill="#ff0036" d="M1260 460h5v5h-5z"/>
<path fill="#ff0034" d="M1265 460h5v5h-5z"/>
<path fill="#ff0032" d="M1270 460h5v5h-5z"/>
<path fill="#ff002f" d="M1275 460h5v5h-5z"/>
<path fill="#ff002d" d="M1280 460h5v5h-5z"/>
<path fill="#0060ff" d="M940 465h5v5h-5z"/>
<path fill="#005fff" d="M945 465h5v5h-5z"/>
<path fill="#005dff" d="M950 465h5v5h-5z"/>
<path fill="#005bff" d="M955 465h5v5h-5z"/>
<path fill="#005aff" d="M960 465h5v5h-5z"/>
<path fill="#0058ff" d="M965 465h5v5h-5z"/>
<path fill="#0056ff" d="M970 465h5v5h-5z"/>
<path fill="#0055ff" d="M975 465h5v5h-5z"/>
<path fill="#0053ff" d="M980 465h5v5h-5z"/>
<path fill="#0051ff" d="M985 465h5v5h-5z"/>
<path fill="#004fff" d="M990 465h5v5h-5z"/>
<path fill="#004dff" d="M995 465h5v5h-5z"/>
<path fill="#004bff" d="M1000 465h5v5h-5z"/>
<path fill="#0049ff" d="M1005 465h5v5h-5z"/>
<path fill="#0047ff" d="M1010 465h5v5h-5z"/>
<path fill="#0245ff" d="M1015 465h5v5h-5z"/>
<path fill="#0c43ff" d="M1020 465h5v5h-5z"/>
<path fill="#1841ff" d="M1025 465h5v5h-5z"/>
<path fill="#233fff" d="M1030 465h5v5h-5z"/>
<path fill="#2e3cff" d="M1035 465h5v5h-5z"/>
<path fill="#3a3aff" d="M1040 465h5v5h-5z"/>
<path fill="#4638ff" d="M1045 465h5v5h-5z"/>
<path fill="#5335ff" d="M1050 465h5v5h-5z"/>
<path fill="#6033ff" d="M1055 465h5v5h-5z"/>
<path fill="#6d30ff" d="M1060 465h5v5h-5z"/>
<path fill="#7a2dff" d="M1065 465h5v5h-5z"/>
<path fill="#882bff" d="M1070 465h5v5h-5z"/>
<path fill="#9628ff" d="M1075 465h5v5h-5z"/>
<path fill="#a425ff" d="M1080 465h5v5h-5z"/>
<path fill="#b322ff" d="M1085 465h5v5h-5z"/>
<path fill="#c21fff" d="M1090 465h5v5h-5z"/>
<path fill="#d21cff" d="M1095 465h5v5h-5z"/>
<path fill="#e219ff" d="M1100 465h5v5h-5z"/>
<path fill="#f316ff" d="M1105 465h5v5h-5z"/>
<path fill="#ff12fa" d="M1110 465h5v5h-5z"/>
<path fill="#ff0eeb" d="M1115 465h5v5h-5z"/>
<path fill="#ff0adc" d="M1120 465h5v5h-5z"/>
<path fill="#ff06cf" d="M1125 465h5v5h-5z"/>
<path fill="#ff03c3" d="M1130 465h5v5h-5z"/>
<path fill="#ff00b8" d="M1135 465h5v5h-5z"/>
<path fill="#ff00ae" d="M1140 465h5v5h-5z"/>
<path fill="#ff00a5" d="M1145 465h5v5h-5z"/>
<path fill="#ff009d" d="M1150 465h5v5h-5z"/>
<path fill="#ff0095" d="M1155 465h5v5h-5z"/>
<path fill="#ff008d" d="M1160 465h5v5h-5z"/>
<path fill="#ff0086" d="M1165 465h5v5h-5z"/>
<path fill="#ff0080" d="M1170 465h5v5h-5z"/>
<path fill="#ff007a" d="M1175 465h5v5h-5z"/>
<path fill="#ff0074" d="M1180 465h5v5h-5z"/>
<path fill="#ff006e" d="M1185 465h5v5h-5z"/>
<path fill="#ff0069" d="M1190 465h5v5h-5z"/>
<path fill="#ff0065" d="M1195 465h5v5h-5z"/>
<path fill="#ff0060" d="M1200 465h5v5h-5z"/>
<path fill="#ff005c" d="M1205 465h5v5h-5z"/>
<path fill="#ff0058" d="M1210 465h5v5h-5z"/>
<path fill="#ff0054" d="M1215 465h5v5h-5z"/>
<path fill="#ff0050" d="M1220 465h5v5h-5z"/>
<path fill="#ff004d" d="M1225 465h5v5h-5z"/>
<path fill="#ff0049" d="M1230 465h5v5h-5z"/>
<path fill="#ff0046" d="M1235 465h5v5h-5z"/>
<path fill="#ff0043" d="M1240 465h5v5h-5z"/>
<path fill="#ff0040" d="M1245 465h5v5h-5z"/>
<path fill="#ff003d" d="M1250 465h5v5h-5z"/>
<path fill="#ff003b" d="M1255 465h5v5h-5z"/>
<path fill="#ff0038" d="M1260 465h5v5h-5z"/>
<path fill="#ff0035" d="M1265 465h5v5h-5z"/>
<path fill="#ff0033" d="M1270 465h5v5h-5z"/>
<path fill="#005aff" d="M940 470h5v5h-5z"/>
<path fill="#0059ff" d="M945 470h5v5h-5z"/>
<path fill="#0057ff" d="M950 470h5v5h-5z"/>
<path fill="#0055ff" d="M955 470h5v5h-5z"/>
<path fill="#0054ff" d="M960 470h5v5h-5z"/>
<path fill="#0052ff" d="M965 470h5v5h-5z"/>
<path fill="#0050ff" d="M970 470h5v5h-5z"/>
<path fill="#004eff" d="M975 470h5v5h-5z"/>
<path fill="#004cff" d="M980 470h5v5h-5z"/>
<path fill="#004bff" d="M985 470h5v5h-5z"/>
<path fill="#0049ff" d="M990 470h5v5h-5z"/>
<path fill="#0047ff" d="M995 470h5v5h-5z"/>
<path fill="#0045ff" d="M1000 470h5v5h-5z"/>
<path fill="#0043ff" d="M1005 470h5v5h-5z"/>
<path fill="#0041ff" d="M1010 470h5v5h-5z"/>
<path fill="#053fff" d="M1015 470h5v5h-5z"/>
<path fill="#0f3cff" d="M1020 470h5v5h-5z"/>
<path fill="#1a3aff" d="M1025 470h5v5h-5z"/>
<path fill="#2638ff" d="M1030 470h5v5h-5z"/>
<path fill="#3136ff" d="M1035 470h5v5h-5z"/>
<path fill="#3d33ff" d="M1040 470h5v5h-5z"/>
<path fill="#4931ff" d="M1045 470h5v5h-5z"/>
<path fill="#552eff" d="M1050 470h5v5h-5z"/>
<path fill="#612cff" d="M1055 470h5v5h-5z"/>
<path fill="#6e29ff" d="M1060 470h5v5h-5z"/>
<path fill="#7c26ff" d="M1065 470h5v5h-5z"/>
<path fill="#8924ff" d="M1070 470h5v5h-5z"/>
<path fill="#9721ff" d="M1075 470h5v5h-5z"/>
<path fill="#a51eff" d="M1080 470h5v5h-5z"/>
<path fill="#b41bff" d="M1085 470h5v5h-5z"/>
<path fill="#c318ff" d="M1090 470h5v5h-5z"/>
<path fill="#d215ff" d="M1095 470h5v5h-5z"/>
<path fill="#e212ff" d="M1100 470h5v5h-5z"/>
<path fill="#f20eff" d="M1105 470h5v5h-5z"/>
<path fill="#ff0bfb" d="M1110 470h5v5h-5z"/>
<path fill="#ff07ec" d="M1115 470h5v5h-5z"/>
<path fill="#ff03de" d="M1120 470h5v5h-5z"/>
<path fill="#ff00d1" d="M1125 470h5v5h-5z"/>
<path fill="#ff00c5" d="M1130 470h5v5h-5z"/>
<path fill="#ff00ba" d="M1135 470h5v5h-5z"/>
<path fill="#ff00b0" d="M1140 470h5v5h-5z"/>
<path fill="#ff00a7" d="M1145 470h5v5h-5z"/>
<path fill="#ff009e" d="M1150 470h5v5h-5z"/>
<path fill="#ff0096" d="M1155 470h5v5h-5z"/>
<path fill="#ff008f" d="M1160 470h5v5h-5z"/>
<path fill="#ff0088" d="M1165 470h5v5h-5z"/>
<path fill="#ff0081" d="M1170 470h5v5h-5z"/>
<path fill="#ff007b" d="M1175 470h5v5h-5z"/>
<path fill="#ff0076" d="M1180 470h5v5h-5z"/>
<path fill="#ff0070" d="M1185 470h5v5h-5z"/>
<path fill="#ff006b" d="M1190 470h5v5h-5z"/>
<path fill="#ff0066" d="M1195 470h5v5h-5z"/>
<path fill="#ff0062" d="M1200 470h5v5h-5z"/>
<path fill="#ff005d" d="M1205 470h5v5h-5z"/>
<path fill="#ff0059" d="M1210 470h5v5h-5z"/>
<path fill="#ff0055" d="M1215 470h5v5h-5z"/>
<path fill="#ff0052" d="M1220 470h5v5h-5z"/>
<path fill="#ff004e" d="M1225 470h5v5h-5z"/>
<path fill="#ff004b" d="M1230 470h5v5h-5z"/>
<path fill="#ff0048" d="M1235 470h5v5h-5z"/>
<path fill="#ff0045" d="M1240 470h5v5h-5z"/>
<path fill="#ff0042" d="M1245 470h5v5h-5z"/>
<path fill="#ff003f" d="M1250 470h5v5h-5z"/>
<path fill="#ff003c" d="M1255 470h5v5h-5z"/>
<path fill="#0053ff" d="M945 475h5v5h-5z"/>
<path fill="#0051ff" d="M950 475h5v5h-5z"/>
<path fill="#004fff" d="M955 475h5v5h-5z"/>
<path fill="#004eff" d="M960 475h5v5h-5z"/>
<path fill="#004cff" d="M965 475h5v5h-5z"/>
<path fill="#004aff" d="M970 475h5v5h-5z"/>
<path fill="#0048ff" d="M975 475h5v5h-5z"/>
<path fill="#0046ff" d="M980 475h5v5h-5z"/>
<path fill="#0044ff" d="M985 475h5v5h-5z"/>
<path fill="#0042ff" d="M990 475h5v5h-5z"/>
<path fill="#0040ff" d="M995 475h5v5h-5z"/>
<path fill="#003eff" d="M1000 475h5v5h-5z"/>
<path fill="#003cff" d="M1005 475h5v5h-5z"/>
<path fill="#003aff" d="M1010 475h5v5h-5z"/>
<path fill="#0838ff" d="M1015 475h5v5h-5z"/>
<path fill="#1236ff" d="M1020 475h5v5h-5z"/>
<path fill="#1d34ff" d="M1025 475h5v5h-5z"/>
<path fill="#2831ff" d="M1030 475h5v5h-5z"/>
<path fill="#342fff" d="M1035 475h5v5h-5z"/>
<path fill="#3f2dff" d="M1040 475h5v5h-5z"/>
<path fill="#4b2aff" d="M1045 475h5v5h-5z"/>
<path fill="#5728ff" d="M1050 475h5v5h-5z"/>
<path fill="#6325ff" d="M1055 475h5v5h-5z"/>
<path fill="#7022ff" d="M1060 475h5v5h-5z"/>
<path fill="#7d20ff" d="M1065 475h5v5h-5z"/>
<path fill="#8a1dff" d="M1070 475h5v5h-5z"/>
<path fill="#981aff" d="M1075 475h5v5h-5z"/>
<path fill="#a617ff" d="M1080 475h5v5h-5z"/>
<path fill="#b414ff" d="M1085 475h5v5h-5z"/>
<path fill="#c311ff" d="M1090 475h5v5h-5z"/>
<path fill="#d20eff" d="M1095 475h5v5h-5z"/>
<path fill="#e20aff" d="M1100 475h5v5h-5z"/>
<path fill="#f107ff" d="M1105 475h5v5h-5z"/>
<path fill="#ff04fc" d="M1110 475h5v5h-5z"/>
<path fill="#ff00ed" d="M1115 475h5v5h-5z"/>
<path fill="#ff00df" d="M1120 475h5v5h-5z"/>
<path fill="#ff00d2" d="M1125 475h5v5h-5z"/>
<path fill="#ff00c6" d="M1130 475h5v5h-5z"/>
<path fill="#ff00bc" d="M1135 475h5v5h-5z"/>
<path fill="#ff00b2" d="M1140 475h5v5h-5z"/>
<path fill="#ff00a8" d="M1145 475h5v5h-5z"/>
<path fill="#ff00a0" d="M1150 475h5v5h-5z"/>
<path fill="#ff0098" d="M1155 475h5v5h-5z"/>
<path fill="#ff0091" d="M1160 475h5v5h-5z"/>
<path fill="#ff008a" d="M1165 475h5v5h-5z"/>
<path fill="#ff0083" d="M1170 475h5v5h-5z"/>
<path fill="#ff007d" d="M1175 475h5v5h-5z"/>
<path fill="#ff0077" d="M1180 475h5v5h-5z"/>
<path fill="#ff0072" d="M1185 475h5v5h-5z"/>
<path fill="#ff006d" d="M1190 475h5v5h-5z"/>
<path fill="#ff0068" d="M1195 475h5v5h-5z"/>
<path fill="#ff0063" d="M1200 475h5v5h-5z"/>
<path fill="#ff005f" d="M1205 475h5v5h-5z"/>
<path fill="#ff005b" d="M1210 475h5v5h-5z"/>
<path fill="#ff0057" d="M1215 475h5v5h-5z"/>
<path fill="#ff0053" d="M1220 475h5v5h-5z"/>
<path fill="#ff0050" d="M1225 475h5v5h-5z"/>
<path fill="#ff004c" d="M1230 475h5v5h-5z"/>
<path fill="#ff0049" d="M1235 475h5v5h-5z"/>
<path fill="#ff0046" d="M1240 475h5v5h-5z"/>
<path fill="#ff0043" d="M1245 475h5v5h-5z"/>
<path fill="#004dff" d="M945 480h5v5h-5z"/>
<path fill="#004bff" d="M950 480h5v5h-5z"/>
<path fill="#0049ff" d="M955 480h5v5h-5z"/>
<path fill="#0048ff" d="M960 480h5v5h-5z"/>
<path fill="#0046ff" d="M965 480h5v5h-5z"/>
<path fill="#0044ff" d="M970 480h5v5h-5z"/>
<path fill="#0042ff" d="M975 480h5v5h-5z"/>
<path fill="#0040ff" d="M980 480h5v5h-5z"/>
<path fill="#003eff" d="M985 480h5v5h-5z"/>
<path fill="#003cff" d="M990 480h5v5h-5z"/>
<path fill="#003aff" d="M995 480h5v5h-5z"/>
<path fill="#0038ff" d="M1000 480h5v5h-5z"/>
<path fill="#0036ff" d="M1005 480h5v5h-5z"/>
<path fill="#0134ff" d="M1010 480h5v5h-5z"/>
<path fill="#0b32ff" d="M1015 480h5v5h-5z"/>
<path fill="#1530ff" d="M1020 480h5v5h-5z"/>
<path fill="#202dff" d="M1025 480h5v5h-5z"/>
<path fill="#2b2bff" d="M1030 480h5v5h-5z"/>
<path fill="#3629ff" d="M1035 480h5v5h-5z"/>
<path fill="#4126ff" d="M1040 480h5v5h-5z"/>
<path fill="#4d24ff" d="M1045 480h5v5h-5z"/>
<path fill="#5921ff" d="M1050 480h5v5h-5z"/>
<path fill="#651eff" d="M1055 480h5v5h-5z"/>
<path fill="#721cff" d="M1060 480h5v5h-5z"/>
<path fill="#7e19ff" d="M1065 480h5v5h-5z"/>
<path fill="#8b16ff" d="M1070 480h5v5h-5z"/>
<path fill="#9913ff" d="M1075 480h5v5h-5z"/>
<path fill="#a710ff" d="M1080 480h5v5h-5z"/>
<path fill="#b50dff" d="M1085 480h5v5h-5z"/>
<path fill="#c30aff" d="M1090 480h5v5h-5z"/>
<path fill="#d207ff" d="M1095 480h5v5h-5z"/>
<path fill="#e104ff" d="M1100 480h5v5h-5z"/>
<path fill="#f100ff" d="M1105 480h5v5h-5z"/>
<path fill="#ff00fd" d="M1110 480h5v5h-5z"/>
<path fill="#ff00ee" d="M1115 480h5v5h-5z"/>
<path fill="#ff00e0" d="M1120 480h5v5h-5z"/>
<path fill="#ff00d3" d="M1125 480h5v5h-5z"/>
<path fill="#ff00c8" d="M1130 480h5v5h-5z"/>
<path fill="#ff00bd" d="M1135 480h5v5h-5z"/>
<path fill="#ff00b3" d="M1140 480h5v5h-5z"/>
<path fill="#ff00aa" d="M1145 480h5v5h-5z"/>
<path fill="#ff00a1" d="M1150 480h5v5h-5z"/>
<path fill="#ff009a" d="M1155 480h5v5h-5z"/>
<path fill="#ff0092" d="M1160 480h5v5h-5z"/>
<path fill="#ff008b" d="M1165 480h5v5h-5z"/>
<path fill="#ff0085" d="M1170 480h5v5h-5z"/>
<path fill="#ff007f" d="M1175 480h5v5h-5z"/>
<path fill="#ff0079" d="M1180 480h5v5h-5z"/>
<path fill="#ff0074" d="M1185 480h5v5h-5z"/>
<path fill="#ff006e" d="M1190 480h5v5h-5z"/>
<path fill="#ff006a" d="M1195 480h5v5h-5z"/>
<path fill="#ff0065" d="M1200 480h5v5h-5z"/>
<path fill="#ff0061" d="M1205 480h5v5h-5z"/>
<path fill="#ff005d" d="M1210 480h5v5h-5z"/>
<path fill="#ff0059" d="M1215 480h5v5h-5z"/>
<path fill="#ff0055" d="M1220 480h5v5h-5z"/>
<path fill="#ff0051" d="M1225 480h5v5h-5z"/>
<path fill="#ff004e" d="M1230 480h5v5h-5z"/>
<path fill="#ff004b" d="M1235 480h5v5h-5z"/>
<path fill="#0047ff" d="M945 485h5v5h-5z"/>
<path fill="#0046ff" d="M950 485h5v5h-5z"/>
<path fill="#0044ff" d="M955 485h5v5h-5z"/>
<path fill="#0042ff" d="M960 485h5v5h-5z"/>
<path fill="#0040ff" d="M965 485h5v5h-5z"/>
<path fill="#003eff" d="M970 485h5v5h-5z"/>
<path fill="#003cff" d="M975 485h5v5h-5z"/>
<path fill="#003bff" d="M980 485h5v5h-5z"/>
<path fill="#0039ff" d="M985 485h5v5h-5z"/>
<path fill="#0037ff" d="M990 485h5v5h-5z"/>
<path fill="#0034ff" d="M995 485h5v5h-5z"/>
<path fill="#0032ff" d="M1000 485h5v5h-5z"/>
<path fill="#0030ff" d="M1005 485h5v5h-5z"/>
<path fill="#042eff" d="M1010 485h5v5h-5z"/>
<path fill="#0e2cff" d="M1015 485h5v5h-5z"/>
<path fill="#182aff" d="M1020 485h5v5h-5z"/>
<path fill="#2327ff" d="M1025 485h5v5h-5z"/>
<path fill="#2d25ff" d="M1030 485h5v5h-5z"/>
<path fill="#3822ff" d="M1035 485h5v5h-5z"/>
<path fill="#4420ff" d="M1040 485h5v5h-5z"/>
<path fill="#4f1dff" d="M1045 485h5v5h-5z"/>
<path fill="#5b1bff" d="M1050 485h5v5h-5z"/>
<path fill="#6718ff" d="M1055 485h5v5h-5z"/>
<path fill="#7315ff" d="M1060 485h5v5h-5z"/>
<path fill="#8013ff" d="M1065 485h5v5h-5z"/>
<path fill="#8d10ff" d="M1070 485h5v5h-5z"/>
<path fill="#9a0dff" d="M1075 485h5v5h-5z"/>
<path fill="#a70aff" d="M1080 485h5v5h-5z"/>
<path fill="#b507ff" d="M1085 485h5v5h-5z"/>
<path fill="#c304ff" d="M1090 485h5v5h-5z"/>
<path fill="#d200ff" d="M1095 485h5v5h-5z"/>
<path fill="#e100ff" d="M1100 485h5v5h-5z"/>
<path fill="#f000ff" d="M1105 485h5v5h-5z"/>
<path fill="#ff00fe" d="M1110 485h5v5h-5z"/>
<path fill="#ff00ef" d="M1115 485h5v5h-5z"/>
<path fill="#ff00e1" d="M1120 485h5v5h-5z"/>
<path fill="#ff00d5" d="M1125 485h5v5h-5z"/>
<path fill="#ff00c9" d="M1130 485h5v5h-5z"/>
<path fill="#ff00be" d="M1135 485h5v5h-5z"/>
<path fill="#ff00b5" d="M1140 485h5v5h-5z"/>
<path fill="#ff00ab" d="M1145 485h5v5h-5z"/>
<path fill="#ff00a3" d="M1150 485h5v5h-5z"/>
<path fill="#ff009b" d="M1155 485h5v5h-5z"/>
<path fill="#ff0094" d="M1160 485h5v5h-5z"/>
<path fill="#ff008d" d="M1165 485h5v5h-5z"/>
<path fill="#ff0086" d="M1170 485h5v5h-5z"/>
<path fill="#ff0080" d="M1175 485h5v5h-5z"/>
<path fill="#ff007b" d="M1180 485h5v5h-5z"/>
<path fill="#ff0075" d="M1185 485h5v5h-5z"/>
<path fill="#ff0070" d="M1190 485h5v5h-5z"/>
<path fill="#ff006b" d="M1195 485h5v5h-5z"/>
<path fill="#ff0067" d="M1200 485h5v5h-5z"/>
<path fill="#ff0062" d="M1205 485h5v5h-5z"/>
<path fill="#ff005e" d="M1210 485h5v5h-5z"/>
<path fill="#ff005a" d="M1215 485h5v5h-5z"/>
<path fill="#ff0057" d="M1220 485h5v5h-5z"/>
<path fill="#0040ff" d="M950 490h5v5h-5z"/>
<path fill="#003eff" d="M955 490h5v5h-5z"/>
<path fill="#003cff" d="M960 490h5v5h-5z"/>
<path fill="#003bff" d="M965 490h5v5h-5z"/>
<path fill="#0039ff" d="M970 490h5v5h-5z"/>
<path fill="#0037ff" d="M975 490h5v5h-5z"/>
<path fill="#0035ff" d="M980 490h5v5h-5z"/>
<path fill="#0033ff" d="M985 490h5v5h-5z"/>
<path fill="#0031ff" d="M990 490h5v5h-5z"/>
<path fill="#002fff" d="M995 490h5v5h-5z"/>
<path fill="#002dff" d="M1000 490h5v5h-5z"/>
<path fill="#002aff" d="M1005 490h5v5h-5z"/>
<path fill="#0628ff" d="M1010 490h5v5h-5z"/>
<path fill="#1026ff" d="M1015 490h5v5h-5z"/>
<path fill="#1b24ff" d="M1020 490h5v5h-5z"/>
<path fill="#2521ff" d="M1025 490h5v5h-5z"/>
<path fill="#301fff" d="M1030 490h5v5h-5z"/>
<path fill="#3b1cff" d="M1035 490h5v5h-5z"/>
<path fill="#461aff" d="M1040 490h5v5h-5z"/>
<path fill="#5117ff" d="M1045 490h5v5h-5z"/>
<path fill="#5d15ff" d="M1050 490h5v5h-5z"/>
<path fill="#6812ff" d="M1055 490h5v5h-5z"/>
<path fill="#750fff" d="M1060 490h5v5h-5z"/>
<path fill="#810cff" d="M1065 490h5v5h-5z"/>
<path fill="#8e0aff" d="M1070 490h5v5h-5z"/>
<path fill="#9b07ff" d="M1075 490h5v5h-5z"/>
<path fill="#a804ff" d="M1080 490h5v5h-5z"/>
<path fill="#b601ff" d="M1085 490h5v5h-5z"/>
<path fill="#c400ff" d="M1090 490h5v5h-5z"/>
<path fill="#d200ff" d="M1095 490h5v5h-5z"/>
<path fill="#e100ff" d="M1100 490h5v5h-5z"/>
<path fill="#f000ff" d="M1105 490h5v5h-5z"/>
<path fill="#ff00ff" d="M1110 490h5v5h-5z"/>
<path fill="#ff00f0" d="M1115 490h5v5h-5z"/>
<path fill="#ff00e2" d="M1120 490h5v5h-5z"/>
<path fill="#ff00d6" d="M1125 490h5v5h-5z"/>
<path fill="#ff00ca" d="M1130 490h5v5h-5z"/>
<path fill="#ff00c0" d="M1135 490h5v5h-5z"/>
<path fill="#ff00b6" d="M1140 490h5v5h-5z"/>
<path fill="#ff00ad" d="M1145 490h5v5h-5z"/>
<path fill="#ff00a5" d="M1150 490h5v5h-5z"/>
<path fill="#ff009d" d="M1155 490h5v5h-5z"/>
<path fill="#ff0095" d="M1160 490h5v5h-5z"/>
<path fill="#ff008f" d="M1165 490h5v5h-5z"/>
<path fill="#ff0088" d="M1170 490h5v5h-5z"/>
<path fill="#ff0082" d="M1175 490h5v5h-5z"/>
<path fill="#ff007c" d="M1180 490h5v5h-5z"/>
<path fill="#ff0077" d="M1185 490h5v5h-5z"/>
<path fill="#ff0072" d="M1190 490h5v5h-5z"/>
<path fill="#ff006d" d="M1195 490h5v5h-5z"/>
<path fill="#ff0068" d="M1200 490h5v5h-5z"/>
<path fill="#ff0064" d="M1205 490h5v5h-5z"/>
<path fill="#ff0060" d="M1210 490h5v5h-5z"/>
<path fill="#003bff" d="M950 495h5v5h-5z"/>
<path fill="#0039ff" d="M955 495h5v5h-5z"/>
<path fill="#0037ff" d="M960 495h5v5h-5z"/>
<path fill="#0035ff" d="M965 495h5v5h-5z"/>
<path fill="#0033ff" d="M970 495h5v5h-5z"/>
<path fill="#0031ff" d="M975 495h5v5h-5z"/>
<path fill="#002fff" d="M980 495h5v5h-5z"/>
<path fill="#002dff" d="M985 495h5v5h-5z"/>
<path fill="#002bff" d="M990 495h5v5h-5z"/>
<path fill="#0029ff" d="M995 495h5v5h-5z"/>
<path fill="#0027ff" d="M1000 495h5v5h-5z"/>
<path fill="#0025ff" d="M1005 495h5v5h-5z"/>
<path fill="#0922ff" d="M1010 495h5v5h-5z"/>
<path fill="#1320ff" d="M1015 495h5v5h-5z"/>
<path fill="#1d1eff" d="M1020 495h5v5h-5z"/>
<path fill="#281bff" d="M1025 495h5v5h-5z"/>
<path fill="#3219ff" d="M1030 495h5v5h-5z"/>
<path fill="#3d17ff" d="M1035 495h5v5h-5z"/>
<path fill="#4814ff" d="M1040 495h5v5h-5z"/>
<path fill="#5311ff" d="M1045 495h5v5h-5z"/>
<path fill="#5e0fff" d="M1050 495h5v5h-5z"/>
<path fill="#6a0cff" d="M1055 495h5v5h-5z"/>
<path fill="#7609ff" d="M1060 495h5v5h-5z"/>
<path fill="#8206ff" d="M1065 495h5v5h-5z"/>
<path fill="#8f04ff" d="M1070 495h5v5h-5z"/>
<path fill="#9c01ff" d="M1075 495h5v5h-5z"/>
<path fill="#a900ff" d="M1080 495h5v5h-5z"/>
<path fill="#b600ff" d="M1085 495h5v5h-5z"/>
<path fill="#c400ff" d="M1090 495h5v5h-5z"/>
<path fill="#d200ff" d="M1095 495h5v5h-5z"/>
<path fill="#e000ff" d="M1100 495h5v5h-5z"/>
<path fill="#ef00ff" d="M1105 495h5v5h-5z"/>
<path fill="#fe00ff" d="M1110 495h5v5h-5z"/>
<path fill="#ff00f1" d="M1115 495h5v5h-5z"/>
<path fill="#ff00e3" d="M1120 495h5v5h-5z"/>
<path fill="#ff00d7" d="M1125 495h5v5h-5z"/>
<path fill="#ff00cc" d="M1130 495h5v5h-5z"/>
<path fill="#ff00c1" d="M1135 495h5v5h-5z"/>
<path fill="#ff00b7" d="M1140 495h5v5h-5z"/>
<path fill="#ff00ae" d="M1145 495h5v5h-5z"/>
<path fill="#ff00a6" d="M1150 495h5v5h-5z"/>
<path fill="#ff009e" d="M1155 495h5v5h-5z"/>
<path fill="#ff0097" d="M1160 495h5v5h-5z"/>
<path fill="#ff0090" d="M1165 495h5v5h-5z"/>
<path fill="#ff008a" d="M1170 495h5v5h-5z"/>
<path fill="#ff0084" d="M1175 495h5v5h-5z"/>
<path fill="#ff007e" d="M1180 495h5v5h-5z"/>
<path fill="#ff0078" d="M1185 495h5v5h-5z"/>
<path fill="#ff0073" d="M1190 495h5v5h-5z"/>
<path fill="#ff006f" d="M1195 495h5v5h-5z"/>
<path fill="#ff006a" d="M1200 495h5v5h-5z"/>
<path fill="#0034ff" d="M955 500h5v5h-5z"/>
<path fill="#0032ff" d="M960 500h5v5h-5z"/>
<path fill="#0030ff" d="M965 500h5v5h-5z"/>
<path fill="#002eff" d="M970 500h5v5h-5z"/>
<path fill="#002cff" d="M975 500h5v5h-5z"/>
<path fill="#002aff" d="M980 500h5v5h-5z"/>
<path fill="#0028ff" d="M985 500h5v5h-5z"/>
<path fill="#0026ff" d="M990 500h5v5h-5z"/>
<path fill="#0024ff" d="M995 500h5v5h-5z"/>
<path fill="#0021ff" d="M1000 500h5v5h-5z"/>
<path fill="#021fff" d="M1005 500h5v5h-5z"/>
<path fill="#0c1dff" d="M1010 500h5v5h-5z"/>
<path fill="#161bff" d="M1015 500h5v5h-5z"/>
<path fill="#2018ff" d="M1020 500h5v5h-5z"/>
<path fill="#2a16ff" d="M1025 500h5v5h-5z"/>
<path fill="#3413ff" d="M1030 500h5v5h-5z"/>
<path fill="#3f11ff" d="M1035 500h5v5h-5z"/>
<path fill="#4a0eff" d="M1040 500h5v5h-5z"/>
<path fill="#550cff" d="M1045 500h5v5h-5z"/>
<path fill="#6009ff" d="M1050 500h5v5h-5z"/>
<path fill="#6c06ff" d="M1055 500h5v5h-5z"/>
<path fill="#7704ff" d="M1060 500h5v5h-5z"/>
<path fill="#8301ff" d="M1065 500h5v5h-5z"/>
<path fill="#9000ff" d="M1070 500h5v5h-5z"/>
<path fill="#9c00ff" d="M1075 500h5v5h-5z"/>
<path fill="#a900ff" d="M1080 500h5v5h-5z"/>
<path fill="#b700ff" d="M1085 500h5v5h-5z"/>
<path fill="#c400ff" d="M1090 500h5v5h-5z"/>
<path fill="#d200ff" d="M1095 500h5v5h-5z"/>
<path fill="#e000ff" d="M1100 500h5v5h-5z"/>
<path fill="#ef00ff" d="M1105 500h5v5h-5z"/>
<path fill="#fe00ff" d="M1110 500h5v5h-5z"/>
<path fill="#ff00f2" d="M1115 500h5v5h-5z"/>
<path fill="#ff00e4" d="M1120 500h5v5h-5z"/>
<path fill="#ff00d8" d="M1125 500h5v5h-5z"/>
<path fill="#ff00cd" d="M1130 500h5v5h-5z"/>
<path fill="#ff00c2" d="M1135 500h5v5h-5z"/>
<path fill="#ff00b9" d="M1140 500h5v5h-5z"/>
<path fill="#ff00b0" d="M1145 500h5v5h-5z"/>
<path fill="#ff00a8" d="M1150 500h5v5h-5z"/>
<path fill="#ff00a0" d="M1155 500h5v5h-5z"/>
<path fill="#ff0098" d="M1160 500h5v5h-5z"/>
<path fill="#ff0092" d="M1165 500h5v5h-5z"/>
<path fill="#ff008b" d="M1170 500h5v5h-5z"/>
<path fill="#ff0085" d="M1175 500h5v5h-5z"/>
<path fill="#ff007f" d="M1180 500h5v5h-5z"/>
<path fill="#ff007a" d="M1185 500h5v5h-5z"/>
<path fill="#002fff" d="M955 505h5v5h-5z"/>
<path fill="#002dff" d="M960 505h5v5h-5z"/>
<path fill="#002bff" d="M965 505h5v5h-5z"/>
<path fill="#0029ff" d="M970 505h5v5h-5z"/>
<path fill="#0027ff" d="M975 505h5v5h-5z"/>
<path fill="#0025ff" d="M980 505h5v5h-5z"/>
<path fill="#0023ff" d="M985 505h5v5h-5z"/>
<path fill="#0020ff" d="M990 505h5v5h-5z"/>
<path fill="#001eff" d="M995 505h5v5h-5z"/>
<path fill="#001cff" d="M1000 505h5v5h-5z"/>
<path fill="#051aff" d="M1005 505h5v5h-5z"/>
<path fill="#0f18ff" d="M1010 505h5v5h-5z"/>
<path fill="#1815ff" d="M1015 505h5v5h-5z"/>
<path fill="#2213ff" d="M1020 505h5v5h-5z"/>
<path fill="#2c10ff" d="M1025 505h5v5h-5z"/>
<path fill="#370eff" d="M1030 505h5v5h-5z"/>
<path fill="#410bff" d="M1035 505h5v5h-5z"/>
<path fill="#4c09ff" d="M1040 505h5v5h-5z"/>
<path fill="#5706ff" d="M1045 505h5v5h-5z"/>
<path fill="#6204ff" d="M1050 505h5v5h-5z"/>
<path fill="#6d01ff" d="M1055 505h5v5h-5z"/>
<path fill="#7900ff" d="M1060 505h5v5h-5z"/>
<path fill="#8500ff" d="M1065 505h5v5h-5z"/>
<path fill="#9100ff" d="M1070 505h5v5h-5z"/>
<path fill="#9d00ff" d="M1075 505h5v5h-5z"/>
<path fill="#aa00ff" d="M1080 505h5v5h-5z"/>
<path fill="#b700ff" d="M1085 505h5v5h-5z"/>
<path fill="#c400ff" d="M1090 505h5v5h-5z"/>
<path fill="#d200ff" d="M1095 505h5v5h-5z"/>
<path fill="#e000ff" d="M1100 505h5v5h-5z"/>
<path fill="#ee00ff" d="M1105 505h5v5h-5z"/>
<path fill="#fd00ff" d="M1110 505h5v5h-5z"/>
<path fill="#ff00f3" d="M1115 505h5v5h-5z"/>
<path fill="#ff00e5" d="M1120 505h5v5h-5z"/>
<path fill="#ff00d9" d="M1125 505h5v5h-5z"/>
<path fill="#ff00ce" d="M1130 505h5v5h-5z"/>
<path fill="#ff00c4" d="M1135 505h5v5h-5z"/>
<path fill="#ff00ba" d="M1140 505h5v5h-5z"/>
<path fill="#ff00b1" d="M1145 505h5v5h-5z"/>
<path fill="#ff00a9" d="M1150 505h5v5h-5z"/>
<path fill="#ff00a1" d="M1155 505h5v5h-5z"/>
<path fill="#ff009a" d="M1160 505h5v5h-5z"/>
<path fill="#ff0093" d="M1165 505h5v5h-5z"/>
<path fill="#ff008d" d="M1170 505h5v5h-5z"/>
<path fill="#ff0087" d="M1175 505h5v5h-5z"/>
<path fill="#0029ff" d="M955 510h5v5h-5z"/>
<path fill="#0028ff" d="M960 510h5v5h-5z"/>
<path fill="#0026ff" d="M965 510h5v5h-5z"/>
<path fill="#0024ff" d="M970 510h5v5h-5z"/>
<path fill="#0022ff" d="M975 510h5v5h-5z"/>
<path fill="#0020ff" d="M980 510h5v5h-5z"/>
<path fill="#001dff" d="M985 510h5v5h-5z"/>
<path fill="#001bff" d="M990 510h5v5h-5z"/>
<path fill="#0019ff" d="M995 510h5v5h-5z"/>
<path fill="#0017ff" d="M1000 510h5v5h-5z"/>
<path fill="#0815ff" d="M1005 510h5v5h-5z"/>
<path fill="#1112ff" d="M1010 510h5v5h-5z"/>
<path fill="#1b10ff" d="M1015 510h5v5h-5z"/>
<path fill="#250eff" d="M1020 510h5v5h-5z"/>
<path fill="#2f0bff" d="M1025 510h5v5h-5z"/>
<path fill="#3909ff" d="M1030 510h5v5h-5z"/>
<path fill="#4306ff" d="M1035 510h5v5h-5z"/>
<path fill="#4e03ff" d="M1040 510h5v5h-5z"/>
<path fill="#5801ff" d="M1045 510h5v5h-5z"/>
<path fill="#6300ff" d="M1050 510h5v5h-5z"/>
<path fill="#6f00ff" d="M1055 510h5v5h-5z"/>
<path fill="#7a00ff" d="M1060 510h5v5h-5z"/>
<path fill="#8600ff" d="M1065 510h5v5h-5z"/>
<path fill="#9200ff" d="M1070 510h5v5h-5z"/>
<path fill="#9e00ff" d="M1075 510h5v5h-5z"/>
<path fill="#ab00ff" d="M1080 510h5v5h-5z"/>
<path fill="#b700ff" d="M1085 510h5v5h-5z"/>
<path fill="#c500ff" d="M1090 510h5v5h-5z"/>
<path fill="#d200ff" d="M1095 510h5v5h-5z"/>
<path fill="#e000ff" d="M1100 510h5v5h-5z"/>
<path fill="#ee00ff" d="M1105 510h5v5h-5z"/>
<path fill="#fc00ff" d="M1110 510h5v5h-5z"/>
<path fill="#ff00f3" d="M1115 510h5v5h-5z"/>
<path fill="#ff00e6" d="M1120 510h5v5h-5z"/>
<path fill="#ff00da" d="M1125 510h5v5h-5z"/>
<path fill="#ff00cf" d="M1130 510h5v5h-5z"/>
<path fill="#ff00c5" d="M1135 510h5v5h-5z"/>
<path fill="#ff00bc" d="M1140 510h5v5h-5z"/>
<path fill="#ff00b3" d="M1145 510h5v5h-5z"/>
<path fill="#ff00aa" d="M1150 510h5v5h-5z"/>
<path fill="#ff00a3" d="M1155 510h5v5h-5z"/>
<path fill="#ff009b" d="M1160 510h5v5h-5z"/>
<path fill="#ff0095" d="M1165 510h5v5h-5z"/>
<path fill="#0023ff" d="M960 515h5v5h-5z"/>
<path fill="#0021ff" d="M965 515h5v5h-5z"/>
<path fill="#001fff" d="M970 515h5v5h-5z"/>
<path fill="#001dff" d="M975 515h5v5h-5z"/>
<path fill="#001bff" d="M980 515h5v5h-5z"/>
<path fill="#0018ff" d="M985 515h5v5h-5z"/>
<path fill="#0016ff" d="M990 515h5v5h-5z"/>
<path fill="#0014ff" d="M995 515h5v5h-5z"/>
<path fill="#0112ff" d="M1000 515h5v5h-5z"/>
<path fill="#0b10ff" d="M1005 515h5v5h-5z"/>
<path fill="#140dff" d="M1010 515h5v5h-5z"/>
<path fill="#1d0bff" d="M1015 515h5v5h-5z"/>
<path fill="#2708ff" d="M1020 515h5v5h-5z"/>
<path fill="#3106ff" d="M1025 515h5v5h-5z"/>
<path fill="#3b03ff" d="M1030 515h5v5h-5z"/>
<path fill="#4501ff" d="M1035 515h5v5h-5z"/>
<path fill="#4f00ff" d="M1040 515h5v5h-5z"/>
<path fill="#5a00ff" d="M1045 515h5v5h-5z"/>
<path fill="#6500ff" d="M1050 515h5v5h-5z"/>
<path fill="#7000ff" d="M1055 515h5v5h-5z"/>
<path fill="#7b00ff" d="M1060 515h5v5h-5z"/>
<path fill="#8700ff" d="M1065 515h5v5h-5z"/>
<path fill="#9300ff" d="M1070 515h5v5h-5z"/>
<path fill="#9f00ff" d="M1075 515h5v5h-5z"/>
<path fill="#ab00ff" d="M1080 515h5v5h-5z"/>
<path fill="#b800ff" d="M1085 515h5v5h-5z"/>
<path fill="#c500ff" d="M1090 515h5v5h-5z"/>
<path fill="#d200ff" d="M1095 515h5v5h-5z"/>
<path fill="#e000ff" d="M1100 515h5v5h-5z"/>
<path fill="#ed00ff" d="M1105 515h5v5h-5z"/>
<path fill="#fc00ff" d="M1110 515h5v5h-5z"/>
<path fill="#ff00f4" d="M1115 515h5v5h-5z"/>
<path fill="#ff00e7" d="M1120 515h5v5h-5z"/>
<path fill="#ff00dc" d="M1125 515h5v5h-5z"/>
<path fill="#ff00d1" d="M1130 515h5v5h-5z"/>
<path fill="#ff00c6" d="M1135 515h5v5h-5z"/>
<path fill="#ff00bd" d="M1140 515h5v5h-5z"/>
<path fill="#ff00b4" d="M1145 515h5v5h-5z"/>
<path fill="#ff00ac" d="M1150 515h5v5h-5z"/>
<path fill="#001eff" d="M960 520h5v5h-5z"/>
<path fill="#001cff" d="M965 520h5v5h-5z"/>
<path fill="#001aff" d="M970 520h5v5h-5z"/>
<path fill="#0018ff" d="M975 520h5v5h-5z"/>
<path fill="#0016ff" d="M980 520h5v5h-5z"/>
<path fill="#0014ff" d="M985 520h5v5h-5z"/>
<path fill="#0011ff" d="M990 520h5v5h-5z"/>
<path fill="#000fff" d="M995 520h5v5h-5z"/>
<path fill="#040dff" d="M1000 520h5v5h-5z"/>
<path fill="#0d0bff" d="M1005 520h5v5h-5z"/>
<path fill="#1608ff" d="M1010 520h5v5h-5z"/>
<path fill="#2006ff" d="M1015 520h5v5h-5z"/>
<path fill="#2903ff" d="M1020 520h5v5h-5z"/>
<path fill="#3301ff" d="M1025 520h5v5h-5z"/>
<path fill="#3d00ff" d="M1030 520h5v5h-5z"/>
<path fill="#4700ff" d="M1035 520h5v5h-5z"/>
<path fill="#5100ff" d="M1040 520h5v5h-5z"/>
<path fill="#5c00ff" d="M1045 520h5v5h-5z"/>
<path fill="#6600ff" d="M1050 520h5v5h-5z"/>
<path fill="#7100ff" d="M1055 520h5v5h-5z"/>
<path fill="#7d00ff" d="M1060 520h5v5h-5z"/>
<path fill="#8800ff" d="M1065 520h5v5h-5z"/>
<path fill="#9400ff" d="M1070 520h5v5h-5z"/>
<path fill="#a000ff" d="M1075 520h5v5h-5z"/>
<path fill="#ac00ff" d="M1080 520h5v5h-5z"/>
<path fill="#b800ff" d="M1085 520h5v5h-5z"/>
<path fill="#c500ff" d="M1090 520h5v5h-5z"/>
<path fill="#d200ff" d="M1095 520h5v5h-5z"/>
<path fill="#df00ff" d="M1100 520h5v5h-5z"/>
<path fill="#ed00ff" d="M1105 520h5v5h-5z"/>
<path fill="#fb00ff" d="M1110 520h5v5h-5z"/>
<path fill="#ff00f5" d="M1115 520h5v5h-5z"/>
<path fill="#ff00e8" d="M1120 520h5v5h-5z"/>
<path fill="#ff00dd" d="M1125 520h5v5h-5z"/>
<path fill="#ff00d2" d="M1130 520h5v5h-5z"/>
<path fill="#ff00c8" d="M1135 520h5v5h-5z"/>
<path fill="#ff00be" d="M1140 520h5v5h-5z"/>
<path fill="#0017ff" d="M965 525h5v5h-5z"/>
<path fill="#0015ff" d="M970 525h5v5h-5z"/>
<path fill="#0013ff" d="M975 525h5v5h-5z"/>
<path fill="#0011ff" d="M980 525h5v5h-5z"/>
<path fill="#000fff" d="M985 525h5v5h-5z"/>
<path fill="#000dff" d="M990 525h5v5h-5z"/>
<path fill="#000aff" d="M995 525h5v5h-5z"/>
<path fill="#0708ff" d="M1000 525h5v5h-5z"/>
<path fill="#1006ff" d="M1005 525h5v5h-5z"/>
<path fill="#1903ff" d="M1010 525h5v5h-5z"/>
<path fill="#2201ff" d="M1015 525h5v5h-5z"/>
<path fill="#2b00ff" d="M1020 525h5v5h-5z"/>
<path fill="#3500ff" d="M1025 525h5v5h-5z"/>
<path fill="#3f00ff" d="M1030 525h5v5h-5z"/>
<path fill="#4900ff" d="M1035 525h5v5h-5z"/>
<path fill="#5300ff" d="M1040 525h5v5h-5z"/>
<path fill="#5d00ff" d="M1045 525h5v5h-5z"/>
<path fill="#6800ff" d="M1050 525h5v5h-5z"/>
<path fill="#7300ff" d="M1055 525h5v5h-5z"/>
<path fill="#7e00ff" d="M1060 525h5v5h-5z"/>
<path fill="#8900ff" d="M1065 525h5v5h-5z"/>
<path fill="#9500ff" d="M1070 525h5v5h-5z"/>
<path fill="#a000ff" d="M1075 525h5v5h-5z"/>
<path fill="#ac00ff" d="M1080 525h5v5h-5z"/>
<path fill="#b900ff" d="M1085 525h5v5h-5z"/>
<path fill="#c500ff" d="M1090 525h5v5h-5z"/>
<path fill="#d200ff" d="M1095 525h5v5h-5z"/>
<path fill="#df00ff" d="M1100 525h5v5h-5z"/>
<path fill="#ed00ff" d="M1105 525h5v5h-5z"/>
<path fill="#fa00ff" d="M1110 525h5v5h-5z"/>
<path fill="#ff00f6" d="M1115 525h5v5h-5z"/>
<path fill="#ff00e9" d="M1120 525h5v5h-5z"/>
<path fill="#ff00de" d="M1125 525h5v5h-5z"/>
<path fill="#ff00d3" d="M1130 525h5v5h-5z"/>
<path fill="#0013ff" d="M965 530h5v5h-5z"/>
<path fill="#0011ff" d="M970 530h5v5h-5z"/>
<path fill="#000eff" d="M975 530h5v5h-5z"/>
<path fill="#000cff" d="M980 530h5v5h-5z"/>
<path fill="#000aff" d="M985 530h5v5h-5z"/>
<path fill="#0008ff" d="M990 530h5v5h-5z"/>
<path fill="#0106ff" d="M995 530h5v5h-5z"/>
<path fill="#0903ff" d="M1000 530h5v5h-5z"/>
<path fill="#1201ff" d="M1005 530h5v5h-5z"/>
<path fill="#1b00ff" d="M1010 530h5v5h-5z"/>
<path fill="#2400ff" d="M1015 530h5v5h-5z"/>
<path fill="#2e00ff" d="M1020 530h5v5h-5z"/>
<path fill="#3700ff" d="M1025 530h5v5h-5z"/>
<path fill="#4100ff" d="M1030 530h5v5h-5z"/>
<path fill="#4b00ff" d="M1035 530h5v5h-5z"/>
<path fill="#5500ff" d="M1040 530h5v5h-5z"/>
<path fill="#5f00ff" d="M1045 530h5v5h-5z"/>
<path fill="#6900ff" d="M1050 530h5v5h-5z"/>
<path fill="#7400ff" d="M1055 530h5v5h-5z"/>
<path fill="#7f00ff" d="M1060 530h5v5h-5z"/>
<path fill="#8a00ff" d="M1065 530h5v5h-5z"/>
<path fill="#9500ff" d="M1070 530h5v5h-5z"/>
<path fill="#a100ff" d="M1075 530h5v5h-5z"/>
<path fill="#ad00ff" d="M1080 530h5v5h-5z"/>
<path fill="#b900ff" d="M1085 530h5v5h-5z"/>
<path fill="#c500ff" d="M1090 530h5v5h-5z"/>
<path fill="#d200ff" d="M1095 530h5v5h-5z"/>
<path fill="#df00ff" d="M1100 530h5v5h-5z"/>
<path fill="#ec00ff" d="M1105 530h5v5h-5z"/>
<path fill="#fa00ff" d="M1110 530h5v5h-5z"/>
<path fill="#ff00f7" d="M1115 530h5v5h-5z"/>
<path fill="#000cff" d="M970 535h5v5h-5z"/>
<path fill="#000aff" d="M975 535h5v5h-5z"/>
<path fill="#0008ff" d="M980 535h5v5h-5z"/>
<path fill="#0006ff" d="M985 535h5v5h-5z"/>
<path fill="#0003ff" d="M990 535h5v5h-5z"/>
<path fill="#0301ff" d="M995 535h5v5h-5z"/>
<path fill="#0c00ff" d="M1000 535h5v5h-5z"/>
<path fill="#1400ff" d="M1005 535h5v5h-5z"/>
<path fill="#1d00ff" d="M1010 535h5v5h-5z"/>
<path fill="#2600ff" d="M1015 535h5v5h-5z"/>
<path fill="#3000ff" d="M1020 535h5v5h-5z"/>
<path fill="#3900ff" d="M1025 535h5v5h-5z"/>
<path fill="#4300ff" d="M1030 535h5v5h-5z"/>
<path fill="#4c00ff" d="M1035 535h5v5h-5z"/>
<path fill="#5600ff" d="M1040 535h5v5h-5z"/>
<path fill="#6000ff" d="M1045 535h5v5h-5z"/>
<path fill="#6b00ff" d="M1050 535h5v5h-5z"/>
<path fill="#7500ff" d="M1055 535h5v5h-5z"/>
<path fill="#8000ff" d="M1060 535h5v5h-5z"/>
<path fill="#8b00ff" d="M1065 535h5v5h-5z"/>
<path fill="#9600ff" d="M1070 535h5v5h-5z"/>
<path fill="#a200ff" d="M1075 535h5v5h-5z"/>
<path fill="#ad00ff" d="M1080 535h5v5h-5z"/>
<path fill="#b900ff" d="M1085 535h5v5h-5z"/>
<path fill="#c600ff" d="M1090 535h5v5h-5z"/>
<path fill="#d200ff" d="M1095 535h5v5h-5z"/>
<path fill="#df00ff" d="M1100 535h5v5h-5z"/>
<path fill="#ec00ff" d="M1105 535h5v5h-5z"/>
<path fill="#0006ff" d="M975 540h5v5h-5z"/>
<path fill="#0003ff" d="M980 540h5v5h-5z"/>
<path fill="#0001ff" d="M985 540h5v5h-5z"/>
<path fill="#0000ff" d="M990 540h5v5h-5z"/>
<path fill="#0600ff" d="M995 540h5v5h-5z"/>
<path fill="#0e00ff" d="M1000 540h5v5h-5z"/>
<path fill="#1700ff" d="M1005 540h5v5h-5z"/>
<path fill="#2000ff" d="M1010 540h5v5h-5z"/>
<path fill="#2800ff" d="M1015 540h5v5h-5z"/>
<path fill="#3200ff" d="M1020 540h5v5h-5z"/>
<path fill="#3b00ff" d="M1025 540h5v5h-5z"/>
<path fill="#4400ff" d="M1030 540h5v5h-5z"/>
<path fill="#4e00ff" d="M1035 540h5v5h-5z"/>
<path fill="#5800ff" d="M1040 540h5v5h-5z"/>
<path fill="#6200ff" d="M1045 540h5v5h-5z"/>
<path fill="#6c00ff" d="M1050 540h5v5h-5z"/>
<path fill="#7700ff" d="M1055 540h5v5h-5z"/>
<path fill="#8100ff" d="M1060 540h5v5h-5z"/>
<path fill="#8c00ff" d="M1065 540h5v5h-5z"/>
<path fill="#9700ff" d="M1070 540h5v5h-5z"/>
<path fill="#a200ff" d="M1075 540h5v5h-5z"/>
<path fill="#ae00ff" d="M1080 540h5v5h-5z"/>
<path fill="#ba00ff" d="M1085 540h5v5h-5z"/>
<path fill="#c600ff" d="M1090 540h5v5h-5z"/>
<path fill="#d200ff" d="M1095 540h5v5h-5z"/>
<path fill="#0001ff" d="M975 545h5v5h-5z"/>
<path fill="#0000ff" d="M980 545h15v5h-15z"/>
<path fill="#0800ff" d="M995 545h5v5h-5z"/>
<path fill="#1000ff" d="M1000 545h5v5h-5z"/>
<path fill="#1900ff" d="M1005 545h5v5h-5z"/>
<path fill="#2200ff" d="M1010 545h5v5h-5z"/>
<path fill="#2b00ff" d="M1015 545h5v5h-5z"/>
<path fill="#3400ff" d="M1020 545h5v5h-5z"/>
<path fill="#3d00ff" d="M1025 545h5v5h-5z"/>
<path fill="#4600ff" d="M1030 545h5v5h-5z"/>
<path fill="#5000ff" d="M1035 545h5v5h-5z"/>
<path fill="#5900ff" d="M1040 545h5v5h-5z"/>
<path fill="#6300ff" d="M1045 545h5v5h-5z"/>
<path fill="#6d00ff" d="M1050 545h5v5h-5z"/>
<path fill="#7800ff" d="M1055 545h5v5h-5z"/>
<path fill="#8200ff" d="M1060 545h5v5h-5z"/>
<path fill="#8d00ff" d="M1065 545h5v5h-5z"/>
<path fill="#9800ff" d="M1070 545h5v5h-5z"/>
<path fill="#a300ff" d="M1075 545h5v5h-5z"/>
<path fill="#ae00ff" d="M1080 545h5v5h-5z"/>
<path fill="#0000ff" d="M980 550h10v5h-10z"/>
<path fill="#0200ff" d="M990 550h5v5h-5z"/>
<path fill="#0a00ff" d="M995 550h5v5h-5z"/>
<path fill="#1300ff" d="M1000 550h5v5h-5z"/>
<path fill="#1b00ff" d="M1005 550h5v5h-5z"/>
<path fill="#2400ff" d="M1010 550h5v5h-5z"/>
<path fill="#2d00ff" d="M1015 550h5v5h-5z"/>
<path fill="#3600ff" d="M1020 550h5v5h-5z"/>
<path fill="#3f00ff" d="M1025 550h5v5h-5z"/>
<path fill="#4800ff" d="M1030 550h5v5h-5z"/>
<path fill="#5100ff" d="M1035 550h5v5h-5z"/>
<path fill="#5b00ff" d="M1040 550h5v5h-5z"/>
<path fill="#6500ff" d="M1045 550h5v5h-5z"/>
<path fill="#6f00ff" d="M1050 550h5v5h-5z"/>
<path fill="#7900ff" d="M1055 550h5v5h-5z"/>
<path fill="#8300ff" d="M1060 550h5v5h-5z"/>
<path fill="#8e00ff" d="M1065 550h5v5h-5z"/>
<path fill="#9900ff" d="M1070 550h5v5h-5z"/>
<path fill="#0000ff" d="M985 555h5v5h-5z"/>
<path fill="#0500ff" d="M990 555h5v5h-5z"/>
<path fill="#0d00ff" d="M995 555h5v5h-5z"/>
<path fill="#1500ff" d="M1000 555h5v5h-5z"/>
<path fill="#1d00ff" d="M1005 555h5v5h-5z"/>
<path fill="#2600ff" d="M1010 555h5v5h-5z"/>
<path fill="#2f00ff" d="M1015 555h5v5h-5z"/>
<path fill="#3700ff" d="M1020 555h5v5h-5z"/>
<path fill="#4000ff" d="M1025 555h5v5h-5z"/>
<path fill="#4a00ff" d="M1030 555h5v5h-5z"/>
<path fill="#5300ff" d="M1035 555h5v5h-5z"/>
<path fill="#5c00ff" d="M1040 555h5v5h-5z"/>
<path fill="#6600ff" d="M1045 555h5v5h-5z"/>
<path fill="#7000ff" d="M1050 555h5v5h-5z"/>
<path fill="#7a00ff" d="M1055 555h5v5h-5z"/>
<path fill="#8400ff" d="M1060 555h5v5h-5z"/>
<path fill="#0700ff" d="M990 560h5v5h-5z"/>
<path fill="#0f00ff" d="M995 560h5v5h-5z"/>
<path fill="#1700ff" d="M1000 560h5v5h-5z"/>
<path fill="#1f00ff" d="M1005 560h5v5h-5z"/>
<path fill="#2800ff" d="M1010 560h5v5h-5z"/>
<path fill="#3100ff" d="M1015 560h5v5h-5z"/>
<path fill="#3900ff" d="M1020 560h5v5h-5z"/>
<path fill="#4200ff" d="M1025 560h5v5h-5z"/>
<path fill="#4b00ff" d="M1030 560h5v5h-5z"/>
<path fill="#5500ff" d="M1035 560h5v5h-5z"/>
<path fill="#5e00ff" d="M1040 560h5v5h-5z"/>
<path fill="#6800ff" d="M1045 560h5v5h-5z"/>
<path fill="#1100ff" d="M995 565h5v5h-5z"/>
<path fill="#1900ff" d="M1000 565h5v5h-5z"/>
<path fill="#2100ff" d="M1005 565h5v5h-5z"/>
<path fill="#2a00ff" d="M1010 565h5v5h-5z"/>
<path fill="#3200ff" d="M1015 565h5v5h-5z"/>
<path fill="#3b00ff" d="M1020 565h5v5h-5z"/>
<path fill="#4400ff" d="M1025 565h5v5h-5z"/>
<path fill="#4d00ff" d="M1030 565h5v5h-5z"/>
<path fill="#5600ff" d="M1035 565h5v5h-5z"/>
<path fill="#1b00ff" d="M1000 570h5v5h-5z"/>
<path fill="#2300ff" d="M1005 570h5v5h-5z"/>
<path fill="#2c00ff" d="M1010 570h5v5h-5z"/>
<path fill="#3400ff" d="M1015 570h5v5h-5z"/>
<path fill="#3d00ff" d="M1020 570h5v5h-5z"/>
<path fill="#4600ff" d="M1025 570h5v5h-5z"/>
<path fill="#2500ff" d="M1005 575h5v5h-5z"/>
<path fill="#2e00ff" d="M1010 575h5v5h-5z"/>
</g>
<path fill="#000" fill-opacity="0.41" fill-rule="evenodd" d="M880 35H1410V590H880Z M1330.06 369.34L1097.5 198.62L994.9 540.06 Z"/>
</g>
<rect x="892" y="44.8" width="409.5" height="2" fill="#a8a8a8"/>
<rect x="892" y="577.2" width="576.3" height="1.8" fill="#a8a8a8"/>
<rect x="891.8" y="44.8" width="1.2" height="534.2" fill="#b0b0b0"/>
<rect x="1467.1" y="239" width="1.2" height="340" fill="#a0a0a0"/>
<rect x="887.2" y="577.1" width="4.8" height="1.8" fill="#dcdcdc"/>
<text x="879.8" y="585.7" font-size="15.2" textLength="6.9" lengthAdjust="spacingAndGlyphs" fill="#e6e6e6" stroke="#e6e6e6" stroke-width="0.33">0</text>
<rect x="891.65" y="578.5" width="1.3" height="6.4" fill="#dcdcdc"/>
<text x="888.6" y="600.7" font-size="15.2" textLength="7.4" lengthAdjust="spacingAndGlyphs" fill="#e6e6e6" stroke="#e6e6e6" stroke-width="0.33">0</text>
<rect x="887.2" y="514.2" width="4.8" height="1.8" fill="#dcdcdc"/>
<text x="869.3" y="522.3" font-size="15.2" textLength="17.4" lengthAdjust="spacingAndGlyphs" fill="#e6e6e6" stroke="#e6e6e6" stroke-width="0.33">0,1</text>
<rect x="959.75" y="578.5" width="1.3" height="6.4" fill="#dcdcdc"/>
<text x="951.35" y="600.7" font-size="15.2" textLength="18.1" lengthAdjust="spacingAndGlyphs" fill="#e6e6e6" stroke="#e6e6e6" stroke-width="0.33">0,1</text>
<rect x="887.2" y="451.3" width="4.8" height="1.8" fill="#dcdcdc"/>
<text x="869.3" y="459.4" font-size="15.2" textLength="17.4" lengthAdjust="spacingAndGlyphs" fill="#e6e6e6" stroke="#e6e6e6" stroke-width="0.33">0,2</text>
<rect x="1028.75" y="578.5" width="1.3" height="6.4" fill="#dcdcdc"/>
<text x="1020.35" y="600.7" font-size="15.2" textLength="18.1" lengthAdjust="spacingAndGlyphs" fill="#e6e6e6" stroke="#e6e6e6" stroke-width="0.33">0,2</text>
<rect x="887.2" y="388.2" width="4.8" height="1.8" fill="#dcdcdc"/>
<text x="869.3" y="396.3" font-size="15.2" textLength="17.4" lengthAdjust="spacingAndGlyphs" fill="#e6e6e6" stroke="#e6e6e6" stroke-width="0.33">0,3</text>
<rect x="1096.55" y="578.5" width="1.3" height="6.4" fill="#dcdcdc"/>
<text x="1088.15" y="600.7" font-size="15.2" textLength="18.1" lengthAdjust="spacingAndGlyphs" fill="#e6e6e6" stroke="#e6e6e6" stroke-width="0.33">0,3</text>
<rect x="887.2" y="324.6" width="4.8" height="1.8" fill="#dcdcdc"/>
<text x="869.3" y="332.7" font-size="15.2" textLength="17.4" lengthAdjust="spacingAndGlyphs" fill="#e6e6e6" stroke="#e6e6e6" stroke-width="0.33">0,4</text>
<rect x="1165.15" y="578.5" width="1.3" height="6.4" fill="#dcdcdc"/>
<text x="1156.75" y="600.7" font-size="15.2" textLength="18.1" lengthAdjust="spacingAndGlyphs" fill="#e6e6e6" stroke="#e6e6e6" stroke-width="0.33">0,4</text>
<rect x="887.2" y="261" width="4.8" height="1.8" fill="#dcdcdc"/>
<text x="869.3" y="269.1" font-size="15.2" textLength="17.4" lengthAdjust="spacingAndGlyphs" fill="#e6e6e6" stroke="#e6e6e6" stroke-width="0.33">0,5</text>
<rect x="1233.35" y="578.5" width="1.3" height="6.4" fill="#dcdcdc"/>
<text x="1224.95" y="600.7" font-size="15.2" textLength="18.1" lengthAdjust="spacingAndGlyphs" fill="#e6e6e6" stroke="#e6e6e6" stroke-width="0.33">0,5</text>
<rect x="887.2" y="198.4" width="4.8" height="1.8" fill="#dcdcdc"/>
<text x="869.3" y="206.5" font-size="15.2" textLength="17.4" lengthAdjust="spacingAndGlyphs" fill="#e6e6e6" stroke="#e6e6e6" stroke-width="0.33">0,6</text>
<rect x="1300.95" y="578.5" width="1.3" height="6.4" fill="#dcdcdc"/>
<text x="1292.55" y="600.7" font-size="15.2" textLength="18.1" lengthAdjust="spacingAndGlyphs" fill="#e6e6e6" stroke="#e6e6e6" stroke-width="0.33">0,6</text>
<rect x="887.2" y="135.2" width="4.8" height="1.8" fill="#dcdcdc"/>
<text x="869.3" y="143.3" font-size="15.2" textLength="17.4" lengthAdjust="spacingAndGlyphs" fill="#e6e6e6" stroke="#e6e6e6" stroke-width="0.33">0,7</text>
<rect x="1369.85" y="578.5" width="1.3" height="6.4" fill="#dcdcdc"/>
<text x="1361.45" y="600.7" font-size="15.2" textLength="18.1" lengthAdjust="spacingAndGlyphs" fill="#e6e6e6" stroke="#e6e6e6" stroke-width="0.33">0,7</text>
<rect x="887.2" y="71.2" width="4.8" height="1.8" fill="#dcdcdc"/>
<text x="869.3" y="79.3" font-size="15.2" textLength="17.4" lengthAdjust="spacingAndGlyphs" fill="#e6e6e6" stroke="#e6e6e6" stroke-width="0.33">0,8</text>
<rect x="1438.85" y="578.5" width="1.3" height="6.4" fill="#dcdcdc"/>
<text x="1430.45" y="600.7" font-size="15.2" textLength="18.1" lengthAdjust="spacingAndGlyphs" fill="#e6e6e6" stroke="#e6e6e6" stroke-width="0.33">0,8</text>
<g fill="none" stroke="#fff" stroke-width="1.4">
<rect x="1090.7" y="190.7" width="11.7" height="14.6"/>
<rect x="1093.8" y="227.7" width="11.6" height="14.5"/>
<rect x="1094.7" y="260.8" width="11.6" height="14.6"/>
<rect x="1096.8" y="293.7" width="11.6" height="14.5"/>
<rect x="1098" y="327.9" width="11.8" height="14.2"/>
<rect x="1172.7" y="250.7" width="11.6" height="14.7"/>
<rect x="1156.6" y="273.8" width="12.9" height="14.9"/>
<rect x="1143.8" y="293.7" width="11.4" height="14.5"/>
<rect x="1129.8" y="316.7" width="11.5" height="14.6"/>
<rect x="1115" y="339.8" width="12" height="14.2"/>
<rect x="1143.8" y="362.8" width="11.4" height="13.1"/>
<rect x="1189.9" y="360.7" width="11.4" height="14.7"/>
<rect x="1230.7" y="360.7" width="11.6" height="14.2"/>
<rect x="1273.6" y="360.7" width="12.7" height="14.2"/>
<rect x="1323.6" y="360.7" width="11.6" height="14.2"/>
<rect x="1101.9" y="383.8" width="11.4" height="14.5"/>
<rect x="1102.7" y="406.8" width="11.6" height="14.3"/>
<rect x="1102.7" y="426.7" width="11.6" height="14.6"/>
<rect x="1103.9" y="449.8" width="12.1" height="14.5"/>
<rect x="1105.7" y="472.8" width="11.7" height="14.3"/>
<rect x="1077.7" y="396.7" width="11.8" height="14.7"/>
<rect x="1055.7" y="429.8" width="11.6" height="14.4"/>
<rect x="1033.6" y="462.9" width="12.7" height="14.4"/>
<rect x="1012.8" y="495.9" width="11.4" height="14.4"/>
<rect x="988.9" y="532.9" width="11.3" height="14.4"/>
<rect x="1039.8" y="362.9" width="10.8" height="13.1"/>
<rect x="1053.2" y="362.9" width="11.1" height="13.1"/>
<rect x="1065.2" y="362.9" width="11.1" height="13.1"/>
<rect x="1077.3" y="362.9" width="11" height="13.1"/>
<rect x="1088.1" y="362.9" width="11.2" height="13.1"/>
</g>
<g stroke="#000" stroke-width="1.1">
<ellipse cx="1113.5" cy="194.9" rx="3.6" ry="4.5" fill="#00c000"/>
<ellipse cx="1112.5" cy="234" rx="3.6" ry="4.5" fill="#50b850"/>
<ellipse cx="1110" cy="268" rx="3.6" ry="4.5" fill="#68b868"/>
<ellipse cx="1109" cy="301" rx="3.6" ry="4.5" fill="#78b878"/>
<ellipse cx="1107.6" cy="334.9" rx="3.6" ry="4.5" fill="#90b890"/>
<ellipse cx="1177.6" cy="245.8" rx="3.6" ry="4.5" fill="#c0b800"/>
<ellipse cx="1161.9" cy="273.9" rx="3.6" ry="4.5" fill="#b8b850"/>
<ellipse cx="1147.5" cy="296.9" rx="3.6" ry="4.5" fill="#b8b860"/>
<ellipse cx="1132.9" cy="320.9" rx="3.6" ry="4.5" fill="#b8b878"/>
<ellipse cx="1119.5" cy="344.9" rx="3.6" ry="4.5" fill="#b0b090"/>
<ellipse cx="1141.4" cy="366.9" rx="3.6" ry="4.5" fill="#b88080"/>
<ellipse cx="1180.9" cy="364.8" rx="3.6" ry="4.5" fill="#c06060"/>
<ellipse cx="1222.1" cy="364.9" rx="3.6" ry="4.5" fill="#c05050"/>
<ellipse cx="1268" cy="363.9" rx="3.6" ry="4.5" fill="#c03838"/>
<ellipse cx="1320.8" cy="361.8" rx="3.6" ry="4.5" fill="#b00000"/>
<ellipse cx="1104.8" cy="390.5" rx="3.6" ry="4.5" fill="#b898b8"/>
<ellipse cx="1103.9" cy="414" rx="3.6" ry="4.5" fill="#b880b8"/>
<ellipse cx="1102.9" cy="437.1" rx="3.6" ry="4.5" fill="#b860b8"/>
<ellipse cx="1101.5" cy="462.8" rx="3.6" ry="4.5" fill="#b848b8"/>
<ellipse cx="1100.4" cy="490.8" rx="3.6" ry="4.5" fill="#b800b0"/>
<ellipse cx="1085.9" cy="402.5" rx="3.6" ry="4.5" fill="#9898b8"/>
<ellipse cx="1065.4" cy="437.1" rx="3.6" ry="4.5" fill="#8080b8"/>
<ellipse cx="1043.4" cy="473" rx="3.6" ry="4.5" fill="#6060b8"/>
<ellipse cx="1022.9" cy="507.5" rx="3.6" ry="4.5" fill="#4040b8"/>
<ellipse cx="998" cy="549.8" rx="3.6" ry="4.5" fill="#0000b8"/>
<ellipse cx="1056.9" cy="369.8" rx="3.6" ry="4.5" fill="#00b0b0"/>
<ellipse cx="1068" cy="367.9" rx="3.6" ry="4.5" fill="#50b8b8"/>
<ellipse cx="1077.5" cy="367.9" rx="3.6" ry="4.5" fill="#70b8b8"/>
<ellipse cx="1086.9" cy="367.9" rx="3.6" ry="4.5" fill="#88b8b8"/>
<ellipse cx="1097.1" cy="367.9" rx="3.6" ry="4.5" fill="#98b8b8"/>
</g>
<rect x="1101.0" y="363.1" width="11.1" height="12.8" fill="none" stroke="#000" stroke-width="1.5"/>
<ellipse cx="1105" cy="367.8" rx="3.6" ry="4.5" fill="#fff" stroke="#000" stroke-width="1.1"/>
<rect x="1303.4" y="46.6" width="164.4" height="193.2" fill="#959595"/>
<rect x="1304.4" y="47.6" width="162.4" height="191.2" fill="url(#ins)"/>
<rect x="1304.4" y="47.6" width="162.4" height="191.2" fill="url(#ins2)"/>
<path d="M1304.4 65.7L1466.8 220.4V47.6H1304.4Z" fill="#000" fill-opacity="0.40"/>
<rect x="1378.9" y="136" width="12.3" height="13.1" fill="none" stroke="#fff" stroke-width="1.4"/>
<ellipse cx="1379" cy="74.9" rx="3.6" ry="4.5" fill="#c8b800" stroke="#000" stroke-width="1.1"/>
<path d="M1303.9 236.6L1306.6 239.3" stroke="#000" stroke-width="1.2"/>
<rect x="877" y="623.8" width="438.8" height="33" fill="url(#g37)"/>
<rect x="862" y="623.8" width="15" height="33" fill="#000"/>
<text x="1004.4" y="646.5" font-size="17.3" textLength="30.4" lengthAdjust="spacingAndGlyphs" fill="#f4f4f4" stroke="#f4f4f4" stroke-width="0.15">20%</text>
<text x="1067.6" y="646.5" font-size="17.3" textLength="30.4" lengthAdjust="spacingAndGlyphs" fill="#f4f4f4" stroke="#f4f4f4" stroke-width="0.15">40%</text>
<text x="1130.8" y="646.5" font-size="17.3" textLength="30.4" lengthAdjust="spacingAndGlyphs" fill="#f4f4f4" stroke="#f4f4f4" stroke-width="0.15">60%</text>
<text x="1194" y="646.5" font-size="17.3" textLength="30.4" lengthAdjust="spacingAndGlyphs" fill="#f4f4f4" stroke="#f4f4f4" stroke-width="0.15">80%</text>
<text x="1257.6" y="646.5" font-size="17.3" textLength="39.5" lengthAdjust="spacingAndGlyphs" fill="#f4f4f4" stroke="#f4f4f4" stroke-width="0.15">100%</text>
<rect x="877" y="656.8" width="438.8" height="29.9" fill="#404040"/>
<rect x="862" y="656.8" width="15" height="29.9" fill="url(#g38)"/>
<text x="882.2" y="678.6" font-size="17.3" textLength="60" lengthAdjust="spacingAndGlyphs" fill="#f4f4f4" stroke="#f4f4f4" stroke-width="0.15">x: CIE31</text>
<text x="1004.4" y="678.6" font-size="17.3" textLength="32" lengthAdjust="spacingAndGlyphs" fill="#f4f4f4" stroke="#f4f4f4" stroke-width="0.15">0,33</text>
<text x="1067.6" y="678.6" font-size="17.3" textLength="32" lengthAdjust="spacingAndGlyphs" fill="#f4f4f4" stroke="#f4f4f4" stroke-width="0.15">0,35</text>
<text x="1130.8" y="678.6" font-size="17.3" textLength="32" lengthAdjust="spacingAndGlyphs" fill="#f4f4f4" stroke="#f4f4f4" stroke-width="0.15">0,37</text>
<text x="1194" y="678.6" font-size="17.3" textLength="32" lengthAdjust="spacingAndGlyphs" fill="#f4f4f4" stroke="#f4f4f4" stroke-width="0.15">0,39</text>
<text x="1257.6" y="678.6" font-size="17.3" textLength="32" lengthAdjust="spacingAndGlyphs" fill="#f4f4f4" stroke="#f4f4f4" stroke-width="0.15">0,42</text>
<rect x="877" y="686.7" width="438.8" height="30" fill="#808080"/>
<rect x="862" y="686.7" width="15" height="30" fill="url(#g38)"/>
<text x="882.2" y="708.5" font-size="17.3" textLength="60" lengthAdjust="spacingAndGlyphs" fill="#f4f4f4" stroke="#f4f4f4" stroke-width="0.15">y: CIE31</text>
<text x="1004.4" y="708.5" font-size="17.3" textLength="32" lengthAdjust="spacingAndGlyphs" fill="#f4f4f4" stroke="#f4f4f4" stroke-width="0.15">0,37</text>
<text x="1067.6" y="708.5" font-size="17.3" textLength="32" lengthAdjust="spacingAndGlyphs" fill="#f4f4f4" stroke="#f4f4f4" stroke-width="0.15">0,40</text>
<text x="1130.8" y="708.5" font-size="17.3" textLength="32" lengthAdjust="spacingAndGlyphs" fill="#f4f4f4" stroke="#f4f4f4" stroke-width="0.15">0,44</text>
<text x="1194" y="708.5" font-size="17.3" textLength="32" lengthAdjust="spacingAndGlyphs" fill="#f4f4f4" stroke="#f4f4f4" stroke-width="0.15">0,48</text>
<text x="1257.6" y="708.5" font-size="17.3" textLength="32" lengthAdjust="spacingAndGlyphs" fill="#f4f4f4" stroke="#f4f4f4" stroke-width="0.15">0,52</text>
<rect x="877" y="716.7" width="438.8" height="29.7" fill="#404040"/>
<rect x="862" y="716.7" width="15" height="29.7" fill="url(#g38)"/>
<text x="882.2" y="738.5" font-size="17.3" textLength="10.2" lengthAdjust="spacingAndGlyphs" fill="#f4f4f4" stroke="#f4f4f4" stroke-width="0.15">Y</text>
<text x="1005.4" y="738.5" font-size="17.3" textLength="51" lengthAdjust="spacingAndGlyphs" fill="#f4f4f4" stroke="#f4f4f4" stroke-width="0.15">142,20</text>
<text x="1068.6" y="738.5" font-size="17.3" textLength="51" lengthAdjust="spacingAndGlyphs" fill="#f4f4f4" stroke="#f4f4f4" stroke-width="0.15">140,38</text>
<text x="1131.8" y="738.5" font-size="17.3" textLength="51" lengthAdjust="spacingAndGlyphs" fill="#f4f4f4" stroke="#f4f4f4" stroke-width="0.15">138,84</text>
<text x="1195" y="738.5" font-size="17.3" textLength="51" lengthAdjust="spacingAndGlyphs" fill="#f4f4f4" stroke="#f4f4f4" stroke-width="0.15">137,58</text>
<text x="1258.6" y="738.5" font-size="17.3" textLength="51" lengthAdjust="spacingAndGlyphs" fill="#f4f4f4" stroke="#f4f4f4" stroke-width="0.15">135,70</text>
<rect x="877" y="746.4" width="438.8" height="29.7" fill="#808080"/>
<rect x="862" y="746.4" width="15" height="29.7" fill="url(#g38)"/>
<text x="882.2" y="768.2" font-size="17.3" textLength="109.5" lengthAdjust="spacingAndGlyphs" fill="#f4f4f4" stroke="#f4f4f4" stroke-width="0.15">Target x:CIE31</text>
<text x="1004.4" y="768.2" font-size="17.3" textLength="32" lengthAdjust="spacingAndGlyphs" fill="#f4f4f4" stroke="#f4f4f4" stroke-width="0.15">0,33</text>
<text x="1067.6" y="768.2" font-size="17.3" textLength="32" lengthAdjust="spacingAndGlyphs" fill="#f4f4f4" stroke="#f4f4f4" stroke-width="0.15">0,36</text>
<text x="1130.8" y="768.2" font-size="17.3" textLength="32" lengthAdjust="spacingAndGlyphs" fill="#f4f4f4" stroke="#f4f4f4" stroke-width="0.15">0,38</text>
<text x="1194" y="768.2" font-size="17.3" textLength="32" lengthAdjust="spacingAndGlyphs" fill="#f4f4f4" stroke="#f4f4f4" stroke-width="0.15">0,40</text>
<text x="1257.6" y="768.2" font-size="17.3" textLength="32" lengthAdjust="spacingAndGlyphs" fill="#f4f4f4" stroke="#f4f4f4" stroke-width="0.15">0,42</text>
<rect x="877" y="776.1" width="438.8" height="29.8" fill="#404040"/>
<rect x="862" y="776.1" width="15" height="29.8" fill="url(#g38)"/>
<text x="882.2" y="797.9" font-size="17.3" textLength="109.5" lengthAdjust="spacingAndGlyphs" fill="#f4f4f4" stroke="#f4f4f4" stroke-width="0.15">Target y:CIE31</text>
<text x="1004.4" y="797.9" font-size="17.3" textLength="32" lengthAdjust="spacingAndGlyphs" fill="#f4f4f4" stroke="#f4f4f4" stroke-width="0.15">0,36</text>
<text x="1067.6" y="797.9" font-size="17.3" textLength="32" lengthAdjust="spacingAndGlyphs" fill="#f4f4f4" stroke="#f4f4f4" stroke-width="0.15">0,40</text>
<text x="1130.8" y="797.9" font-size="17.3" textLength="32" lengthAdjust="spacingAndGlyphs" fill="#f4f4f4" stroke="#f4f4f4" stroke-width="0.15">0,44</text>
<text x="1194" y="797.9" font-size="17.3" textLength="32" lengthAdjust="spacingAndGlyphs" fill="#f4f4f4" stroke="#f4f4f4" stroke-width="0.15">0,47</text>
<text x="1257.6" y="797.9" font-size="17.3" textLength="32" lengthAdjust="spacingAndGlyphs" fill="#f4f4f4" stroke="#f4f4f4" stroke-width="0.15">0,51</text>
<rect x="877" y="805.9" width="438.8" height="29.5" fill="#808080"/>
<rect x="862" y="805.9" width="15" height="29.5" fill="url(#g38)"/>
<text x="882.2" y="827.7" font-size="17.3" textLength="63" lengthAdjust="spacingAndGlyphs" fill="#f4f4f4" stroke="#f4f4f4" stroke-width="0.15">Target Y</text>
<text x="1005.4" y="827.7" font-size="17.3" textLength="51" lengthAdjust="spacingAndGlyphs" fill="#f4f4f4" stroke="#f4f4f4" stroke-width="0.15">132,06</text>
<text x="1068.6" y="827.7" font-size="17.3" textLength="51" lengthAdjust="spacingAndGlyphs" fill="#f4f4f4" stroke="#f4f4f4" stroke-width="0.15">129,74</text>
<text x="1131.8" y="827.7" font-size="17.3" textLength="51" lengthAdjust="spacingAndGlyphs" fill="#f4f4f4" stroke="#f4f4f4" stroke-width="0.15">127,96</text>
<text x="1195" y="827.7" font-size="17.3" textLength="51" lengthAdjust="spacingAndGlyphs" fill="#f4f4f4" stroke="#f4f4f4" stroke-width="0.15">126,56</text>
<text x="1258.6" y="827.7" font-size="17.3" textLength="51" lengthAdjust="spacingAndGlyphs" fill="#f4f4f4" stroke="#f4f4f4" stroke-width="0.15">125,21</text>
</svg>
</body></html>
